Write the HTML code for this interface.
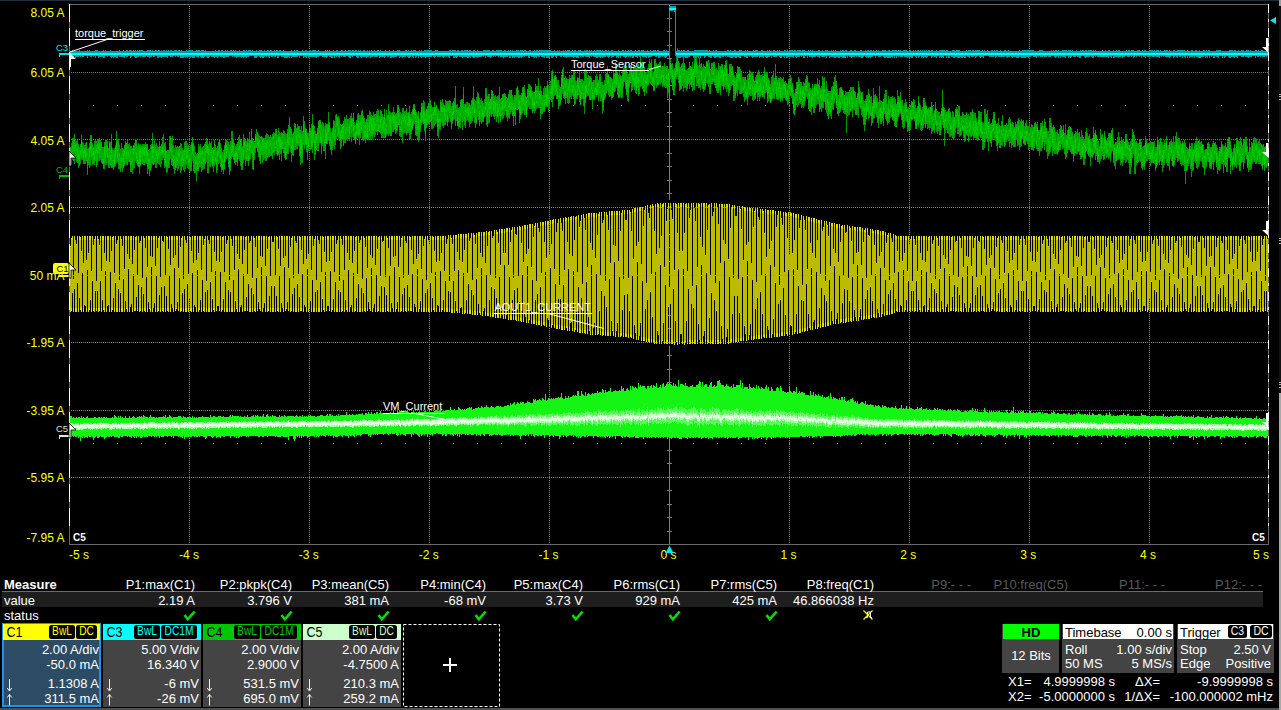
<!DOCTYPE html>
<html><head><meta charset="utf-8"><style>
html,body{margin:0;padding:0;background:#000;width:1281px;height:710px;overflow:hidden}
svg{position:absolute;left:0;top:0;display:block}
text{font-family:"Liberation Sans",sans-serif}
</style></head><body>
<svg width="1281" height="710" viewBox="0 0 1281 710">
<g shape-rendering="crispEdges">
<rect x="0" y="0" width="1281" height="1" fill="#1e2d3f"/>
<path d="M189.5 6V544M309.5 6V544M429.5 6V544M549.5 6V544M789.5 6V544M909.5 6V544M1029.5 6V544M1149.5 6V544M71 72.5H1268M71 139.5H1268M71 207.5H1268M71 275.5H1268M71 342.5H1268M71 410.5H1268M71 477.5H1268" stroke="#7a7a7a" stroke-width="1" stroke-dasharray="1 1" fill="none"/>
<path d="M93 105.5H1268M93 443.5H1268" stroke="#7a7a7a" stroke-width="1" stroke-dasharray="1 23" fill="none"/>
<path d="M669 4h1v196h-1zM669 346h1v198h-1zM667 18h5v1h-5zM667 31h5v1h-5zM667 45h5v1h-5zM667 58h5v1h-5zM667 72h5v1h-5zM667 85h5v1h-5zM667 99h5v1h-5zM667 112h5v1h-5zM667 126h5v1h-5zM667 139h5v1h-5zM667 153h5v1h-5zM667 166h5v1h-5zM667 180h5v1h-5zM667 193h5v1h-5zM667 207h5v1h-5zM667 220h5v1h-5zM667 234h5v1h-5zM667 247h5v1h-5zM667 261h5v1h-5zM667 274h5v1h-5zM667 288h5v1h-5zM667 301h5v1h-5zM667 315h5v1h-5zM667 328h5v1h-5zM667 342h5v1h-5zM667 355h5v1h-5zM667 369h5v1h-5zM667 382h5v1h-5zM667 396h5v1h-5zM667 409h5v1h-5zM667 423h5v1h-5zM667 436h5v1h-5zM667 450h5v1h-5zM667 463h5v1h-5zM667 477h5v1h-5zM667 490h5v1h-5zM667 504h5v1h-5zM667 517h5v1h-5zM667 531h5v1h-5z" fill="#7a7a7a"/>
<path d="M69 4h1200v1h-1200zM69 544h1200v1h-1200zM69 4h1v541h-1zM1268 4h1v541h-1z" fill="#6a6a6a"/>
<path d="M70.5 158v5M71.5 143v5M71.5 163v2M72.5 138v3M72.5 157v3M73.5 138v1M73.5 155v6M74.5 134v6M74.5 154v10M75.5 140v3M75.5 158v2M76.5 141v2M76.5 157v5M77.5 140v1M77.5 161v2M78.5 144v2M78.5 163v5M79.5 147v3M79.5 165v1M80.5 144v1M80.5 158v6M81.5 135v3M81.5 159v1M82.5 142v4M82.5 159v1M83.5 143v7M83.5 162v2M84.5 145v2M84.5 161v3M85.5 143v2M85.5 160v4M86.5 142v1M87.5 149v4M87.5 169v6M88.5 148v1M88.5 163v2M89.5 143v4M89.5 160v8M90.5 135v1M90.5 153v13M91.5 135v3M91.5 158v2M92.5 143v1M92.5 164v1M93.5 147v1M93.5 163v1M94.5 141v3M94.5 162v3M95.5 140v5M95.5 155v6M96.5 141v4M96.5 165v2M97.5 140v4M97.5 162v3M98.5 139v2M98.5 154v7M99.5 138v1M99.5 158v3M100.5 140v3M100.5 158v2M101.5 142v1M101.5 162v1M102.5 147v6M103.5 147v2M103.5 168v1M104.5 142v4M104.5 162v7M105.5 139v4M105.5 144v2M105.5 161v4M106.5 140v1M106.5 154v11M107.5 141v3M107.5 158v5M108.5 148v1M108.5 165v3M109.5 141v2M109.5 164v4M110.5 142v8M110.5 165v1M111.5 134v7M111.5 167v1M112.5 148v2M112.5 167v1M113.5 150v2M113.5 167v3M114.5 148v2M114.5 166v1M115.5 145v1M115.5 164v2M116.5 131v10M116.5 154v9M117.5 139v8M118.5 139v3M118.5 164v5M119.5 145v8M119.5 165v4M120.5 149v6M120.5 169v3M121.5 143v10M121.5 167v1M122.5 148v1M122.5 162v10M123.5 149v1M124.5 145v1M124.5 165v1M125.5 141v1M125.5 159v5M126.5 161v4M127.5 140v2M127.5 164v1M128.5 144v2M128.5 160v2M129.5 143v10M130.5 146v1M130.5 166v6M131.5 146v1M131.5 166v6M132.5 148v1M132.5 167v7M133.5 161v8M134.5 143v3M134.5 161v7M135.5 139v1M135.5 156v5M136.5 140v4M136.5 159v4M137.5 146v2M137.5 164v2M138.5 143v1M138.5 166v1M139.5 145v2M139.5 167v7M140.5 144v1M140.5 165v1M141.5 146v3M141.5 160v4M142.5 144v2M142.5 162v2M143.5 144v3M143.5 163v2M144.5 144v2M145.5 142v3M145.5 162v1M146.5 144v1M146.5 162v2M147.5 144v1M147.5 167v7M148.5 150v3M148.5 168v1M149.5 149v5M149.5 174v2M150.5 145v6M150.5 170v1M151.5 144v2M151.5 161v7M152.5 133v7M153.5 144v2M154.5 140v7M154.5 161v3M155.5 145v1M155.5 162v6M156.5 143v6M156.5 162v6M157.5 146v3M157.5 162v1M158.5 160v4M159.5 141v6M159.5 158v7M160.5 146v1M160.5 157v10M161.5 144v2M161.5 155v9M162.5 137v6M162.5 154v6M163.5 134v11M163.5 157v1M164.5 143v2M164.5 165v3M165.5 142v5M165.5 166v1M166.5 170v3M167.5 150v1M167.5 167v5M168.5 165v3M169.5 136v7M169.5 159v9M170.5 136v2M170.5 153v6M171.5 138v5M171.5 162v3M172.5 136v9M172.5 162v4M173.5 145v10M173.5 166v3M174.5 148v7M174.5 167v7M175.5 145v7M176.5 147v1M176.5 166v2M177.5 146v5M177.5 165v6M178.5 147v1M178.5 164v5M179.5 146v1M179.5 162v4M180.5 143v8M180.5 166v5M180.5 172v1M181.5 144v8M181.5 170v1M182.5 148v2M182.5 166v1M183.5 150v1M183.5 165v5M184.5 142v7M184.5 164v8M185.5 141v3M185.5 145v1M185.5 162v7M186.5 141v7M186.5 160v5M187.5 143v6M187.5 160v7M188.5 145v2M188.5 166v3M189.5 152v2M189.5 169v3M190.5 145v7M190.5 170v1M191.5 142v2M191.5 167v4M192.5 137v3M192.5 154v7M193.5 163v8M194.5 146v10M194.5 172v1M195.5 152v4M195.5 165v8M196.5 154v2M196.5 171v10M197.5 153v2M197.5 170v1M198.5 144v6M198.5 169v2M199.5 146v4M199.5 166v1M200.5 144v4M200.5 163v4M201.5 148v3M201.5 168v4M202.5 147v2M202.5 164v6M203.5 146v5M203.5 165v4M204.5 144v5M204.5 167v2M205.5 142v2M206.5 138v4M206.5 153v9M207.5 140v6M207.5 160v13M208.5 144v3M208.5 164v9M209.5 141v7M209.5 158v9M210.5 143v1M210.5 162v5M211.5 141v7M211.5 162v3M212.5 166v1M213.5 147v3M213.5 164v8M214.5 140v3M214.5 162v4M215.5 145v3M216.5 148v3M216.5 172v1M217.5 146v5M217.5 162v8M218.5 142v1M218.5 156v8M219.5 158v5M220.5 143v7M220.5 160v5M220.5 166v1M221.5 168v4M222.5 152v6M223.5 150v5M223.5 172v2M224.5 145v2M225.5 140v2M225.5 161v1M226.5 140v4M226.5 157v2M227.5 141v3M227.5 153v5M228.5 142v7M228.5 164v3M229.5 145v7M229.5 171v4M230.5 141v5M230.5 168v3M231.5 131v12M231.5 156v3M232.5 131v8M232.5 155v2M233.5 159v1M234.5 143v9M234.5 162v1M235.5 146v2M235.5 163v2M236.5 144v3M237.5 142v2M237.5 163v3M238.5 137v5M238.5 153v6M239.5 135v8M239.5 155v6M240.5 162v4M241.5 140v7M241.5 166v4M242.5 146v1M242.5 167v3M243.5 134v6M243.5 161v2M244.5 154v6M245.5 139v2M245.5 159v7M246.5 141v4M246.5 160v1M247.5 159v2M248.5 139v4M248.5 162v4M249.5 132v7M249.5 159v2M250.5 140v1M250.5 153v6M251.5 129v3M251.5 153v1M252.5 138v2M252.5 157v12M253.5 141v1M253.5 169v1M254.5 153v7M255.5 148v5M256.5 129v8M256.5 147v1M257.5 132v1M257.5 151v1M258.5 134v3M258.5 155v2M259.5 136v4M259.5 158v3M260.5 137v6M260.5 162v2M261.5 136v1M261.5 154v1M262.5 137v1M262.5 155v8M263.5 138v1M263.5 157v3M264.5 138v3M264.5 154v5M265.5 135v3M265.5 158v3M266.5 133v7M266.5 158v3M267.5 134v6M267.5 149v9M268.5 135v7M268.5 155v2M269.5 137v1M269.5 155v2M270.5 135v2M270.5 149v7M271.5 137v4M271.5 155v1M272.5 134v3M272.5 154v5M273.5 132v2M273.5 152v1M274.5 133v3M274.5 152v3M275.5 129v3M275.5 149v2M276.5 129v2M276.5 151v3M277.5 135v3M278.5 128v8M278.5 153v2M279.5 132v4M279.5 153v7M280.5 133v4M280.5 150v4M281.5 132v2M281.5 153v8M282.5 133v1M283.5 130v4M283.5 146v7M284.5 131v6M284.5 153v5M285.5 133v5M285.5 159v1M286.5 134v5M286.5 155v4M287.5 129v3M287.5 153v1M288.5 125v6M288.5 145v9M289.5 117v10M289.5 146v2M290.5 127v1M290.5 149v3M291.5 129v1M291.5 153v9M292.5 134v3M293.5 132v1M293.5 152v4M294.5 123v6M294.5 142v8M295.5 147v3M296.5 128v1M296.5 145v4M297.5 124v4M297.5 143v6M298.5 126v1M298.5 143v3M299.5 126v4M299.5 146v10M300.5 130v3M300.5 157v8M301.5 126v13M301.5 158v5M302.5 131v3M302.5 154v9M303.5 116v4M303.5 121v3M303.5 144v1M304.5 121v5M304.5 143v1M304.5 145v4M305.5 144v1M306.5 129v1M306.5 145v7M307.5 133v1M307.5 154v6M308.5 133v4M308.5 147v4M309.5 124v1M309.5 142v4M310.5 128v2M310.5 142v8M311.5 124v8M311.5 148v1M312.5 114v9M312.5 147v6M313.5 142v1M314.5 126v12M314.5 150v10M315.5 131v3M315.5 151v4M316.5 143v7M317.5 145v6M318.5 121v1M318.5 146v5M319.5 134v9M320.5 120v2M321.5 124v2M321.5 148v6M322.5 122v7M322.5 144v2M323.5 123v3M323.5 142v9M324.5 126v9M324.5 148v3M325.5 123v3M325.5 146v13M327.5 124v1M327.5 142v2M328.5 112v11M328.5 139v2M329.5 122v1M329.5 144v2M330.5 128v5M330.5 149v1M331.5 132v5M331.5 151v4M332.5 128v2M332.5 143v7M333.5 120v2M333.5 137v9M334.5 121v9M334.5 141v8M335.5 115v10M335.5 139v6M336.5 114v1M336.5 128v11M338.5 116v6M338.5 137v2M339.5 118v3M339.5 138v3M340.5 124v6M340.5 140v9M341.5 143v4M342.5 124v1M342.5 139v1M343.5 121v2M343.5 145v1M344.5 117v7M344.5 139v4M345.5 140v3M346.5 115v7M346.5 137v3M347.5 119v1M347.5 132v9M348.5 119v5M349.5 118v3M349.5 139v2M350.5 116v4M350.5 130v7M351.5 113v6M351.5 133v9M352.5 118v1M352.5 131v6M353.5 113v1M353.5 136v2M354.5 122v2M354.5 139v1M355.5 125v6M355.5 142v2M356.5 120v2M356.5 136v3M357.5 114v5M357.5 135v2M358.5 113v3M358.5 136v2M359.5 115v7M359.5 136v9M360.5 115v4M361.5 111v2M361.5 131v2M362.5 110v1M362.5 131v9M363.5 116v4M363.5 140v1M364.5 118v2M364.5 138v2M365.5 139v4M366.5 119v1M367.5 115v4M367.5 138v1M368.5 115v5M368.5 139v1M369.5 111v6M369.5 132v6M370.5 112v5M370.5 137v3M371.5 115v2M371.5 134v2M372.5 116v1M372.5 136v3M373.5 112v4M373.5 134v1M374.5 114v4M374.5 133v4M375.5 114v3M375.5 131v4M376.5 111v4M376.5 131v1M377.5 109v6M377.5 132v3M378.5 110v5M379.5 116v8M379.5 130v2M380.5 110v8M380.5 133v1M381.5 135v3M382.5 114v2M382.5 133v5M383.5 117v1M383.5 134v4M384.5 109v5M384.5 134v4M385.5 118v5M386.5 110v13M386.5 134v2M387.5 126v8M388.5 104v10M388.5 133v3M389.5 111v6M389.5 130v4M390.5 112v3M391.5 113v2M392.5 112v1M392.5 124v8M393.5 107v5M393.5 130v2M394.5 112v4M394.5 129v1M395.5 114v1M395.5 129v5M396.5 113v1M396.5 131v2M397.5 105v3M397.5 130v1M398.5 105v2M399.5 109v8M399.5 129v7M400.5 112v4M400.5 132v5M401.5 132v5M402.5 108v5M402.5 133v10M403.5 108v6M403.5 129v5M404.5 111v2M404.5 129v4M405.5 111v3M405.5 131v2M406.5 108v4M406.5 133v2M407.5 113v3M407.5 131v2M408.5 112v1M408.5 130v3M409.5 106v7M409.5 130v9M410.5 114v2M410.5 134v5M411.5 112v7M411.5 131v3M412.5 109v2M412.5 129v1M413.5 104v1M413.5 125v1M414.5 104v2M414.5 118v6M415.5 128v7M416.5 112v1M416.5 134v2M417.5 114v3M417.5 136v3M418.5 111v5M418.5 134v8M419.5 119v3M419.5 137v2M420.5 112v1M420.5 130v2M421.5 103v4M421.5 122v3M422.5 103v4M422.5 122v1M423.5 100v6M424.5 102v6M424.5 130v1M425.5 111v7M425.5 133v8M427.5 123v2M428.5 103v1M429.5 98v5M429.5 124v1M430.5 100v4M430.5 121v1M431.5 105v2M431.5 125v4M432.5 107v1M432.5 119v10M433.5 107v1M433.5 125v3M434.5 105v2M434.5 120v6M436.5 121v2M437.5 108v4M437.5 127v9M438.5 109v1M438.5 132v6M439.5 111v6M439.5 126v3M440.5 100v2M440.5 125v5M441.5 102v2M441.5 120v3M442.5 99v7M442.5 122v4M443.5 103v1M443.5 126v2M444.5 105v2M444.5 122v3M445.5 100v6M445.5 124v1M446.5 101v3M446.5 121v1M448.5 102v2M448.5 112v10M449.5 100v1M449.5 117v1M450.5 101v7M450.5 121v1M451.5 106v2M451.5 128v1M452.5 103v3M452.5 121v3M453.5 101v1M453.5 118v2M454.5 98v4M454.5 112v7M455.5 86v12M455.5 121v5M456.5 105v4M456.5 115v6M457.5 104v5M458.5 108v2M458.5 127v2M459.5 107v1M459.5 124v3M460.5 100v2M460.5 120v8M461.5 99v1M461.5 114v8M462.5 99v2M462.5 120v10M463.5 87v8M463.5 120v1M464.5 104v3M464.5 120v5M465.5 126v2M466.5 102v6M466.5 117v4M467.5 102v6M467.5 118v2M468.5 103v3M468.5 121v1M469.5 103v1M469.5 120v7M470.5 105v2M470.5 121v3M471.5 100v4M471.5 116v7M472.5 98v2M472.5 115v6M473.5 86v10M473.5 114v4M474.5 99v5M474.5 118v5M475.5 101v2M475.5 122v6M476.5 97v13M476.5 123v1M477.5 92v9M477.5 112v5M478.5 93v3M478.5 116v4M479.5 98v5M479.5 125v1M480.5 100v5M480.5 119v3M481.5 98v3M481.5 117v7M482.5 101v2M482.5 121v1M483.5 103v3M483.5 121v1M484.5 99v7M485.5 88v6M485.5 112v4M486.5 88v7M486.5 115v10M487.5 96v4M487.5 125v2M488.5 94v2M488.5 113v10M489.5 94v5M489.5 120v3M490.5 113v2M491.5 116v1M493.5 94v5M493.5 116v1M494.5 96v2M494.5 116v3M495.5 95v6M496.5 97v3M496.5 116v6M497.5 96v6M497.5 117v1M498.5 95v2M498.5 116v7M499.5 87v12M500.5 99v4M500.5 121v1M501.5 116v1M502.5 94v1M502.5 115v4M503.5 109v9M504.5 93v2M504.5 110v5M505.5 94v2M505.5 110v1M506.5 97v3M506.5 115v2M507.5 116v5M508.5 94v1M508.5 115v3M509.5 110v9M510.5 90v4M510.5 110v4M511.5 111v1M512.5 95v3M512.5 115v1M513.5 100v1M513.5 118v8M514.5 95v2M515.5 95v2M515.5 117v8M516.5 88v1M516.5 107v3M517.5 86v1M517.5 102v8M518.5 90v5M519.5 95v1M519.5 113v3M519.5 117v6M520.5 95v2M520.5 116v3M521.5 93v2M521.5 113v2M522.5 87v2M522.5 112v1M523.5 87v1M523.5 107v4M524.5 85v4M524.5 113v2M525.5 93v3M525.5 110v5M527.5 89v2M527.5 107v3M528.5 84v6M528.5 104v3M529.5 84v4M529.5 89v1M529.5 96v13M530.5 85v2M530.5 99v10M531.5 108v1M532.5 91v1M532.5 111v2M533.5 92v2M533.5 108v3M534.5 111v2M535.5 84v4M535.5 108v3M536.5 86v4M536.5 104v5M537.5 86v4M537.5 105v3M538.5 78v8M538.5 87v1M538.5 106v2M539.5 102v6M540.5 86v5M540.5 113v6M541.5 111v3M542.5 113v1M543.5 88v4M543.5 111v1M544.5 86v8M544.5 110v2M545.5 106v1M546.5 86v2M546.5 106v1M547.5 81v4M548.5 85v5M548.5 103v9M549.5 87v2M549.5 104v5M550.5 81v7M550.5 96v4M551.5 71v8M551.5 100v2M552.5 70v1M552.5 99v8M553.5 79v1M554.5 76v1M554.5 92v4M555.5 94v1M556.5 77v5M556.5 98v1M557.5 80v4M558.5 80v13M558.5 104v5M559.5 85v4M559.5 105v1M560.5 103v2M561.5 75v3M561.5 95v5M562.5 69v1M562.5 89v5M563.5 67v15M563.5 94v4M564.5 96v3M565.5 76v4M565.5 98v6M566.5 95v3M567.5 79v6M567.5 99v4M568.5 79v4M568.5 92v12M569.5 75v3M569.5 98v5M570.5 78v1M570.5 95v2M571.5 75v3M571.5 93v6M572.5 75v1M572.5 94v2M573.5 70v8M573.5 97v2M574.5 70v7M574.5 104v1M575.5 80v2M575.5 98v6M576.5 81v4M576.5 97v2M577.5 77v1M577.5 96v3M578.5 78v3M578.5 90v5M579.5 71v5M579.5 97v5M580.5 79v1M581.5 79v10M581.5 98v1M582.5 79v2M582.5 97v2M583.5 81v2M583.5 99v7M584.5 69v12M584.5 106v8M585.5 69v6M585.5 102v1M586.5 70v9M586.5 94v3M587.5 94v2M588.5 95v1M589.5 76v3M589.5 98v2M590.5 76v1M591.5 78v4M591.5 96v4M592.5 82v1M592.5 99v10M593.5 80v2M593.5 99v1M594.5 80v7M594.5 99v1M595.5 76v3M595.5 92v3M596.5 74v7M596.5 95v2M597.5 76v3M598.5 80v1M598.5 99v2M599.5 74v3M599.5 94v2M600.5 74v3M600.5 94v7M601.5 82v7M601.5 98v3M602.5 82v3M602.5 108v6M603.5 85v1M603.5 104v2M603.5 107v4M604.5 80v5M604.5 98v2M605.5 74v10M605.5 96v2M606.5 73v2M606.5 93v1M607.5 66v6M607.5 86v5M608.5 74v1M608.5 92v3M609.5 77v2M609.5 96v1M610.5 95v1M611.5 78v1M611.5 98v2M612.5 79v3M612.5 97v1M613.5 70v4M613.5 92v5M614.5 73v1M615.5 62v3M615.5 87v4M616.5 65v2M616.5 87v1M617.5 72v1M617.5 91v4M618.5 75v5M618.5 97v1M619.5 71v5M619.5 96v2M620.5 75v1M620.5 91v6M621.5 76v3M621.5 95v3M622.5 71v4M622.5 93v5M623.5 68v3M623.5 84v3M624.5 65v1M624.5 80v2M625.5 64v3M625.5 85v4M626.5 66v3M626.5 92v3M627.5 73v4M627.5 97v4M628.5 74v3M628.5 93v9M629.5 71v2M629.5 87v1M630.5 65v1M631.5 63v6M631.5 83v3M631.5 87v5M632.5 70v3M632.5 86v4M633.5 66v3M633.5 82v5M634.5 68v4M634.5 86v4M635.5 66v4M635.5 88v5M636.5 91v3M637.5 68v1M637.5 85v3M638.5 64v13M638.5 94v2M639.5 68v4M639.5 90v4M640.5 56v11M640.5 85v2M641.5 62v2M641.5 85v1M642.5 62v2M642.5 88v1M643.5 69v8M643.5 88v4M644.5 67v1M644.5 92v4M645.5 73v1M645.5 84v7M646.5 72v3M646.5 88v5M647.5 68v6M647.5 85v1M648.5 64v4M648.5 84v1M649.5 59v3M649.5 79v4M650.5 63v1M650.5 80v4M651.5 59v3M651.5 82v3M652.5 69v6M653.5 72v1M653.5 90v1M654.5 59v1M654.5 89v2M655.5 59v6M655.5 80v5M656.5 63v1M656.5 83v5M657.5 65v1M657.5 85v1M659.5 62v6M659.5 82v2M660.5 61v5M660.5 81v4M661.5 66v5M661.5 82v1M662.5 77v10M663.5 66v2M663.5 84v2M664.5 63v4M664.5 85v2M665.5 67v9M665.5 84v4M666.5 66v2M666.5 87v1M667.5 90v8M668.5 87v6M669.5 60v5M669.5 75v4M670.5 59v2M670.5 75v4M671.5 64v1M671.5 78v5M672.5 63v6M672.5 87v3M673.5 69v2M673.5 91v4M674.5 68v1M674.5 88v7M675.5 63v2M675.5 78v8M676.5 57v5M676.5 75v4M677.5 48v4M677.5 75v2M678.5 61v1M678.5 79v4M679.5 63v4M679.5 86v5M680.5 67v1M680.5 89v1M681.5 64v1M681.5 84v1M681.5 88v1M682.5 63v4M682.5 82v4M683.5 55v10M683.5 83v9M684.5 63v1M684.5 83v5M685.5 87v1M686.5 70v1M686.5 88v3M687.5 69v2M687.5 87v2M689.5 62v10M689.5 82v7M690.5 84v1M691.5 67v1M691.5 86v1M692.5 62v8M692.5 82v9M693.5 85v5M694.5 55v1M694.5 57v4M694.5 86v4M695.5 50v8M696.5 50v11M696.5 80v6M697.5 65v1M697.5 83v3M698.5 66v3M698.5 84v4M699.5 58v7M699.5 86v2M700.5 64v6M700.5 81v9M701.5 63v1M701.5 81v4M702.5 67v2M702.5 85v4M703.5 64v3M703.5 90v2M704.5 66v1M705.5 87v2M706.5 61v1M706.5 78v5M707.5 61v2M707.5 77v7M708.5 60v6M708.5 82v5M709.5 63v2M709.5 83v11M710.5 69v5M710.5 90v4M712.5 63v4M712.5 82v2M713.5 62v2M713.5 81v1M714.5 62v2M714.5 82v3M715.5 69v7M716.5 68v4M716.5 90v1M717.5 70v5M717.5 89v4M718.5 63v8M718.5 91v2M719.5 66v4M719.5 85v5M720.5 66v1M720.5 92v3M721.5 64v2M721.5 85v1M722.5 64v1M722.5 84v2M723.5 69v4M723.5 89v1M724.5 65v2M724.5 85v2M725.5 61v4M725.5 85v4M726.5 60v4M726.5 85v7M727.5 69v4M727.5 86v3M728.5 74v7M728.5 91v5M729.5 64v2M729.5 91v2M730.5 64v3M730.5 83v7M731.5 64v5M731.5 85v1M732.5 66v1M733.5 71v4M733.5 90v11M734.5 75v1M734.5 94v7M735.5 96v2M736.5 73v2M736.5 90v3M737.5 66v4M737.5 89v7M738.5 81v9M739.5 67v5M739.5 82v12M740.5 69v4M741.5 71v7M741.5 93v1M742.5 77v8M742.5 92v1M743.5 77v2M743.5 90v7M744.5 77v2M744.5 97v5M745.5 97v3M746.5 80v6M746.5 97v2M747.5 75v5M747.5 98v7M748.5 74v5M748.5 93v4M749.5 70v3M749.5 94v1M750.5 71v4M750.5 92v4M751.5 72v2M751.5 87v9M752.5 72v2M752.5 95v5M753.5 76v1M753.5 96v5M754.5 97v3M755.5 77v4M755.5 98v1M756.5 75v4M756.5 92v1M757.5 72v3M757.5 95v6M758.5 70v5M758.5 95v2M759.5 73v2M759.5 97v4M760.5 75v3M760.5 96v1M761.5 75v3M762.5 74v2M762.5 95v2M763.5 76v3M763.5 92v5M764.5 67v4M764.5 93v6M765.5 72v2M766.5 72v2M766.5 90v2M767.5 72v3M767.5 99v4M768.5 93v8M769.5 80v1M769.5 98v1M770.5 84v3M771.5 77v5M771.5 100v2M772.5 75v7M772.5 98v1M773.5 71v10M773.5 95v3M774.5 78v2M774.5 96v3M775.5 64v10M775.5 93v1M776.5 76v2M776.5 97v2M777.5 80v2M777.5 99v1M778.5 78v4M778.5 99v1M779.5 78v1M779.5 96v2M780.5 77v5M780.5 99v3M781.5 78v2M781.5 98v2M782.5 79v1M782.5 98v3M783.5 77v5M783.5 94v4M784.5 82v1M785.5 81v2M785.5 97v3M786.5 83v7M786.5 100v1M787.5 84v5M787.5 100v5M788.5 79v5M788.5 99v5M789.5 78v1M789.5 93v4M790.5 75v4M790.5 95v1M791.5 78v8M791.5 96v2M792.5 83v1M793.5 90v5M793.5 108v6M794.5 93v2M794.5 114v1M795.5 89v2M796.5 82v7M796.5 100v5M797.5 100v7M798.5 77v3M798.5 94v11M799.5 79v5M799.5 100v3M800.5 82v6M800.5 101v3M801.5 82v2M801.5 101v7M802.5 105v2M803.5 82v5M803.5 101v7M804.5 83v3M804.5 102v4M805.5 79v3M805.5 95v6M806.5 75v2M806.5 92v5M807.5 76v2M807.5 97v2M808.5 82v8M808.5 106v3M809.5 83v5M810.5 88v2M810.5 108v4M811.5 89v3M811.5 106v9M812.5 84v2M813.5 88v1M813.5 109v4M814.5 84v1M814.5 107v6M815.5 84v4M815.5 101v7M816.5 84v1M816.5 99v6M817.5 78v6M817.5 99v5M818.5 84v1M818.5 101v3M819.5 80v6M819.5 110v2M820.5 88v1M820.5 107v2M821.5 86v4M821.5 107v1M821.5 109v3M822.5 76v6M822.5 107v1M823.5 78v5M823.5 102v6M824.5 77v5M824.5 101v1M825.5 89v5M825.5 107v3M826.5 81v6M826.5 108v5M827.5 89v4M827.5 110v6M828.5 91v2M828.5 116v3M829.5 91v4M829.5 110v4M830.5 91v2M830.5 113v3M831.5 87v3M831.5 112v7M832.5 86v4M832.5 107v2M833.5 82v4M833.5 95v15M834.5 77v5M835.5 75v6M835.5 97v2M836.5 81v4M836.5 106v2M837.5 89v5M838.5 95v5M838.5 114v2M839.5 88v4M840.5 87v1M840.5 109v3M841.5 87v1M841.5 104v4M842.5 90v1M842.5 106v4M843.5 110v3M844.5 111v3M845.5 91v6M845.5 112v2M846.5 92v4M846.5 113v20M847.5 92v3M847.5 113v3M848.5 92v1M848.5 107v8M849.5 90v2M849.5 111v4M850.5 87v5M850.5 111v1M851.5 87v4M851.5 107v4M852.5 87v9M852.5 109v8M853.5 87v2M853.5 104v6M854.5 108v2M855.5 92v1M855.5 94v1M855.5 113v2M856.5 114v1M857.5 93v2M857.5 110v5M858.5 81v7M858.5 103v15M859.5 87v1M859.5 104v3M860.5 91v4M860.5 108v1M861.5 110v5M862.5 92v4M862.5 113v4M863.5 100v6M863.5 117v2M863.5 120v5M864.5 101v3M864.5 124v7M865.5 99v2M865.5 121v4M866.5 95v6M866.5 115v4M867.5 95v2M868.5 89v5M868.5 115v4M869.5 115v3M870.5 97v5M870.5 114v2M871.5 96v6M871.5 119v7M872.5 103v3M873.5 88v10M873.5 118v1M874.5 95v4M874.5 112v6M875.5 94v2M875.5 111v3M876.5 96v4M876.5 113v4M877.5 98v5M877.5 122v1M878.5 102v7M878.5 121v7M879.5 86v15M879.5 117v2M880.5 100v7M880.5 122v2M881.5 101v3M881.5 122v2M882.5 118v3M883.5 99v1M883.5 120v6M884.5 94v5M884.5 112v2M885.5 90v8M885.5 117v2M886.5 90v14M886.5 120v1M887.5 104v3M887.5 123v2M888.5 96v4M888.5 119v4M889.5 99v10M889.5 119v3M890.5 97v4M890.5 112v6M891.5 97v2M891.5 116v1M892.5 96v2M892.5 119v1M893.5 98v6M893.5 120v1M894.5 97v6M894.5 121v5M895.5 99v2M895.5 102v1M897.5 90v12M897.5 120v2M898.5 96v2M898.5 116v1M899.5 97v2M899.5 112v2M900.5 92v9M900.5 111v3M901.5 100v6M901.5 116v4M902.5 100v3M902.5 124v3M903.5 106v3M903.5 122v7M904.5 103v5M904.5 116v12M905.5 99v4M905.5 114v7M906.5 102v3M906.5 120v2M907.5 109v1M907.5 128v4M908.5 107v4M908.5 127v4M909.5 109v1M910.5 105v5M910.5 127v3M911.5 120v1M912.5 119v1M913.5 99v1M913.5 118v1M914.5 100v8M914.5 119v2M915.5 105v6M915.5 126v3M916.5 108v3M916.5 128v1M917.5 106v2M917.5 121v4M918.5 96v5M918.5 124v3M919.5 103v1M920.5 105v3M920.5 125v5M921.5 126v5M922.5 107v3M922.5 128v2M923.5 98v2M923.5 125v3M924.5 98v7M924.5 117v7M925.5 102v2M925.5 127v1M926.5 122v2M927.5 124v5M928.5 108v1M928.5 123v5M929.5 107v4M929.5 125v2M929.5 128v2M930.5 123v5M931.5 102v1M931.5 124v4M931.5 129v5M932.5 106v10M932.5 130v2M933.5 113v1M933.5 129v1M934.5 110v1M934.5 130v3M935.5 102v5M935.5 124v1M936.5 109v9M936.5 126v6M937.5 111v4M937.5 131v3M938.5 112v4M938.5 129v2M939.5 112v4M939.5 129v6M940.5 114v4M941.5 108v3M941.5 119v11M942.5 90v11M942.5 119v6M943.5 107v1M944.5 108v2M944.5 130v16M945.5 110v4M945.5 122v11M946.5 127v3M947.5 111v2M947.5 130v3M948.5 123v11M949.5 108v4M949.5 129v8M950.5 112v1M950.5 131v6M951.5 117v6M951.5 135v1M952.5 111v6M952.5 135v2M953.5 112v5M953.5 136v3M954.5 131v7M955.5 129v4M956.5 107v2M956.5 124v4M957.5 109v3M957.5 127v5M957.5 133v1M958.5 106v8M958.5 128v6M959.5 106v6M959.5 132v5M960.5 116v7M960.5 135v1M961.5 116v1M961.5 129v6M962.5 112v1M962.5 130v1M963.5 114v7M963.5 132v3M963.5 136v2M964.5 115v3M964.5 138v4M965.5 115v3M965.5 140v1M966.5 112v1M966.5 134v1M967.5 115v3M967.5 134v2M968.5 114v5M968.5 140v2M969.5 116v4M969.5 135v1M970.5 112v3M970.5 135v2M971.5 112v1M971.5 131v3M971.5 136v1M972.5 109v2M972.5 134v2M973.5 112v9M973.5 136v3M974.5 113v6M974.5 137v1M975.5 113v3M975.5 137v1M976.5 118v4M976.5 138v2M977.5 122v5M977.5 139v2M978.5 111v5M978.5 136v4M979.5 111v3M979.5 130v6M980.5 112v5M980.5 137v1M981.5 112v8M981.5 137v1M982.5 122v4M982.5 140v10M983.5 123v5M983.5 142v1M983.5 144v6M984.5 109v12M984.5 142v6M985.5 109v6M985.5 138v4M986.5 114v3M986.5 137v2M987.5 110v10M987.5 141v1M988.5 139v12M989.5 119v6M989.5 138v3M990.5 124v1M990.5 141v2M991.5 123v2M991.5 144v3M992.5 119v1M992.5 133v7M993.5 112v4M993.5 131v7M994.5 112v2M994.5 135v1M994.5 137v3M995.5 120v1M995.5 137v4M996.5 143v3M997.5 123v4M997.5 146v5M998.5 118v8M998.5 142v1M999.5 125v1M999.5 142v6M1000.5 126v3M1001.5 121v5M1001.5 140v5M1002.5 115v7M1002.5 139v7M1003.5 126v2M1003.5 138v4M1004.5 125v4M1004.5 145v2M1005.5 140v5M1006.5 123v3M1006.5 139v3M1007.5 125v3M1007.5 139v1M1008.5 119v10M1008.5 137v4M1009.5 117v11M1009.5 140v7M1010.5 119v3M1010.5 136v7M1011.5 124v4M1011.5 146v2M1012.5 122v2M1012.5 142v3M1013.5 123v5M1013.5 144v3M1014.5 127v1M1014.5 146v1M1015.5 122v4M1015.5 140v7M1016.5 124v2M1016.5 134v6M1017.5 121v1M1017.5 143v3M1018.5 118v1M1018.5 136v9M1019.5 120v6M1019.5 145v5M1020.5 121v7M1020.5 143v4M1021.5 119v3M1021.5 138v8M1022.5 121v1M1022.5 137v2M1023.5 120v1M1023.5 143v1M1024.5 126v4M1024.5 144v1M1025.5 123v1M1026.5 120v6M1027.5 126v2M1027.5 142v2M1028.5 126v7M1028.5 146v4M1029.5 123v10M1029.5 141v5M1030.5 127v2M1030.5 146v1M1031.5 124v1M1031.5 126v2M1032.5 125v4M1032.5 147v3M1033.5 148v3M1034.5 124v2M1034.5 142v6M1035.5 133v11M1036.5 124v3M1036.5 148v1M1037.5 122v4M1037.5 142v9M1038.5 130v1M1038.5 149v2M1039.5 130v2M1039.5 151v5M1040.5 123v5M1040.5 141v10M1041.5 123v3M1041.5 142v9M1042.5 121v5M1042.5 146v2M1043.5 126v5M1044.5 119v6M1044.5 142v8M1045.5 122v5M1045.5 143v1M1046.5 144v8M1047.5 131v3M1047.5 151v8M1048.5 131v6M1048.5 152v4M1049.5 118v16M1049.5 153v1M1050.5 118v7M1050.5 150v2M1051.5 123v5M1051.5 146v1M1052.5 127v2M1052.5 153v3M1053.5 125v2M1053.5 148v3M1054.5 127v3M1054.5 149v5M1055.5 132v2M1055.5 150v4M1056.5 132v10M1056.5 151v3M1057.5 130v3M1057.5 154v1M1058.5 134v1M1058.5 151v1M1059.5 129v9M1060.5 125v5M1060.5 148v2M1062.5 145v4M1063.5 125v4M1063.5 143v5M1064.5 133v4M1064.5 147v7M1065.5 124v9M1065.5 154v5M1066.5 135v1M1067.5 130v4M1067.5 146v7M1068.5 127v2M1068.5 149v1M1069.5 126v3M1069.5 147v3M1070.5 146v6M1071.5 128v7M1071.5 153v1M1072.5 132v1M1072.5 153v1M1073.5 136v5M1073.5 156v6M1074.5 134v1M1074.5 154v2M1075.5 131v2M1076.5 132v6M1076.5 150v4M1077.5 129v2M1077.5 151v3M1078.5 133v5M1079.5 151v4M1080.5 137v3M1080.5 155v4M1081.5 130v9M1081.5 157v2M1082.5 135v6M1082.5 156v1M1083.5 137v3M1083.5 158v7M1084.5 139v2M1084.5 159v6M1085.5 132v5M1085.5 158v1M1086.5 128v3M1087.5 133v5M1087.5 149v5M1088.5 136v2M1088.5 155v1M1089.5 134v2M1089.5 155v2M1090.5 139v3M1090.5 158v8M1091.5 139v3M1092.5 138v10M1092.5 155v3M1093.5 127v8M1094.5 133v2M1095.5 130v2M1095.5 151v9M1096.5 154v2M1097.5 140v5M1097.5 160v2M1098.5 141v8M1098.5 159v3M1099.5 146v1M1099.5 159v5M1100.5 129v11M1100.5 141v2M1100.5 156v5M1101.5 135v2M1101.5 151v8M1102.5 134v2M1102.5 137v1M1102.5 151v5M1103.5 138v4M1103.5 159v1M1104.5 131v3M1105.5 137v2M1105.5 148v8M1106.5 140v1M1106.5 154v4M1107.5 138v4M1107.5 153v4M1108.5 133v4M1108.5 158v1M1109.5 133v1M1109.5 151v6M1110.5 133v3M1110.5 156v5M1111.5 130v1M1111.5 132v2M1111.5 152v1M1112.5 128v2M1112.5 150v1M1113.5 138v7M1113.5 159v4M1114.5 144v1M1114.5 158v8M1115.5 142v1M1115.5 162v3M1115.5 166v3M1116.5 142v2M1117.5 137v4M1117.5 154v6M1118.5 132v11M1118.5 158v2M1119.5 137v2M1119.5 140v1M1119.5 155v4M1120.5 141v3M1120.5 160v5M1121.5 137v3M1121.5 162v1M1122.5 140v1M1122.5 163v3M1123.5 140v4M1123.5 158v4M1124.5 156v4M1125.5 134v2M1125.5 157v6M1126.5 134v6M1126.5 157v5M1127.5 139v2M1127.5 159v1M1128.5 142v6M1128.5 160v3M1129.5 163v11M1130.5 141v7M1130.5 165v9M1131.5 140v3M1131.5 163v4M1132.5 129v5M1132.5 149v9M1133.5 132v2M1133.5 152v2M1134.5 135v4M1134.5 156v18M1135.5 142v1M1135.5 160v14M1136.5 162v3M1137.5 143v6M1138.5 143v3M1138.5 161v1M1139.5 150v11M1140.5 139v1M1140.5 161v1M1141.5 142v8M1141.5 164v4M1142.5 147v4M1142.5 168v2M1143.5 146v4M1143.5 165v2M1144.5 145v1M1144.5 166v4M1145.5 136v5M1145.5 158v5M1146.5 139v2M1146.5 156v5M1147.5 143v1M1147.5 155v6M1149.5 142v2M1149.5 159v2M1150.5 141v5M1150.5 160v6M1151.5 142v2M1152.5 142v1M1152.5 162v1M1153.5 142v1M1154.5 141v11M1154.5 162v2M1155.5 147v4M1155.5 169v2M1156.5 147v1M1156.5 167v1M1157.5 137v3M1157.5 159v6M1158.5 140v4M1158.5 158v5M1159.5 142v2M1159.5 162v3M1160.5 138v1M1161.5 142v2M1161.5 161v4M1162.5 142v4M1162.5 163v9M1163.5 145v5M1163.5 160v8M1164.5 140v3M1164.5 160v5M1165.5 154v5M1166.5 136v5M1166.5 161v2M1167.5 145v6M1167.5 163v1M1167.5 165v1M1168.5 145v3M1168.5 163v3M1169.5 142v1M1169.5 163v4M1169.5 168v3M1170.5 141v4M1170.5 156v3M1171.5 139v3M1171.5 154v7M1172.5 142v2M1173.5 136v13M1173.5 165v2M1174.5 142v3M1174.5 162v3M1175.5 136v1M1175.5 138v5M1175.5 155v5M1176.5 132v6M1176.5 153v5M1177.5 140v5M1177.5 158v4M1178.5 138v5M1178.5 159v2M1179.5 138v8M1179.5 159v1M1180.5 141v2M1180.5 162v2M1181.5 160v6M1182.5 141v2M1182.5 161v4M1183.5 143v1M1183.5 163v2M1184.5 140v4M1184.5 164v7M1185.5 143v5M1185.5 171v13M1186.5 147v8M1187.5 148v2M1187.5 163v7M1188.5 149v1M1188.5 160v6M1189.5 143v1M1189.5 157v7M1190.5 146v3M1190.5 160v9M1191.5 143v5M1191.5 167v10M1192.5 143v6M1192.5 170v1M1193.5 149v1M1193.5 163v7M1194.5 143v3M1194.5 156v5M1195.5 141v3M1195.5 161v2M1196.5 137v7M1196.5 162v6M1197.5 141v2M1197.5 161v8M1198.5 161v6M1199.5 139v2M1199.5 160v4M1200.5 142v5M1200.5 157v4M1201.5 141v2M1201.5 153v9M1202.5 144v1M1202.5 164v3M1203.5 145v6M1203.5 165v3M1204.5 150v4M1204.5 169v6M1205.5 149v1M1205.5 164v5M1206.5 149v1M1206.5 166v1M1207.5 143v1M1207.5 158v3M1208.5 142v2M1208.5 160v2M1209.5 144v3M1209.5 165v3M1210.5 147v2M1210.5 166v3M1211.5 147v1M1211.5 167v2M1212.5 143v2M1212.5 161v3M1213.5 141v2M1213.5 162v8M1214.5 143v1M1214.5 160v2M1215.5 142v2M1215.5 154v6M1216.5 145v2M1216.5 165v2M1217.5 148v5M1217.5 163v11M1218.5 151v7M1218.5 169v1M1219.5 147v4M1219.5 168v3M1220.5 147v2M1220.5 161v8M1221.5 141v1M1221.5 162v2M1222.5 144v3M1222.5 161v3M1223.5 146v5M1223.5 163v3M1223.5 167v6M1224.5 146v5M1224.5 162v3M1225.5 143v3M1226.5 147v1M1226.5 165v7M1227.5 140v4M1227.5 165v7M1228.5 141v1M1228.5 156v2M1229.5 156v2M1230.5 141v4M1230.5 168v6M1231.5 161v5M1232.5 152v5M1232.5 169v1M1233.5 148v1M1233.5 164v1M1234.5 144v1M1234.5 164v3M1235.5 148v1M1235.5 165v1M1236.5 138v5M1236.5 161v7M1237.5 138v2M1237.5 155v9M1238.5 141v1M1238.5 143v2M1238.5 157v8M1239.5 141v7M1239.5 169v2M1240.5 137v4M1240.5 166v5M1241.5 141v2M1242.5 145v4M1242.5 160v2M1243.5 140v3M1243.5 167v2M1244.5 139v1M1244.5 152v11M1245.5 137v6M1245.5 154v2M1246.5 137v4M1247.5 146v1M1247.5 167v1M1248.5 167v5M1249.5 140v7M1249.5 162v8M1250.5 147v5M1250.5 166v4M1251.5 142v9M1251.5 165v4M1252.5 159v5M1253.5 138v2M1253.5 157v5M1254.5 137v6M1254.5 160v2M1255.5 138v8M1255.5 161v3M1256.5 139v4M1256.5 163v1M1257.5 143v1M1257.5 160v2M1258.5 141v8M1258.5 158v6M1259.5 140v4M1259.5 161v3M1260.5 143v6M1260.5 163v1M1261.5 144v1M1261.5 157v9M1262.5 145v2M1263.5 144v1M1263.5 159v6M1264.5 166v5M1265.5 146v2M1265.5 165v2M1266.5 145v3M1266.5 167v1M1267.5 145v3M1267.5 164v2" stroke="#009a00" stroke-width="1" fill="none"/>
<path d="M70.5 147v1M70.5 152v6M71.5 148v6M71.5 156v7M72.5 141v4M72.5 149v2M72.5 152v5M73.5 139v4M73.5 144v11M74.5 140v7M74.5 148v2M74.5 151v3M75.5 143v1M75.5 148v10M76.5 143v6M76.5 151v6M77.5 141v7M77.5 158v3M78.5 146v8M78.5 160v3M79.5 150v5M79.5 161v4M80.5 145v5M80.5 155v3M81.5 138v2M81.5 147v12M82.5 146v2M82.5 150v9M83.5 150v1M83.5 157v5M84.5 147v2M84.5 154v7M85.5 145v6M85.5 158v2M86.5 143v9M86.5 156v5M87.5 153v7M87.5 163v6M88.5 149v14M89.5 157v3M90.5 136v6M90.5 143v3M90.5 150v3M91.5 138v7M91.5 157v1M92.5 144v9M92.5 155v9M93.5 150v1M93.5 155v8M94.5 144v7M94.5 160v2M95.5 145v5M95.5 153v2M96.5 145v4M96.5 151v6M96.5 158v7M97.5 153v9M98.5 141v5M98.5 149v2M98.5 153v1M99.5 139v4M99.5 150v8M100.5 143v4M100.5 148v1M100.5 150v8M101.5 143v19M102.5 153v6M102.5 160v2M102.5 163v1M103.5 149v10M103.5 163v5M104.5 146v1M104.5 155v7M105.5 143v1M105.5 146v8M105.5 157v4M106.5 141v5M106.5 147v4M106.5 152v2M107.5 144v4M107.5 151v2M108.5 149v7M108.5 157v8M109.5 151v1M109.5 153v11M110.5 150v4M110.5 160v5M111.5 141v6M111.5 153v14M112.5 150v10M112.5 161v6M113.5 152v8M113.5 161v6M114.5 150v4M114.5 164v2M115.5 146v2M115.5 157v7M116.5 141v1M116.5 148v1M116.5 151v3M117.5 147v3M117.5 159v3M118.5 142v17M118.5 160v4M119.5 153v1M119.5 157v8M120.5 155v14M121.5 153v5M121.5 159v1M121.5 162v5M122.5 149v9M122.5 160v2M123.5 150v3M123.5 166v2M124.5 146v4M124.5 156v9M125.5 142v1M125.5 150v9M126.5 143v9M126.5 159v2M127.5 142v22M128.5 146v6M128.5 156v4M129.5 153v3M129.5 158v4M130.5 147v12M130.5 160v1M130.5 163v3M131.5 147v2M131.5 150v16M132.5 149v18M133.5 145v1M133.5 155v6M134.5 146v3M134.5 150v11M135.5 140v16M136.5 144v8M136.5 158v1M137.5 148v10M137.5 159v1M138.5 144v9M138.5 154v6M139.5 147v4M139.5 164v3M140.5 145v3M140.5 158v1M140.5 164v1M141.5 149v3M141.5 154v6M142.5 146v2M142.5 154v8M143.5 147v3M143.5 155v8M144.5 146v1M144.5 156v9M145.5 145v7M145.5 153v1M145.5 155v7M146.5 145v3M146.5 156v6M147.5 145v7M147.5 156v11M148.5 153v5M148.5 165v3M149.5 154v5M149.5 163v11M150.5 151v8M150.5 160v10M151.5 149v12M152.5 140v6M152.5 158v6M153.5 146v1M153.5 153v12M154.5 147v14M155.5 146v6M155.5 153v9M156.5 149v2M156.5 156v6M157.5 149v6M157.5 159v3M158.5 147v6M158.5 156v4M159.5 154v4M160.5 147v5M160.5 153v4M161.5 146v4M162.5 143v4M162.5 153v1M163.5 145v12M164.5 145v14M164.5 160v5M165.5 147v3M165.5 163v3M166.5 151v11M166.5 163v7M167.5 151v16M168.5 150v8M168.5 159v6M169.5 143v16M170.5 138v10M170.5 152v1M171.5 143v19M172.5 145v10M172.5 156v3M172.5 160v2M173.5 155v5M173.5 165v1M174.5 155v4M174.5 160v7M175.5 152v9M175.5 167v3M176.5 148v9M176.5 161v5M177.5 151v2M177.5 154v6M177.5 161v4M178.5 148v5M178.5 156v8M179.5 147v5M179.5 157v5M180.5 151v15M180.5 171v1M181.5 152v6M181.5 161v9M182.5 150v5M182.5 160v6M183.5 151v8M183.5 163v2M184.5 152v2M184.5 155v9M185.5 144v1M185.5 146v11M185.5 158v4M186.5 148v1M186.5 158v2M187.5 149v6M187.5 158v2M187.5 167v1M188.5 147v13M188.5 163v3M189.5 154v4M189.5 162v7M190.5 152v13M190.5 166v4M191.5 144v23M192.5 140v4M193.5 143v6M193.5 151v12M194.5 156v9M194.5 166v6M195.5 156v5M195.5 164v1M196.5 156v7M196.5 164v3M196.5 168v3M197.5 155v6M197.5 169v1M198.5 150v4M198.5 160v9M199.5 150v3M199.5 154v7M199.5 162v4M200.5 148v5M200.5 157v6M201.5 151v11M201.5 163v5M202.5 149v2M202.5 155v9M203.5 151v8M203.5 162v3M204.5 149v9M204.5 160v7M205.5 144v7M205.5 155v9M206.5 142v3M206.5 151v2M207.5 153v7M208.5 147v2M208.5 155v9M209.5 148v2M209.5 151v7M210.5 144v8M210.5 153v1M210.5 155v7M211.5 148v4M211.5 153v2M211.5 156v4M211.5 161v1M212.5 148v8M212.5 164v2M213.5 154v5M213.5 160v4M214.5 143v19M215.5 148v6M215.5 155v2M215.5 161v3M216.5 151v9M216.5 161v2M216.5 164v8M217.5 151v1M217.5 157v5M218.5 143v7M218.5 154v2M219.5 140v1M219.5 150v8M220.5 150v5M220.5 159v1M220.5 165v1M221.5 148v12M221.5 167v1M222.5 158v7M222.5 169v1M223.5 155v9M223.5 165v7M224.5 147v6M224.5 162v7M225.5 142v1M225.5 148v1M225.5 150v11M226.5 144v2M226.5 154v3M227.5 144v3M227.5 148v1M227.5 150v3M228.5 149v14M229.5 152v3M229.5 167v4M230.5 146v11M230.5 158v10M231.5 143v6M231.5 153v3M232.5 139v3M232.5 152v3M233.5 139v4M233.5 144v15M234.5 152v2M234.5 160v2M235.5 148v4M235.5 156v7M236.5 147v4M236.5 155v7M237.5 144v9M237.5 159v4M238.5 142v5M238.5 148v1M238.5 150v3M239.5 143v3M239.5 151v4M240.5 139v1M240.5 146v16M241.5 147v1M241.5 160v6M242.5 147v20M243.5 140v10M243.5 157v4M244.5 138v4M244.5 147v7M245.5 141v16M245.5 158v1M246.5 145v2M246.5 148v3M246.5 152v6M246.5 159v1M247.5 138v5M247.5 147v1M247.5 150v9M248.5 143v13M248.5 160v2M249.5 139v2M249.5 142v2M249.5 151v8M250.5 141v4M250.5 148v5M251.5 132v7M251.5 145v1M251.5 147v6M252.5 140v12M252.5 153v4M253.5 142v11M253.5 155v2M253.5 158v11M254.5 141v5M254.5 148v5M255.5 134v2M255.5 142v6M256.5 137v10M257.5 133v5M257.5 142v1M257.5 144v7M258.5 137v5M258.5 148v7M259.5 144v14M260.5 143v7M260.5 151v3M260.5 158v4M261.5 137v10M261.5 148v6M262.5 138v2M262.5 145v1M262.5 147v8M263.5 139v7M263.5 147v10M264.5 141v2M264.5 144v2M264.5 147v7M265.5 138v5M265.5 147v11M266.5 140v3M266.5 149v9M267.5 140v1M267.5 143v6M268.5 142v5M268.5 148v2M268.5 151v1M268.5 153v2M269.5 138v7M269.5 146v9M270.5 137v4M270.5 142v1M270.5 145v4M271.5 141v6M271.5 148v7M272.5 137v8M272.5 146v4M272.5 151v3M273.5 134v2M273.5 139v5M273.5 145v7M274.5 136v16M275.5 132v14M275.5 148v1M276.5 131v9M276.5 144v7M277.5 138v10M277.5 154v2M278.5 136v1M278.5 142v11M279.5 147v6M280.5 137v2M280.5 145v1M280.5 148v2M281.5 134v6M281.5 149v4M282.5 134v3M282.5 138v4M282.5 144v5M283.5 134v12M284.5 137v11M284.5 149v3M285.5 138v13M285.5 157v2M286.5 139v5M286.5 145v10M287.5 132v2M287.5 143v10M288.5 131v6M289.5 127v10M289.5 139v7M290.5 128v11M290.5 140v9M291.5 130v17M291.5 148v5M292.5 137v1M292.5 149v6M293.5 133v19M294.5 129v13M295.5 124v23M296.5 129v5M296.5 143v2M297.5 128v1M297.5 130v1M297.5 132v8M297.5 141v2M298.5 127v7M298.5 137v5M299.5 130v6M299.5 137v3M299.5 141v5M300.5 133v6M300.5 155v2M301.5 139v1M301.5 151v7M302.5 134v11M302.5 147v7M303.5 120v1M303.5 132v12M304.5 126v17M304.5 144v1M305.5 128v2M306.5 130v5M306.5 144v1M307.5 134v20M308.5 137v2M308.5 146v1M309.5 125v2M309.5 135v7M310.5 130v1M310.5 133v9M311.5 132v1M311.5 146v2M312.5 123v3M312.5 146v1M313.5 125v7M313.5 136v6M314.5 138v2M314.5 145v5M315.5 134v3M315.5 148v3M316.5 139v4M317.5 128v4M317.5 136v9M318.5 122v24M319.5 120v5M319.5 128v6M320.5 122v11M320.5 141v2M321.5 126v12M321.5 143v5M322.5 129v15M323.5 126v4M323.5 131v3M323.5 135v1M323.5 137v5M324.5 135v7M324.5 143v5M325.5 126v3M325.5 143v3M326.5 124v9M327.5 125v4M327.5 134v8M328.5 123v2M328.5 132v7M329.5 123v3M329.5 127v1M329.5 129v8M329.5 140v4M330.5 133v6M330.5 141v8M331.5 137v4M331.5 143v8M332.5 130v3M332.5 135v8M333.5 122v5M333.5 133v4M334.5 130v4M335.5 125v4M335.5 132v7M336.5 115v8M336.5 124v1M336.5 126v2M337.5 117v1M337.5 127v10M338.5 122v5M338.5 134v3M339.5 121v7M339.5 129v9M340.5 130v1M341.5 125v5M341.5 133v3M341.5 137v6M342.5 125v2M342.5 138v1M343.5 123v3M343.5 133v12M344.5 124v15M345.5 119v10M345.5 134v6M346.5 122v5M346.5 130v7M347.5 120v7M347.5 128v4M348.5 124v6M348.5 131v8M349.5 121v5M349.5 136v3M350.5 120v5M350.5 126v4M351.5 127v6M352.5 119v1M352.5 121v10M353.5 114v6M353.5 121v4M353.5 131v5M354.5 124v10M355.5 131v1M356.5 122v1M356.5 135v1M357.5 119v5M357.5 131v1M357.5 133v2M358.5 116v5M358.5 135v1M359.5 122v2M359.5 125v1M359.5 135v1M360.5 119v3M360.5 126v12M361.5 113v13M361.5 129v2M362.5 111v7M362.5 119v12M363.5 120v5M363.5 126v5M363.5 133v7M364.5 120v6M364.5 127v4M364.5 137v1M365.5 122v3M365.5 129v2M365.5 132v7M366.5 120v13M366.5 137v2M367.5 119v4M368.5 120v6M368.5 127v12M369.5 117v1M369.5 131v1M370.5 125v12M371.5 117v3M371.5 131v3M372.5 117v7M372.5 131v5M373.5 116v2M373.5 130v4M374.5 118v4M374.5 130v3M375.5 117v7M375.5 126v5M376.5 115v5M376.5 121v3M376.5 125v6M377.5 115v15M377.5 131v1M378.5 115v10M378.5 131v1M379.5 124v6M380.5 118v1M380.5 128v5M381.5 111v7M381.5 120v15M382.5 116v8M382.5 130v3M383.5 118v2M383.5 126v1M383.5 128v6M384.5 114v3M384.5 124v5M384.5 130v4M385.5 123v5M385.5 135v3M386.5 123v2M386.5 127v7M387.5 115v2M387.5 118v8M388.5 114v3M388.5 119v14M389.5 117v3M389.5 122v8M390.5 129v7M391.5 115v5M391.5 121v1M391.5 123v6M391.5 130v6M392.5 113v3M392.5 120v4M393.5 112v3M393.5 121v9M394.5 123v2M394.5 126v3M395.5 115v9M395.5 128v1M396.5 114v8M396.5 127v2M396.5 130v1M397.5 108v3M397.5 113v17M398.5 107v1M398.5 109v4M398.5 117v8M399.5 117v2M399.5 123v1M399.5 125v4M400.5 116v11M400.5 130v2M401.5 114v6M401.5 124v8M402.5 113v5M402.5 119v14M403.5 114v2M403.5 117v3M403.5 122v7M404.5 113v4M404.5 120v9M405.5 114v6M405.5 125v6M406.5 112v21M407.5 116v6M407.5 126v5M408.5 113v1M408.5 126v4M409.5 113v7M409.5 127v3M410.5 116v2M410.5 125v9M411.5 119v7M411.5 127v4M412.5 111v10M412.5 128v1M413.5 105v4M413.5 114v11M414.5 106v1M414.5 115v3M415.5 110v2M415.5 113v1M415.5 115v2M415.5 119v9M416.5 113v8M416.5 122v5M416.5 128v6M417.5 117v4M417.5 122v4M417.5 130v6M418.5 116v1M418.5 130v4M419.5 122v3M419.5 127v10M420.5 113v7M420.5 121v9M421.5 121v1M422.5 107v9M422.5 117v5M423.5 106v5M423.5 119v1M423.5 121v3M424.5 108v4M424.5 124v2M424.5 127v3M425.5 118v1M425.5 123v10M426.5 109v1M426.5 126v2M427.5 106v17M428.5 104v11M428.5 117v7M429.5 103v12M429.5 122v2M430.5 104v6M430.5 111v10M431.5 107v7M431.5 121v4M432.5 108v6M432.5 115v4M433.5 108v4M433.5 115v10M434.5 102v3M434.5 107v1M434.5 113v7M435.5 107v2M435.5 112v2M435.5 115v9M436.5 105v1M436.5 107v14M437.5 112v2M438.5 110v9M438.5 122v2M438.5 126v6M439.5 117v2M439.5 122v4M440.5 102v17M440.5 120v5M441.5 104v2M441.5 112v8M442.5 106v1M442.5 112v10M443.5 104v17M443.5 122v4M444.5 107v1M444.5 116v6M445.5 106v8M445.5 120v4M446.5 104v6M446.5 112v9M447.5 101v14M447.5 120v6M448.5 101v1M448.5 104v2M448.5 109v3M449.5 101v7M449.5 111v6M450.5 108v3M450.5 113v8M451.5 108v7M451.5 116v12M452.5 106v6M452.5 115v2M453.5 102v3M453.5 115v3M454.5 102v9M455.5 98v7M455.5 108v13M456.5 109v1M456.5 112v3M457.5 109v8M457.5 125v1M458.5 110v8M458.5 119v2M458.5 122v5M459.5 108v4M459.5 113v2M459.5 116v3M459.5 120v4M460.5 102v11M460.5 115v5M461.5 100v14M462.5 101v19M463.5 95v25M464.5 107v10M464.5 119v1M465.5 104v1M465.5 112v14M466.5 108v2M466.5 114v3M467.5 111v1M467.5 113v5M468.5 106v1M468.5 116v5M469.5 104v5M469.5 110v10M470.5 107v4M470.5 118v3M471.5 104v12M472.5 100v3M472.5 104v3M472.5 109v6M473.5 96v5M473.5 107v7M474.5 104v4M474.5 113v5M475.5 103v15M475.5 119v3M476.5 110v9M476.5 122v1M477.5 101v11M478.5 96v1M478.5 103v4M478.5 108v8M479.5 103v8M479.5 119v6M480.5 105v1M480.5 107v12M481.5 101v16M482.5 103v7M482.5 115v6M483.5 106v5M483.5 116v5M484.5 106v2M484.5 109v2M484.5 112v5M485.5 94v12M485.5 110v2M486.5 95v7M486.5 106v9M487.5 100v10M487.5 117v8M488.5 96v8M488.5 106v1M488.5 109v4M489.5 99v3M489.5 117v3M490.5 99v5M490.5 109v4M491.5 90v7M491.5 105v11M492.5 91v23M493.5 99v2M493.5 111v5M494.5 98v4M494.5 109v7M495.5 101v2M495.5 113v3M496.5 100v4M496.5 105v11M497.5 102v2M497.5 116v1M498.5 97v10M498.5 112v4M499.5 99v5M499.5 106v8M499.5 115v1M500.5 103v12M500.5 116v5M501.5 98v8M501.5 111v5M502.5 95v3M502.5 99v2M502.5 110v5M503.5 94v6M503.5 101v8M504.5 95v9M504.5 108v2M505.5 96v2M505.5 106v4M506.5 100v10M506.5 111v4M507.5 98v12M507.5 114v2M508.5 95v11M508.5 107v8M509.5 90v12M509.5 107v3M510.5 94v10M511.5 90v13M511.5 104v7M512.5 98v11M512.5 110v5M513.5 101v5M513.5 109v3M513.5 115v3M514.5 97v11M514.5 110v6M515.5 97v9M515.5 109v8M516.5 89v18M517.5 87v1M517.5 89v2M517.5 92v10M518.5 95v5M519.5 96v5M519.5 116v1M520.5 97v8M520.5 115v1M521.5 95v1M521.5 105v8M522.5 89v5M522.5 102v10M523.5 88v4M523.5 102v5M524.5 89v12M524.5 106v7M525.5 96v1M525.5 98v12M526.5 97v4M526.5 103v3M526.5 114v3M527.5 91v16M528.5 90v14M529.5 88v1M529.5 90v1M530.5 87v3M530.5 97v2M531.5 87v8M531.5 96v8M531.5 105v3M532.5 92v5M532.5 105v6M533.5 94v5M533.5 105v3M534.5 92v10M534.5 108v3M535.5 99v9M536.5 90v1M536.5 92v9M536.5 103v1M537.5 90v1M537.5 92v3M537.5 96v6M537.5 103v2M538.5 86v1M538.5 88v18M539.5 91v1M539.5 99v3M540.5 91v3M540.5 99v14M541.5 91v7M541.5 99v12M542.5 95v8M542.5 105v8M543.5 92v19M544.5 94v8M544.5 106v4M545.5 88v7M545.5 97v2M545.5 100v6M546.5 88v6M546.5 105v1M547.5 85v3M547.5 92v2M547.5 99v8M548.5 90v2M548.5 93v2M548.5 96v2M548.5 99v4M549.5 89v8M549.5 99v1M549.5 101v3M550.5 88v4M550.5 94v2M551.5 79v7M551.5 98v2M552.5 71v6M552.5 95v4M553.5 80v5M553.5 90v9M554.5 77v1M554.5 86v6M555.5 75v3M555.5 88v6M556.5 82v4M556.5 91v7M557.5 84v4M557.5 89v2M557.5 97v2M558.5 93v3M558.5 97v7M559.5 89v6M559.5 98v7M560.5 87v9M560.5 97v6M561.5 78v1M561.5 88v7M562.5 70v3M562.5 82v7M563.5 82v5M563.5 89v5M564.5 78v6M564.5 87v4M565.5 80v12M565.5 96v2M566.5 78v3M566.5 84v6M566.5 91v4M567.5 85v8M567.5 97v2M568.5 83v3M568.5 90v2M569.5 78v2M569.5 88v10M570.5 79v2M570.5 82v7M570.5 92v3M571.5 78v7M571.5 86v3M571.5 90v3M572.5 76v10M572.5 93v1M573.5 78v7M573.5 88v9M574.5 77v12M574.5 90v4M574.5 96v8M575.5 82v8M575.5 97v1M576.5 85v12M577.5 78v1M577.5 95v1M578.5 81v4M578.5 88v2M579.5 76v5M579.5 82v4M579.5 92v5M580.5 80v10M580.5 104v1M581.5 89v4M581.5 94v4M582.5 81v4M582.5 88v9M583.5 83v10M583.5 94v5M584.5 81v12M584.5 94v3M584.5 98v8M585.5 75v11M585.5 98v4M586.5 79v6M586.5 92v2M587.5 78v13M587.5 93v1M588.5 75v10M588.5 86v3M588.5 90v5M589.5 79v2M589.5 85v13M590.5 77v3M590.5 81v19M591.5 82v4M591.5 89v7M592.5 83v7M592.5 91v2M592.5 98v1M593.5 82v11M593.5 94v5M594.5 87v3M594.5 91v1M594.5 93v6M595.5 79v9M595.5 91v1M596.5 81v7M597.5 79v4M597.5 88v7M598.5 81v3M598.5 86v13M599.5 77v10M599.5 88v6M600.5 77v17M601.5 89v5M601.5 97v1M602.5 85v23M603.5 86v9M603.5 102v2M603.5 106v1M604.5 85v5M604.5 91v2M604.5 94v4M605.5 84v1M605.5 86v2M605.5 89v7M606.5 75v18M607.5 72v9M607.5 83v3M608.5 83v9M609.5 79v17M610.5 77v13M610.5 91v4M611.5 79v19M612.5 82v3M612.5 96v1M613.5 74v9M613.5 84v8M614.5 74v5M614.5 83v3M614.5 87v5M615.5 65v9M615.5 79v8M616.5 67v5M616.5 85v2M617.5 73v5M617.5 81v10M618.5 80v3M618.5 88v9M619.5 76v20M620.5 76v3M620.5 87v4M621.5 79v4M621.5 84v11M622.5 75v3M622.5 79v1M622.5 81v1M622.5 83v10M623.5 71v2M623.5 74v10M624.5 66v6M624.5 74v6M625.5 67v5M625.5 73v12M626.5 69v14M626.5 89v3M627.5 77v3M627.5 92v5M628.5 77v5M628.5 83v1M628.5 85v8M629.5 73v4M629.5 82v5M630.5 66v17M631.5 69v2M631.5 76v7M631.5 86v1M632.5 73v2M632.5 80v6M633.5 69v2M633.5 81v1M634.5 72v6M635.5 70v7M635.5 84v4M636.5 68v2M636.5 90v1M637.5 69v8M637.5 83v2M638.5 81v1M638.5 83v11M639.5 72v2M639.5 75v5M639.5 81v1M639.5 83v7M640.5 67v1M640.5 69v1M640.5 74v11M641.5 64v4M641.5 69v6M641.5 78v7M642.5 64v4M642.5 69v6M642.5 76v6M642.5 83v5M644.5 68v8M644.5 77v3M644.5 81v11M645.5 74v6M646.5 75v3M646.5 85v3M647.5 74v1M647.5 80v5M648.5 68v3M648.5 72v3M648.5 76v8M649.5 62v17M650.5 64v5M650.5 77v3M651.5 62v2M651.5 69v13M652.5 75v2M652.5 83v3M653.5 73v4M653.5 81v9M654.5 60v12M654.5 73v1M654.5 75v14M655.5 65v4M655.5 72v4M655.5 77v3M656.5 64v10M656.5 78v5M657.5 66v1M657.5 73v1M657.5 75v2M657.5 78v7M658.5 64v3M658.5 70v13M658.5 84v1M659.5 68v2M659.5 71v5M659.5 77v5M660.5 66v11M660.5 78v3M661.5 71v3M661.5 78v4M662.5 66v5M662.5 72v3M663.5 68v4M663.5 73v2M663.5 83v1M664.5 67v13M664.5 81v4M665.5 76v8M666.5 68v7M666.5 79v2M666.5 82v5M667.5 66v11M667.5 80v10M668.5 69v4M668.5 79v8M669.5 65v6M669.5 72v3M670.5 61v2M670.5 70v5M671.5 65v3M671.5 74v4M672.5 69v1M672.5 79v8M673.5 71v6M673.5 83v8M674.5 69v19M675.5 65v5M675.5 77v1M676.5 62v2M676.5 72v1M676.5 74v1M677.5 52v14M677.5 72v3M678.5 62v17M679.5 67v2M679.5 85v1M680.5 68v7M680.5 87v2M681.5 65v19M681.5 85v3M682.5 67v2M682.5 71v11M683.5 65v8M683.5 75v8M684.5 64v2M684.5 72v11M685.5 70v9M685.5 80v7M686.5 71v5M686.5 77v4M686.5 82v6M687.5 71v7M687.5 86v1M688.5 68v16M689.5 72v2M689.5 75v7M690.5 80v4M691.5 68v2M691.5 84v2M692.5 70v3M692.5 80v2M693.5 76v9M694.5 56v1M694.5 61v3M694.5 73v3M694.5 77v9M695.5 58v8M695.5 67v3M695.5 71v6M696.5 61v3M696.5 72v1M696.5 74v6M697.5 66v6M697.5 73v10M698.5 69v10M698.5 81v3M699.5 65v11M699.5 77v2M699.5 80v6M700.5 70v1M700.5 73v1M700.5 75v6M701.5 64v7M701.5 80v1M702.5 69v16M703.5 67v9M703.5 77v3M703.5 88v2M704.5 67v12M704.5 81v1M704.5 83v7M705.5 67v6M705.5 86v1M706.5 62v1M706.5 66v6M706.5 73v5M707.5 63v1M707.5 66v11M708.5 66v16M709.5 65v7M709.5 77v6M710.5 74v16M711.5 63v21M712.5 67v6M712.5 74v5M712.5 80v2M713.5 64v7M713.5 75v6M714.5 64v9M714.5 74v1M714.5 76v6M715.5 76v8M715.5 85v3M716.5 72v3M716.5 82v8M717.5 75v8M717.5 87v2M718.5 71v1M718.5 88v3M719.5 70v7M719.5 80v5M720.5 67v3M720.5 73v2M720.5 78v14M721.5 66v6M721.5 80v5M722.5 65v4M722.5 81v3M723.5 73v1M723.5 86v3M724.5 67v5M724.5 77v1M724.5 79v6M725.5 65v1M725.5 69v5M725.5 76v9M726.5 64v5M726.5 82v3M727.5 73v4M727.5 78v2M727.5 81v2M727.5 84v2M728.5 81v4M728.5 87v4M729.5 66v7M729.5 74v8M729.5 83v3M729.5 87v4M730.5 67v3M730.5 71v3M730.5 75v8M731.5 69v3M731.5 73v12M732.5 67v5M732.5 75v5M732.5 81v4M733.5 75v5M733.5 82v2M733.5 85v5M734.5 76v5M734.5 83v2M734.5 86v8M735.5 78v9M735.5 95v1M736.5 75v4M736.5 87v3M737.5 70v3M737.5 77v12M738.5 67v7M738.5 79v2M739.5 72v1M739.5 79v3M740.5 73v21M741.5 78v15M742.5 85v3M742.5 89v3M743.5 79v9M744.5 79v3M744.5 88v9M745.5 77v15M745.5 93v4M746.5 86v4M746.5 91v1M747.5 80v12M747.5 95v2M748.5 79v2M748.5 89v4M749.5 73v1M749.5 80v14M750.5 75v6M750.5 82v3M750.5 90v2M751.5 74v10M751.5 85v2M752.5 74v12M752.5 91v4M753.5 77v19M754.5 81v5M754.5 92v1M754.5 95v2M755.5 81v10M755.5 94v4M756.5 79v1M756.5 90v2M757.5 75v5M757.5 92v3M758.5 75v11M758.5 91v4M759.5 75v11M759.5 87v1M759.5 89v1M759.5 91v6M760.5 78v5M760.5 91v5M761.5 78v7M761.5 89v6M762.5 76v14M763.5 79v7M763.5 89v3M764.5 71v4M764.5 83v10M765.5 74v7M765.5 82v3M765.5 86v1M765.5 88v5M766.5 74v8M766.5 87v3M767.5 75v11M767.5 96v3M768.5 78v6M769.5 81v6M769.5 89v1M769.5 97v1M770.5 87v6M770.5 99v4M771.5 82v11M771.5 99v1M772.5 82v16M773.5 81v7M773.5 91v4M774.5 80v2M774.5 85v11M775.5 74v4M775.5 79v4M775.5 84v9M776.5 78v9M776.5 96v1M777.5 85v14M778.5 82v5M778.5 92v7M779.5 79v3M779.5 89v7M780.5 82v6M780.5 89v1M780.5 98v1M781.5 80v8M781.5 89v2M781.5 92v6M782.5 80v8M782.5 90v4M782.5 95v3M783.5 82v2M783.5 88v6M784.5 83v1M784.5 89v9M785.5 83v2M785.5 95v2M786.5 90v5M786.5 99v1M787.5 89v2M787.5 95v5M788.5 84v2M788.5 87v12M789.5 79v2M789.5 83v2M789.5 89v4M790.5 79v8M790.5 88v1M790.5 90v5M791.5 86v2M791.5 92v4M792.5 84v4M792.5 91v13M793.5 95v5M793.5 107v1M794.5 95v4M794.5 100v9M794.5 111v3M795.5 91v3M795.5 95v2M795.5 98v12M796.5 89v3M796.5 93v7M797.5 82v3M797.5 94v6M798.5 80v4M798.5 86v8M799.5 84v13M799.5 99v1M800.5 96v2M801.5 84v17M802.5 86v5M802.5 97v8M803.5 87v2M803.5 94v3M803.5 98v3M804.5 86v7M804.5 99v3M805.5 82v4M805.5 90v5M806.5 77v4M806.5 82v4M806.5 87v5M807.5 78v11M807.5 90v7M808.5 90v3M808.5 95v11M809.5 88v4M809.5 103v8M810.5 90v18M811.5 92v4M812.5 86v7M812.5 100v7M813.5 89v6M813.5 96v13M814.5 85v1M814.5 95v5M814.5 101v6M815.5 88v5M815.5 96v5M816.5 85v2M816.5 91v8M817.5 84v6M817.5 95v4M818.5 85v6M818.5 94v7M819.5 86v18M819.5 106v4M820.5 89v5M820.5 98v9M821.5 90v5M821.5 96v1M821.5 101v6M821.5 108v1M822.5 82v8M822.5 91v3M822.5 99v8M823.5 83v6M823.5 101v1M824.5 82v8M824.5 92v9M825.5 94v3M825.5 104v3M826.5 87v7M826.5 95v13M827.5 93v6M827.5 105v5M828.5 93v9M828.5 111v5M829.5 95v6M829.5 102v3M829.5 106v4M830.5 93v13M830.5 108v1M830.5 112v1M831.5 90v13M831.5 105v7M832.5 90v3M832.5 100v7M833.5 86v1M833.5 94v1M834.5 82v8M834.5 92v11M835.5 81v4M835.5 86v1M835.5 88v9M836.5 85v8M836.5 96v3M836.5 105v1M837.5 94v14M837.5 109v5M838.5 100v2M838.5 103v2M838.5 106v8M839.5 92v7M839.5 107v6M840.5 88v8M840.5 98v4M841.5 88v1M841.5 97v7M842.5 95v11M843.5 91v19M844.5 95v3M844.5 110v1M845.5 97v5M845.5 107v5M846.5 96v8M846.5 105v4M846.5 110v1M846.5 112v1M847.5 95v3M847.5 108v5M848.5 93v14M849.5 92v5M849.5 104v7M850.5 92v5M850.5 98v10M850.5 110v1M851.5 91v4M851.5 104v3M852.5 96v2M852.5 99v3M852.5 107v2M853.5 89v1M853.5 95v9M854.5 91v17M855.5 93v1M855.5 95v17M856.5 98v3M856.5 102v1M856.5 104v1M856.5 106v8M857.5 95v1M857.5 97v13M858.5 88v5M858.5 97v6M859.5 88v4M859.5 93v3M859.5 103v1M860.5 95v6M860.5 104v4M861.5 92v3M861.5 96v1M861.5 102v8M862.5 96v10M862.5 107v3M862.5 111v2M863.5 106v2M863.5 110v7M863.5 119v1M864.5 104v4M864.5 112v12M865.5 101v6M865.5 111v10M867.5 97v9M867.5 111v1M868.5 94v8M868.5 103v5M868.5 111v4M869.5 94v7M869.5 102v10M869.5 114v1M870.5 102v7M870.5 110v4M871.5 102v10M871.5 116v3M872.5 117v6M873.5 98v2M873.5 108v10M874.5 99v1M874.5 108v4M875.5 96v15M876.5 100v2M876.5 108v5M877.5 103v1M877.5 105v17M878.5 109v7M878.5 118v3M879.5 101v10M879.5 112v5M880.5 107v1M880.5 117v2M880.5 120v2M881.5 104v4M881.5 113v1M881.5 115v7M882.5 102v10M882.5 113v2M883.5 100v2M883.5 113v7M884.5 99v5M884.5 105v3M884.5 110v2M885.5 98v13M885.5 113v4M886.5 104v16M887.5 107v5M887.5 118v5M888.5 100v8M888.5 114v5M889.5 109v1M889.5 112v1M889.5 115v4M890.5 101v4M890.5 106v6M891.5 99v6M891.5 108v8M892.5 98v7M892.5 117v2M893.5 104v3M893.5 115v5M894.5 103v5M894.5 110v11M895.5 101v1M895.5 103v6M895.5 121v6M896.5 104v5M896.5 110v4M896.5 115v12M897.5 104v2M897.5 107v2M897.5 112v8M898.5 98v4M898.5 113v3M899.5 99v4M899.5 108v4M901.5 106v3M901.5 114v2M902.5 103v12M902.5 116v1M902.5 119v5M903.5 109v7M903.5 118v4M904.5 108v2M904.5 111v5M905.5 103v2M905.5 106v8M906.5 105v2M906.5 112v5M906.5 118v2M907.5 110v6M907.5 118v1M907.5 122v6M908.5 111v10M909.5 110v8M909.5 124v6M910.5 118v9M911.5 101v16M911.5 119v1M912.5 107v12M913.5 100v6M913.5 114v4M914.5 108v8M914.5 118v1M915.5 111v6M915.5 118v8M916.5 111v3M916.5 126v2M917.5 108v4M917.5 113v1M917.5 117v4M918.5 101v2M918.5 109v1M918.5 113v11M919.5 104v4M919.5 117v6M920.5 108v12M920.5 121v4M921.5 110v12M921.5 125v1M922.5 110v8M922.5 122v6M923.5 100v6M923.5 107v7M923.5 117v8M924.5 105v1M924.5 114v3M925.5 104v4M925.5 122v5M926.5 106v3M926.5 112v10M927.5 109v2M927.5 115v9M928.5 109v5M928.5 115v1M928.5 117v6M929.5 111v10M929.5 122v3M929.5 127v1M930.5 107v1M930.5 116v7M931.5 103v4M931.5 112v12M931.5 128v1M932.5 116v14M933.5 114v5M933.5 120v4M933.5 125v4M934.5 111v3M934.5 117v13M935.5 107v1M935.5 120v4M936.5 118v3M937.5 115v16M938.5 116v7M938.5 124v5M939.5 116v7M939.5 125v4M940.5 118v3M940.5 127v3M940.5 131v4M941.5 117v2M942.5 101v3M942.5 116v3M943.5 108v1M943.5 122v6M944.5 110v9M944.5 128v2M945.5 114v2M945.5 117v2M945.5 121v1M946.5 112v3M946.5 116v2M946.5 119v8M947.5 113v6M947.5 121v2M947.5 124v6M948.5 109v4M948.5 118v5M949.5 112v8M949.5 121v2M949.5 124v5M950.5 113v12M950.5 130v1M951.5 123v3M951.5 129v6M952.5 117v18M952.5 137v1M953.5 117v3M953.5 134v2M954.5 117v1M954.5 126v5M955.5 109v6M955.5 116v13M956.5 109v1M956.5 111v4M956.5 117v7M957.5 116v11M957.5 132v1M958.5 114v1M958.5 127v1M959.5 112v11M959.5 124v8M960.5 123v5M960.5 131v4M961.5 117v4M961.5 122v2M961.5 125v4M962.5 113v7M962.5 121v4M962.5 129v1M963.5 122v10M963.5 135v1M964.5 118v8M964.5 131v7M965.5 118v9M965.5 128v12M966.5 113v9M966.5 123v3M966.5 127v7M967.5 118v9M967.5 128v6M968.5 119v21M969.5 120v2M969.5 127v2M969.5 132v3M970.5 115v6M970.5 130v5M971.5 113v5M971.5 119v12M971.5 134v2M972.5 111v23M973.5 131v5M974.5 119v8M974.5 133v4M975.5 116v5M975.5 133v4M976.5 122v1M976.5 130v2M976.5 135v3M977.5 131v4M977.5 136v3M978.5 116v4M978.5 121v1M978.5 125v11M979.5 114v6M979.5 125v5M980.5 117v6M980.5 132v5M981.5 120v2M981.5 134v3M982.5 126v5M982.5 134v6M983.5 128v12M983.5 143v1M984.5 121v11M984.5 134v7M985.5 115v8M985.5 124v1M985.5 126v3M985.5 130v8M986.5 117v1M986.5 128v3M986.5 134v3M987.5 120v8M987.5 129v12M988.5 122v4M988.5 132v7M989.5 125v3M989.5 129v2M989.5 132v6M990.5 125v6M990.5 138v3M991.5 125v6M991.5 138v6M992.5 120v9M992.5 131v2M993.5 116v8M994.5 114v21M994.5 136v1M995.5 121v11M995.5 133v3M996.5 124v2M996.5 139v4M997.5 127v4M997.5 145v1M998.5 126v7M998.5 134v3M999.5 126v1M999.5 133v9M1000.5 129v19M1001.5 126v4M1001.5 132v2M1001.5 135v5M1002.5 122v11M1002.5 136v3M1003.5 128v1M1003.5 131v3M1003.5 135v3M1004.5 129v7M1004.5 141v4M1005.5 125v5M1005.5 139v1M1006.5 126v4M1006.5 133v6M1007.5 128v6M1007.5 137v2M1008.5 129v2M1008.5 132v1M1008.5 134v3M1009.5 128v2M1009.5 132v8M1010.5 122v1M1010.5 134v1M1011.5 128v18M1012.5 124v10M1012.5 138v4M1013.5 128v3M1013.5 133v3M1013.5 137v7M1014.5 128v1M1014.5 140v6M1015.5 126v5M1015.5 135v5M1016.5 126v1M1016.5 132v2M1017.5 122v21M1018.5 119v7M1018.5 131v5M1019.5 126v7M1019.5 135v10M1020.5 128v3M1021.5 122v9M1021.5 132v1M1022.5 122v8M1022.5 131v1M1022.5 136v1M1023.5 121v17M1023.5 139v4M1024.5 130v6M1024.5 142v2M1025.5 124v8M1025.5 134v2M1025.5 139v6M1026.5 126v5M1026.5 134v1M1026.5 136v5M1027.5 128v3M1027.5 133v9M1028.5 133v10M1028.5 144v2M1029.5 134v1M1029.5 136v5M1030.5 129v12M1030.5 142v4M1031.5 125v1M1031.5 128v8M1031.5 141v9M1032.5 129v3M1033.5 127v21M1034.5 123v1M1034.5 126v1M1034.5 132v10M1035.5 122v11M1036.5 127v14M1036.5 145v3M1037.5 126v1M1037.5 137v5M1038.5 131v7M1038.5 139v10M1039.5 132v5M1039.5 139v12M1040.5 128v2M1040.5 136v5M1041.5 126v1M1041.5 133v9M1042.5 126v9M1042.5 144v2M1043.5 131v1M1043.5 137v5M1044.5 125v7M1044.5 134v8M1045.5 127v5M1045.5 138v5M1046.5 128v7M1046.5 136v8M1047.5 134v17M1048.5 137v2M1048.5 140v1M1048.5 143v9M1049.5 134v7M1049.5 142v3M1049.5 150v3M1050.5 125v12M1050.5 138v12M1051.5 128v4M1051.5 133v13M1052.5 143v10M1053.5 127v12M1053.5 140v1M1053.5 142v6M1054.5 130v12M1054.5 143v1M1054.5 145v3M1055.5 134v5M1055.5 140v10M1056.5 142v6M1056.5 149v2M1057.5 133v12M1057.5 149v5M1058.5 135v7M1058.5 150v1M1059.5 138v3M1059.5 144v6M1060.5 130v6M1060.5 138v10M1061.5 126v8M1061.5 138v6M1062.5 130v5M1062.5 136v3M1062.5 141v4M1063.5 129v3M1063.5 135v2M1063.5 139v4M1064.5 137v10M1065.5 133v21M1066.5 136v4M1066.5 149v8M1067.5 134v3M1067.5 138v2M1068.5 129v1M1068.5 139v10M1069.5 129v6M1069.5 136v2M1069.5 139v4M1069.5 144v3M1070.5 127v11M1070.5 143v3M1071.5 135v2M1071.5 139v6M1071.5 146v7M1072.5 133v12M1072.5 151v2M1073.5 141v4M1073.5 153v3M1074.5 135v12M1074.5 148v6M1075.5 133v6M1075.5 149v4M1076.5 138v12M1077.5 131v20M1078.5 138v5M1078.5 151v1M1079.5 132v8M1079.5 145v6M1080.5 140v15M1081.5 139v9M1081.5 150v7M1082.5 141v5M1082.5 155v1M1083.5 140v3M1083.5 149v9M1084.5 141v4M1084.5 147v12M1085.5 137v7M1085.5 152v6M1086.5 131v20M1087.5 138v2M1087.5 141v2M1087.5 145v4M1088.5 138v1M1088.5 152v3M1089.5 136v4M1089.5 151v4M1090.5 142v6M1090.5 154v4M1091.5 142v8M1091.5 152v5M1092.5 148v2M1092.5 152v3M1093.5 142v2M1093.5 145v10M1094.5 135v3M1094.5 139v1M1094.5 147v6M1095.5 132v2M1095.5 149v2M1096.5 135v1M1096.5 141v13M1097.5 145v3M1097.5 159v1M1098.5 149v5M1098.5 156v3M1099.5 147v3M1099.5 151v8M1100.5 140v1M1100.5 143v4M1100.5 149v7M1101.5 148v3M1102.5 136v1M1102.5 138v9M1102.5 148v3M1103.5 142v17M1104.5 134v4M1104.5 143v3M1104.5 149v10M1105.5 146v2M1106.5 141v3M1106.5 153v1M1107.5 142v1M1107.5 145v4M1107.5 152v1M1108.5 137v21M1109.5 134v6M1109.5 144v7M1110.5 136v4M1110.5 147v9M1111.5 131v1M1111.5 134v1M1111.5 140v12M1112.5 130v20M1113.5 145v6M1113.5 155v4M1114.5 145v3M1114.5 153v5M1115.5 143v7M1115.5 151v11M1115.5 165v1M1116.5 144v4M1116.5 159v2M1117.5 141v4M1117.5 151v3M1118.5 143v5M1118.5 155v3M1119.5 139v1M1119.5 141v1M1119.5 153v2M1120.5 144v3M1120.5 154v6M1121.5 140v6M1121.5 158v4M1122.5 141v6M1122.5 159v4M1123.5 144v8M1123.5 155v3M1124.5 143v4M1124.5 148v6M1124.5 155v1M1125.5 136v4M1125.5 149v8M1126.5 140v4M1126.5 148v9M1127.5 141v5M1127.5 150v3M1127.5 154v5M1128.5 150v10M1129.5 152v11M1130.5 148v1M1130.5 163v2M1131.5 143v5M1131.5 149v14M1132.5 134v3M1132.5 138v2M1132.5 141v2M1132.5 148v1M1133.5 134v9M1133.5 144v8M1134.5 139v17M1135.5 143v5M1135.5 154v1M1135.5 156v4M1136.5 141v11M1136.5 153v9M1137.5 149v7M1137.5 159v4M1138.5 146v7M1138.5 156v5M1139.5 139v4M1139.5 144v6M1140.5 140v5M1140.5 149v4M1140.5 155v6M1141.5 150v2M1141.5 154v1M1141.5 156v8M1142.5 151v13M1142.5 165v3M1143.5 150v9M1143.5 162v3M1144.5 146v11M1144.5 158v3M1144.5 163v3M1145.5 141v2M1145.5 148v10M1146.5 141v5M1146.5 155v1M1147.5 144v5M1147.5 153v2M1148.5 143v8M1148.5 152v7M1149.5 144v7M1149.5 157v1M1150.5 146v7M1150.5 154v1M1150.5 159v1M1151.5 144v8M1151.5 156v7M1152.5 143v7M1152.5 159v3M1153.5 143v4M1153.5 151v12M1154.5 152v4M1154.5 158v4M1155.5 151v3M1155.5 156v4M1155.5 162v7M1156.5 148v5M1156.5 166v1M1157.5 140v4M1157.5 150v1M1157.5 152v7M1158.5 144v3M1158.5 148v10M1159.5 144v1M1159.5 155v7M1160.5 139v12M1160.5 153v8M1161.5 144v11M1161.5 158v3M1162.5 146v9M1162.5 162v1M1163.5 158v2M1164.5 143v2M1164.5 146v1M1164.5 148v4M1164.5 153v7M1165.5 143v7M1165.5 153v1M1166.5 141v1M1166.5 150v11M1167.5 151v9M1167.5 161v2M1167.5 164v1M1168.5 148v5M1168.5 160v3M1169.5 143v2M1169.5 149v14M1169.5 167v1M1170.5 145v3M1170.5 149v7M1171.5 142v7M1171.5 153v1M1172.5 144v10M1172.5 165v1M1173.5 149v12M1173.5 163v2M1174.5 145v2M1174.5 148v7M1174.5 156v1M1174.5 158v4M1175.5 137v1M1175.5 143v4M1175.5 148v7M1176.5 138v3M1176.5 149v4M1177.5 145v5M1177.5 154v4M1178.5 143v2M1178.5 150v1M1178.5 156v3M1179.5 146v5M1179.5 152v7M1180.5 143v19M1181.5 144v4M1181.5 154v6M1182.5 155v6M1183.5 144v6M1183.5 153v10M1184.5 144v11M1184.5 162v2M1185.5 148v23M1186.5 155v5M1186.5 161v1M1186.5 163v8M1187.5 150v2M1187.5 153v7M1187.5 162v1M1188.5 150v3M1188.5 155v5M1189.5 144v1M1190.5 149v1M1190.5 153v7M1191.5 148v9M1191.5 166v1M1192.5 149v3M1192.5 160v10M1193.5 158v5M1194.5 146v6M1194.5 153v3M1195.5 144v3M1195.5 152v1M1195.5 157v4M1196.5 144v1M1196.5 161v1M1197.5 143v5M1197.5 149v4M1197.5 160v1M1198.5 141v8M1198.5 158v3M1199.5 141v5M1199.5 148v8M1199.5 157v3M1200.5 149v4M1200.5 154v3M1201.5 143v3M1202.5 152v6M1202.5 159v5M1203.5 151v5M1203.5 157v8M1204.5 154v2M1204.5 158v11M1205.5 150v6M1205.5 162v2M1206.5 150v8M1206.5 159v7M1207.5 144v3M1207.5 148v2M1207.5 156v2M1208.5 144v9M1208.5 155v2M1208.5 158v2M1209.5 147v11M1209.5 161v4M1210.5 149v3M1211.5 148v6M1211.5 157v10M1212.5 145v3M1212.5 149v1M1212.5 151v10M1213.5 143v4M1213.5 148v14M1214.5 145v6M1214.5 154v6M1215.5 144v4M1215.5 149v5M1216.5 147v6M1216.5 163v2M1217.5 153v3M1217.5 159v4M1218.5 158v11M1219.5 151v1M1219.5 157v1M1219.5 161v7M1220.5 149v2M1220.5 153v8M1221.5 142v5M1221.5 153v9M1222.5 147v6M1222.5 154v7M1223.5 151v9M1223.5 162v1M1223.5 166v1M1224.5 151v1M1224.5 153v3M1224.5 157v1M1224.5 159v3M1225.5 146v7M1225.5 160v7M1226.5 160v5M1227.5 144v6M1227.5 151v1M1227.5 156v9M1228.5 137v4M1228.5 142v8M1228.5 151v5M1229.5 137v11M1229.5 149v7M1230.5 145v9M1230.5 161v7M1231.5 149v5M1231.5 155v1M1231.5 157v4M1232.5 157v1M1232.5 165v4M1233.5 149v7M1233.5 160v4M1234.5 145v19M1235.5 149v3M1235.5 161v4M1236.5 143v4M1236.5 148v13M1237.5 140v8M1237.5 154v1M1238.5 142v1M1238.5 145v5M1238.5 151v6M1239.5 148v6M1239.5 155v4M1239.5 161v8M1240.5 141v13M1240.5 155v1M1240.5 164v2M1241.5 143v20M1242.5 149v2M1242.5 152v2M1242.5 155v5M1243.5 143v24M1244.5 140v4M1244.5 145v7M1245.5 143v6M1245.5 152v2M1246.5 141v5M1246.5 151v8M1247.5 147v7M1247.5 166v1M1248.5 152v6M1248.5 163v4M1249.5 147v3M1249.5 153v7M1249.5 161v1M1250.5 152v3M1250.5 156v6M1250.5 163v3M1251.5 151v6M1251.5 158v1M1251.5 160v5M1252.5 143v3M1252.5 153v2M1252.5 156v3M1253.5 140v12M1254.5 143v7M1254.5 151v2M1254.5 154v2M1254.5 157v3M1255.5 151v10M1256.5 143v2M1256.5 150v8M1256.5 159v4M1257.5 144v8M1257.5 153v2M1258.5 149v2M1258.5 153v1M1258.5 155v3M1259.5 144v6M1259.5 160v1M1260.5 149v4M1260.5 155v8M1261.5 145v5M1261.5 155v2M1262.5 147v2M1262.5 150v8M1262.5 166v3M1263.5 145v6M1264.5 147v1M1264.5 164v2M1265.5 148v4M1265.5 154v11M1266.5 148v1M1266.5 150v3M1266.5 161v6M1267.5 148v16" stroke="#00b200" stroke-width="1" fill="none"/>
<path d="M70.5 148v4M71.5 154v2M72.5 145v4M72.5 151v1M73.5 143v1M74.5 147v1M74.5 150v1M75.5 144v4M76.5 149v2M77.5 148v10M78.5 154v6M79.5 155v6M80.5 150v5M81.5 140v7M82.5 148v2M83.5 151v6M84.5 149v5M85.5 151v7M86.5 152v4M87.5 160v3M89.5 147v10M90.5 142v1M90.5 146v4M91.5 145v12M92.5 153v2M93.5 148v2M93.5 151v4M94.5 151v9M95.5 150v3M96.5 149v2M96.5 157v1M97.5 144v9M98.5 146v3M98.5 151v2M99.5 143v7M100.5 147v1M100.5 149v1M102.5 159v1M102.5 162v1M103.5 159v4M104.5 147v8M105.5 154v3M106.5 146v1M106.5 151v1M107.5 148v3M107.5 153v5M108.5 156v1M109.5 143v8M109.5 152v1M110.5 154v6M111.5 147v6M112.5 160v1M113.5 160v1M114.5 154v10M115.5 148v9M116.5 142v6M116.5 149v2M117.5 150v9M118.5 159v1M119.5 154v3M121.5 158v1M121.5 160v2M122.5 158v2M123.5 153v13M124.5 150v6M125.5 143v7M126.5 152v7M128.5 152v4M129.5 156v2M130.5 159v1M130.5 161v2M131.5 149v1M133.5 146v9M134.5 149v1M136.5 152v6M137.5 158v1M137.5 160v4M138.5 153v1M138.5 160v6M139.5 151v13M140.5 148v10M140.5 159v5M141.5 152v2M142.5 148v6M143.5 150v5M144.5 147v9M145.5 152v1M145.5 154v1M146.5 148v8M147.5 152v4M148.5 158v7M149.5 159v4M150.5 159v1M151.5 146v3M152.5 146v12M153.5 147v6M155.5 152v1M156.5 151v5M157.5 155v4M158.5 153v3M159.5 147v7M160.5 152v1M161.5 150v5M162.5 147v6M164.5 159v1M165.5 150v13M166.5 162v1M168.5 158v1M170.5 148v4M172.5 155v1M172.5 159v1M173.5 160v5M174.5 159v1M175.5 161v6M176.5 157v4M177.5 153v1M177.5 160v1M178.5 153v3M179.5 152v5M181.5 158v3M182.5 155v5M183.5 159v4M184.5 149v3M184.5 154v1M185.5 157v1M186.5 149v9M187.5 155v3M188.5 160v3M189.5 158v4M190.5 165v1M192.5 144v10M193.5 149v2M194.5 165v1M195.5 161v3M196.5 163v1M196.5 167v1M197.5 161v8M198.5 154v6M199.5 153v1M199.5 161v1M200.5 153v4M201.5 162v1M202.5 151v4M203.5 159v3M204.5 158v2M205.5 151v4M206.5 145v6M207.5 146v7M208.5 149v6M209.5 150v1M210.5 152v1M210.5 154v1M211.5 152v1M211.5 155v1M211.5 160v1M212.5 156v8M213.5 150v4M213.5 159v1M215.5 154v1M215.5 157v4M216.5 160v1M216.5 163v1M217.5 152v5M218.5 150v4M219.5 141v9M220.5 155v4M221.5 160v7M222.5 165v4M223.5 164v1M224.5 153v9M225.5 143v5M225.5 149v1M226.5 146v8M227.5 147v1M227.5 149v1M228.5 163v1M229.5 155v12M230.5 157v1M231.5 149v4M232.5 142v10M233.5 143v1M234.5 154v6M235.5 152v4M236.5 151v4M237.5 153v6M238.5 147v1M238.5 149v1M239.5 146v5M240.5 140v6M241.5 148v12M243.5 150v7M244.5 142v5M245.5 157v1M246.5 147v1M246.5 151v1M246.5 158v1M247.5 143v4M247.5 148v2M248.5 156v4M249.5 141v1M249.5 144v7M250.5 145v3M251.5 139v6M251.5 146v1M252.5 152v1M253.5 153v2M253.5 157v1M254.5 146v2M255.5 136v6M257.5 138v4M257.5 143v1M258.5 142v6M259.5 140v4M260.5 150v1M260.5 154v4M261.5 147v1M262.5 140v5M262.5 146v1M263.5 146v1M264.5 143v1M264.5 146v1M265.5 143v4M266.5 143v6M267.5 141v2M268.5 147v1M268.5 150v1M268.5 152v1M269.5 145v1M270.5 141v1M270.5 143v2M271.5 147v1M272.5 145v1M272.5 150v1M273.5 136v3M273.5 144v1M275.5 146v2M276.5 140v4M277.5 148v6M278.5 137v5M279.5 136v11M280.5 139v6M280.5 146v2M281.5 140v9M282.5 137v1M282.5 142v2M284.5 148v1M284.5 152v1M285.5 151v6M286.5 144v1M287.5 134v9M288.5 137v8M289.5 137v2M290.5 139v1M291.5 147v1M292.5 138v11M296.5 134v9M297.5 129v1M297.5 131v1M297.5 140v1M298.5 134v3M298.5 142v1M299.5 136v1M299.5 140v1M300.5 139v16M301.5 140v11M302.5 145v2M303.5 124v8M305.5 130v14M306.5 135v9M308.5 139v7M309.5 127v8M310.5 131v2M311.5 133v13M312.5 126v20M313.5 132v4M314.5 140v5M315.5 137v11M316.5 134v5M317.5 132v4M319.5 125v3M320.5 133v8M321.5 138v5M323.5 130v1M323.5 134v1M323.5 136v1M324.5 142v1M325.5 129v14M326.5 133v11M327.5 129v5M328.5 125v7M329.5 126v1M329.5 128v1M329.5 137v3M330.5 139v2M331.5 141v2M332.5 133v2M333.5 127v6M334.5 134v7M335.5 129v3M336.5 123v1M336.5 125v1M337.5 118v9M338.5 127v7M339.5 128v1M340.5 131v9M341.5 130v3M341.5 136v1M342.5 127v11M343.5 126v7M345.5 129v5M346.5 127v3M347.5 127v1M348.5 130v1M349.5 126v10M350.5 125v1M351.5 119v8M352.5 120v1M353.5 120v1M353.5 125v6M354.5 134v5M355.5 132v10M356.5 123v12M357.5 124v7M357.5 132v1M358.5 121v14M359.5 124v1M359.5 126v9M360.5 122v4M361.5 126v3M362.5 118v1M363.5 125v1M363.5 131v2M364.5 126v1M364.5 131v6M365.5 125v4M365.5 131v1M366.5 133v4M367.5 123v15M368.5 126v1M369.5 118v13M370.5 117v8M371.5 120v11M372.5 124v7M373.5 118v12M374.5 122v8M375.5 124v2M376.5 120v1M376.5 124v1M377.5 130v1M378.5 125v6M380.5 119v9M381.5 118v2M382.5 124v6M383.5 120v6M383.5 127v1M384.5 117v7M384.5 129v1M385.5 128v7M386.5 125v2M387.5 117v1M388.5 117v2M389.5 120v2M390.5 115v14M391.5 120v1M391.5 122v1M391.5 129v1M392.5 116v4M393.5 115v6M394.5 116v7M394.5 125v1M395.5 124v4M396.5 122v5M396.5 129v1M397.5 111v2M398.5 108v1M398.5 113v4M399.5 119v4M399.5 124v1M400.5 127v3M401.5 120v4M402.5 118v1M403.5 116v1M403.5 120v2M404.5 117v3M405.5 120v5M407.5 122v4M408.5 114v12M409.5 120v7M410.5 118v7M411.5 126v1M412.5 121v7M413.5 109v5M414.5 107v8M415.5 112v1M415.5 114v1M415.5 117v2M416.5 121v1M416.5 127v1M417.5 121v1M417.5 126v4M418.5 117v13M419.5 125v2M420.5 120v1M421.5 107v14M422.5 116v1M423.5 111v8M423.5 120v1M424.5 112v12M424.5 126v1M425.5 119v4M426.5 110v16M428.5 115v2M429.5 115v7M430.5 110v1M431.5 114v7M432.5 114v1M433.5 112v3M434.5 108v5M435.5 109v3M435.5 114v1M436.5 106v1M437.5 114v13M438.5 119v3M438.5 124v2M439.5 119v3M440.5 119v1M441.5 106v6M442.5 107v5M443.5 121v1M444.5 108v8M445.5 114v6M446.5 110v2M447.5 115v5M448.5 106v3M449.5 108v3M450.5 111v2M451.5 115v1M452.5 112v3M452.5 117v4M453.5 105v10M454.5 111v1M455.5 105v3M456.5 110v2M457.5 117v8M458.5 118v1M458.5 121v1M459.5 112v1M459.5 115v1M459.5 119v1M460.5 113v2M464.5 117v2M465.5 105v7M466.5 110v4M467.5 108v3M467.5 112v1M468.5 107v9M469.5 109v1M470.5 111v7M472.5 103v1M472.5 107v2M473.5 101v6M474.5 108v5M475.5 118v1M476.5 119v3M478.5 97v6M478.5 107v1M479.5 111v8M480.5 106v1M482.5 110v5M483.5 111v5M484.5 108v1M484.5 111v1M485.5 106v4M486.5 102v4M487.5 110v7M488.5 104v2M488.5 107v2M489.5 102v15M490.5 104v5M491.5 97v8M493.5 101v10M494.5 102v7M495.5 103v10M496.5 104v1M497.5 104v12M498.5 107v5M499.5 104v2M499.5 114v1M500.5 115v1M501.5 106v5M502.5 98v1M502.5 101v9M503.5 100v1M504.5 104v4M505.5 98v8M506.5 110v1M507.5 110v4M508.5 106v1M509.5 102v5M510.5 104v6M511.5 103v1M512.5 109v1M513.5 106v3M513.5 112v3M514.5 108v2M515.5 106v3M517.5 88v1M517.5 91v1M518.5 100v9M519.5 101v12M520.5 105v10M521.5 96v9M522.5 94v8M523.5 92v10M524.5 101v5M525.5 97v1M526.5 101v2M526.5 106v8M529.5 91v5M530.5 90v7M531.5 95v1M531.5 104v1M532.5 97v8M533.5 99v6M534.5 102v6M535.5 88v11M536.5 91v1M536.5 101v2M537.5 91v1M537.5 95v1M537.5 102v1M539.5 92v7M540.5 94v5M541.5 98v1M542.5 103v2M544.5 102v4M545.5 95v2M545.5 99v1M546.5 94v11M547.5 88v4M547.5 94v5M548.5 92v1M548.5 95v1M548.5 98v1M549.5 97v2M549.5 100v1M550.5 92v2M551.5 86v12M552.5 77v18M553.5 85v5M554.5 78v8M555.5 78v10M556.5 86v5M557.5 88v1M557.5 91v6M558.5 96v1M559.5 95v3M560.5 96v1M561.5 79v9M562.5 73v9M563.5 87v2M564.5 84v3M564.5 91v5M565.5 92v4M566.5 81v3M566.5 90v1M567.5 93v4M568.5 86v4M569.5 80v8M570.5 81v1M570.5 89v3M571.5 85v1M571.5 89v1M572.5 86v7M573.5 85v3M574.5 89v1M574.5 94v2M575.5 90v7M577.5 79v16M578.5 85v3M579.5 81v1M579.5 86v6M580.5 90v14M581.5 93v1M582.5 85v3M583.5 93v1M584.5 93v1M584.5 97v1M585.5 86v12M586.5 85v7M587.5 91v2M588.5 85v1M588.5 89v1M589.5 81v4M590.5 80v1M591.5 86v3M592.5 90v1M592.5 93v5M593.5 93v1M594.5 90v1M594.5 92v1M595.5 88v3M596.5 88v7M597.5 83v5M598.5 84v2M599.5 87v1M601.5 94v3M603.5 95v7M604.5 90v1M604.5 93v1M605.5 85v1M605.5 88v1M607.5 81v2M608.5 75v8M610.5 90v1M612.5 85v11M613.5 83v1M614.5 79v4M614.5 86v1M615.5 74v5M616.5 72v13M617.5 78v3M618.5 83v5M620.5 79v8M621.5 83v1M622.5 78v1M622.5 80v1M622.5 82v1M623.5 73v1M624.5 72v2M625.5 72v1M626.5 83v6M627.5 80v12M628.5 82v1M628.5 84v1M629.5 77v5M631.5 71v5M632.5 75v5M633.5 71v10M634.5 78v8M635.5 77v7M636.5 70v20M637.5 77v6M638.5 77v4M638.5 82v1M639.5 74v1M639.5 80v1M639.5 82v1M640.5 68v1M640.5 70v4M641.5 68v1M641.5 75v3M642.5 68v1M642.5 75v1M642.5 82v1M643.5 77v11M644.5 76v1M644.5 80v1M645.5 80v4M646.5 78v7M647.5 75v5M648.5 71v1M648.5 75v1M650.5 69v8M651.5 64v5M652.5 77v6M653.5 77v4M654.5 72v1M654.5 74v1M655.5 69v3M655.5 76v1M656.5 74v4M657.5 67v6M657.5 74v1M657.5 77v1M658.5 67v3M658.5 83v1M659.5 70v1M659.5 76v1M660.5 77v1M661.5 74v4M662.5 71v1M662.5 75v2M663.5 72v1M663.5 75v8M664.5 80v1M666.5 75v4M666.5 81v1M667.5 77v3M668.5 73v6M669.5 71v1M670.5 63v7M671.5 68v6M672.5 70v9M673.5 77v6M675.5 70v7M676.5 64v8M676.5 73v1M677.5 66v6M679.5 69v16M680.5 75v12M682.5 69v2M683.5 73v2M684.5 66v6M685.5 79v1M686.5 76v1M686.5 81v1M687.5 78v8M689.5 74v1M690.5 66v14M691.5 70v14M692.5 73v7M693.5 69v7M694.5 64v9M694.5 76v1M695.5 66v1M695.5 70v1M696.5 64v8M696.5 73v1M697.5 72v1M698.5 79v2M699.5 76v1M699.5 79v1M700.5 71v2M700.5 74v1M701.5 71v9M703.5 76v1M703.5 80v8M704.5 79v2M704.5 82v1M705.5 73v13M706.5 63v3M706.5 72v1M707.5 64v2M709.5 72v5M712.5 73v1M712.5 79v1M713.5 71v4M714.5 73v1M714.5 75v1M715.5 84v1M716.5 75v7M717.5 83v4M718.5 72v16M719.5 77v3M720.5 70v3M720.5 75v3M721.5 72v8M722.5 69v12M723.5 74v12M724.5 72v5M724.5 78v1M725.5 66v3M725.5 74v2M726.5 69v13M727.5 77v1M727.5 80v1M727.5 83v1M728.5 85v2M729.5 73v1M729.5 82v1M729.5 86v1M730.5 70v1M730.5 74v1M731.5 72v1M732.5 72v3M732.5 80v1M733.5 80v2M733.5 84v1M734.5 81v2M734.5 85v1M735.5 87v8M736.5 79v8M737.5 73v4M738.5 74v5M739.5 73v6M742.5 88v1M743.5 88v2M744.5 82v6M745.5 92v1M746.5 90v1M746.5 92v5M747.5 92v3M747.5 97v1M748.5 81v8M749.5 74v6M750.5 81v1M750.5 85v5M751.5 84v1M752.5 86v5M754.5 86v6M754.5 93v2M755.5 91v3M756.5 80v10M757.5 80v12M758.5 86v5M759.5 86v1M759.5 88v1M759.5 90v1M760.5 83v8M761.5 85v4M762.5 90v5M763.5 86v3M764.5 75v8M765.5 81v1M765.5 85v1M765.5 87v1M766.5 82v5M767.5 86v10M768.5 84v9M769.5 87v2M769.5 90v7M770.5 93v6M771.5 93v6M773.5 88v3M774.5 82v3M775.5 78v1M775.5 83v1M776.5 87v9M777.5 82v3M778.5 87v5M779.5 82v7M780.5 88v1M780.5 90v8M781.5 88v1M781.5 91v1M782.5 88v2M782.5 94v1M783.5 84v4M784.5 84v5M785.5 85v10M786.5 95v4M787.5 91v4M788.5 86v1M789.5 81v2M789.5 85v4M790.5 87v1M790.5 89v1M791.5 88v4M792.5 88v3M793.5 100v7M794.5 99v1M794.5 109v2M795.5 94v1M795.5 97v1M796.5 92v1M797.5 85v9M798.5 84v2M799.5 97v2M800.5 88v8M800.5 98v3M802.5 91v6M803.5 89v5M803.5 97v1M804.5 93v6M805.5 86v4M806.5 81v1M806.5 86v1M807.5 89v1M808.5 93v2M809.5 92v11M811.5 96v10M812.5 93v7M813.5 95v1M814.5 86v9M814.5 100v1M815.5 93v3M816.5 87v4M817.5 90v5M818.5 91v3M819.5 104v2M820.5 94v4M821.5 95v1M821.5 97v4M822.5 90v1M822.5 94v5M823.5 89v12M824.5 90v2M825.5 97v7M826.5 94v1M827.5 99v6M828.5 102v9M829.5 101v1M829.5 105v1M830.5 106v2M830.5 109v3M831.5 103v2M832.5 93v7M833.5 87v7M834.5 90v2M835.5 85v1M835.5 87v1M836.5 93v3M836.5 99v6M837.5 108v1M838.5 102v1M838.5 105v1M839.5 99v8M840.5 96v2M840.5 102v7M841.5 89v8M842.5 91v4M844.5 98v12M845.5 102v5M846.5 104v1M846.5 109v1M846.5 111v1M847.5 98v10M849.5 97v7M850.5 97v1M850.5 108v2M851.5 95v9M852.5 98v1M852.5 102v5M853.5 90v5M855.5 112v1M856.5 101v1M856.5 103v1M856.5 105v1M857.5 96v1M858.5 93v4M859.5 92v1M859.5 96v7M860.5 101v3M861.5 95v1M861.5 97v5M862.5 106v1M862.5 110v1M863.5 108v2M864.5 108v4M865.5 107v4M866.5 101v14M867.5 106v5M868.5 102v1M868.5 108v3M869.5 101v1M869.5 112v2M870.5 109v1M871.5 112v4M872.5 106v11M873.5 100v8M874.5 100v8M876.5 102v6M877.5 104v1M878.5 116v2M879.5 111v1M880.5 108v9M880.5 119v1M881.5 108v5M881.5 114v1M882.5 112v1M882.5 115v3M883.5 102v11M884.5 104v1M884.5 108v2M885.5 111v2M887.5 112v6M888.5 108v6M889.5 110v2M889.5 113v2M890.5 105v1M891.5 105v3M892.5 105v12M893.5 107v8M894.5 108v2M895.5 109v12M896.5 109v1M896.5 114v1M897.5 102v2M897.5 106v1M897.5 109v3M898.5 102v11M899.5 103v5M900.5 101v10M901.5 109v5M902.5 115v1M902.5 117v2M903.5 116v2M904.5 110v1M905.5 105v1M906.5 107v5M906.5 117v1M907.5 116v2M907.5 119v3M908.5 121v6M909.5 118v6M910.5 110v8M911.5 117v2M912.5 102v5M913.5 106v8M914.5 116v2M915.5 117v1M916.5 114v12M917.5 112v1M917.5 114v3M918.5 103v6M918.5 110v3M919.5 108v9M920.5 120v1M921.5 122v3M922.5 118v4M923.5 106v1M923.5 114v3M924.5 106v8M925.5 108v14M926.5 109v3M927.5 111v4M928.5 114v1M928.5 116v1M929.5 121v1M930.5 108v8M931.5 107v5M933.5 119v1M933.5 124v1M934.5 114v3M935.5 108v12M936.5 121v5M938.5 123v1M939.5 123v2M940.5 121v6M940.5 130v1M941.5 111v6M942.5 104v12M943.5 109v13M944.5 119v9M945.5 116v1M945.5 119v2M946.5 115v1M946.5 118v1M947.5 119v2M947.5 123v1M948.5 113v5M949.5 120v1M949.5 123v1M950.5 125v5M951.5 126v3M953.5 120v14M954.5 118v8M955.5 115v1M956.5 110v1M956.5 115v2M957.5 112v4M958.5 115v12M959.5 123v1M960.5 128v3M961.5 121v1M961.5 124v1M962.5 120v1M962.5 125v4M963.5 121v1M964.5 126v5M965.5 127v1M966.5 122v1M966.5 126v1M967.5 127v1M969.5 122v5M969.5 129v3M970.5 121v9M971.5 118v1M973.5 121v10M974.5 127v6M975.5 121v12M976.5 123v7M976.5 132v3M977.5 127v4M977.5 135v1M978.5 120v1M978.5 122v3M979.5 120v5M980.5 123v9M981.5 122v12M982.5 131v3M983.5 140v2M984.5 132v2M984.5 141v1M985.5 123v1M985.5 125v1M985.5 129v1M986.5 118v10M986.5 131v3M987.5 128v1M988.5 126v6M989.5 128v1M989.5 131v1M990.5 131v7M991.5 131v7M992.5 129v2M993.5 124v7M995.5 132v1M995.5 136v1M996.5 126v13M997.5 131v14M998.5 133v1M998.5 137v5M999.5 127v6M1001.5 130v2M1001.5 134v1M1002.5 133v3M1003.5 129v2M1003.5 134v1M1004.5 136v5M1005.5 130v9M1006.5 130v3M1007.5 134v3M1008.5 131v1M1008.5 133v1M1009.5 130v2M1010.5 123v11M1010.5 135v1M1012.5 134v4M1013.5 131v2M1013.5 136v1M1014.5 129v11M1015.5 131v4M1016.5 127v5M1018.5 126v5M1019.5 133v2M1020.5 131v12M1021.5 131v1M1021.5 133v5M1022.5 130v1M1022.5 132v4M1023.5 138v1M1024.5 136v6M1025.5 132v2M1025.5 136v3M1026.5 131v3M1026.5 135v1M1027.5 131v2M1028.5 143v1M1029.5 133v1M1029.5 135v1M1030.5 141v1M1031.5 136v5M1032.5 132v15M1034.5 127v5M1036.5 141v4M1037.5 127v10M1038.5 138v1M1039.5 137v2M1040.5 130v6M1041.5 127v6M1042.5 135v9M1043.5 132v5M1044.5 132v2M1045.5 132v6M1046.5 135v1M1048.5 139v1M1048.5 141v2M1049.5 141v1M1049.5 145v5M1050.5 137v1M1051.5 132v1M1052.5 129v14M1053.5 139v1M1053.5 141v1M1054.5 142v1M1054.5 144v1M1054.5 148v1M1055.5 139v1M1056.5 148v1M1057.5 145v4M1058.5 142v8M1059.5 141v3M1060.5 136v2M1061.5 134v4M1062.5 135v1M1062.5 139v2M1063.5 132v3M1063.5 137v2M1066.5 140v9M1067.5 137v1M1067.5 140v6M1068.5 130v9M1069.5 135v1M1069.5 138v1M1069.5 143v1M1070.5 138v5M1071.5 137v2M1071.5 145v1M1072.5 145v6M1073.5 145v8M1074.5 147v1M1075.5 139v10M1078.5 143v8M1079.5 140v5M1081.5 148v2M1082.5 146v9M1083.5 143v6M1084.5 145v2M1085.5 144v8M1087.5 140v1M1087.5 143v2M1088.5 139v13M1089.5 140v11M1090.5 148v6M1091.5 150v2M1092.5 150v2M1093.5 135v7M1093.5 144v1M1094.5 138v1M1094.5 140v7M1095.5 134v15M1096.5 136v5M1097.5 148v11M1098.5 154v2M1099.5 150v1M1100.5 147v2M1101.5 137v11M1102.5 147v1M1104.5 138v5M1104.5 146v3M1105.5 139v7M1106.5 144v9M1107.5 143v2M1107.5 149v3M1109.5 140v4M1110.5 140v7M1111.5 135v5M1113.5 151v4M1114.5 148v5M1115.5 150v1M1116.5 148v11M1117.5 145v6M1118.5 148v7M1119.5 142v11M1120.5 147v7M1121.5 146v12M1122.5 147v12M1123.5 152v3M1124.5 142v1M1124.5 147v1M1124.5 154v1M1125.5 140v9M1126.5 144v4M1127.5 146v4M1127.5 153v1M1128.5 148v2M1129.5 145v7M1130.5 149v14M1131.5 148v1M1132.5 137v1M1132.5 140v1M1132.5 143v5M1133.5 143v1M1135.5 148v6M1135.5 155v1M1136.5 152v1M1137.5 156v3M1138.5 153v3M1139.5 143v1M1140.5 145v4M1140.5 153v2M1141.5 152v2M1141.5 155v1M1142.5 164v1M1143.5 159v3M1144.5 157v1M1144.5 161v2M1145.5 143v5M1146.5 146v9M1147.5 149v4M1148.5 151v1M1149.5 151v6M1149.5 158v1M1150.5 153v1M1150.5 155v4M1151.5 152v4M1152.5 150v9M1153.5 147v4M1154.5 156v2M1155.5 154v2M1155.5 160v2M1156.5 153v13M1157.5 144v6M1157.5 151v1M1158.5 147v1M1159.5 145v10M1160.5 151v2M1161.5 155v3M1162.5 155v7M1163.5 150v8M1164.5 145v1M1164.5 147v1M1164.5 152v1M1165.5 150v3M1166.5 142v8M1167.5 160v1M1168.5 153v7M1169.5 145v4M1170.5 148v1M1171.5 149v4M1172.5 154v11M1173.5 161v2M1174.5 147v1M1174.5 155v1M1174.5 157v1M1175.5 147v1M1176.5 141v8M1177.5 150v4M1178.5 145v5M1178.5 151v5M1179.5 151v1M1181.5 148v6M1182.5 143v12M1183.5 150v3M1184.5 155v7M1186.5 160v1M1186.5 162v1M1187.5 152v1M1187.5 160v2M1188.5 153v2M1189.5 145v12M1190.5 150v3M1191.5 157v9M1192.5 152v8M1193.5 150v8M1194.5 152v1M1195.5 147v5M1195.5 153v4M1196.5 145v16M1197.5 148v1M1197.5 153v7M1198.5 149v9M1199.5 146v2M1199.5 156v1M1200.5 147v2M1200.5 153v1M1201.5 146v7M1202.5 145v7M1202.5 158v1M1203.5 156v1M1204.5 156v2M1205.5 156v6M1206.5 158v1M1207.5 147v1M1207.5 150v6M1208.5 153v2M1208.5 157v1M1209.5 158v3M1210.5 152v14M1211.5 154v3M1212.5 148v1M1212.5 150v1M1213.5 147v1M1214.5 144v1M1214.5 151v3M1215.5 148v1M1216.5 153v10M1217.5 156v3M1219.5 152v5M1219.5 158v3M1220.5 151v2M1221.5 147v6M1222.5 153v1M1223.5 160v2M1224.5 152v1M1224.5 156v1M1224.5 158v1M1225.5 153v7M1226.5 148v12M1227.5 150v1M1227.5 152v4M1228.5 150v1M1229.5 148v1M1230.5 154v7M1231.5 154v1M1231.5 156v1M1232.5 158v7M1233.5 156v4M1235.5 152v9M1236.5 147v1M1237.5 148v6M1238.5 150v1M1239.5 154v1M1239.5 159v2M1240.5 154v1M1240.5 156v8M1242.5 151v1M1242.5 154v1M1244.5 144v1M1245.5 149v3M1246.5 146v5M1247.5 154v12M1248.5 158v5M1249.5 150v3M1249.5 160v1M1250.5 155v1M1250.5 162v1M1251.5 157v1M1251.5 159v1M1252.5 146v7M1252.5 155v1M1253.5 152v5M1254.5 150v1M1254.5 153v1M1254.5 156v1M1255.5 146v5M1256.5 145v5M1256.5 158v1M1257.5 152v1M1257.5 155v5M1258.5 151v2M1258.5 154v1M1259.5 150v10M1260.5 153v2M1261.5 150v5M1262.5 149v1M1262.5 158v8M1263.5 151v8M1264.5 148v16M1265.5 152v2M1266.5 149v1M1266.5 153v8" stroke="#00cc00" stroke-width="1" fill="none"/>
<path d="M70.5 51v2M70.5 55v1M71.5 51v2M71.5 55v3M72.5 50v3M72.5 55v2M73.5 51v2M73.5 55v2M74.5 51v2M74.5 55v1M75.5 51v2M75.5 55v3M76.5 51v2M76.5 55v2M77.5 51v2M77.5 55v2M78.5 51v2M78.5 55v2M79.5 50v3M79.5 55v1M80.5 51v2M80.5 55v2M81.5 51v2M81.5 55v1M82.5 51v2M82.5 55v2M83.5 51v2M83.5 55v2M84.5 51v2M84.5 55v1M85.5 51v2M85.5 55v1M86.5 51v2M86.5 55v1M87.5 50v3M87.5 55v3M88.5 51v2M88.5 55v1M89.5 50v3M89.5 55v1M90.5 51v2M90.5 55v2M91.5 51v2M91.5 55v2M92.5 51v2M92.5 55v1M93.5 51v2M93.5 55v2M94.5 51v2M94.5 55v1M95.5 50v3M95.5 55v3M96.5 50v3M96.5 55v1M97.5 50v3M97.5 55v1M98.5 51v2M98.5 55v3M99.5 51v2M99.5 55v2M100.5 51v2M100.5 55v2M101.5 51v2M101.5 55v2M102.5 51v2M102.5 55v2M103.5 50v3M103.5 55v3M104.5 51v2M104.5 55v3M105.5 50v3M105.5 55v1M106.5 51v2M106.5 55v1M107.5 51v2M107.5 55v2M108.5 51v2M108.5 55v1M109.5 51v2M109.5 55v1M110.5 50v3M110.5 55v2M111.5 51v2M111.5 55v3M112.5 51v2M112.5 55v2M113.5 51v2M113.5 55v3M114.5 51v2M114.5 55v2M115.5 51v2M115.5 55v2M116.5 51v2M116.5 55v3M117.5 51v2M117.5 55v3M118.5 51v2M118.5 55v1M119.5 50v3M119.5 55v2M120.5 51v2M120.5 55v2M121.5 51v2M121.5 55v2M122.5 51v2M122.5 55v2M123.5 50v3M123.5 55v2M124.5 51v2M124.5 55v3M125.5 51v2M125.5 55v1M126.5 50v3M126.5 55v2M127.5 50v3M127.5 55v2M128.5 51v2M128.5 55v1M129.5 50v3M129.5 55v1M130.5 50v3M130.5 55v3M131.5 50v3M131.5 55v2M132.5 51v2M132.5 55v1M133.5 50v3M133.5 55v1M134.5 51v2M134.5 55v2M135.5 50v3M135.5 55v3M136.5 51v2M136.5 55v3M137.5 50v3M137.5 55v2M138.5 51v2M138.5 55v2M139.5 50v3M139.5 55v1M140.5 50v3M140.5 55v2M141.5 50v3M141.5 55v1M142.5 50v3M142.5 55v2M143.5 51v2M143.5 55v2M144.5 51v2M144.5 55v2M145.5 51v2M145.5 55v2M146.5 51v2M146.5 55v1M147.5 50v3M147.5 55v2M148.5 50v3M148.5 55v2M149.5 50v3M149.5 55v3M150.5 50v3M150.5 55v2M151.5 51v2M151.5 55v2M152.5 50v3M152.5 55v1M153.5 51v2M153.5 55v2M154.5 51v2M154.5 55v2M155.5 50v3M155.5 55v1M156.5 50v3M156.5 55v1M157.5 51v2M157.5 55v3M158.5 50v3M158.5 55v3M159.5 50v3M159.5 55v2M160.5 51v2M160.5 55v2M161.5 50v3M161.5 55v3M162.5 51v2M162.5 55v2M163.5 50v3M163.5 55v2M164.5 50v3M164.5 55v2M165.5 51v2M165.5 55v2M166.5 50v3M166.5 55v2M167.5 51v2M167.5 55v3M168.5 50v3M168.5 55v1M169.5 51v2M169.5 55v1M170.5 50v3M170.5 55v2M171.5 50v3M171.5 55v2M172.5 51v2M172.5 55v2M173.5 51v2M173.5 55v1M174.5 50v3M174.5 55v1M175.5 50v3M175.5 55v2M176.5 50v3M176.5 55v1M177.5 51v2M177.5 55v2M178.5 50v3M178.5 55v2M179.5 50v3M179.5 55v1M180.5 51v2M180.5 55v3M181.5 50v3M181.5 55v3M182.5 51v2M182.5 55v3M183.5 51v2M183.5 55v3M184.5 51v2M184.5 55v2M185.5 51v2M185.5 55v3M186.5 50v3M186.5 55v2M187.5 51v2M187.5 55v3M188.5 50v3M188.5 55v2M189.5 50v3M189.5 55v2M190.5 50v3M190.5 55v3M191.5 50v3M191.5 55v2M192.5 50v3M192.5 55v3M193.5 51v2M193.5 55v3M194.5 51v2M194.5 55v3M195.5 51v2M195.5 55v1M196.5 50v3M196.5 55v2M197.5 50v3M197.5 55v2M198.5 50v3M198.5 55v3M199.5 50v3M199.5 55v1M200.5 51v2M200.5 55v2M201.5 50v3M201.5 55v3M202.5 50v3M202.5 55v3M203.5 50v3M203.5 55v3M204.5 51v2M204.5 55v2M205.5 50v3M205.5 55v1M206.5 51v2M206.5 55v2M207.5 51v2M207.5 55v3M208.5 51v2M208.5 55v3M209.5 51v2M209.5 55v2M210.5 51v2M210.5 55v1M211.5 51v2M211.5 55v2M212.5 51v2M212.5 55v2M213.5 51v2M213.5 55v2M214.5 51v2M214.5 55v3M215.5 50v3M215.5 55v2M216.5 51v2M216.5 55v2M217.5 51v2M217.5 55v3M218.5 50v3M218.5 55v2M219.5 50v3M219.5 55v1M220.5 51v2M220.5 55v2M221.5 50v3M221.5 55v2M222.5 50v3M222.5 55v2M223.5 51v2M223.5 55v3M224.5 51v2M224.5 55v3M225.5 50v3M225.5 55v2M226.5 51v2M226.5 55v2M227.5 50v3M227.5 55v2M228.5 51v2M228.5 55v2M229.5 51v2M229.5 55v1M230.5 50v3M230.5 55v1M231.5 50v3M231.5 55v1M232.5 51v2M232.5 55v2M233.5 50v3M233.5 55v1M234.5 51v2M234.5 55v2M235.5 50v3M235.5 55v2M236.5 51v2M236.5 55v3M237.5 51v2M237.5 55v2M238.5 51v2M238.5 55v2M239.5 50v3M239.5 55v2M240.5 51v2M240.5 55v2M241.5 51v2M241.5 55v3M242.5 51v2M242.5 55v2M243.5 50v3M243.5 55v3M244.5 50v3M244.5 55v2M245.5 51v2M245.5 55v2M246.5 50v3M246.5 55v3M247.5 51v2M247.5 55v2M248.5 50v3M248.5 55v2M249.5 50v3M249.5 55v1M250.5 50v3M250.5 55v1M251.5 51v2M251.5 55v1M252.5 50v3M252.5 55v1M253.5 51v2M253.5 55v1M254.5 51v2M254.5 55v3M255.5 51v2M255.5 55v3M256.5 50v3M256.5 55v3M257.5 51v2M257.5 55v2M258.5 51v2M258.5 55v1M259.5 50v3M259.5 55v2M260.5 50v3M260.5 55v3M261.5 50v3M261.5 55v2M262.5 51v2M262.5 55v3M263.5 51v2M263.5 55v3M264.5 50v3M264.5 55v2M265.5 51v2M265.5 55v1M266.5 51v2M266.5 55v2M267.5 50v3M267.5 55v1M268.5 50v3M268.5 55v2M269.5 51v2M269.5 55v3M270.5 50v3M270.5 55v1M271.5 50v3M271.5 55v2M272.5 51v2M272.5 55v2M273.5 51v2M273.5 55v1M274.5 50v3M274.5 55v2M275.5 51v2M275.5 55v2M276.5 50v3M276.5 55v1M277.5 50v3M277.5 55v3M278.5 51v2M278.5 55v3M279.5 50v3M279.5 55v1M280.5 50v3M280.5 55v1M281.5 51v2M281.5 55v2M282.5 51v2M282.5 55v2M283.5 50v3M283.5 55v2M284.5 51v2M284.5 55v3M285.5 51v2M285.5 55v3M286.5 51v2M286.5 55v3M287.5 51v2M287.5 55v3M288.5 51v2M288.5 55v2M289.5 51v2M289.5 55v3M290.5 51v2M290.5 55v1M291.5 50v3M291.5 55v3M292.5 51v2M292.5 55v2M293.5 51v2M293.5 55v2M294.5 50v3M294.5 55v2M295.5 51v2M295.5 55v2M296.5 50v3M296.5 55v2M297.5 50v3M297.5 55v2M298.5 51v2M298.5 55v1M299.5 51v2M299.5 55v3M300.5 51v2M300.5 55v1M301.5 51v2M301.5 55v1M302.5 50v3M302.5 55v1M303.5 51v2M303.5 55v3M304.5 51v2M304.5 55v2M305.5 50v3M305.5 55v2M306.5 50v3M306.5 55v3M307.5 51v2M307.5 55v1M308.5 51v2M308.5 55v3M309.5 50v3M309.5 55v2M310.5 50v3M310.5 55v2M311.5 51v2M311.5 55v2M312.5 50v3M312.5 55v2M313.5 50v3M313.5 55v2M314.5 50v3M314.5 55v2M315.5 50v3M315.5 55v2M316.5 51v2M316.5 55v3M317.5 51v2M317.5 55v2M318.5 50v3M318.5 55v2M319.5 51v2M319.5 55v1M320.5 51v2M320.5 55v1M321.5 51v2M321.5 55v1M322.5 51v2M322.5 55v2M323.5 51v2M323.5 55v2M324.5 51v2M324.5 55v2M325.5 50v3M325.5 55v2M326.5 51v2M326.5 55v3M327.5 50v3M327.5 55v2M328.5 51v2M328.5 55v1M329.5 50v3M329.5 55v2M330.5 51v2M330.5 55v2M331.5 51v2M331.5 55v3M332.5 51v2M332.5 55v3M333.5 50v3M333.5 55v1M334.5 51v2M334.5 55v3M335.5 51v2M335.5 55v1M336.5 50v3M336.5 55v2M337.5 50v3M337.5 55v1M338.5 51v2M338.5 55v2M339.5 51v2M339.5 55v3M340.5 51v2M340.5 55v1M341.5 50v3M341.5 55v2M342.5 50v3M342.5 55v1M343.5 51v2M343.5 55v2M344.5 51v2M344.5 55v2M345.5 50v3M345.5 55v2M346.5 51v2M346.5 55v1M347.5 51v2M347.5 55v1M348.5 50v3M348.5 55v2M349.5 50v3M349.5 55v3M350.5 50v3M350.5 55v3M351.5 51v2M351.5 55v1M352.5 50v3M352.5 55v2M353.5 50v3M353.5 55v1M354.5 51v2M354.5 55v1M355.5 50v3M355.5 55v1M356.5 50v3M356.5 55v2M357.5 51v2M357.5 55v3M358.5 50v3M358.5 55v3M359.5 51v2M359.5 55v1M360.5 50v3M360.5 55v2M361.5 51v2M361.5 55v3M362.5 51v2M362.5 55v2M363.5 50v3M363.5 55v2M364.5 50v3M364.5 55v2M365.5 51v2M365.5 55v2M366.5 51v2M366.5 55v3M367.5 50v3M367.5 55v2M368.5 51v2M368.5 55v2M369.5 50v3M369.5 55v1M370.5 51v2M370.5 55v3M371.5 50v3M371.5 55v2M372.5 51v2M372.5 55v2M373.5 51v2M373.5 55v1M374.5 50v3M374.5 55v2M375.5 51v2M375.5 55v2M376.5 51v2M376.5 55v2M377.5 50v3M377.5 55v2M378.5 50v3M378.5 55v1M379.5 51v2M379.5 55v3M380.5 50v3M380.5 55v2M381.5 51v2M381.5 55v2M382.5 51v2M382.5 55v2M383.5 51v2M383.5 55v2M384.5 51v2M384.5 55v3M385.5 50v3M385.5 55v2M386.5 51v2M386.5 55v1M387.5 51v2M387.5 55v2M388.5 51v2M388.5 55v2M389.5 50v3M389.5 55v1M390.5 51v2M390.5 55v3M391.5 51v2M391.5 55v3M392.5 51v2M392.5 55v2M393.5 50v3M393.5 55v3M394.5 51v2M394.5 55v2M395.5 51v2M395.5 55v2M396.5 51v2M396.5 55v2M397.5 50v3M397.5 55v1M398.5 50v3M398.5 55v1M399.5 50v3M399.5 55v3M400.5 51v2M400.5 55v2M401.5 51v2M401.5 55v2M402.5 51v2M402.5 55v3M403.5 51v2M403.5 55v2M404.5 51v2M404.5 55v2M405.5 50v3M405.5 55v2M406.5 50v3M406.5 55v1M407.5 51v2M407.5 55v2M408.5 50v3M408.5 55v3M409.5 51v2M409.5 55v3M410.5 51v2M410.5 55v2M411.5 50v3M411.5 55v1M412.5 51v2M412.5 55v2M413.5 50v3M413.5 55v3M414.5 50v3M414.5 55v1M415.5 50v3M415.5 55v3M416.5 51v2M416.5 55v2M417.5 51v2M417.5 55v1M418.5 51v2M418.5 55v3M419.5 50v3M419.5 55v1M420.5 51v2M420.5 55v2M421.5 50v3M421.5 55v3M422.5 51v2M422.5 55v2M423.5 51v2M423.5 55v2M424.5 50v3M424.5 55v2M425.5 50v3M425.5 55v3M426.5 50v3M426.5 55v2M427.5 50v3M427.5 55v2M428.5 50v3M428.5 55v2M429.5 51v2M429.5 55v2M430.5 50v3M430.5 55v2M431.5 50v3M431.5 55v2M432.5 51v2M432.5 55v1M433.5 51v2M433.5 55v2M434.5 51v2M434.5 55v3M435.5 50v3M435.5 55v2M436.5 50v3M436.5 55v1M437.5 50v3M437.5 55v2M438.5 51v2M438.5 55v2M439.5 51v2M439.5 55v2M440.5 51v2M440.5 55v2M441.5 51v2M441.5 55v1M442.5 51v2M442.5 55v2M443.5 51v2M443.5 55v3M444.5 51v2M444.5 55v2M445.5 51v2M445.5 55v1M446.5 51v2M446.5 55v2M447.5 51v2M447.5 55v1M448.5 51v2M448.5 55v2M449.5 50v3M449.5 55v3M450.5 50v3M450.5 55v1M451.5 51v2M451.5 55v1M452.5 50v3M452.5 55v1M453.5 50v3M453.5 55v3M454.5 50v3M454.5 55v3M455.5 50v3M455.5 55v2M456.5 51v2M456.5 55v3M457.5 50v3M457.5 55v2M458.5 50v3M458.5 55v1M459.5 51v2M459.5 55v2M460.5 51v2M460.5 55v2M461.5 50v3M461.5 55v2M462.5 50v3M462.5 55v3M463.5 51v2M463.5 55v2M464.5 50v3M464.5 55v2M465.5 50v3M465.5 55v2M466.5 50v3M466.5 55v2M467.5 50v3M467.5 55v3M468.5 51v2M468.5 55v3M469.5 50v3M469.5 55v2M470.5 50v3M470.5 55v3M471.5 51v2M471.5 55v1M472.5 51v2M472.5 55v2M473.5 50v3M473.5 55v3M474.5 50v3M474.5 55v3M475.5 51v2M475.5 55v2M476.5 51v2M476.5 55v2M477.5 50v3M477.5 55v3M478.5 51v2M478.5 55v2M479.5 51v2M479.5 55v2M480.5 51v2M480.5 55v2M481.5 51v2M481.5 55v2M482.5 51v2M482.5 55v1M483.5 50v3M483.5 55v2M484.5 50v3M484.5 55v1M485.5 50v3M485.5 55v3M486.5 50v3M486.5 55v1M487.5 50v3M487.5 55v2M488.5 50v3M488.5 55v2M489.5 50v3M489.5 55v2M490.5 51v2M490.5 55v3M491.5 51v2M491.5 55v2M492.5 50v3M492.5 55v1M493.5 50v3M493.5 55v2M494.5 51v2M494.5 55v1M495.5 51v2M495.5 55v2M496.5 50v3M496.5 55v1M497.5 50v3M497.5 55v1M498.5 50v3M498.5 55v2M499.5 50v3M499.5 55v1M500.5 50v3M500.5 55v2M501.5 50v3M501.5 55v2M502.5 51v2M502.5 55v2M503.5 51v2M503.5 55v3M504.5 50v3M504.5 55v2M505.5 50v3M505.5 55v2M506.5 51v2M506.5 55v2M507.5 51v2M507.5 55v2M508.5 50v3M508.5 55v1M509.5 51v2M509.5 55v3M510.5 50v3M510.5 55v3M511.5 51v2M511.5 55v1M512.5 50v3M512.5 55v3M513.5 51v2M513.5 55v2M514.5 51v2M514.5 55v3M515.5 51v2M515.5 55v2M516.5 50v3M516.5 55v2M517.5 50v3M517.5 55v2M518.5 50v3M518.5 55v3M519.5 51v2M519.5 55v3M520.5 50v3M520.5 55v2M521.5 50v3M521.5 55v3M522.5 50v3M522.5 55v2M523.5 51v2M523.5 55v1M524.5 50v3M524.5 55v2M525.5 50v3M525.5 55v1M526.5 51v2M526.5 55v1M527.5 51v2M527.5 55v1M528.5 51v2M528.5 55v3M529.5 50v3M529.5 55v3M530.5 50v3M530.5 55v1M531.5 51v2M531.5 55v2M532.5 51v2M532.5 55v2M533.5 51v2M533.5 55v2M534.5 50v3M534.5 55v3M535.5 51v2M535.5 55v2M536.5 50v3M536.5 55v3M537.5 50v3M537.5 55v1M538.5 51v2M538.5 55v2M539.5 50v3M539.5 55v2M540.5 50v3M540.5 55v1M541.5 50v3M541.5 55v2M542.5 50v3M542.5 55v2M543.5 50v3M543.5 55v2M544.5 50v3M544.5 55v3M545.5 50v3M545.5 55v1M546.5 50v3M546.5 55v3M547.5 50v3M547.5 55v3M548.5 50v3M548.5 55v3M549.5 51v2M549.5 55v3M550.5 50v3M550.5 55v1M551.5 51v2M551.5 55v3M552.5 51v2M552.5 55v3M553.5 51v2M553.5 55v2M554.5 50v3M554.5 55v1M555.5 51v2M555.5 55v2M556.5 51v2M556.5 55v3M557.5 50v3M557.5 55v1M558.5 51v2M558.5 55v1M559.5 50v3M559.5 55v1M560.5 51v2M560.5 55v2M561.5 51v2M561.5 55v2M562.5 51v2M562.5 55v1M563.5 50v3M563.5 55v2M564.5 51v2M564.5 55v2M565.5 50v3M565.5 55v2M566.5 51v2M566.5 55v3M567.5 50v3M567.5 55v2M568.5 50v3M568.5 55v2M569.5 50v3M569.5 55v2M570.5 51v2M570.5 55v2M571.5 51v2M571.5 55v2M572.5 50v3M572.5 55v2M573.5 51v2M573.5 55v3M574.5 50v3M574.5 55v2M575.5 50v3M575.5 55v2M576.5 51v2M576.5 55v3M577.5 51v2M577.5 55v3M578.5 50v3M578.5 55v3M579.5 50v3M579.5 55v1M580.5 50v3M580.5 55v2M581.5 51v2M581.5 55v1M582.5 51v2M582.5 55v2M583.5 51v2M583.5 55v2M584.5 50v3M584.5 55v1M585.5 51v2M585.5 55v2M586.5 50v3M586.5 55v2M587.5 50v3M587.5 55v2M588.5 51v2M588.5 55v2M589.5 50v3M589.5 55v3M590.5 51v2M590.5 55v1M591.5 50v3M591.5 55v2M592.5 51v2M592.5 55v1M593.5 51v2M593.5 55v2M594.5 50v3M594.5 55v2M595.5 51v2M595.5 55v2M596.5 50v3M596.5 55v3M597.5 50v3M597.5 55v3M598.5 50v3M598.5 55v2M599.5 50v3M599.5 55v2M600.5 50v3M600.5 55v3M601.5 51v2M601.5 55v2M602.5 50v3M602.5 55v3M603.5 51v2M603.5 55v2M604.5 51v2M604.5 55v2M605.5 50v3M605.5 55v2M606.5 50v3M606.5 55v1M607.5 51v2M607.5 55v2M608.5 50v3M608.5 55v3M609.5 51v2M609.5 55v2M610.5 51v2M610.5 55v1M611.5 50v3M611.5 55v3M612.5 50v3M612.5 55v2M613.5 51v2M613.5 55v2M614.5 51v2M614.5 55v1M615.5 51v2M615.5 55v1M616.5 51v2M616.5 55v3M617.5 51v2M617.5 55v2M618.5 50v3M618.5 55v3M619.5 51v2M619.5 55v1M620.5 51v2M620.5 55v3M621.5 51v2M621.5 55v1M622.5 50v3M622.5 55v1M623.5 50v3M623.5 55v2M624.5 51v2M624.5 55v2M625.5 50v3M625.5 55v3M626.5 51v2M626.5 55v2M627.5 51v2M627.5 55v1M628.5 50v3M628.5 55v2M629.5 51v2M629.5 55v1M630.5 50v3M630.5 55v2M631.5 50v3M631.5 55v1M632.5 51v2M632.5 55v3M633.5 51v2M633.5 55v3M634.5 51v2M634.5 55v1M635.5 50v3M635.5 55v2M636.5 51v2M636.5 55v2M637.5 51v2M637.5 55v3M638.5 50v3M638.5 55v1M639.5 50v3M639.5 55v2M640.5 51v2M640.5 55v3M641.5 50v3M641.5 55v1M642.5 50v3M642.5 55v2M643.5 50v3M643.5 55v2M644.5 51v2M644.5 55v2M645.5 51v2M645.5 55v2M646.5 51v2M646.5 55v3M647.5 50v3M647.5 55v1M648.5 51v2M648.5 55v3M649.5 51v2M649.5 55v2M650.5 50v3M650.5 55v2M651.5 51v2M651.5 55v2M652.5 51v2M652.5 55v1M653.5 50v3M653.5 55v1M654.5 50v3M654.5 55v1M655.5 50v3M655.5 55v2M656.5 51v2M656.5 55v2M657.5 50v3M657.5 55v1M658.5 50v3M658.5 55v3M659.5 51v2M659.5 55v3M660.5 51v2M660.5 55v2M661.5 51v2M661.5 55v1M662.5 51v2M662.5 55v2M663.5 50v3M663.5 55v1M664.5 50v3M664.5 55v2M665.5 51v2M665.5 55v3M666.5 50v3M666.5 55v2M667.5 51v2M667.5 55v1M668.5 51v2M668.5 55v1M669.5 6v2M669.5 10v46M670.5 6v2M670.5 10v1M671.5 6v2M671.5 10v1M672.5 6v2M672.5 10v1M673.5 6v2M674.5 6v2M674.5 10v2M675.5 6v2M675.5 10v46M676.5 51v2M676.5 55v2M677.5 50v3M677.5 55v2M678.5 50v3M678.5 55v3M679.5 50v3M679.5 55v3M680.5 51v2M680.5 55v3M681.5 50v3M681.5 55v2M682.5 51v2M682.5 55v2M683.5 50v3M683.5 55v3M684.5 50v3M684.5 55v2M685.5 51v2M685.5 55v3M686.5 51v2M686.5 55v3M687.5 50v3M687.5 55v3M688.5 50v3M688.5 55v2M689.5 51v2M689.5 55v2M690.5 51v2M690.5 55v1M691.5 51v2M691.5 55v1M692.5 51v2M692.5 55v1M693.5 51v2M693.5 55v3M694.5 50v3M694.5 55v2M695.5 50v3M695.5 55v3M696.5 50v3M696.5 55v1M697.5 50v3M697.5 55v2M698.5 50v3M698.5 55v3M699.5 50v3M699.5 55v1M700.5 50v3M700.5 55v3M701.5 50v3M701.5 55v1M702.5 50v3M702.5 55v1M703.5 50v3M703.5 55v1M704.5 50v3M704.5 55v3M705.5 50v3M705.5 55v2M706.5 50v3M706.5 55v1M707.5 50v3M707.5 55v1M708.5 51v2M708.5 55v2M709.5 50v3M709.5 55v2M710.5 51v2M710.5 55v3M711.5 51v2M711.5 55v3M712.5 51v2M712.5 55v1M713.5 50v3M713.5 55v2M714.5 51v2M714.5 55v3M715.5 50v3M715.5 55v3M716.5 50v3M716.5 55v2M717.5 51v2M717.5 55v2M718.5 51v2M718.5 55v2M719.5 51v2M719.5 55v3M720.5 51v2M720.5 55v3M721.5 51v2M721.5 55v1M722.5 51v2M722.5 55v2M723.5 51v2M723.5 55v2M724.5 51v2M724.5 55v1M725.5 51v2M725.5 55v2M726.5 51v2M726.5 55v1M727.5 50v3M727.5 55v2M728.5 50v3M728.5 55v2M729.5 51v2M729.5 55v2M730.5 50v3M730.5 55v3M731.5 51v2M731.5 55v3M732.5 51v2M732.5 55v3M733.5 51v2M733.5 55v2M734.5 50v3M734.5 55v2M735.5 50v3M735.5 55v3M736.5 51v2M736.5 55v3M737.5 51v2M737.5 55v2M738.5 51v2M738.5 55v2M739.5 50v3M739.5 55v3M740.5 50v3M740.5 55v3M741.5 50v3M741.5 55v1M742.5 51v2M742.5 55v1M743.5 51v2M743.5 55v1M744.5 51v2M744.5 55v2M745.5 50v3M745.5 55v2M746.5 51v2M746.5 55v3M747.5 50v3M747.5 55v3M748.5 51v2M748.5 55v1M749.5 51v2M749.5 55v2M750.5 51v2M750.5 55v1M751.5 51v2M751.5 55v2M752.5 51v2M752.5 55v3M753.5 50v3M753.5 55v2M754.5 51v2M754.5 55v2M755.5 50v3M755.5 55v2M756.5 50v3M756.5 55v2M757.5 50v3M757.5 55v2M758.5 51v2M758.5 55v1M759.5 51v2M759.5 55v3M760.5 51v2M760.5 55v2M761.5 50v3M761.5 55v2M762.5 50v3M762.5 55v2M763.5 51v2M763.5 55v3M764.5 51v2M764.5 55v1M765.5 51v2M765.5 55v2M766.5 51v2M766.5 55v3M767.5 50v3M767.5 55v3M768.5 51v2M768.5 55v2M769.5 50v3M769.5 55v2M770.5 51v2M770.5 55v1M771.5 51v2M771.5 55v3M772.5 51v2M772.5 55v1M773.5 50v3M773.5 55v2M774.5 50v3M774.5 55v2M775.5 51v2M775.5 55v2M776.5 51v2M776.5 55v2M777.5 50v3M777.5 55v1M778.5 51v2M778.5 55v1M779.5 50v3M779.5 55v2M780.5 51v2M780.5 55v3M781.5 51v2M781.5 55v3M782.5 51v2M782.5 55v1M783.5 51v2M783.5 55v2M784.5 50v3M784.5 55v3M785.5 50v3M785.5 55v1M786.5 51v2M786.5 55v3M787.5 50v3M787.5 55v3M788.5 51v2M788.5 55v2M789.5 50v3M789.5 55v2M790.5 50v3M790.5 55v2M791.5 50v3M791.5 55v2M792.5 50v3M792.5 55v2M793.5 51v2M793.5 55v3M794.5 50v3M794.5 55v1M795.5 50v3M795.5 55v2M796.5 51v2M796.5 55v3M797.5 50v3M797.5 55v2M798.5 50v3M798.5 55v2M799.5 50v3M799.5 55v2M800.5 50v3M800.5 55v1M801.5 51v2M801.5 55v2M802.5 50v3M802.5 55v1M803.5 50v3M803.5 55v3M804.5 50v3M804.5 55v3M805.5 51v2M805.5 55v1M806.5 51v2M806.5 55v1M807.5 51v2M807.5 55v3M808.5 50v3M808.5 55v1M809.5 51v2M809.5 55v2M810.5 50v3M810.5 55v2M811.5 51v2M811.5 55v2M812.5 50v3M812.5 55v3M813.5 51v2M813.5 55v2M814.5 51v2M814.5 55v2M815.5 51v2M815.5 55v2M816.5 51v2M816.5 55v1M817.5 51v2M817.5 55v2M818.5 50v3M818.5 55v2M819.5 50v3M819.5 55v3M820.5 51v2M820.5 55v1M821.5 51v2M821.5 55v2M822.5 50v3M822.5 55v2M823.5 51v2M823.5 55v2M824.5 51v2M824.5 55v2M825.5 50v3M825.5 55v1M826.5 50v3M826.5 55v3M827.5 50v3M827.5 55v1M828.5 51v2M828.5 55v1M829.5 51v2M829.5 55v3M830.5 51v2M830.5 55v2M831.5 50v3M831.5 55v2M832.5 51v2M832.5 55v2M833.5 50v3M833.5 55v2M834.5 51v2M834.5 55v3M835.5 50v3M835.5 55v3M836.5 51v2M836.5 55v2M837.5 51v2M837.5 55v2M838.5 51v2M838.5 55v3M839.5 51v2M839.5 55v3M840.5 50v3M840.5 55v2M841.5 51v2M841.5 55v2M842.5 50v3M842.5 55v3M843.5 50v3M843.5 55v3M844.5 51v2M844.5 55v3M845.5 50v3M845.5 55v3M846.5 50v3M846.5 55v1M847.5 51v2M847.5 55v3M848.5 51v2M848.5 55v1M849.5 51v2M849.5 55v2M850.5 50v3M850.5 55v2M851.5 50v3M851.5 55v3M852.5 51v2M852.5 55v2M853.5 51v2M853.5 55v2M854.5 50v3M854.5 55v2M855.5 50v3M855.5 55v1M856.5 51v2M856.5 55v2M857.5 51v2M857.5 55v1M858.5 51v2M858.5 55v2M859.5 51v2M859.5 55v2M860.5 50v3M860.5 55v2M861.5 50v3M861.5 55v3M862.5 51v2M862.5 55v3M863.5 51v2M863.5 55v2M864.5 51v2M864.5 55v1M865.5 50v3M865.5 55v2M866.5 51v2M866.5 55v3M867.5 50v3M867.5 55v2M868.5 50v3M868.5 55v3M869.5 51v2M869.5 55v2M870.5 50v3M870.5 55v3M871.5 50v3M871.5 55v2M872.5 51v2M872.5 55v2M873.5 50v3M873.5 55v1M874.5 51v2M874.5 55v1M875.5 51v2M875.5 55v3M876.5 50v3M876.5 55v1M877.5 51v2M877.5 55v1M878.5 50v3M878.5 55v2M879.5 51v2M879.5 55v2M880.5 51v2M880.5 55v2M881.5 51v2M881.5 55v1M882.5 50v3M882.5 55v1M883.5 50v3M883.5 55v2M884.5 50v3M884.5 55v3M885.5 50v3M885.5 55v3M886.5 51v2M886.5 55v2M887.5 51v2M887.5 55v3M888.5 50v3M888.5 55v3M889.5 50v3M889.5 55v3M890.5 51v2M890.5 55v3M891.5 51v2M891.5 55v2M892.5 50v3M892.5 55v3M893.5 50v3M893.5 55v1M894.5 50v3M894.5 55v3M895.5 50v3M895.5 55v1M896.5 50v3M896.5 55v3M897.5 51v2M897.5 55v1M898.5 50v3M898.5 55v2M899.5 50v3M899.5 55v1M900.5 50v3M900.5 55v2M901.5 51v2M901.5 55v2M902.5 51v2M902.5 55v2M903.5 50v3M903.5 55v1M904.5 50v3M904.5 55v2M905.5 50v3M905.5 55v2M906.5 50v3M906.5 55v2M907.5 51v2M907.5 55v3M908.5 51v2M908.5 55v2M909.5 51v2M909.5 55v3M910.5 50v3M910.5 55v2M911.5 51v2M911.5 55v3M912.5 51v2M912.5 55v3M913.5 50v3M913.5 55v1M914.5 51v2M914.5 55v1M915.5 50v3M915.5 55v2M916.5 51v2M916.5 55v3M917.5 50v3M917.5 55v1M918.5 50v3M918.5 55v3M919.5 51v2M919.5 55v2M920.5 50v3M920.5 55v1M921.5 51v2M921.5 55v3M922.5 50v3M922.5 55v2M923.5 51v2M923.5 55v3M924.5 50v3M924.5 55v2M925.5 51v2M925.5 55v2M926.5 50v3M926.5 55v3M927.5 51v2M927.5 55v2M928.5 50v3M928.5 55v1M929.5 50v3M929.5 55v1M930.5 51v2M930.5 55v1M931.5 50v3M931.5 55v3M932.5 50v3M932.5 55v2M933.5 51v2M933.5 55v1M934.5 51v2M934.5 55v2M935.5 51v2M935.5 55v2M936.5 50v3M936.5 55v3M937.5 51v2M937.5 55v1M938.5 51v2M938.5 55v1M939.5 50v3M939.5 55v3M940.5 50v3M940.5 55v2M941.5 50v3M941.5 55v3M942.5 50v3M942.5 55v2M943.5 50v3M943.5 55v3M944.5 50v3M944.5 55v1M945.5 51v2M945.5 55v1M946.5 50v3M946.5 55v3M947.5 50v3M947.5 55v1M948.5 51v2M948.5 55v3M949.5 51v2M949.5 55v3M950.5 51v2M950.5 55v1M951.5 51v2M951.5 55v2M952.5 50v3M952.5 55v2M953.5 50v3M953.5 55v3M954.5 50v3M954.5 55v3M955.5 51v2M955.5 55v2M956.5 50v3M956.5 55v2M957.5 50v3M957.5 55v3M958.5 50v3M958.5 55v3M959.5 50v3M959.5 55v3M960.5 51v2M960.5 55v2M961.5 51v2M961.5 55v3M962.5 51v2M962.5 55v3M963.5 51v2M963.5 55v2M964.5 51v2M964.5 55v3M965.5 51v2M965.5 55v3M966.5 50v3M966.5 55v1M967.5 51v2M967.5 55v2M968.5 50v3M968.5 55v2M969.5 50v3M969.5 55v3M970.5 50v3M970.5 55v1M971.5 51v2M971.5 55v2M972.5 50v3M972.5 55v2M973.5 50v3M973.5 55v2M974.5 51v2M974.5 55v1M975.5 50v3M975.5 55v3M976.5 50v3M976.5 55v2M977.5 50v3M977.5 55v1M978.5 50v3M978.5 55v1M979.5 50v3M979.5 55v2M980.5 51v2M980.5 55v3M981.5 51v2M981.5 55v2M982.5 50v3M982.5 55v2M983.5 51v2M983.5 55v3M984.5 50v3M984.5 55v1M985.5 51v2M985.5 55v1M986.5 51v2M986.5 55v1M987.5 50v3M987.5 55v1M988.5 51v2M988.5 55v1M989.5 51v2M989.5 55v2M990.5 51v2M990.5 55v2M991.5 50v3M991.5 55v2M992.5 50v3M992.5 55v2M993.5 51v2M993.5 55v2M994.5 50v3M994.5 55v1M995.5 51v2M995.5 55v3M996.5 50v3M996.5 55v2M997.5 50v3M997.5 55v1M998.5 51v2M998.5 55v2M999.5 51v2M999.5 55v2M1000.5 50v3M1000.5 55v2M1001.5 51v2M1001.5 55v2M1002.5 51v2M1002.5 55v2M1003.5 51v2M1003.5 55v2M1004.5 50v3M1004.5 55v2M1005.5 50v3M1005.5 55v1M1006.5 51v2M1006.5 55v2M1007.5 51v2M1007.5 55v3M1008.5 50v3M1008.5 55v2M1009.5 51v2M1009.5 55v2M1010.5 51v2M1010.5 55v1M1011.5 51v2M1011.5 55v2M1012.5 51v2M1012.5 55v3M1013.5 51v2M1013.5 55v2M1014.5 51v2M1014.5 55v2M1015.5 51v2M1015.5 55v2M1016.5 51v2M1016.5 55v3M1017.5 51v2M1017.5 55v3M1018.5 51v2M1018.5 55v3M1019.5 50v3M1019.5 55v2M1020.5 51v2M1020.5 55v2M1021.5 51v2M1021.5 55v3M1022.5 50v3M1022.5 55v3M1023.5 50v3M1023.5 55v3M1024.5 50v3M1024.5 55v3M1025.5 50v3M1025.5 55v3M1026.5 50v3M1026.5 55v2M1027.5 50v3M1027.5 55v2M1028.5 50v3M1028.5 55v3M1029.5 51v2M1029.5 55v2M1030.5 50v3M1030.5 55v2M1031.5 50v3M1031.5 55v1M1032.5 50v3M1032.5 55v1M1033.5 50v3M1033.5 55v2M1034.5 51v2M1034.5 55v2M1035.5 51v2M1035.5 55v2M1036.5 51v2M1036.5 55v3M1037.5 51v2M1037.5 55v1M1038.5 51v2M1038.5 55v2M1039.5 50v3M1039.5 55v1M1040.5 50v3M1040.5 55v2M1041.5 50v3M1041.5 55v2M1042.5 50v3M1042.5 55v2M1043.5 51v2M1043.5 55v1M1044.5 51v2M1044.5 55v2M1045.5 51v2M1045.5 55v2M1046.5 51v2M1046.5 55v2M1047.5 51v2M1047.5 55v1M1048.5 51v2M1048.5 55v2M1049.5 51v2M1049.5 55v2M1050.5 51v2M1050.5 55v2M1051.5 50v3M1051.5 55v1M1052.5 51v2M1052.5 55v1M1053.5 50v3M1053.5 55v1M1054.5 51v2M1054.5 55v2M1055.5 50v3M1055.5 55v3M1056.5 50v3M1056.5 55v2M1057.5 51v2M1057.5 55v1M1058.5 50v3M1058.5 55v3M1059.5 51v2M1059.5 55v1M1060.5 51v2M1060.5 55v3M1061.5 51v2M1061.5 55v1M1062.5 50v3M1062.5 55v2M1063.5 50v3M1063.5 55v2M1064.5 50v3M1064.5 55v2M1065.5 50v3M1065.5 55v3M1066.5 50v3M1066.5 55v1M1067.5 51v2M1067.5 55v1M1068.5 50v3M1068.5 55v3M1069.5 50v3M1069.5 55v2M1070.5 50v3M1070.5 55v3M1071.5 51v2M1071.5 55v2M1072.5 50v3M1072.5 55v1M1073.5 51v2M1073.5 55v2M1074.5 51v2M1074.5 55v2M1075.5 51v2M1075.5 55v2M1076.5 50v3M1076.5 55v1M1077.5 51v2M1077.5 55v2M1078.5 51v2M1078.5 55v2M1079.5 51v2M1079.5 55v3M1080.5 50v3M1080.5 55v3M1081.5 51v2M1081.5 55v1M1082.5 50v3M1082.5 55v1M1083.5 50v3M1083.5 55v1M1084.5 51v2M1084.5 55v2M1085.5 50v3M1085.5 55v3M1086.5 50v3M1086.5 55v2M1087.5 51v2M1087.5 55v2M1088.5 50v3M1088.5 55v2M1089.5 50v3M1089.5 55v2M1090.5 50v3M1090.5 55v1M1091.5 50v3M1091.5 55v2M1092.5 51v2M1092.5 55v3M1093.5 50v3M1093.5 55v3M1094.5 51v2M1094.5 55v1M1095.5 50v3M1095.5 55v2M1096.5 51v2M1096.5 55v1M1097.5 51v2M1097.5 55v2M1098.5 51v2M1098.5 55v2M1099.5 51v2M1099.5 55v2M1100.5 51v2M1100.5 55v2M1101.5 51v2M1101.5 55v2M1102.5 50v3M1102.5 55v2M1103.5 51v2M1103.5 55v2M1104.5 51v2M1104.5 55v2M1105.5 50v3M1105.5 55v2M1106.5 51v2M1106.5 55v2M1107.5 51v2M1107.5 55v2M1108.5 50v3M1108.5 55v3M1109.5 50v3M1109.5 55v1M1110.5 51v2M1110.5 55v2M1111.5 51v2M1111.5 55v3M1112.5 51v2M1112.5 55v1M1113.5 50v3M1113.5 55v3M1114.5 51v2M1114.5 55v3M1115.5 51v2M1115.5 55v2M1116.5 50v3M1116.5 55v2M1117.5 51v2M1117.5 55v2M1118.5 50v3M1118.5 55v3M1119.5 50v3M1119.5 55v2M1120.5 51v2M1120.5 55v2M1121.5 51v2M1121.5 55v1M1122.5 51v2M1122.5 55v3M1123.5 51v2M1123.5 55v2M1124.5 51v2M1124.5 55v2M1125.5 51v2M1125.5 55v1M1126.5 50v3M1126.5 55v1M1127.5 51v2M1127.5 55v2M1128.5 50v3M1128.5 55v2M1129.5 50v3M1129.5 55v2M1130.5 51v2M1130.5 55v1M1131.5 50v3M1131.5 55v2M1132.5 50v3M1132.5 55v1M1133.5 50v3M1133.5 55v3M1134.5 51v2M1134.5 55v2M1135.5 51v2M1135.5 55v1M1136.5 51v2M1136.5 55v2M1137.5 50v3M1137.5 55v1M1138.5 50v3M1138.5 55v1M1139.5 50v3M1139.5 55v2M1140.5 51v2M1140.5 55v1M1141.5 51v2M1141.5 55v3M1142.5 50v3M1142.5 55v1M1143.5 51v2M1143.5 55v2M1144.5 50v3M1144.5 55v2M1145.5 50v3M1145.5 55v3M1146.5 51v2M1146.5 55v1M1147.5 51v2M1147.5 55v2M1148.5 51v2M1148.5 55v2M1149.5 50v3M1149.5 55v2M1150.5 50v3M1150.5 55v2M1151.5 50v3M1151.5 55v1M1152.5 50v3M1152.5 55v2M1153.5 51v2M1153.5 55v2M1154.5 50v3M1154.5 55v2M1155.5 51v2M1155.5 55v1M1156.5 50v3M1156.5 55v2M1157.5 50v3M1157.5 55v2M1158.5 50v3M1158.5 55v2M1159.5 51v2M1159.5 55v3M1160.5 50v3M1160.5 55v1M1161.5 51v2M1161.5 55v2M1162.5 51v2M1162.5 55v1M1163.5 51v2M1163.5 55v2M1164.5 50v3M1164.5 55v1M1165.5 50v3M1165.5 55v2M1166.5 50v3M1166.5 55v2M1167.5 50v3M1167.5 55v2M1168.5 51v2M1168.5 55v2M1169.5 50v3M1169.5 55v3M1170.5 51v2M1170.5 55v2M1171.5 51v2M1171.5 55v1M1172.5 51v2M1172.5 55v1M1173.5 50v3M1173.5 55v3M1174.5 50v3M1174.5 55v2M1175.5 51v2M1175.5 55v1M1176.5 51v2M1176.5 55v2M1177.5 50v3M1177.5 55v3M1178.5 50v3M1178.5 55v1M1179.5 50v3M1179.5 55v2M1180.5 50v3M1180.5 55v2M1181.5 50v3M1181.5 55v1M1182.5 50v3M1182.5 55v3M1183.5 50v3M1183.5 55v1M1184.5 50v3M1184.5 55v2M1185.5 51v2M1185.5 55v3M1186.5 51v2M1186.5 55v1M1187.5 50v3M1187.5 55v3M1188.5 51v2M1188.5 55v1M1189.5 51v2M1189.5 55v3M1190.5 51v2M1190.5 55v2M1191.5 50v3M1191.5 55v2M1192.5 50v3M1192.5 55v2M1193.5 51v2M1193.5 55v1M1194.5 51v2M1194.5 55v3M1195.5 50v3M1195.5 55v1M1196.5 50v3M1196.5 55v2M1197.5 51v2M1197.5 55v2M1198.5 51v2M1198.5 55v3M1199.5 50v3M1199.5 55v3M1200.5 51v2M1200.5 55v3M1201.5 51v2M1201.5 55v2M1202.5 51v2M1202.5 55v2M1203.5 50v3M1203.5 55v2M1204.5 50v3M1204.5 55v1M1205.5 51v2M1205.5 55v3M1206.5 50v3M1206.5 55v2M1207.5 51v2M1207.5 55v3M1208.5 50v3M1208.5 55v1M1209.5 50v3M1209.5 55v3M1210.5 51v2M1210.5 55v1M1211.5 51v2M1211.5 55v2M1212.5 51v2M1212.5 55v1M1213.5 51v2M1213.5 55v3M1214.5 51v2M1214.5 55v3M1215.5 51v2M1215.5 55v1M1216.5 50v3M1216.5 55v2M1217.5 50v3M1217.5 55v2M1218.5 50v3M1218.5 55v3M1219.5 50v3M1219.5 55v1M1220.5 50v3M1220.5 55v1M1221.5 51v2M1221.5 55v1M1222.5 51v2M1222.5 55v3M1223.5 51v2M1223.5 55v1M1224.5 51v2M1224.5 55v3M1225.5 51v2M1225.5 55v2M1226.5 51v2M1226.5 55v1M1227.5 51v2M1227.5 55v1M1228.5 51v2M1228.5 55v2M1229.5 50v3M1229.5 55v3M1230.5 50v3M1230.5 55v3M1231.5 50v3M1231.5 55v2M1232.5 50v3M1232.5 55v2M1233.5 51v2M1233.5 55v2M1234.5 50v3M1234.5 55v3M1235.5 50v3M1235.5 55v2M1236.5 51v2M1236.5 55v2M1237.5 51v2M1237.5 55v3M1238.5 50v3M1238.5 55v1M1239.5 51v2M1239.5 55v1M1240.5 51v2M1240.5 55v1M1241.5 50v3M1241.5 55v2M1242.5 50v3M1242.5 55v2M1243.5 50v3M1243.5 55v2M1244.5 51v2M1244.5 55v1M1245.5 51v2M1245.5 55v2M1246.5 50v3M1246.5 55v2M1247.5 50v3M1247.5 55v2M1248.5 50v3M1248.5 55v3M1249.5 51v2M1249.5 55v2M1250.5 50v3M1250.5 55v2M1251.5 51v2M1251.5 55v2M1252.5 51v2M1252.5 55v1M1253.5 51v2M1253.5 55v1M1254.5 51v2M1254.5 55v1M1255.5 50v3M1255.5 55v3M1256.5 50v3M1256.5 55v1M1257.5 51v2M1257.5 55v2M1258.5 50v3M1258.5 55v2M1259.5 51v2M1259.5 55v1M1260.5 51v2M1260.5 55v2M1261.5 50v3M1261.5 55v1M1262.5 50v3M1262.5 55v2M1263.5 51v2M1263.5 55v2M1264.5 51v2M1264.5 55v2M1265.5 51v2M1265.5 55v1M1266.5 50v3M1266.5 55v2M1267.5 50v3M1267.5 55v1" stroke="#00a0a8" stroke-width="1" fill="none"/>
<path d="M70.5 53v2M71.5 53v2M72.5 53v2M73.5 53v2M74.5 53v2M75.5 53v2M76.5 53v2M77.5 53v2M78.5 53v2M79.5 53v2M80.5 53v2M81.5 53v2M82.5 53v2M83.5 53v2M84.5 53v2M85.5 53v2M86.5 53v2M87.5 53v2M88.5 53v2M89.5 53v2M90.5 53v2M91.5 53v2M92.5 53v2M93.5 53v2M94.5 53v2M95.5 53v2M96.5 53v2M97.5 53v2M98.5 53v2M99.5 53v2M100.5 53v2M101.5 53v2M102.5 53v2M103.5 53v2M104.5 53v2M105.5 53v2M106.5 53v2M107.5 53v2M108.5 53v2M109.5 53v2M110.5 53v2M111.5 53v2M112.5 53v2M113.5 53v2M114.5 53v2M115.5 53v2M116.5 53v2M117.5 53v2M118.5 53v2M119.5 53v2M120.5 53v2M121.5 53v2M122.5 53v2M123.5 53v2M124.5 53v2M125.5 53v2M126.5 53v2M127.5 53v2M128.5 53v2M129.5 53v2M130.5 53v2M131.5 53v2M132.5 53v2M133.5 53v2M134.5 53v2M135.5 53v2M136.5 53v2M137.5 53v2M138.5 53v2M139.5 53v2M140.5 53v2M141.5 53v2M142.5 53v2M143.5 53v2M144.5 53v2M145.5 53v2M146.5 53v2M147.5 53v2M148.5 53v2M149.5 53v2M150.5 53v2M151.5 53v2M152.5 53v2M153.5 53v2M154.5 53v2M155.5 53v2M156.5 53v2M157.5 53v2M158.5 53v2M159.5 53v2M160.5 53v2M161.5 53v2M162.5 53v2M163.5 53v2M164.5 53v2M165.5 53v2M166.5 53v2M167.5 53v2M168.5 53v2M169.5 53v2M170.5 53v2M171.5 53v2M172.5 53v2M173.5 53v2M174.5 53v2M175.5 53v2M176.5 53v2M177.5 53v2M178.5 53v2M179.5 53v2M180.5 53v2M181.5 53v2M182.5 53v2M183.5 53v2M184.5 53v2M185.5 53v2M186.5 53v2M187.5 53v2M188.5 53v2M189.5 53v2M190.5 53v2M191.5 53v2M192.5 53v2M193.5 53v2M194.5 53v2M195.5 53v2M196.5 53v2M197.5 53v2M198.5 53v2M199.5 53v2M200.5 53v2M201.5 53v2M202.5 53v2M203.5 53v2M204.5 53v2M205.5 53v2M206.5 53v2M207.5 53v2M208.5 53v2M209.5 53v2M210.5 53v2M211.5 53v2M212.5 53v2M213.5 53v2M214.5 53v2M215.5 53v2M216.5 53v2M217.5 53v2M218.5 53v2M219.5 53v2M220.5 53v2M221.5 53v2M222.5 53v2M223.5 53v2M224.5 53v2M225.5 53v2M226.5 53v2M227.5 53v2M228.5 53v2M229.5 53v2M230.5 53v2M231.5 53v2M232.5 53v2M233.5 53v2M234.5 53v2M235.5 53v2M236.5 53v2M237.5 53v2M238.5 53v2M239.5 53v2M240.5 53v2M241.5 53v2M242.5 53v2M243.5 53v2M244.5 53v2M245.5 53v2M246.5 53v2M247.5 53v2M248.5 53v2M249.5 53v2M250.5 53v2M251.5 53v2M252.5 53v2M253.5 53v2M254.5 53v2M255.5 53v2M256.5 53v2M257.5 53v2M258.5 53v2M259.5 53v2M260.5 53v2M261.5 53v2M262.5 53v2M263.5 53v2M264.5 53v2M265.5 53v2M266.5 53v2M267.5 53v2M268.5 53v2M269.5 53v2M270.5 53v2M271.5 53v2M272.5 53v2M273.5 53v2M274.5 53v2M275.5 53v2M276.5 53v2M277.5 53v2M278.5 53v2M279.5 53v2M280.5 53v2M281.5 53v2M282.5 53v2M283.5 53v2M284.5 53v2M285.5 53v2M286.5 53v2M287.5 53v2M288.5 53v2M289.5 53v2M290.5 53v2M291.5 53v2M292.5 53v2M293.5 53v2M294.5 53v2M295.5 53v2M296.5 53v2M297.5 53v2M298.5 53v2M299.5 53v2M300.5 53v2M301.5 53v2M302.5 53v2M303.5 53v2M304.5 53v2M305.5 53v2M306.5 53v2M307.5 53v2M308.5 53v2M309.5 53v2M310.5 53v2M311.5 53v2M312.5 53v2M313.5 53v2M314.5 53v2M315.5 53v2M316.5 53v2M317.5 53v2M318.5 53v2M319.5 53v2M320.5 53v2M321.5 53v2M322.5 53v2M323.5 53v2M324.5 53v2M325.5 53v2M326.5 53v2M327.5 53v2M328.5 53v2M329.5 53v2M330.5 53v2M331.5 53v2M332.5 53v2M333.5 53v2M334.5 53v2M335.5 53v2M336.5 53v2M337.5 53v2M338.5 53v2M339.5 53v2M340.5 53v2M341.5 53v2M342.5 53v2M343.5 53v2M344.5 53v2M345.5 53v2M346.5 53v2M347.5 53v2M348.5 53v2M349.5 53v2M350.5 53v2M351.5 53v2M352.5 53v2M353.5 53v2M354.5 53v2M355.5 53v2M356.5 53v2M357.5 53v2M358.5 53v2M359.5 53v2M360.5 53v2M361.5 53v2M362.5 53v2M363.5 53v2M364.5 53v2M365.5 53v2M366.5 53v2M367.5 53v2M368.5 53v2M369.5 53v2M370.5 53v2M371.5 53v2M372.5 53v2M373.5 53v2M374.5 53v2M375.5 53v2M376.5 53v2M377.5 53v2M378.5 53v2M379.5 53v2M380.5 53v2M381.5 53v2M382.5 53v2M383.5 53v2M384.5 53v2M385.5 53v2M386.5 53v2M387.5 53v2M388.5 53v2M389.5 53v2M390.5 53v2M391.5 53v2M392.5 53v2M393.5 53v2M394.5 53v2M395.5 53v2M396.5 53v2M397.5 53v2M398.5 53v2M399.5 53v2M400.5 53v2M401.5 53v2M402.5 53v2M403.5 53v2M404.5 53v2M405.5 53v2M406.5 53v2M407.5 53v2M408.5 53v2M409.5 53v2M410.5 53v2M411.5 53v2M412.5 53v2M413.5 53v2M414.5 53v2M415.5 53v2M416.5 53v2M417.5 53v2M418.5 53v2M419.5 53v2M420.5 53v2M421.5 53v2M422.5 53v2M423.5 53v2M424.5 53v2M425.5 53v2M426.5 53v2M427.5 53v2M428.5 53v2M429.5 53v2M430.5 53v2M431.5 53v2M432.5 53v2M433.5 53v2M434.5 53v2M435.5 53v2M436.5 53v2M437.5 53v2M438.5 53v2M439.5 53v2M440.5 53v2M441.5 53v2M442.5 53v2M443.5 53v2M444.5 53v2M445.5 53v2M446.5 53v2M447.5 53v2M448.5 53v2M449.5 53v2M450.5 53v2M451.5 53v2M452.5 53v2M453.5 53v2M454.5 53v2M455.5 53v2M456.5 53v2M457.5 53v2M458.5 53v2M459.5 53v2M460.5 53v2M461.5 53v2M462.5 53v2M463.5 53v2M464.5 53v2M465.5 53v2M466.5 53v2M467.5 53v2M468.5 53v2M469.5 53v2M470.5 53v2M471.5 53v2M472.5 53v2M473.5 53v2M474.5 53v2M475.5 53v2M476.5 53v2M477.5 53v2M478.5 53v2M479.5 53v2M480.5 53v2M481.5 53v2M482.5 53v2M483.5 53v2M484.5 53v2M485.5 53v2M486.5 53v2M487.5 53v2M488.5 53v2M489.5 53v2M490.5 53v2M491.5 53v2M492.5 53v2M493.5 53v2M494.5 53v2M495.5 53v2M496.5 53v2M497.5 53v2M498.5 53v2M499.5 53v2M500.5 53v2M501.5 53v2M502.5 53v2M503.5 53v2M504.5 53v2M505.5 53v2M506.5 53v2M507.5 53v2M508.5 53v2M509.5 53v2M510.5 53v2M511.5 53v2M512.5 53v2M513.5 53v2M514.5 53v2M515.5 53v2M516.5 53v2M517.5 53v2M518.5 53v2M519.5 53v2M520.5 53v2M521.5 53v2M522.5 53v2M523.5 53v2M524.5 53v2M525.5 53v2M526.5 53v2M527.5 53v2M528.5 53v2M529.5 53v2M530.5 53v2M531.5 53v2M532.5 53v2M533.5 53v2M534.5 53v2M535.5 53v2M536.5 53v2M537.5 53v2M538.5 53v2M539.5 53v2M540.5 53v2M541.5 53v2M542.5 53v2M543.5 53v2M544.5 53v2M545.5 53v2M546.5 53v2M547.5 53v2M548.5 53v2M549.5 53v2M550.5 53v2M551.5 53v2M552.5 53v2M553.5 53v2M554.5 53v2M555.5 53v2M556.5 53v2M557.5 53v2M558.5 53v2M559.5 53v2M560.5 53v2M561.5 53v2M562.5 53v2M563.5 53v2M564.5 53v2M565.5 53v2M566.5 53v2M567.5 53v2M568.5 53v2M569.5 53v2M570.5 53v2M571.5 53v2M572.5 53v2M573.5 53v2M574.5 53v2M575.5 53v2M576.5 53v2M577.5 53v2M578.5 53v2M579.5 53v2M580.5 53v2M581.5 53v2M582.5 53v2M583.5 53v2M584.5 53v2M585.5 53v2M586.5 53v2M587.5 53v2M588.5 53v2M589.5 53v2M590.5 53v2M591.5 53v2M592.5 53v2M593.5 53v2M594.5 53v2M595.5 53v2M596.5 53v2M597.5 53v2M598.5 53v2M599.5 53v2M600.5 53v2M601.5 53v2M602.5 53v2M603.5 53v2M604.5 53v2M605.5 53v2M606.5 53v2M607.5 53v2M608.5 53v2M609.5 53v2M610.5 53v2M611.5 53v2M612.5 53v2M613.5 53v2M614.5 53v2M615.5 53v2M616.5 53v2M617.5 53v2M618.5 53v2M619.5 53v2M620.5 53v2M621.5 53v2M622.5 53v2M623.5 53v2M624.5 53v2M625.5 53v2M626.5 53v2M627.5 53v2M628.5 53v2M629.5 53v2M630.5 53v2M631.5 53v2M632.5 53v2M633.5 53v2M634.5 53v2M635.5 53v2M636.5 53v2M637.5 53v2M638.5 53v2M639.5 53v2M640.5 53v2M641.5 53v2M642.5 53v2M643.5 53v2M644.5 53v2M645.5 53v2M646.5 53v2M647.5 53v2M648.5 53v2M649.5 53v2M650.5 53v2M651.5 53v2M652.5 53v2M653.5 53v2M654.5 53v2M655.5 53v2M656.5 53v2M657.5 53v2M658.5 53v2M659.5 53v2M660.5 53v2M661.5 53v2M662.5 53v2M663.5 53v2M664.5 53v2M665.5 53v2M666.5 53v2M667.5 53v2M668.5 53v2M669.5 8v2M670.5 8v2M671.5 8v2M672.5 8v2M673.5 8v2M674.5 8v2M675.5 8v2M676.5 53v2M677.5 53v2M678.5 53v2M679.5 53v2M680.5 53v2M681.5 53v2M682.5 53v2M683.5 53v2M684.5 53v2M685.5 53v2M686.5 53v2M687.5 53v2M688.5 53v2M689.5 53v2M690.5 53v2M691.5 53v2M692.5 53v2M693.5 53v2M694.5 53v2M695.5 53v2M696.5 53v2M697.5 53v2M698.5 53v2M699.5 53v2M700.5 53v2M701.5 53v2M702.5 53v2M703.5 53v2M704.5 53v2M705.5 53v2M706.5 53v2M707.5 53v2M708.5 53v2M709.5 53v2M710.5 53v2M711.5 53v2M712.5 53v2M713.5 53v2M714.5 53v2M715.5 53v2M716.5 53v2M717.5 53v2M718.5 53v2M719.5 53v2M720.5 53v2M721.5 53v2M722.5 53v2M723.5 53v2M724.5 53v2M725.5 53v2M726.5 53v2M727.5 53v2M728.5 53v2M729.5 53v2M730.5 53v2M731.5 53v2M732.5 53v2M733.5 53v2M734.5 53v2M735.5 53v2M736.5 53v2M737.5 53v2M738.5 53v2M739.5 53v2M740.5 53v2M741.5 53v2M742.5 53v2M743.5 53v2M744.5 53v2M745.5 53v2M746.5 53v2M747.5 53v2M748.5 53v2M749.5 53v2M750.5 53v2M751.5 53v2M752.5 53v2M753.5 53v2M754.5 53v2M755.5 53v2M756.5 53v2M757.5 53v2M758.5 53v2M759.5 53v2M760.5 53v2M761.5 53v2M762.5 53v2M763.5 53v2M764.5 53v2M765.5 53v2M766.5 53v2M767.5 53v2M768.5 53v2M769.5 53v2M770.5 53v2M771.5 53v2M772.5 53v2M773.5 53v2M774.5 53v2M775.5 53v2M776.5 53v2M777.5 53v2M778.5 53v2M779.5 53v2M780.5 53v2M781.5 53v2M782.5 53v2M783.5 53v2M784.5 53v2M785.5 53v2M786.5 53v2M787.5 53v2M788.5 53v2M789.5 53v2M790.5 53v2M791.5 53v2M792.5 53v2M793.5 53v2M794.5 53v2M795.5 53v2M796.5 53v2M797.5 53v2M798.5 53v2M799.5 53v2M800.5 53v2M801.5 53v2M802.5 53v2M803.5 53v2M804.5 53v2M805.5 53v2M806.5 53v2M807.5 53v2M808.5 53v2M809.5 53v2M810.5 53v2M811.5 53v2M812.5 53v2M813.5 53v2M814.5 53v2M815.5 53v2M816.5 53v2M817.5 53v2M818.5 53v2M819.5 53v2M820.5 53v2M821.5 53v2M822.5 53v2M823.5 53v2M824.5 53v2M825.5 53v2M826.5 53v2M827.5 53v2M828.5 53v2M829.5 53v2M830.5 53v2M831.5 53v2M832.5 53v2M833.5 53v2M834.5 53v2M835.5 53v2M836.5 53v2M837.5 53v2M838.5 53v2M839.5 53v2M840.5 53v2M841.5 53v2M842.5 53v2M843.5 53v2M844.5 53v2M845.5 53v2M846.5 53v2M847.5 53v2M848.5 53v2M849.5 53v2M850.5 53v2M851.5 53v2M852.5 53v2M853.5 53v2M854.5 53v2M855.5 53v2M856.5 53v2M857.5 53v2M858.5 53v2M859.5 53v2M860.5 53v2M861.5 53v2M862.5 53v2M863.5 53v2M864.5 53v2M865.5 53v2M866.5 53v2M867.5 53v2M868.5 53v2M869.5 53v2M870.5 53v2M871.5 53v2M872.5 53v2M873.5 53v2M874.5 53v2M875.5 53v2M876.5 53v2M877.5 53v2M878.5 53v2M879.5 53v2M880.5 53v2M881.5 53v2M882.5 53v2M883.5 53v2M884.5 53v2M885.5 53v2M886.5 53v2M887.5 53v2M888.5 53v2M889.5 53v2M890.5 53v2M891.5 53v2M892.5 53v2M893.5 53v2M894.5 53v2M895.5 53v2M896.5 53v2M897.5 53v2M898.5 53v2M899.5 53v2M900.5 53v2M901.5 53v2M902.5 53v2M903.5 53v2M904.5 53v2M905.5 53v2M906.5 53v2M907.5 53v2M908.5 53v2M909.5 53v2M910.5 53v2M911.5 53v2M912.5 53v2M913.5 53v2M914.5 53v2M915.5 53v2M916.5 53v2M917.5 53v2M918.5 53v2M919.5 53v2M920.5 53v2M921.5 53v2M922.5 53v2M923.5 53v2M924.5 53v2M925.5 53v2M926.5 53v2M927.5 53v2M928.5 53v2M929.5 53v2M930.5 53v2M931.5 53v2M932.5 53v2M933.5 53v2M934.5 53v2M935.5 53v2M936.5 53v2M937.5 53v2M938.5 53v2M939.5 53v2M940.5 53v2M941.5 53v2M942.5 53v2M943.5 53v2M944.5 53v2M945.5 53v2M946.5 53v2M947.5 53v2M948.5 53v2M949.5 53v2M950.5 53v2M951.5 53v2M952.5 53v2M953.5 53v2M954.5 53v2M955.5 53v2M956.5 53v2M957.5 53v2M958.5 53v2M959.5 53v2M960.5 53v2M961.5 53v2M962.5 53v2M963.5 53v2M964.5 53v2M965.5 53v2M966.5 53v2M967.5 53v2M968.5 53v2M969.5 53v2M970.5 53v2M971.5 53v2M972.5 53v2M973.5 53v2M974.5 53v2M975.5 53v2M976.5 53v2M977.5 53v2M978.5 53v2M979.5 53v2M980.5 53v2M981.5 53v2M982.5 53v2M983.5 53v2M984.5 53v2M985.5 53v2M986.5 53v2M987.5 53v2M988.5 53v2M989.5 53v2M990.5 53v2M991.5 53v2M992.5 53v2M993.5 53v2M994.5 53v2M995.5 53v2M996.5 53v2M997.5 53v2M998.5 53v2M999.5 53v2M1000.5 53v2M1001.5 53v2M1002.5 53v2M1003.5 53v2M1004.5 53v2M1005.5 53v2M1006.5 53v2M1007.5 53v2M1008.5 53v2M1009.5 53v2M1010.5 53v2M1011.5 53v2M1012.5 53v2M1013.5 53v2M1014.5 53v2M1015.5 53v2M1016.5 53v2M1017.5 53v2M1018.5 53v2M1019.5 53v2M1020.5 53v2M1021.5 53v2M1022.5 53v2M1023.5 53v2M1024.5 53v2M1025.5 53v2M1026.5 53v2M1027.5 53v2M1028.5 53v2M1029.5 53v2M1030.5 53v2M1031.5 53v2M1032.5 53v2M1033.5 53v2M1034.5 53v2M1035.5 53v2M1036.5 53v2M1037.5 53v2M1038.5 53v2M1039.5 53v2M1040.5 53v2M1041.5 53v2M1042.5 53v2M1043.5 53v2M1044.5 53v2M1045.5 53v2M1046.5 53v2M1047.5 53v2M1048.5 53v2M1049.5 53v2M1050.5 53v2M1051.5 53v2M1052.5 53v2M1053.5 53v2M1054.5 53v2M1055.5 53v2M1056.5 53v2M1057.5 53v2M1058.5 53v2M1059.5 53v2M1060.5 53v2M1061.5 53v2M1062.5 53v2M1063.5 53v2M1064.5 53v2M1065.5 53v2M1066.5 53v2M1067.5 53v2M1068.5 53v2M1069.5 53v2M1070.5 53v2M1071.5 53v2M1072.5 53v2M1073.5 53v2M1074.5 53v2M1075.5 53v2M1076.5 53v2M1077.5 53v2M1078.5 53v2M1079.5 53v2M1080.5 53v2M1081.5 53v2M1082.5 53v2M1083.5 53v2M1084.5 53v2M1085.5 53v2M1086.5 53v2M1087.5 53v2M1088.5 53v2M1089.5 53v2M1090.5 53v2M1091.5 53v2M1092.5 53v2M1093.5 53v2M1094.5 53v2M1095.5 53v2M1096.5 53v2M1097.5 53v2M1098.5 53v2M1099.5 53v2M1100.5 53v2M1101.5 53v2M1102.5 53v2M1103.5 53v2M1104.5 53v2M1105.5 53v2M1106.5 53v2M1107.5 53v2M1108.5 53v2M1109.5 53v2M1110.5 53v2M1111.5 53v2M1112.5 53v2M1113.5 53v2M1114.5 53v2M1115.5 53v2M1116.5 53v2M1117.5 53v2M1118.5 53v2M1119.5 53v2M1120.5 53v2M1121.5 53v2M1122.5 53v2M1123.5 53v2M1124.5 53v2M1125.5 53v2M1126.5 53v2M1127.5 53v2M1128.5 53v2M1129.5 53v2M1130.5 53v2M1131.5 53v2M1132.5 53v2M1133.5 53v2M1134.5 53v2M1135.5 53v2M1136.5 53v2M1137.5 53v2M1138.5 53v2M1139.5 53v2M1140.5 53v2M1141.5 53v2M1142.5 53v2M1143.5 53v2M1144.5 53v2M1145.5 53v2M1146.5 53v2M1147.5 53v2M1148.5 53v2M1149.5 53v2M1150.5 53v2M1151.5 53v2M1152.5 53v2M1153.5 53v2M1154.5 53v2M1155.5 53v2M1156.5 53v2M1157.5 53v2M1158.5 53v2M1159.5 53v2M1160.5 53v2M1161.5 53v2M1162.5 53v2M1163.5 53v2M1164.5 53v2M1165.5 53v2M1166.5 53v2M1167.5 53v2M1168.5 53v2M1169.5 53v2M1170.5 53v2M1171.5 53v2M1172.5 53v2M1173.5 53v2M1174.5 53v2M1175.5 53v2M1176.5 53v2M1177.5 53v2M1178.5 53v2M1179.5 53v2M1180.5 53v2M1181.5 53v2M1182.5 53v2M1183.5 53v2M1184.5 53v2M1185.5 53v2M1186.5 53v2M1187.5 53v2M1188.5 53v2M1189.5 53v2M1190.5 53v2M1191.5 53v2M1192.5 53v2M1193.5 53v2M1194.5 53v2M1195.5 53v2M1196.5 53v2M1197.5 53v2M1198.5 53v2M1199.5 53v2M1200.5 53v2M1201.5 53v2M1202.5 53v2M1203.5 53v2M1204.5 53v2M1205.5 53v2M1206.5 53v2M1207.5 53v2M1208.5 53v2M1209.5 53v2M1210.5 53v2M1211.5 53v2M1212.5 53v2M1213.5 53v2M1214.5 53v2M1215.5 53v2M1216.5 53v2M1217.5 53v2M1218.5 53v2M1219.5 53v2M1220.5 53v2M1221.5 53v2M1222.5 53v2M1223.5 53v2M1224.5 53v2M1225.5 53v2M1226.5 53v2M1227.5 53v2M1228.5 53v2M1229.5 53v2M1230.5 53v2M1231.5 53v2M1232.5 53v2M1233.5 53v2M1234.5 53v2M1235.5 53v2M1236.5 53v2M1237.5 53v2M1238.5 53v2M1239.5 53v2M1240.5 53v2M1241.5 53v2M1242.5 53v2M1243.5 53v2M1244.5 53v2M1245.5 53v2M1246.5 53v2M1247.5 53v2M1248.5 53v2M1249.5 53v2M1250.5 53v2M1251.5 53v2M1252.5 53v2M1253.5 53v2M1254.5 53v2M1255.5 53v2M1256.5 53v2M1257.5 53v2M1258.5 53v2M1259.5 53v2M1260.5 53v2M1261.5 53v2M1262.5 53v2M1263.5 53v2M1264.5 53v2M1265.5 53v2M1266.5 53v2M1267.5 53v2" stroke="#00f8ff" stroke-width="1" fill="none"/>
<path d="M70.5 246v62M71.5 240v68M72.5 240v53M73.5 279v29M74.5 240v49M75.5 240v68M76.5 244v64M77.5 240v43M78.5 273v35M79.5 240v58M80.5 240v68M81.5 251v57M82.5 240v33M83.5 263v45M84.5 240v65M85.5 240v66M86.5 260v48M87.5 240v30M88.5 253v55M89.5 240v68M90.5 240v60M91.5 271v37M92.5 240v41M93.5 245v63M94.5 240v68M95.5 240v51M96.5 281v27M97.5 240v51M98.5 240v68M99.5 245v63M100.5 240v41M101.5 271v37M102.5 240v60M103.5 240v68M104.5 253v55M105.5 240v31M106.5 261v47M107.5 240v66M108.5 240v65M109.5 262v46M110.5 240v32M111.5 251v57M112.5 240v68M113.5 240v58M114.5 273v35M115.5 240v43M116.5 244v64M117.5 240v68M118.5 240v49M119.5 280v28M120.5 240v53M121.5 240v68M122.5 246v62M123.5 240v39M124.5 269v39M125.5 240v61M126.5 240v68M127.5 254v54M128.5 240v29M129.5 259v49M130.5 240v67M131.5 240v64M132.5 264v44M133.5 240v34M134.5 250v58M135.5 240v68M136.5 240v57M137.5 275v33M138.5 240v45M139.5 243v65M140.5 241v67M141.5 240v47M142.5 278v30M143.5 240v54M144.5 240v68M145.5 248v60M146.5 240v37M147.5 267v41M148.5 240v62M149.5 240v68M150.5 256v52M151.5 240v27M152.5 257v51M153.5 240v68M154.5 240v63M155.5 266v42M156.5 240v36M157.5 248v60M158.5 240v68M159.5 240v55M160.5 277v31M161.5 240v47M162.5 241v67M163.5 242v66M164.5 240v46M165.5 276v32M166.5 240v56M167.5 240v68M168.5 249v59M169.5 240v35M170.5 265v43M171.5 240v64M172.5 240v68M173.5 258v50M174.5 240v28M175.5 255v53M176.5 240v68M177.5 240v62M178.5 268v40M179.5 240v38M180.5 247v61M181.5 240v68M182.5 240v53M183.5 279v29M184.5 240v49M185.5 240v68M186.5 243v65M187.5 240v44M188.5 274v34M189.5 240v58M190.5 240v68M191.5 251v57M192.5 240v33M193.5 263v45M194.5 240v65M195.5 240v67M196.5 260v48M197.5 240v30M198.5 253v55M199.5 240v68M200.5 240v60M201.5 270v38M202.5 240v40M203.5 245v63M204.5 240v68M205.5 240v52M206.5 281v27M207.5 240v50M208.5 240v68M209.5 244v64M210.5 240v42M211.5 272v36M212.5 240v59M213.5 240v68M214.5 252v56M215.5 240v31M216.5 261v47M217.5 240v66M218.5 240v66M219.5 262v46M220.5 240v32M221.5 252v56M222.5 240v68M223.5 240v59M224.5 272v36M225.5 240v42M226.5 244v64M227.5 240v68M228.5 240v50M229.5 280v28M230.5 240v52M231.5 240v68M232.5 246v62M233.5 240v40M234.5 270v38M235.5 240v61M236.5 240v68M237.5 254v54M238.5 240v29M239.5 259v49M240.5 240v67M241.5 240v65M242.5 264v44M243.5 240v34M244.5 250v58M245.5 240v68M246.5 240v57M247.5 274v34M248.5 240v44M249.5 243v65M250.5 241v67M251.5 240v48M252.5 278v30M253.5 240v54M254.5 240v68M255.5 247v61M256.5 240v38M257.5 268v40M258.5 240v62M259.5 240v68M260.5 256v52M261.5 240v27M262.5 257v51M263.5 240v68M264.5 240v63M265.5 266v42M266.5 240v36M267.5 249v59M268.5 240v68M269.5 240v56M270.5 276v32M271.5 240v46M272.5 242v66M273.5 242v66M274.5 240v46M275.5 276v32M276.5 240v56M277.5 240v68M278.5 249v59M279.5 240v36M280.5 266v42M281.5 240v63M282.5 240v68M283.5 258v50M284.5 240v27M285.5 256v52M286.5 240v68M287.5 240v62M288.5 268v40M289.5 240v38M290.5 247v61M291.5 240v68M292.5 240v54M293.5 278v30M294.5 240v48M295.5 241v67M296.5 243v65M297.5 240v44M298.5 274v34M299.5 240v57M300.5 240v68M301.5 250v58M302.5 240v34M303.5 264v44M304.5 240v65M305.5 240v67M306.5 259v49M307.5 240v29M308.5 254v54M309.5 240v68M310.5 240v61M311.5 270v38M312.5 240v40M313.5 246v62M314.5 240v68M315.5 240v52M316.5 280v28M317.5 240v50M318.5 240v68M319.5 244v64M320.5 240v42M321.5 272v36M322.5 240v59M323.5 240v68M324.5 252v56M325.5 240v32M326.5 262v46M327.5 240v66M328.5 240v66M329.5 261v47M330.5 240v31M331.5 252v56M332.5 240v68M333.5 240v59M334.5 272v36M335.5 240v42M336.5 244v64M337.5 240v68M338.5 240v50M339.5 281v27M340.5 240v52M341.5 240v68M342.5 245v63M343.5 240v40M344.5 270v38M345.5 240v60M346.5 240v68M347.5 253v55M348.5 240v30M349.5 260v48M350.5 240v67M351.5 240v65M352.5 263v45M353.5 240v33M354.5 251v57M355.5 240v68M356.5 240v58M357.5 274v34M358.5 240v44M359.5 243v65M360.5 240v68M361.5 240v48M362.5 279v29M363.5 240v53M364.5 240v68M365.5 247v61M366.5 240v38M367.5 268v40M368.5 240v62M369.5 240v68M370.5 255v53M371.5 240v28M372.5 258v50M373.5 240v68M374.5 240v64M375.5 265v43M376.5 240v35M377.5 249v59M378.5 240v68M379.5 240v56M380.5 276v32M381.5 240v46M382.5 242v66M383.5 241v67M384.5 240v47M385.5 277v31M386.5 240v55M387.5 240v68M388.5 248v60M389.5 240v36M390.5 266v42M391.5 240v63M392.5 240v68M393.5 257v51M394.5 240v27M395.5 256v52M396.5 240v68M397.5 240v62M398.5 267v41M399.5 240v37M400.5 247v61M401.5 240v68M402.5 240v54M403.5 278v30M404.5 240v48M405.5 241v67M406.5 243v65M407.5 240v45M408.5 275v33M409.5 240v57M410.5 240v68M411.5 250v58M412.5 240v34M413.5 264v44M414.5 240v64M415.5 240v67M416.5 259v49M417.5 240v29M418.5 254v54M419.5 240v68M420.5 240v61M421.5 269v39M422.5 240v39M423.5 246v62M424.5 240v68M425.5 240v53M426.5 280v28M427.5 240v49M428.5 240v68M429.5 244v64M430.5 240v43M431.5 273v35M432.5 240v58M433.5 240v68M434.5 251v57M435.5 240v32M436.5 262v46M437.5 240v65M438.5 240v66M439.5 261v47M440.5 240v31M441.5 253v55M442.5 240v68M443.5 240v60M444.5 271v37M445.5 240v41M446.5 244v64M447.5 239v69M448.5 239v52M449.5 281v27M450.5 239v53M451.5 239v70M452.5 244v65M453.5 239v42M454.5 271v38M455.5 239v62M456.5 238v71M457.5 252v57M458.5 238v32M459.5 260v49M460.5 238v70M461.5 238v69M462.5 262v48M463.5 238v35M464.5 250v60M465.5 238v72M466.5 238v62M467.5 273v37M468.5 237v47M469.5 241v69M470.5 238v72M471.5 237v53M472.5 280v31M473.5 237v58M474.5 237v74M475.5 244v67M476.5 237v42M477.5 268v43M478.5 236v68M479.5 236v75M480.5 253v59M481.5 236v32M482.5 257v55M483.5 236v75M484.5 235v73M485.5 263v49M486.5 235v40M487.5 246v67M488.5 235v78M489.5 235v65M490.5 275v38M491.5 234v53M492.5 238v75M493.5 236v77M494.5 234v55M495.5 278v36M496.5 234v64M497.5 234v80M498.5 243v71M499.5 233v44M500.5 265v49M501.5 233v75M502.5 233v82M503.5 253v62M504.5 233v32M505.5 253v62M506.5 232v83M507.5 232v77M508.5 265v51M509.5 232v45M510.5 242v74M511.5 232v84M512.5 231v69M513.5 278v38M514.5 231v59M515.5 234v83M516.5 235v82M517.5 231v57M518.5 276v41M519.5 230v72M520.5 230v88M521.5 243v75M522.5 230v45M523.5 262v56M524.5 229v84M525.5 229v88M526.5 254v65M527.5 229v37M528.5 249v70M529.5 228v91M530.5 228v82M531.5 267v53M532.5 228v52M533.5 237v83M534.5 227v93M535.5 227v73M536.5 281v40M537.5 227v67M538.5 228v93M539.5 232v89M540.5 226v61M541.5 273v49M542.5 226v81M543.5 225v97M544.5 242v80M545.5 225v47M546.5 258v65M547.5 225v93M548.5 224v96M549.5 255v68M550.5 224v44M551.5 244v80M552.5 224v100M553.5 223v88M554.5 269v55M555.5 223v61M556.5 232v93M557.5 223v102M558.5 222v77M559.5 285v40M560.5 222v77M561.5 223v103M562.5 231v95M563.5 222v63M564.5 270v56M565.5 221v91M566.5 221v105M567.5 242v85M568.5 221v48M569.5 254v73M570.5 220v103M571.5 220v102M572.5 256v72M573.5 220v51M574.5 240v88M575.5 220v108M576.5 219v93M577.5 272v56M578.5 219v68M579.5 227v102M580.5 221v108M581.5 219v79M582.5 284v45M583.5 218v85M584.5 218v112M585.5 230v100M586.5 218v64M587.5 267v63M588.5 217v100M589.5 217v113M590.5 243v88M591.5 217v48M592.5 250v81M593.5 217v111M594.5 217v106M595.5 258v73M596.5 217v57M597.5 235v96M598.5 216v115M599.5 216v95M600.5 275v56M601.5 216v75M602.5 223v109M603.5 220v112M604.5 216v80M605.5 281v51M606.5 216v91M607.5 216v116M608.5 230v102M609.5 215v64M610.5 263v69M611.5 215v106M612.5 215v116M613.5 245v87M614.5 215v47M615.5 246v87M616.5 215v116M617.5 215v108M618.5 261v72M619.5 215v62M620.5 231v102M621.5 214v119M622.5 214v96M623.5 279v54M624.5 214v81M625.5 220v113M626.5 220v114M627.5 214v80M628.5 278v56M629.5 214v97M630.5 213v121M631.5 231v104M632.5 213v63M633.5 259v76M634.5 212v113M635.5 212v121M636.5 246v90M637.5 212v50M638.5 242v94M639.5 211v125M640.5 211v112M641.5 264v73M642.5 211v70M643.5 226v111M644.5 210v128M645.5 210v99M646.5 283v55M647.5 209v91M648.5 213v125M649.5 218v121M650.5 209v83M651.5 274v65M652.5 208v109M653.5 208v132M654.5 231v109M655.5 208v64M656.5 254v86M657.5 207v124M658.5 207v128M659.5 248v92M660.5 207v58M661.5 236v104M662.5 207v133M663.5 207v116M664.5 267v73M665.5 207v78M666.5 221v119M667.5 209v131M668.5 207v100M669.5 287v53M670.5 207v97M671.5 210v130M672.5 219v121M673.5 207v82M674.5 270v71M675.5 207v114M676.5 207v134M677.5 233v108M678.5 207v62M679.5 251v90M680.5 207v127M681.5 207v127M682.5 251v90M683.5 207v62M684.5 233v108M685.5 207v134M686.5 207v114M687.5 271v70M688.5 207v82M689.5 218v122M690.5 210v130M691.5 207v97M692.5 286v54M693.5 207v101M694.5 208v132M695.5 221v119M696.5 207v78M697.5 267v73M698.5 207v117M699.5 207v133M700.5 237v103M701.5 207v58M702.5 247v93M703.5 207v129M704.5 207v124M705.5 255v85M706.5 207v66M707.5 230v110M708.5 207v133M709.5 207v111M710.5 275v65M711.5 207v86M712.5 216v124M713.5 212v128M714.5 207v93M715.5 283v57M716.5 207v104M717.5 207v133M718.5 224v116M719.5 207v74M720.5 263v77M721.5 207v119M722.5 207v132M723.5 240v100M724.5 207v54M725.5 244v96M726.5 208v129M727.5 208v121M728.5 259v81M729.5 208v69M730.5 228v111M731.5 208v131M732.5 209v105M733.5 278v61M734.5 209v87M735.5 216v123M736.5 216v122M737.5 209v87M738.5 279v59M739.5 210v103M740.5 210v128M741.5 229v109M742.5 210v67M743.5 260v77M744.5 211v115M745.5 211v123M746.5 245v92M747.5 211v50M748.5 242v94M749.5 211v124M750.5 211v113M751.5 263v73M752.5 212v68M753.5 227v109M754.5 212v124M755.5 212v97M756.5 282v53M757.5 212v86M758.5 217v118M759.5 220v115M760.5 213v79M761.5 275v60M762.5 213v101M763.5 213v122M764.5 233v101M765.5 213v61M766.5 257v77M767.5 214v112M768.5 214v116M769.5 249v85M770.5 214v51M771.5 241v93M772.5 214v119M773.5 214v105M774.5 267v66M775.5 214v69M776.5 227v106M777.5 215v118M778.5 215v89M779.5 285v48M780.5 215v85M781.5 218v114M782.5 225v107M783.5 216v72M784.5 272v60M785.5 216v99M786.5 216v116M787.5 238v94M788.5 216v54M789.5 255v76M790.5 216v109M791.5 216v110M792.5 253v78M793.5 217v52M794.5 240v90M795.5 218v112M796.5 218v96M797.5 270v60M798.5 218v68M799.5 228v101M800.5 220v109M801.5 219v81M802.5 285v43M803.5 220v81M804.5 220v108M805.5 230v98M806.5 220v64M807.5 269v58M808.5 221v93M809.5 221v106M810.5 243v83M811.5 222v46M812.5 253v73M813.5 222v100M814.5 222v98M815.5 258v67M816.5 223v49M817.5 240v85M818.5 223v101M819.5 224v84M820.5 274v50M821.5 224v64M822.5 231v92M823.5 227v96M824.5 225v70M825.5 281v42M826.5 225v76M827.5 226v96M828.5 236v86M829.5 226v54M830.5 266v55M831.5 226v85M832.5 227v94M833.5 249v72M834.5 227v39M835.5 253v67M836.5 228v91M837.5 228v85M838.5 262v58M839.5 228v47M840.5 242v77M841.5 228v91M842.5 229v74M843.5 276v43M844.5 229v60M845.5 233v86M846.5 232v86M847.5 229v61M848.5 278v40M849.5 230v71M850.5 230v88M851.5 241v77M852.5 230v47M853.5 264v53M854.5 230v80M855.5 231v86M856.5 253v64M857.5 231v34M858.5 252v65M859.5 231v85M860.5 231v78M861.5 265v51M862.5 232v46M863.5 242v74M864.5 232v84M865.5 232v67M866.5 278v37M867.5 232v58M868.5 235v80M869.5 236v79M870.5 233v54M871.5 275v40M872.5 233v68M873.5 233v81M874.5 245v69M875.5 234v40M876.5 263v51M877.5 234v75M878.5 234v79M879.5 256v57M880.5 235v33M881.5 252v61M882.5 235v78M883.5 235v69M884.5 268v44M885.5 236v44M886.5 243v68M887.5 236v75M888.5 237v57M889.5 280v31M890.5 237v53M891.5 238v72M892.5 242v68M893.5 238v45M894.5 273v36M895.5 239v60M896.5 239v70M897.5 251v57M898.5 239v33M899.5 262v46M900.5 240v65M901.5 240v66M902.5 261v47M903.5 240v30M904.5 253v55M905.5 240v68M906.5 240v60M907.5 271v37M908.5 240v41M909.5 245v63M910.5 240v68M911.5 240v51M912.5 281v27M913.5 240v51M914.5 240v68M915.5 245v63M916.5 240v41M917.5 271v37M918.5 240v60M919.5 240v68M920.5 253v55M921.5 240v30M922.5 260v48M923.5 240v66M924.5 240v65M925.5 262v46M926.5 240v32M927.5 251v57M928.5 240v68M929.5 240v58M930.5 273v35M931.5 240v43M932.5 244v64M933.5 240v68M934.5 240v49M935.5 279v29M936.5 240v53M937.5 240v68M938.5 246v62M939.5 240v39M940.5 269v39M941.5 240v61M942.5 240v68M943.5 255v53M944.5 240v28M945.5 259v49M946.5 240v67M947.5 240v64M948.5 264v44M949.5 240v34M950.5 250v58M951.5 240v68M952.5 240v57M953.5 275v33M954.5 240v45M955.5 242v66M956.5 241v67M957.5 240v47M958.5 277v31M959.5 240v55M960.5 240v68M961.5 248v60M962.5 240v37M963.5 267v41M964.5 240v63M965.5 240v68M966.5 256v52M967.5 240v26M968.5 257v51M969.5 240v68M970.5 240v63M971.5 266v42M972.5 240v36M973.5 248v60M974.5 240v68M975.5 240v55M976.5 277v31M977.5 240v47M978.5 241v67M979.5 242v66M980.5 240v45M981.5 275v33M982.5 240v56M983.5 240v68M984.5 249v59M985.5 240v35M986.5 265v43M987.5 240v64M988.5 240v68M989.5 258v50M990.5 240v28M991.5 255v53M992.5 240v68M993.5 240v62M994.5 268v40M995.5 240v39M996.5 247v61M997.5 240v68M998.5 240v53M999.5 279v29M1000.5 240v49M1001.5 240v68M1002.5 243v65M1003.5 240v43M1004.5 273v35M1005.5 240v58M1006.5 240v68M1007.5 251v57M1008.5 240v33M1009.5 263v45M1010.5 240v65M1011.5 240v67M1012.5 260v48M1013.5 240v30M1014.5 253v55M1015.5 240v68M1016.5 240v60M1017.5 270v38M1018.5 240v41M1019.5 245v63M1020.5 240v68M1021.5 240v51M1022.5 281v27M1023.5 240v51M1024.5 240v68M1025.5 245v63M1026.5 240v41M1027.5 271v37M1028.5 240v59M1029.5 240v68M1030.5 252v56M1031.5 240v31M1032.5 261v47M1033.5 240v66M1034.5 240v66M1035.5 262v46M1036.5 240v32M1037.5 252v56M1038.5 240v68M1039.5 240v59M1040.5 272v36M1041.5 240v42M1042.5 244v64M1043.5 240v68M1044.5 240v50M1045.5 280v28M1046.5 240v52M1047.5 240v68M1048.5 246v62M1049.5 240v40M1050.5 269v39M1051.5 240v61M1052.5 240v68M1053.5 254v54M1054.5 240v29M1055.5 259v49M1056.5 240v67M1057.5 240v64M1058.5 264v44M1059.5 240v34M1060.5 250v58M1061.5 240v68M1062.5 240v57M1063.5 274v34M1064.5 240v44M1065.5 243v65M1066.5 241v67M1067.5 240v48M1068.5 278v30M1069.5 240v54M1070.5 240v68M1071.5 247v61M1072.5 240v38M1073.5 267v41M1074.5 240v62M1075.5 240v68M1076.5 256v52M1077.5 240v27M1078.5 257v51M1079.5 240v68M1080.5 240v63M1081.5 266v42M1082.5 240v36M1083.5 248v60M1084.5 240v68M1085.5 240v55M1086.5 276v32M1087.5 240v46M1088.5 242v66M1089.5 242v66M1090.5 240v46M1091.5 276v32M1092.5 240v56M1093.5 240v68M1094.5 249v59M1095.5 240v35M1096.5 265v43M1097.5 240v63M1098.5 240v68M1099.5 258v50M1100.5 240v27M1101.5 255v53M1102.5 240v68M1103.5 240v62M1104.5 268v40M1105.5 240v38M1106.5 247v61M1107.5 240v68M1108.5 240v54M1109.5 278v30M1110.5 240v48M1111.5 241v67M1112.5 243v65M1113.5 240v44M1114.5 274v34M1115.5 240v57M1116.5 240v68M1117.5 250v58M1118.5 240v33M1119.5 263v45M1120.5 240v65M1121.5 240v67M1122.5 260v48M1123.5 240v29M1124.5 254v54M1125.5 240v68M1126.5 240v60M1127.5 270v38M1128.5 240v40M1129.5 246v62M1130.5 240v68M1131.5 240v52M1132.5 280v28M1133.5 240v50M1134.5 240v68M1135.5 244v64M1136.5 240v42M1137.5 272v36M1138.5 240v59M1139.5 240v68M1140.5 252v56M1141.5 240v31M1142.5 262v46M1143.5 240v66M1144.5 240v66M1145.5 261v47M1146.5 240v31M1147.5 252v56M1148.5 240v68M1149.5 240v59M1150.5 272v36M1151.5 240v42M1152.5 244v64M1153.5 240v68M1154.5 240v50M1155.5 280v28M1156.5 240v52M1157.5 240v68M1158.5 246v62M1159.5 240v40M1160.5 270v38M1161.5 240v60M1162.5 240v68M1163.5 254v54M1164.5 240v29M1165.5 260v48M1166.5 240v67M1167.5 240v65M1168.5 263v45M1169.5 240v33M1170.5 250v58M1171.5 240v68M1172.5 240v57M1173.5 274v34M1174.5 240v44M1175.5 243v65M1176.5 241v67M1177.5 240v48M1178.5 279v29M1179.5 240v54M1180.5 240v68M1181.5 247v61M1182.5 240v38M1183.5 268v40M1184.5 240v62M1185.5 240v68M1186.5 255v53M1187.5 240v27M1188.5 258v50M1189.5 240v68M1190.5 240v64M1191.5 265v43M1192.5 240v35M1193.5 249v59M1194.5 240v68M1195.5 240v56M1196.5 276v32M1197.5 240v46M1198.5 242v66M1199.5 242v66M1200.5 240v46M1201.5 277v31M1202.5 240v55M1203.5 240v68M1204.5 248v60M1205.5 240v36M1206.5 266v42M1207.5 240v63M1208.5 240v68M1209.5 257v51M1210.5 240v27M1211.5 256v52M1212.5 240v68M1213.5 240v62M1214.5 267v41M1215.5 240v37M1216.5 247v61M1217.5 240v68M1218.5 240v54M1219.5 278v30M1220.5 240v48M1221.5 241v67M1222.5 243v65M1223.5 240v45M1224.5 274v34M1225.5 240v57M1226.5 240v68M1227.5 250v58M1228.5 240v34M1229.5 264v44M1230.5 240v64M1231.5 240v67M1232.5 259v49M1233.5 240v29M1234.5 254v54M1235.5 240v68M1236.5 240v61M1237.5 269v39M1238.5 240v39M1239.5 246v62M1240.5 240v68M1241.5 240v52M1242.5 280v28M1243.5 240v50M1244.5 240v68M1245.5 244v64M1246.5 240v43M1247.5 272v36M1248.5 240v59M1249.5 240v68M1250.5 252v56M1251.5 240v32M1252.5 262v46M1253.5 240v66M1254.5 240v66M1255.5 261v47M1256.5 240v31M1257.5 252v56M1258.5 240v68M1259.5 240v59M1260.5 271v37M1261.5 240v41M1262.5 245v63M1263.5 240v68M1264.5 240v51M1265.5 281v27M1266.5 240v51M1267.5 240v68" stroke="#bdbb00" stroke-width="1" fill="none"/>
<path d="M70.5 308v4M71.5 238v2M71.5 308v3M72.5 236v4M73.5 308v4M74.5 236v4M75.5 308v4M76.5 308v4M77.5 236v4M78.5 308v4M79.5 236v4M80.5 237v3M80.5 308v2M81.5 308v4M82.5 236v4M83.5 308v4M84.5 236v4M85.5 236v4M86.5 308v4M87.5 236v4M88.5 308v4M89.5 236v4M89.5 308v2M90.5 236v4M91.5 308v4M92.5 236v4M93.5 308v3M94.5 239v1M94.5 308v4M95.5 236v4M96.5 308v3M97.5 236v4M98.5 239v1M98.5 308v4M99.5 308v3M100.5 236v4M101.5 308v4M102.5 236v4M103.5 236v4M103.5 308v2M104.5 308v4M105.5 236v4M106.5 308v4M107.5 236v4M108.5 236v4M109.5 308v4M110.5 236v4M111.5 308v4M112.5 237v3M112.5 308v2M113.5 236v4M114.5 308v4M115.5 236v4M116.5 308v4M117.5 308v4M118.5 236v4M119.5 308v4M120.5 236v4M121.5 239v1M121.5 308v4M122.5 308v4M123.5 236v4M124.5 308v4M125.5 236v4M126.5 236v4M126.5 308v1M127.5 308v4M128.5 236v4M129.5 308v4M130.5 236v4M131.5 236v4M132.5 308v4M133.5 236v4M134.5 308v3M135.5 237v3M135.5 308v3M136.5 236v4M137.5 308v3M138.5 236v4M139.5 308v4M140.5 308v3M141.5 236v4M142.5 308v4M143.5 236v4M144.5 238v2M144.5 308v3M145.5 308v4M146.5 236v4M147.5 308v4M148.5 236v4M149.5 236v4M149.5 308v1M150.5 308v4M151.5 236v4M152.5 308v4M153.5 236v4M154.5 236v4M155.5 308v4M156.5 236v4M157.5 308v4M158.5 238v2M158.5 308v3M159.5 236v4M160.5 308v4M161.5 236v4M162.5 308v3M163.5 308v4M164.5 236v4M165.5 308v4M166.5 236v4M167.5 237v3M167.5 308v3M168.5 308v4M169.5 236v4M170.5 308v4M171.5 236v4M172.5 236v4M173.5 308v4M174.5 236v4M175.5 308v3M176.5 236v4M176.5 308v1M177.5 236v4M178.5 308v3M179.5 236v4M180.5 308v4M181.5 238v2M181.5 308v3M182.5 236v4M183.5 308v4M184.5 236v4M185.5 308v4M186.5 308v4M187.5 236v4M188.5 308v4M189.5 236v4M190.5 237v3M190.5 308v3M191.5 308v4M192.5 236v4M193.5 308v4M194.5 236v4M195.5 236v4M196.5 308v4M197.5 236v4M198.5 308v4M199.5 236v4M199.5 308v2M200.5 236v4M201.5 308v4M202.5 236v4M203.5 308v3M204.5 239v1M204.5 308v4M205.5 236v4M206.5 308v4M207.5 236v4M208.5 308v4M209.5 308v4M210.5 236v4M211.5 308v4M212.5 236v4M213.5 236v4M213.5 308v2M214.5 308v4M215.5 236v4M216.5 308v3M217.5 236v4M218.5 236v4M219.5 308v3M220.5 236v4M221.5 308v4M222.5 237v3M222.5 308v2M223.5 236v4M224.5 308v4M225.5 236v4M226.5 308v4M227.5 308v4M228.5 236v4M229.5 308v4M230.5 236v4M231.5 239v1M231.5 308v4M232.5 308v4M233.5 236v4M234.5 308v4M235.5 236v4M236.5 236v4M236.5 308v1M237.5 308v4M238.5 236v4M239.5 308v4M240.5 236v4M241.5 236v4M242.5 308v4M243.5 236v4M244.5 308v3M245.5 237v3M245.5 308v3M246.5 236v4M247.5 308v3M248.5 236v4M249.5 308v4M250.5 308v4M251.5 236v4M252.5 308v4M253.5 236v4M254.5 238v2M254.5 308v3M255.5 308v4M256.5 236v4M257.5 308v3M258.5 236v4M259.5 236v4M259.5 308v1M260.5 308v3M261.5 236v4M262.5 308v4M263.5 236v4M264.5 236v4M265.5 308v4M266.5 236v4M267.5 308v4M268.5 237v3M268.5 308v3M269.5 236v4M270.5 308v4M271.5 236v4M272.5 308v4M273.5 308v4M274.5 236v4M275.5 308v4M276.5 236v4M277.5 237v3M277.5 308v3M278.5 308v4M279.5 236v4M280.5 308v4M281.5 236v4M282.5 236v4M283.5 308v4M284.5 236v4M285.5 308v3M286.5 236v4M286.5 308v1M287.5 236v4M288.5 308v3M289.5 236v4M290.5 308v4M291.5 238v2M291.5 308v3M292.5 236v4M293.5 308v4M294.5 236v4M295.5 308v4M296.5 308v4M297.5 236v4M298.5 308v4M299.5 236v4M300.5 237v3M300.5 308v3M301.5 308v3M302.5 236v4M303.5 308v4M304.5 236v4M305.5 236v4M306.5 308v4M307.5 236v4M308.5 308v4M309.5 236v4M309.5 308v1M310.5 236v4M311.5 308v4M312.5 236v4M313.5 308v4M314.5 239v1M314.5 308v4M315.5 236v4M316.5 308v4M317.5 236v4M318.5 308v4M319.5 308v4M320.5 236v4M321.5 308v4M322.5 236v4M323.5 237v3M323.5 308v2M324.5 308v4M325.5 236v4M326.5 308v3M327.5 236v4M328.5 236v4M329.5 308v3M330.5 236v4M331.5 308v4M332.5 236v4M332.5 308v2M333.5 236v4M334.5 308v4M335.5 236v4M336.5 308v4M337.5 308v4M338.5 236v4M339.5 308v4M340.5 236v4M341.5 239v1M341.5 308v4M342.5 308v3M343.5 236v4M344.5 308v4M345.5 236v4M346.5 236v4M346.5 308v2M347.5 308v4M348.5 236v4M349.5 308v4M350.5 236v4M351.5 236v4M352.5 308v4M353.5 236v4M354.5 308v4M355.5 237v3M355.5 308v3M356.5 236v4M357.5 308v4M358.5 236v4M359.5 308v4M360.5 308v4M361.5 236v4M362.5 308v4M363.5 236v4M364.5 238v2M364.5 308v3M365.5 308v4M366.5 236v4M367.5 308v3M368.5 236v4M369.5 236v4M369.5 308v1M370.5 308v3M371.5 236v4M372.5 308v4M373.5 236v4M374.5 236v4M375.5 308v4M376.5 236v4M377.5 308v4M378.5 237v3M378.5 308v3M379.5 236v4M380.5 308v4M381.5 236v4M382.5 308v4M383.5 308v4M384.5 236v4M385.5 308v4M386.5 236v4M387.5 238v2M387.5 308v3M388.5 308v4M389.5 236v4M390.5 308v4M391.5 236v4M392.5 236v4M393.5 308v4M394.5 236v4M395.5 308v4M396.5 236v4M396.5 308v1M397.5 236v4M398.5 308v4M399.5 236v4M400.5 308v4M401.5 238v2M401.5 308v3M402.5 236v4M403.5 308v4M404.5 236v4M405.5 308v3M406.5 308v4M407.5 236v4M408.5 308v3M409.5 236v4M410.5 237v3M410.5 308v3M411.5 308v3M412.5 236v4M413.5 308v4M414.5 236v4M415.5 236v4M416.5 308v4M417.5 236v4M418.5 308v4M419.5 236v4M419.5 308v1M420.5 236v4M421.5 308v4M422.5 236v4M423.5 308v4M424.5 239v1M424.5 308v4M425.5 236v4M426.5 308v4M427.5 236v4M428.5 308v4M429.5 308v4M430.5 236v4M431.5 308v4M432.5 236v4M433.5 237v3M433.5 308v2M434.5 308v4M435.5 236v4M436.5 308v4M437.5 236v4M438.5 236v4M439.5 308v4M440.5 236v4M441.5 308v4M442.5 236v4M442.5 308v2M443.5 236v4M444.5 308v4M445.5 236v4M446.5 308v4M447.5 308v4M448.5 235v4M449.5 308v4M450.5 235v4M451.5 238v1M451.5 309v4M452.5 309v4M453.5 235v4M454.5 309v4M455.5 235v4M456.5 235v3M456.5 309v2M457.5 309v4M458.5 234v4M459.5 309v4M460.5 234v4M461.5 234v4M462.5 310v4M463.5 234v4M464.5 310v4M465.5 234v4M465.5 310v3M466.5 234v4M467.5 310v4M468.5 233v4M469.5 310v4M470.5 310v4M471.5 233v4M472.5 311v4M473.5 233v4M474.5 235v2M474.5 311v4M475.5 311v4M476.5 233v4M477.5 311v4M478.5 232v4M479.5 232v4M479.5 311v2M480.5 312v3M481.5 232v4M482.5 312v4M483.5 232v4M484.5 232v3M485.5 312v4M486.5 231v4M487.5 313v3M488.5 232v3M488.5 313v3M489.5 231v4M490.5 313v4M491.5 231v3M492.5 313v4M493.5 313v4M494.5 230v4M495.5 314v4M496.5 230v4M497.5 232v2M497.5 314v4M498.5 314v4M499.5 229v4M500.5 314v4M501.5 229v4M502.5 229v4M503.5 315v4M504.5 229v4M505.5 315v4M506.5 228v4M507.5 228v4M508.5 316v4M509.5 228v4M510.5 316v4M511.5 230v2M511.5 316v4M512.5 227v4M513.5 316v4M514.5 227v4M515.5 317v3M516.5 317v4M517.5 227v4M518.5 317v4M519.5 226v4M520.5 227v3M520.5 318v3M521.5 318v4M522.5 226v4M523.5 318v4M524.5 225v4M525.5 225v4M526.5 319v4M527.5 225v4M528.5 319v4M529.5 224v4M529.5 319v1M530.5 224v4M531.5 320v4M532.5 224v4M533.5 320v4M534.5 226v1M534.5 320v4M535.5 223v4M536.5 321v4M537.5 223v4M538.5 321v4M539.5 321v4M540.5 222v4M541.5 322v4M542.5 222v4M543.5 222v3M543.5 322v3M544.5 322v4M545.5 221v4M546.5 323v4M547.5 221v4M548.5 221v3M549.5 323v4M550.5 220v4M551.5 324v4M552.5 220v4M552.5 324v1M553.5 219v4M554.5 324v4M555.5 219v4M556.5 325v4M557.5 325v4M558.5 219v3M559.5 325v4M560.5 218v4M561.5 326v4M562.5 326v4M563.5 218v4M564.5 326v4M565.5 217v4M566.5 218v3M566.5 326v2M567.5 327v4M568.5 217v4M569.5 327v4M570.5 217v3M571.5 216v4M572.5 328v3M573.5 216v4M574.5 328v4M575.5 217v3M575.5 328v2M576.5 216v3M577.5 328v4M578.5 215v4M579.5 329v4M580.5 329v4M581.5 215v4M582.5 329v4M583.5 214v4M584.5 330v3M585.5 330v4M586.5 214v4M587.5 330v4M588.5 213v4M589.5 213v4M589.5 330v1M590.5 331v4M591.5 213v4M592.5 331v4M593.5 213v4M594.5 213v4M595.5 331v4M596.5 213v4M597.5 331v4M598.5 214v2M598.5 331v3M599.5 212v4M600.5 331v4M601.5 212v4M602.5 332v4M603.5 332v3M604.5 212v4M605.5 332v4M606.5 212v4M607.5 215v1M607.5 332v4M608.5 332v4M609.5 211v4M610.5 332v4M611.5 211v4M612.5 211v4M613.5 332v4M614.5 211v4M615.5 333v4M616.5 211v4M617.5 211v4M618.5 333v4M619.5 211v4M620.5 333v4M621.5 213v1M621.5 333v3M622.5 210v4M623.5 333v4M624.5 210v4M625.5 333v4M626.5 334v3M627.5 210v4M628.5 334v4M629.5 210v4M630.5 212v1M630.5 334v3M631.5 335v3M632.5 209v4M633.5 335v4M634.5 208v4M635.5 208v4M636.5 336v4M637.5 208v4M638.5 336v4M639.5 207v4M640.5 207v4M641.5 337v4M642.5 207v4M643.5 337v4M644.5 338v3M645.5 206v4M646.5 338v4M647.5 205v4M648.5 338v4M649.5 339v4M650.5 205v4M651.5 339v4M652.5 204v4M653.5 206v2M653.5 340v2M654.5 340v4M655.5 204v4M656.5 340v4M657.5 203v4M658.5 204v3M659.5 340v4M660.5 203v4M661.5 340v4M662.5 204v3M662.5 340v1M663.5 203v4M664.5 340v4M665.5 203v4M666.5 340v4M667.5 340v4M668.5 203v4M669.5 340v4M670.5 203v4M671.5 340v4M672.5 340v4M673.5 203v4M674.5 341v4M675.5 203v4M676.5 204v3M676.5 341v1M677.5 341v4M678.5 203v4M679.5 341v3M680.5 203v4M681.5 203v4M682.5 341v3M683.5 203v4M684.5 341v4M685.5 204v3M685.5 341v1M686.5 203v4M687.5 341v3M688.5 203v4M689.5 340v4M690.5 340v4M691.5 203v4M692.5 340v4M693.5 203v4M694.5 340v4M695.5 340v4M696.5 203v4M697.5 340v4M698.5 203v4M699.5 204v3M700.5 340v4M701.5 203v4M702.5 340v4M703.5 203v4M704.5 203v4M705.5 340v4M706.5 203v4M707.5 340v4M708.5 205v2M708.5 340v3M709.5 204v3M710.5 340v4M711.5 203v4M712.5 340v4M713.5 340v4M714.5 203v4M715.5 340v4M716.5 203v4M717.5 340v4M718.5 340v4M719.5 204v3M720.5 340v4M721.5 204v3M722.5 204v3M723.5 340v4M724.5 204v3M725.5 340v4M726.5 204v4M727.5 204v4M728.5 340v4M729.5 204v4M730.5 339v4M731.5 207v1M731.5 339v3M732.5 205v4M733.5 339v4M734.5 205v4M735.5 339v3M736.5 338v4M737.5 206v3M738.5 338v4M739.5 206v4M740.5 209v1M740.5 338v3M741.5 338v3M742.5 206v4M743.5 337v4M744.5 207v4M745.5 207v4M746.5 337v4M747.5 207v4M748.5 336v4M749.5 207v4M750.5 208v3M751.5 336v4M752.5 208v4M753.5 336v4M754.5 211v1M754.5 336v3M755.5 208v4M756.5 335v4M757.5 208v4M758.5 335v4M759.5 335v4M760.5 209v4M761.5 335v4M762.5 209v4M763.5 211v2M763.5 335v2M764.5 334v4M765.5 209v4M766.5 334v4M767.5 210v4M768.5 210v4M769.5 334v4M770.5 210v4M771.5 334v4M772.5 210v4M772.5 333v1M773.5 210v4M774.5 333v4M775.5 211v3M776.5 333v4M777.5 333v4M778.5 211v4M779.5 333v4M780.5 211v4M781.5 332v4M782.5 332v4M783.5 212v4M784.5 332v4M785.5 212v4M786.5 213v3M786.5 332v2M787.5 332v4M788.5 212v4M789.5 331v4M790.5 212v4M791.5 213v3M792.5 331v4M793.5 213v4M794.5 330v4M795.5 214v4M795.5 330v2M796.5 214v4M797.5 330v4M798.5 214v4M799.5 329v4M800.5 329v4M801.5 215v4M802.5 328v4M803.5 216v4M804.5 328v4M805.5 328v3M806.5 216v4M807.5 327v4M808.5 217v4M809.5 217v4M809.5 327v1M810.5 326v4M811.5 218v4M812.5 326v4M813.5 218v4M814.5 218v4M815.5 325v4M816.5 219v4M817.5 325v4M818.5 220v3M818.5 324v3M819.5 220v4M820.5 324v4M821.5 220v4M822.5 323v4M823.5 323v4M824.5 221v4M825.5 323v4M826.5 221v4M827.5 225v1M827.5 322v4M828.5 322v4M829.5 222v4M830.5 321v4M831.5 223v3M832.5 223v4M833.5 321v3M834.5 223v4M835.5 320v4M836.5 224v4M837.5 224v4M838.5 320v4M839.5 224v4M840.5 319v4M841.5 226v2M841.5 319v3M842.5 225v4M843.5 319v4M844.5 225v4M845.5 319v4M846.5 318v4M847.5 225v4M848.5 318v4M849.5 226v4M850.5 228v2M850.5 318v3M851.5 318v4M852.5 226v4M853.5 317v4M854.5 227v3M855.5 227v4M856.5 317v4M857.5 227v4M858.5 317v4M859.5 227v4M859.5 316v1M860.5 227v4M861.5 316v4M862.5 228v4M863.5 316v4M864.5 230v2M864.5 316v3M865.5 228v4M866.5 315v4M867.5 228v4M868.5 315v4M869.5 315v4M870.5 229v4M871.5 315v3M872.5 229v4M873.5 231v2M873.5 314v3M874.5 314v4M875.5 230v4M876.5 314v4M877.5 230v4M878.5 230v4M879.5 313v4M880.5 231v4M881.5 313v4M882.5 231v4M882.5 313v1M883.5 231v4M884.5 312v4M885.5 232v4M886.5 311v4M887.5 235v1M887.5 311v4M888.5 233v4M889.5 311v4M890.5 233v4M891.5 310v4M892.5 310v4M893.5 234v4M894.5 309v4M895.5 235v4M896.5 236v3M896.5 309v2M897.5 308v4M898.5 236v3M899.5 308v4M900.5 236v4M901.5 236v4M902.5 308v4M903.5 236v4M904.5 308v4M905.5 236v4M905.5 308v2M906.5 236v4M907.5 308v4M908.5 236v4M909.5 308v3M910.5 239v1M910.5 308v4M911.5 236v4M912.5 308v3M913.5 236v4M914.5 239v1M914.5 308v4M915.5 308v3M916.5 236v4M917.5 308v4M918.5 236v4M919.5 236v4M919.5 308v2M920.5 308v4M921.5 236v4M922.5 308v4M923.5 236v4M924.5 236v4M925.5 308v4M926.5 236v4M927.5 308v4M928.5 237v3M928.5 308v2M929.5 236v4M930.5 308v4M931.5 236v4M932.5 308v4M933.5 308v4M934.5 236v4M935.5 308v4M936.5 236v4M937.5 238v2M937.5 308v3M938.5 308v4M939.5 236v4M940.5 308v4M941.5 236v4M942.5 236v4M942.5 308v1M943.5 308v4M944.5 236v4M945.5 308v4M946.5 236v4M947.5 236v4M948.5 308v4M949.5 236v4M950.5 308v3M951.5 237v3M951.5 308v3M952.5 236v4M953.5 308v3M954.5 236v4M955.5 308v4M956.5 308v3M957.5 236v4M958.5 308v4M959.5 236v4M960.5 238v2M960.5 308v3M961.5 308v4M962.5 236v4M963.5 308v4M964.5 236v4M965.5 236v4M966.5 308v4M967.5 236v4M968.5 308v4M969.5 236v4M970.5 236v4M971.5 308v4M972.5 236v4M973.5 308v4M974.5 238v2M974.5 308v3M975.5 236v4M976.5 308v4M977.5 236v4M978.5 308v3M979.5 308v4M980.5 236v4M981.5 308v3M982.5 236v4M983.5 237v3M983.5 308v3M984.5 308v4M985.5 236v4M986.5 308v4M987.5 236v4M988.5 236v4M989.5 308v4M990.5 236v4M991.5 308v3M992.5 236v4M992.5 308v1M993.5 236v4M994.5 308v3M995.5 236v4M996.5 308v4M997.5 238v2M997.5 308v3M998.5 236v4M999.5 308v4M1000.5 236v4M1001.5 308v4M1002.5 308v4M1003.5 236v4M1004.5 308v4M1005.5 236v4M1006.5 237v3M1006.5 308v3M1007.5 308v4M1008.5 236v4M1009.5 308v4M1010.5 236v4M1011.5 236v4M1012.5 308v4M1013.5 236v4M1014.5 308v4M1015.5 236v4M1015.5 308v2M1016.5 236v4M1017.5 308v4M1018.5 236v4M1019.5 308v3M1020.5 239v1M1020.5 308v4M1021.5 236v4M1022.5 308v3M1023.5 236v4M1024.5 239v1M1024.5 308v4M1025.5 308v4M1026.5 236v4M1027.5 308v4M1028.5 236v4M1029.5 236v4M1029.5 308v2M1030.5 308v4M1031.5 236v4M1032.5 308v3M1033.5 236v4M1034.5 236v4M1035.5 308v3M1036.5 236v4M1037.5 308v4M1038.5 237v3M1038.5 308v2M1039.5 236v4M1040.5 308v4M1041.5 236v4M1042.5 308v4M1043.5 308v4M1044.5 236v4M1045.5 308v4M1046.5 236v4M1047.5 239v1M1047.5 308v4M1048.5 308v4M1049.5 236v4M1050.5 308v4M1051.5 236v4M1052.5 236v4M1052.5 308v1M1053.5 308v4M1054.5 236v4M1055.5 308v4M1056.5 236v4M1057.5 236v4M1058.5 308v4M1059.5 236v4M1060.5 308v3M1061.5 237v3M1061.5 308v3M1062.5 236v4M1063.5 308v3M1064.5 236v4M1065.5 308v4M1066.5 308v3M1067.5 236v4M1068.5 308v4M1069.5 236v4M1070.5 238v2M1070.5 308v3M1071.5 308v4M1072.5 236v4M1073.5 308v4M1074.5 236v4M1075.5 236v4M1075.5 308v1M1076.5 308v3M1077.5 236v4M1078.5 308v4M1079.5 236v4M1080.5 236v4M1081.5 308v4M1082.5 236v4M1083.5 308v4M1084.5 237v3M1084.5 308v3M1085.5 236v4M1086.5 308v4M1087.5 236v4M1088.5 308v4M1089.5 308v4M1090.5 236v4M1091.5 308v4M1092.5 236v4M1093.5 237v3M1093.5 308v3M1094.5 308v4M1095.5 236v4M1096.5 308v4M1097.5 236v4M1098.5 236v4M1099.5 308v4M1100.5 236v4M1101.5 308v3M1102.5 236v4M1102.5 308v1M1103.5 236v4M1104.5 308v3M1105.5 236v4M1106.5 308v4M1107.5 238v2M1107.5 308v3M1108.5 236v4M1109.5 308v4M1110.5 236v4M1111.5 308v4M1112.5 308v4M1113.5 236v4M1114.5 308v4M1115.5 236v4M1116.5 237v3M1116.5 308v3M1117.5 308v4M1118.5 236v4M1119.5 308v4M1120.5 236v4M1121.5 236v4M1122.5 308v4M1123.5 236v4M1124.5 308v4M1125.5 236v4M1125.5 308v2M1126.5 236v4M1127.5 308v4M1128.5 236v4M1129.5 308v4M1130.5 239v1M1130.5 308v4M1131.5 236v4M1132.5 308v4M1133.5 236v4M1134.5 308v4M1135.5 308v4M1136.5 236v4M1137.5 308v4M1138.5 236v4M1139.5 236v4M1139.5 308v2M1140.5 308v4M1141.5 236v4M1142.5 308v3M1143.5 236v4M1144.5 236v4M1145.5 308v3M1146.5 236v4M1147.5 308v4M1148.5 236v4M1148.5 308v2M1149.5 236v4M1150.5 308v4M1151.5 236v4M1152.5 308v4M1153.5 308v4M1154.5 236v4M1155.5 308v4M1156.5 236v4M1157.5 239v1M1157.5 308v4M1158.5 308v4M1159.5 236v4M1160.5 308v4M1161.5 236v4M1162.5 236v4M1162.5 308v2M1163.5 308v4M1164.5 236v4M1165.5 308v4M1166.5 236v4M1167.5 236v4M1168.5 308v4M1169.5 236v4M1170.5 308v4M1171.5 237v3M1171.5 308v3M1172.5 236v4M1173.5 308v4M1174.5 236v4M1175.5 308v4M1176.5 308v4M1177.5 236v4M1178.5 308v4M1179.5 236v4M1180.5 238v2M1180.5 308v3M1181.5 308v4M1182.5 236v4M1183.5 308v3M1184.5 236v4M1185.5 236v4M1185.5 308v1M1186.5 308v3M1187.5 236v4M1188.5 308v4M1189.5 236v4M1190.5 236v4M1191.5 308v4M1192.5 236v4M1193.5 308v4M1194.5 237v3M1194.5 308v3M1195.5 236v4M1196.5 308v4M1197.5 236v4M1198.5 308v4M1199.5 308v4M1200.5 236v4M1201.5 308v4M1202.5 236v4M1203.5 238v2M1203.5 308v3M1204.5 308v4M1205.5 236v4M1206.5 308v4M1207.5 236v4M1208.5 236v4M1209.5 308v4M1210.5 236v4M1211.5 308v3M1212.5 236v4M1212.5 308v1M1213.5 236v4M1214.5 308v4M1215.5 236v4M1216.5 308v4M1217.5 238v2M1217.5 308v3M1218.5 236v4M1219.5 308v4M1220.5 236v4M1221.5 308v3M1222.5 308v4M1223.5 236v4M1224.5 308v3M1225.5 236v4M1226.5 237v3M1226.5 308v3M1227.5 308v3M1228.5 236v4M1229.5 308v4M1230.5 236v4M1231.5 236v4M1232.5 308v4M1233.5 236v4M1234.5 308v4M1235.5 236v4M1235.5 308v1M1236.5 236v4M1237.5 308v4M1238.5 236v4M1239.5 308v4M1240.5 239v1M1240.5 308v4M1241.5 236v4M1242.5 308v4M1243.5 236v4M1244.5 308v4M1245.5 308v4M1246.5 236v4M1247.5 308v4M1248.5 236v4M1249.5 237v3M1249.5 308v2M1250.5 308v4M1251.5 236v4M1252.5 308v3M1253.5 236v4M1254.5 236v4M1255.5 308v4M1256.5 236v4M1257.5 308v4M1258.5 236v4M1258.5 308v2M1259.5 236v4M1260.5 308v4M1261.5 236v4M1262.5 308v3M1263.5 239v1M1263.5 308v4M1264.5 236v4M1265.5 308v3M1266.5 236v4M1267.5 239v1M1267.5 308v4" stroke="#e0dc00" stroke-width="1" fill="none"/>
<path d="M71 207.5H1268M71 275.5H1268M71 342.5H1268M189.5 200V346M309.5 200V346M429.5 200V346M549.5 200V346M789.5 200V346M909.5 200V346M1029.5 200V346M1149.5 200V346" stroke="#8a8a8a" stroke-width="1" stroke-dasharray="1 1" fill="none" opacity="0.55"/>
<path d="M70.5 416v7M70.5 430v9M71.5 416v7M71.5 429v8M72.5 418v5M72.5 429v7M73.5 417v7M73.5 430v7M74.5 418v6M74.5 430v6M75.5 418v5M75.5 428v9M76.5 417v7M76.5 430v7M77.5 418v5M77.5 430v6M78.5 417v6M78.5 430v8M79.5 417v8M79.5 430v7M80.5 418v5M80.5 430v11M81.5 416v8M81.5 430v7M82.5 418v6M82.5 430v8M83.5 417v6M83.5 429v7M84.5 418v5M84.5 429v9M85.5 418v5M85.5 429v8M86.5 417v6M86.5 429v8M87.5 416v7M87.5 428v10M88.5 418v5M88.5 429v7M89.5 418v6M89.5 429v8M90.5 418v5M90.5 430v7M91.5 418v5M91.5 429v7M92.5 418v6M92.5 430v7M93.5 418v5M93.5 429v11M94.5 417v6M94.5 429v9M95.5 417v6M95.5 429v8M96.5 418v6M96.5 430v6M97.5 418v5M97.5 429v9M98.5 417v6M98.5 429v9M99.5 417v6M99.5 429v8M100.5 418v4M100.5 429v7M101.5 417v6M101.5 430v7M102.5 418v5M102.5 429v8M103.5 417v6M103.5 429v8M104.5 417v6M104.5 428v11M105.5 418v5M105.5 429v9M106.5 417v6M106.5 429v8M107.5 418v5M107.5 428v8M108.5 418v5M108.5 428v9M109.5 418v6M109.5 430v7M110.5 418v6M110.5 430v6M111.5 418v6M111.5 430v7M112.5 417v6M112.5 429v7M113.5 418v5M113.5 429v7M114.5 415v8M114.5 429v8M115.5 416v6M115.5 428v9M116.5 417v6M116.5 429v8M117.5 418v6M117.5 429v8M118.5 416v7M118.5 429v9M119.5 418v6M119.5 429v9M120.5 416v7M120.5 429v7M121.5 418v5M121.5 428v9M122.5 417v6M122.5 429v8M123.5 418v6M123.5 429v7M124.5 418v5M124.5 429v7M125.5 416v7M125.5 429v7M126.5 418v6M126.5 429v7M127.5 418v5M127.5 429v8M128.5 418v5M128.5 429v7M129.5 416v7M129.5 429v8M130.5 418v4M130.5 429v8M131.5 418v6M131.5 430v8M132.5 417v6M132.5 429v7M133.5 416v6M133.5 428v9M134.5 417v6M134.5 429v9M135.5 418v5M135.5 429v7M136.5 418v5M136.5 428v10M137.5 417v6M137.5 428v8M138.5 417v6M138.5 429v8M139.5 416v7M139.5 429v7M140.5 417v6M140.5 430v8M141.5 416v7M141.5 429v9M142.5 417v6M142.5 429v8M143.5 415v8M143.5 430v6M144.5 416v6M144.5 429v8M145.5 417v6M145.5 428v9M146.5 417v6M146.5 429v8M147.5 417v6M147.5 429v8M148.5 418v4M148.5 428v8M149.5 417v5M149.5 429v7M150.5 415v7M150.5 429v7M151.5 417v5M151.5 428v9M152.5 417v5M152.5 428v8M153.5 417v5M153.5 428v8M154.5 417v5M154.5 428v9M155.5 418v5M155.5 429v7M156.5 417v6M156.5 429v8M157.5 418v4M157.5 428v8M158.5 417v6M158.5 429v7M159.5 417v6M159.5 429v9M160.5 417v6M160.5 429v7M161.5 417v6M161.5 429v8M162.5 417v5M162.5 428v9M163.5 416v7M163.5 429v8M164.5 417v5M164.5 429v7M165.5 415v8M165.5 428v8M166.5 418v5M166.5 429v7M167.5 417v6M167.5 429v8M168.5 417v5M168.5 428v8M169.5 415v7M169.5 428v8M170.5 416v7M170.5 429v7M171.5 417v5M171.5 428v9M172.5 418v3M172.5 428v8M173.5 417v5M173.5 429v9M174.5 417v5M174.5 428v8M175.5 417v6M175.5 428v8M176.5 417v5M176.5 428v8M177.5 417v5M177.5 428v8M178.5 416v7M178.5 430v7M179.5 416v7M179.5 429v7M180.5 416v7M180.5 428v9M181.5 417v5M181.5 428v9M182.5 418v4M182.5 428v10M183.5 416v7M183.5 428v8M184.5 417v5M184.5 429v10M185.5 417v5M185.5 428v9M186.5 418v4M186.5 428v9M187.5 417v6M187.5 429v8M188.5 417v5M188.5 428v9M189.5 417v5M189.5 429v7M190.5 417v5M190.5 429v8M191.5 418v4M191.5 429v8M192.5 416v6M192.5 429v7M193.5 418v4M193.5 429v7M194.5 417v6M194.5 429v8M195.5 418v5M195.5 428v8M196.5 417v5M196.5 429v8M197.5 418v4M197.5 428v9M198.5 417v5M198.5 428v8M199.5 417v5M199.5 428v9M200.5 417v5M200.5 428v8M201.5 417v5M201.5 428v8M202.5 416v6M202.5 429v7M203.5 417v5M203.5 428v9M204.5 417v6M204.5 429v8M205.5 417v4M205.5 427v12M206.5 417v5M206.5 429v9M207.5 417v5M207.5 428v8M208.5 417v5M208.5 429v7M209.5 418v3M209.5 428v8M210.5 415v7M210.5 428v8M211.5 417v5M211.5 428v9M212.5 417v5M212.5 428v10M213.5 416v6M213.5 428v9M214.5 416v6M214.5 428v8M215.5 417v5M215.5 428v8M216.5 417v5M216.5 428v10M217.5 417v5M217.5 428v9M218.5 416v6M218.5 429v8M219.5 416v6M219.5 428v9M220.5 416v6M220.5 427v11M221.5 417v5M221.5 428v8M222.5 417v5M222.5 428v8M223.5 416v6M223.5 428v9M224.5 417v5M224.5 428v9M225.5 417v5M225.5 428v8M226.5 417v4M226.5 427v9M227.5 417v6M227.5 428v8M228.5 417v4M228.5 428v8M229.5 416v6M229.5 429v7M230.5 415v7M230.5 428v10M231.5 417v4M231.5 427v9M232.5 415v6M232.5 428v8M233.5 416v6M233.5 428v8M234.5 416v5M234.5 427v10M235.5 416v6M235.5 428v8M236.5 416v6M236.5 428v10M237.5 416v6M237.5 428v8M238.5 416v6M238.5 428v10M239.5 417v4M239.5 427v10M240.5 416v6M240.5 427v9M241.5 417v4M241.5 428v9M242.5 417v5M242.5 428v8M243.5 417v4M243.5 428v8M244.5 416v6M244.5 428v8M245.5 417v4M245.5 428v8M246.5 417v5M246.5 428v9M247.5 415v7M247.5 427v9M248.5 417v4M248.5 428v9M249.5 417v4M249.5 428v8M250.5 417v4M250.5 428v8M251.5 416v6M251.5 428v8M252.5 416v6M252.5 427v9M253.5 415v6M253.5 428v8M254.5 417v4M254.5 428v8M255.5 415v8M255.5 428v8M256.5 416v5M256.5 427v9M257.5 415v7M257.5 428v8M258.5 416v6M258.5 427v10M259.5 417v4M259.5 427v10M260.5 416v5M260.5 427v9M261.5 417v4M261.5 428v8M262.5 416v6M262.5 428v9M263.5 414v8M263.5 428v9M264.5 417v5M264.5 428v8M265.5 417v4M265.5 428v8M266.5 415v7M266.5 428v8M267.5 414v7M267.5 427v10M268.5 416v5M268.5 427v9M269.5 417v5M269.5 428v8M270.5 416v5M270.5 427v9M271.5 417v4M271.5 427v9M272.5 415v7M272.5 428v8M273.5 416v6M273.5 427v9M274.5 416v6M274.5 428v8M275.5 416v5M275.5 427v10M276.5 417v4M276.5 427v9M277.5 417v4M277.5 427v10M278.5 417v4M278.5 427v10M279.5 415v7M279.5 428v9M280.5 417v5M280.5 427v10M281.5 416v5M281.5 426v10M282.5 416v6M282.5 428v8M283.5 417v3M283.5 427v10M284.5 415v6M284.5 427v10M285.5 416v6M285.5 427v10M286.5 417v5M286.5 427v10M287.5 416v5M287.5 427v10M288.5 416v4M288.5 427v13M289.5 416v6M289.5 427v9M290.5 416v6M290.5 427v9M291.5 416v5M291.5 428v8M292.5 416v6M292.5 428v8M293.5 416v5M293.5 427v12M294.5 417v4M294.5 427v14M295.5 416v5M295.5 427v12M296.5 415v6M296.5 428v8M297.5 416v6M297.5 428v9M298.5 417v4M298.5 427v9M299.5 416v5M299.5 427v11M300.5 416v5M300.5 427v9M301.5 417v4M301.5 427v11M302.5 415v5M302.5 427v9M303.5 417v4M303.5 427v10M304.5 416v5M304.5 427v9M305.5 417v3M305.5 425v11M306.5 416v6M306.5 427v9M307.5 417v4M307.5 427v11M308.5 415v6M308.5 427v10M309.5 416v6M309.5 428v8M310.5 415v6M310.5 427v9M311.5 416v5M311.5 428v8M312.5 416v5M312.5 427v9M313.5 416v5M313.5 427v9M314.5 416v5M314.5 427v10M315.5 417v4M315.5 427v8M316.5 417v4M316.5 427v10M317.5 416v5M317.5 427v9M318.5 416v5M318.5 427v10M319.5 416v5M319.5 427v9M320.5 415v6M320.5 427v8M321.5 415v6M321.5 427v9M322.5 415v6M322.5 427v8M323.5 416v5M323.5 426v10M324.5 416v4M324.5 427v9M325.5 416v5M325.5 427v10M326.5 415v7M326.5 427v8M327.5 414v7M327.5 428v7M328.5 416v4M328.5 426v10M329.5 414v7M329.5 427v8M330.5 414v8M330.5 427v9M331.5 416v5M331.5 427v9M332.5 415v6M332.5 427v8M333.5 416v5M333.5 427v11M334.5 416v4M334.5 427v9M335.5 416v5M335.5 427v10M336.5 415v5M336.5 427v10M337.5 416v5M337.5 427v10M338.5 414v7M338.5 427v9M339.5 416v5M339.5 426v10M340.5 415v6M340.5 427v8M341.5 415v6M341.5 427v9M342.5 415v6M342.5 427v10M343.5 415v5M343.5 427v8M344.5 415v5M344.5 427v8M345.5 415v5M345.5 426v10M346.5 412v9M346.5 426v10M347.5 415v6M347.5 427v9M348.5 415v6M348.5 427v11M349.5 414v7M349.5 427v8M350.5 415v5M350.5 427v9M351.5 415v5M351.5 427v9M352.5 414v8M352.5 428v7M353.5 415v6M353.5 428v8M354.5 415v5M354.5 426v11M355.5 415v5M355.5 427v7M356.5 414v6M356.5 427v9M357.5 415v6M357.5 426v9M358.5 414v6M358.5 427v8M359.5 414v7M359.5 427v8M360.5 414v6M360.5 426v10M361.5 414v7M361.5 427v8M362.5 413v7M362.5 426v8M363.5 415v4M363.5 427v7M364.5 415v4M364.5 426v8M365.5 413v7M365.5 426v8M366.5 413v7M366.5 427v7M367.5 414v7M367.5 426v8M368.5 412v8M368.5 426v10M369.5 414v6M369.5 427v8M370.5 414v6M370.5 427v10M371.5 412v8M371.5 427v8M372.5 414v6M372.5 427v7M373.5 414v7M373.5 427v8M374.5 413v8M374.5 427v7M375.5 414v6M375.5 426v9M376.5 412v8M376.5 427v7M377.5 412v8M377.5 427v8M378.5 414v5M378.5 427v7M379.5 413v6M379.5 425v9M380.5 411v9M380.5 426v8M381.5 413v7M381.5 427v7M382.5 413v8M382.5 426v8M383.5 414v5M383.5 426v9M384.5 413v7M384.5 426v8M385.5 413v6M385.5 426v8M386.5 413v7M386.5 428v5M387.5 414v5M387.5 426v8M388.5 413v7M388.5 426v9M389.5 413v7M389.5 427v7M390.5 412v7M390.5 426v8M391.5 413v7M391.5 427v6M392.5 413v7M392.5 427v7M393.5 411v9M393.5 427v7M394.5 413v6M394.5 426v8M395.5 413v6M395.5 427v6M396.5 413v7M396.5 426v9M397.5 411v9M397.5 426v10M398.5 412v6M398.5 425v10M399.5 412v8M399.5 426v7M400.5 412v9M400.5 427v8M401.5 412v7M401.5 425v9M402.5 411v8M402.5 426v8M403.5 412v8M403.5 426v9M404.5 412v8M404.5 427v8M405.5 412v8M405.5 428v8M406.5 411v8M406.5 426v8M407.5 411v8M407.5 426v8M408.5 412v8M408.5 427v7M409.5 413v6M409.5 427v7M410.5 413v6M410.5 426v8M411.5 412v7M411.5 426v11M412.5 412v6M412.5 425v9M413.5 411v9M413.5 427v8M414.5 412v7M414.5 426v7M415.5 413v6M415.5 426v8M416.5 412v7M416.5 425v9M417.5 413v5M417.5 425v10M418.5 412v7M418.5 425v11M419.5 411v8M419.5 427v10M420.5 412v7M420.5 426v8M421.5 412v7M421.5 427v9M422.5 412v7M422.5 426v9M423.5 412v7M423.5 425v9M424.5 411v7M424.5 426v9M425.5 411v8M425.5 425v9M426.5 412v7M426.5 426v8M427.5 412v7M427.5 426v11M428.5 412v7M428.5 426v8M429.5 410v9M429.5 426v8M430.5 412v8M430.5 427v8M431.5 412v7M431.5 426v8M432.5 412v7M432.5 426v10M433.5 412v7M433.5 425v9M434.5 411v8M434.5 426v8M435.5 410v9M435.5 427v7M436.5 410v9M436.5 426v7M437.5 410v8M437.5 426v7M438.5 411v8M438.5 426v8M439.5 410v8M439.5 426v8M440.5 410v9M440.5 425v9M441.5 412v6M441.5 426v8M442.5 411v7M442.5 425v11M443.5 411v7M443.5 426v9M444.5 411v8M444.5 425v9M445.5 410v9M445.5 425v11M446.5 410v8M446.5 426v10M447.5 410v8M447.5 426v8M448.5 410v7M448.5 426v8M449.5 411v7M449.5 426v8M450.5 407v11M450.5 425v10M451.5 410v8M451.5 425v9M452.5 410v7M452.5 425v10M453.5 410v8M453.5 425v11M454.5 409v9M454.5 426v8M455.5 411v7M455.5 426v9M456.5 410v9M456.5 427v7M457.5 411v7M457.5 425v11M458.5 407v11M458.5 425v9M459.5 408v9M459.5 425v12M460.5 409v8M460.5 425v9M461.5 410v7M461.5 426v9M462.5 409v9M462.5 425v9M463.5 410v7M463.5 424v10M464.5 409v8M464.5 425v9M465.5 410v7M465.5 425v10M466.5 409v9M466.5 425v9M467.5 408v9M467.5 426v9M468.5 408v11M468.5 425v10M469.5 407v11M469.5 425v9M470.5 408v10M470.5 427v7M471.5 407v10M471.5 424v11M472.5 410v8M472.5 426v9M473.5 409v9M473.5 425v10M474.5 409v8M474.5 424v10M475.5 408v9M475.5 424v10M476.5 408v9M476.5 426v10M477.5 408v10M477.5 426v8M478.5 407v9M478.5 426v9M479.5 408v10M479.5 425v10M480.5 408v9M480.5 425v11M481.5 406v10M481.5 424v10M482.5 407v10M482.5 425v9M483.5 408v9M483.5 424v11M484.5 407v10M484.5 424v12M485.5 407v10M485.5 425v9M486.5 405v13M486.5 425v9M487.5 407v10M487.5 425v9M488.5 407v9M488.5 425v9M489.5 408v9M489.5 426v10M490.5 407v9M490.5 425v10M491.5 406v10M491.5 424v12M492.5 407v9M492.5 426v9M493.5 407v10M493.5 425v10M494.5 408v8M494.5 425v9M495.5 407v9M495.5 424v11M496.5 406v9M496.5 425v10M497.5 406v11M497.5 426v9M498.5 406v10M498.5 425v9M499.5 407v10M499.5 425v10M500.5 406v11M500.5 425v10M501.5 407v9M501.5 426v10M502.5 407v11M502.5 425v11M503.5 407v9M503.5 426v9M504.5 406v9M504.5 425v10M505.5 406v10M505.5 425v10M506.5 406v11M506.5 425v10M507.5 405v11M507.5 426v8M508.5 405v12M508.5 427v8M509.5 406v11M509.5 425v9M510.5 403v13M510.5 425v11M511.5 405v10M511.5 424v11M512.5 404v11M512.5 425v10M513.5 403v13M513.5 424v12M514.5 402v14M514.5 426v9M515.5 405v10M515.5 425v10M516.5 404v13M516.5 425v10M517.5 402v13M517.5 424v11M518.5 403v12M518.5 425v10M519.5 404v11M519.5 424v12M520.5 402v13M520.5 425v14M521.5 403v13M521.5 425v11M522.5 402v13M522.5 425v10M523.5 402v14M523.5 425v10M524.5 404v12M524.5 426v9M525.5 403v12M525.5 427v9M526.5 403v11M526.5 426v9M527.5 401v14M527.5 424v10M528.5 402v13M528.5 424v12M529.5 402v12M529.5 424v10M530.5 403v11M530.5 425v9M531.5 403v12M531.5 426v10M532.5 403v11M532.5 426v8M533.5 399v15M533.5 425v11M534.5 400v15M534.5 426v11M535.5 399v15M535.5 425v10M536.5 401v15M536.5 425v10M537.5 400v13M537.5 424v12M538.5 400v15M538.5 425v11M539.5 399v15M539.5 425v10M540.5 400v14M540.5 423v13M541.5 401v14M541.5 426v10M542.5 398v17M542.5 425v10M543.5 399v16M543.5 425v10M544.5 400v15M544.5 425v13M545.5 394v20M545.5 424v11M546.5 401v13M546.5 426v9M547.5 400v15M547.5 425v10M548.5 398v16M548.5 426v9M549.5 399v15M549.5 426v11M550.5 399v15M550.5 426v10M551.5 398v16M551.5 425v10M552.5 399v14M552.5 424v12M553.5 398v17M553.5 425v12M554.5 399v15M554.5 425v10M555.5 398v17M555.5 425v11M556.5 398v16M556.5 425v11M557.5 398v14M557.5 424v12M558.5 397v18M558.5 424v12M559.5 398v16M559.5 425v14M560.5 397v17M560.5 425v12M561.5 393v21M561.5 424v11M562.5 398v16M562.5 426v9M563.5 399v13M563.5 424v13M564.5 399v14M564.5 425v10M565.5 396v18M565.5 424v12M566.5 398v15M566.5 425v12M567.5 398v15M567.5 425v11M568.5 396v16M568.5 424v12M569.5 398v14M569.5 423v12M570.5 397v15M570.5 426v9M571.5 397v17M571.5 425v11M572.5 396v17M572.5 426v9M573.5 395v18M573.5 425v12M574.5 396v18M574.5 424v11M575.5 395v17M575.5 425v11M576.5 396v17M576.5 426v11M577.5 391v22M577.5 426v10M578.5 391v23M578.5 425v13M579.5 396v17M579.5 426v10M580.5 396v17M580.5 424v14M581.5 391v21M581.5 424v13M582.5 394v18M582.5 424v12M583.5 395v18M583.5 424v12M584.5 396v17M584.5 426v11M585.5 392v17M585.5 423v14M586.5 396v16M586.5 425v10M587.5 394v17M587.5 425v12M588.5 393v18M588.5 423v13M589.5 394v18M589.5 423v13M590.5 395v17M590.5 424v12M591.5 394v18M591.5 425v11M592.5 393v20M592.5 426v10M593.5 394v17M593.5 424v14M594.5 393v19M594.5 424v12M595.5 393v18M595.5 425v11M596.5 393v19M596.5 426v10M597.5 391v23M597.5 426v11M598.5 393v16M598.5 424v13M599.5 392v19M599.5 424v12M600.5 392v18M600.5 425v12M601.5 393v19M601.5 424v12M602.5 389v23M602.5 424v13M603.5 390v22M603.5 425v11M604.5 393v18M604.5 424v13M605.5 390v20M605.5 424v14M606.5 392v19M606.5 425v11M607.5 392v21M607.5 425v12M608.5 391v21M608.5 424v12M609.5 391v21M609.5 425v13M610.5 388v23M610.5 424v13M611.5 392v17M611.5 423v13M612.5 392v20M612.5 425v12M613.5 391v19M613.5 424v12M614.5 391v18M614.5 424v12M615.5 390v22M615.5 424v15M616.5 391v19M616.5 425v11M617.5 391v20M617.5 425v11M618.5 391v22M618.5 425v11M619.5 390v21M619.5 423v13M620.5 391v20M620.5 427v9M621.5 386v24M621.5 424v13M622.5 389v22M622.5 425v13M623.5 388v22M623.5 422v14M624.5 391v21M624.5 424v13M625.5 391v18M625.5 425v12M626.5 389v21M626.5 423v13M627.5 388v22M627.5 423v14M628.5 390v21M628.5 423v14M629.5 391v20M629.5 424v14M630.5 386v23M630.5 425v12M631.5 390v20M631.5 425v12M632.5 386v25M632.5 423v14M633.5 387v21M633.5 421v16M634.5 388v23M634.5 424v12M635.5 387v23M635.5 425v13M636.5 388v24M636.5 424v14M637.5 389v21M637.5 424v14M638.5 383v26M638.5 425v13M639.5 387v21M639.5 423v14M640.5 385v27M640.5 426v11M641.5 387v23M641.5 425v12M642.5 386v23M642.5 424v13M643.5 386v24M643.5 426v13M644.5 386v25M644.5 424v13M645.5 388v23M645.5 425v12M646.5 389v20M646.5 424v13M647.5 386v21M647.5 422v16M648.5 386v26M648.5 426v11M649.5 388v22M649.5 423v15M650.5 386v24M650.5 423v14M651.5 385v24M651.5 422v16M652.5 388v21M652.5 424v13M653.5 385v25M653.5 424v13M654.5 386v24M654.5 422v15M655.5 387v21M655.5 423v15M656.5 383v28M656.5 424v13M657.5 388v19M657.5 424v13M658.5 388v20M658.5 424v14M659.5 387v22M659.5 423v14M660.5 385v23M660.5 424v14M661.5 388v20M661.5 424v13M662.5 384v26M662.5 422v15M663.5 383v24M663.5 424v14M664.5 387v23M664.5 423v14M665.5 386v24M665.5 426v11M666.5 384v25M666.5 423v14M667.5 383v23M667.5 422v17M668.5 384v24M668.5 424v13M669.5 383v26M669.5 424v14M670.5 384v25M670.5 423v15M671.5 385v23M671.5 423v16M672.5 386v23M672.5 422v16M673.5 383v25M673.5 423v14M674.5 386v22M674.5 422v16M675.5 384v23M675.5 423v15M676.5 386v20M676.5 422v15M677.5 387v22M677.5 424v14M678.5 380v30M678.5 424v14M679.5 387v20M679.5 422v17M680.5 384v25M680.5 423v16M681.5 384v23M681.5 424v15M682.5 384v24M682.5 424v13M683.5 385v23M683.5 423v15M684.5 386v22M684.5 423v14M685.5 383v26M685.5 424v14M686.5 386v24M686.5 425v13M687.5 386v24M687.5 426v13M688.5 387v22M688.5 426v11M689.5 387v22M689.5 425v13M690.5 386v23M690.5 424v14M691.5 386v21M691.5 424v13M692.5 385v23M692.5 426v12M693.5 387v20M693.5 421v17M694.5 387v20M694.5 424v13M695.5 387v21M695.5 423v15M696.5 385v25M696.5 423v14M697.5 385v24M697.5 426v11M698.5 384v28M698.5 425v13M699.5 381v31M699.5 428v10M700.5 382v26M700.5 423v14M701.5 387v21M701.5 424v15M702.5 382v28M702.5 425v13M703.5 387v22M703.5 426v12M704.5 385v24M704.5 423v14M705.5 384v26M705.5 424v14M706.5 384v28M706.5 425v13M707.5 387v23M707.5 424v13M708.5 387v24M708.5 425v14M709.5 385v23M709.5 424v14M710.5 383v26M710.5 423v15M711.5 382v28M711.5 424v14M712.5 387v20M712.5 424v15M713.5 386v25M713.5 425v12M714.5 385v23M714.5 425v12M715.5 387v22M715.5 426v11M716.5 386v22M716.5 423v15M717.5 381v27M717.5 423v14M718.5 381v27M718.5 425v13M719.5 380v29M719.5 424v14M720.5 383v29M720.5 425v12M721.5 385v27M721.5 426v12M722.5 385v25M722.5 426v11M723.5 385v24M723.5 424v13M724.5 387v22M724.5 422v16M725.5 386v24M725.5 425v13M726.5 384v26M726.5 423v14M727.5 386v25M727.5 424v15M728.5 386v23M728.5 425v13M729.5 387v23M729.5 425v12M730.5 387v24M730.5 425v13M731.5 386v23M731.5 425v12M732.5 388v22M732.5 425v13M733.5 384v26M733.5 427v11M734.5 387v22M734.5 423v15M735.5 387v22M735.5 425v13M736.5 385v23M736.5 425v12M737.5 385v23M737.5 424v13M738.5 385v24M738.5 426v13M739.5 385v28M739.5 427v11M740.5 380v30M740.5 425v13M741.5 388v21M741.5 424v14M742.5 383v28M742.5 424v13M743.5 389v21M743.5 423v14M744.5 387v25M744.5 424v13M745.5 387v25M745.5 425v13M746.5 387v23M746.5 423v14M747.5 387v24M747.5 424v13M748.5 389v23M748.5 425v15M749.5 384v28M749.5 425v12M750.5 387v24M750.5 423v14M751.5 388v22M751.5 424v13M752.5 388v25M752.5 427v12M753.5 387v24M753.5 425v12M754.5 388v24M754.5 425v14M755.5 389v21M755.5 425v13M756.5 385v27M756.5 427v11M757.5 389v23M757.5 425v14M758.5 386v25M758.5 426v12M759.5 388v22M759.5 425v13M760.5 389v21M760.5 426v11M761.5 387v23M761.5 426v13M762.5 388v23M762.5 425v12M763.5 389v23M763.5 426v12M764.5 389v24M764.5 426v11M765.5 387v24M765.5 426v11M766.5 385v26M766.5 424v16M767.5 389v21M767.5 425v13M768.5 387v24M768.5 424v13M769.5 391v19M769.5 425v12M770.5 391v18M770.5 425v13M771.5 387v26M771.5 426v13M772.5 389v22M772.5 426v11M773.5 391v22M773.5 425v13M774.5 391v20M774.5 424v13M775.5 391v22M775.5 425v13M776.5 388v22M776.5 424v13M777.5 387v23M777.5 425v12M778.5 388v23M778.5 425v12M779.5 391v21M779.5 427v10M780.5 386v24M780.5 425v13M781.5 388v23M781.5 423v14M782.5 391v20M782.5 426v11M783.5 391v20M783.5 424v13M784.5 392v19M784.5 424v13M785.5 392v20M785.5 427v11M786.5 393v19M786.5 424v13M787.5 392v21M787.5 428v10M788.5 392v20M788.5 425v12M789.5 386v26M789.5 426v12M790.5 391v20M790.5 424v13M791.5 392v21M791.5 427v10M792.5 393v19M792.5 426v11M793.5 391v20M793.5 426v11M794.5 391v22M794.5 425v12M795.5 392v21M795.5 426v11M796.5 387v26M796.5 426v11M797.5 394v20M797.5 426v11M798.5 393v19M798.5 424v13M799.5 391v22M799.5 425v12M800.5 393v18M800.5 425v11M801.5 392v21M801.5 425v11M802.5 392v20M802.5 427v10M803.5 393v20M803.5 426v11M804.5 393v21M804.5 425v12M805.5 395v19M805.5 427v10M806.5 395v17M806.5 424v12M807.5 395v18M807.5 427v10M808.5 395v18M808.5 426v10M809.5 396v19M809.5 425v13M810.5 391v23M810.5 426v10M811.5 395v17M811.5 425v11M812.5 395v19M812.5 427v11M813.5 392v22M813.5 425v12M814.5 396v17M814.5 426v11M815.5 394v21M815.5 426v10M816.5 395v20M816.5 428v9M817.5 396v18M817.5 426v10M818.5 394v20M818.5 427v9M819.5 396v18M819.5 426v10M820.5 396v17M820.5 426v12M821.5 397v19M821.5 426v10M822.5 395v19M822.5 425v12M823.5 398v16M823.5 426v10M824.5 397v19M824.5 426v10M825.5 398v18M825.5 428v8M826.5 397v17M826.5 427v9M827.5 397v17M827.5 427v9M828.5 396v20M828.5 428v8M829.5 399v17M829.5 428v8M830.5 393v24M830.5 428v8M831.5 397v18M831.5 427v9M832.5 399v16M832.5 425v11M833.5 397v18M833.5 425v12M834.5 398v17M834.5 425v11M835.5 398v19M835.5 430v7M836.5 399v16M836.5 425v11M837.5 399v15M837.5 426v10M838.5 400v17M838.5 428v8M839.5 398v17M839.5 427v9M840.5 400v16M840.5 427v10M841.5 397v19M841.5 428v8M842.5 397v20M842.5 428v8M843.5 400v16M843.5 427v8M844.5 397v19M844.5 426v10M845.5 401v15M845.5 427v8M846.5 402v14M846.5 427v8M847.5 401v15M847.5 428v8M848.5 400v17M848.5 429v6M849.5 402v15M849.5 426v9M850.5 399v18M850.5 427v8M851.5 399v17M851.5 427v9M852.5 398v17M852.5 426v9M853.5 400v17M853.5 428v6M854.5 402v14M854.5 426v10M855.5 401v17M855.5 428v8M856.5 403v14M856.5 428v7M857.5 401v16M857.5 427v7M858.5 404v12M858.5 426v8M859.5 404v13M859.5 428v7M860.5 403v14M860.5 428v6M861.5 402v15M861.5 427v7M862.5 402v16M862.5 428v7M863.5 403v16M863.5 428v6M864.5 404v14M864.5 428v7M865.5 401v16M865.5 427v8M866.5 405v13M866.5 427v7M867.5 404v13M867.5 427v7M868.5 405v14M868.5 429v6M869.5 405v14M869.5 427v8M870.5 404v15M870.5 428v7M871.5 405v14M871.5 427v7M872.5 405v14M872.5 428v7M873.5 405v14M873.5 428v6M874.5 407v11M874.5 427v8M875.5 405v14M875.5 428v8M876.5 406v13M876.5 427v8M877.5 406v14M877.5 428v6M878.5 405v15M878.5 428v7M879.5 406v13M879.5 427v7M880.5 407v12M880.5 427v7M881.5 408v11M881.5 428v6M882.5 405v14M882.5 428v8M883.5 407v13M883.5 428v7M884.5 406v14M884.5 428v6M885.5 406v13M885.5 428v6M886.5 407v12M886.5 428v8M887.5 408v11M887.5 428v6M888.5 407v12M888.5 427v8M889.5 408v11M889.5 429v5M890.5 408v11M890.5 428v6M891.5 407v12M891.5 426v10M892.5 407v12M892.5 428v7M893.5 408v11M893.5 427v8M894.5 408v11M894.5 427v7M895.5 406v13M895.5 428v6M896.5 408v11M896.5 427v7M897.5 409v11M897.5 427v8M898.5 409v11M898.5 428v7M899.5 408v11M899.5 427v7M900.5 408v12M900.5 428v6M901.5 405v14M901.5 427v7M902.5 409v10M902.5 426v8M903.5 408v13M903.5 429v5M904.5 409v11M904.5 428v7M905.5 408v12M905.5 429v5M906.5 406v14M906.5 428v6M907.5 409v11M907.5 429v6M908.5 409v11M908.5 428v6M909.5 407v12M909.5 428v7M910.5 408v12M910.5 427v7M911.5 408v12M911.5 428v7M912.5 409v11M912.5 428v6M913.5 409v11M913.5 429v5M914.5 410v8M914.5 427v8M915.5 409v10M915.5 428v7M916.5 409v12M916.5 428v6M917.5 407v12M917.5 428v7M918.5 409v11M918.5 428v6M919.5 408v12M919.5 428v6M920.5 408v12M920.5 428v8M921.5 407v12M921.5 428v6M922.5 410v11M922.5 429v7M923.5 409v11M923.5 428v7M924.5 409v10M924.5 428v6M925.5 409v11M925.5 428v7M926.5 408v12M926.5 428v6M927.5 410v9M927.5 427v7M928.5 410v9M928.5 428v6M929.5 409v11M929.5 429v6M930.5 410v10M930.5 428v6M931.5 410v11M931.5 429v5M932.5 410v10M932.5 428v7M933.5 410v9M933.5 427v8M934.5 408v11M934.5 426v10M935.5 409v11M935.5 428v7M936.5 410v10M936.5 429v6M937.5 408v12M937.5 427v8M938.5 410v10M938.5 428v7M939.5 409v11M939.5 428v6M940.5 409v11M940.5 427v7M941.5 411v9M941.5 428v6M942.5 409v11M942.5 428v6M943.5 411v9M943.5 427v9M944.5 410v9M944.5 428v6M945.5 410v10M945.5 429v7M946.5 411v9M946.5 428v6M947.5 411v9M947.5 427v7M948.5 409v11M948.5 428v7M949.5 411v9M949.5 428v7M950.5 409v12M950.5 427v9M951.5 410v10M951.5 428v9M952.5 411v10M952.5 428v6M953.5 410v11M953.5 428v6M954.5 410v11M954.5 427v7M955.5 410v11M955.5 429v5M956.5 411v10M956.5 428v7M957.5 409v12M957.5 427v8M958.5 410v10M958.5 429v7M959.5 410v10M959.5 427v8M960.5 411v10M960.5 428v8M961.5 412v9M961.5 429v6M962.5 412v8M962.5 428v9M963.5 412v8M963.5 427v9M964.5 411v11M964.5 429v6M965.5 411v10M965.5 429v5M966.5 411v9M966.5 427v8M967.5 412v9M967.5 429v6M968.5 411v9M968.5 428v6M969.5 411v10M969.5 429v6M970.5 410v11M970.5 429v7M971.5 411v9M971.5 428v8M972.5 408v13M972.5 428v8M973.5 412v9M973.5 428v7M974.5 411v10M974.5 428v6M975.5 409v12M975.5 428v8M976.5 411v10M976.5 427v8M977.5 409v11M977.5 428v7M978.5 412v8M978.5 427v9M979.5 412v9M979.5 429v7M980.5 412v8M980.5 427v7M981.5 412v9M981.5 428v6M982.5 412v10M982.5 428v7M983.5 412v9M983.5 427v9M984.5 408v14M984.5 428v8M985.5 411v10M985.5 428v9M986.5 412v8M986.5 427v8M987.5 412v9M987.5 427v8M988.5 413v9M988.5 428v7M989.5 411v9M989.5 428v7M990.5 412v8M990.5 427v8M991.5 411v11M991.5 428v7M992.5 412v9M992.5 429v7M993.5 411v10M993.5 428v7M994.5 412v9M994.5 428v9M995.5 412v9M995.5 428v8M996.5 411v10M996.5 428v7M997.5 412v10M997.5 429v6M998.5 411v11M998.5 429v5M999.5 411v10M999.5 428v6M1000.5 412v10M1000.5 429v6M1001.5 412v9M1001.5 428v7M1002.5 412v9M1002.5 428v7M1003.5 413v9M1003.5 429v8M1004.5 412v9M1004.5 427v9M1005.5 413v8M1005.5 429v6M1006.5 410v12M1006.5 429v9M1007.5 412v9M1007.5 428v8M1008.5 413v9M1008.5 429v6M1009.5 413v9M1009.5 429v6M1010.5 412v9M1010.5 429v7M1011.5 411v10M1011.5 428v7M1012.5 411v11M1012.5 428v7M1013.5 407v14M1013.5 428v7M1014.5 413v8M1014.5 428v9M1015.5 412v9M1015.5 428v7M1016.5 413v8M1016.5 429v5M1017.5 413v9M1017.5 428v8M1018.5 411v11M1018.5 429v6M1019.5 413v8M1019.5 428v11M1020.5 411v11M1020.5 428v7M1021.5 412v9M1021.5 428v7M1022.5 411v11M1022.5 429v6M1023.5 411v10M1023.5 428v7M1024.5 413v9M1024.5 428v9M1025.5 413v9M1025.5 429v7M1026.5 412v11M1026.5 429v9M1027.5 413v9M1027.5 429v6M1028.5 413v8M1028.5 429v6M1029.5 411v10M1029.5 428v8M1030.5 411v11M1030.5 428v7M1031.5 413v8M1031.5 429v7M1032.5 413v8M1032.5 427v8M1033.5 412v10M1033.5 428v7M1034.5 413v9M1034.5 429v6M1035.5 413v9M1035.5 428v8M1036.5 412v10M1036.5 428v7M1037.5 413v9M1037.5 429v6M1038.5 412v9M1038.5 428v8M1039.5 412v10M1039.5 428v7M1040.5 412v10M1040.5 429v6M1041.5 414v7M1041.5 429v7M1042.5 412v10M1042.5 428v8M1043.5 414v8M1043.5 428v8M1044.5 413v8M1044.5 428v7M1045.5 413v9M1045.5 429v6M1046.5 413v9M1046.5 429v7M1047.5 413v8M1047.5 429v7M1048.5 414v7M1048.5 428v8M1049.5 414v7M1049.5 428v9M1050.5 414v9M1050.5 428v7M1051.5 412v10M1051.5 429v7M1052.5 413v9M1052.5 429v6M1053.5 411v12M1053.5 429v6M1054.5 412v10M1054.5 429v6M1055.5 414v9M1055.5 429v7M1056.5 414v8M1056.5 428v7M1057.5 413v9M1057.5 429v6M1058.5 413v8M1058.5 428v9M1059.5 414v8M1059.5 428v7M1060.5 414v9M1060.5 429v6M1061.5 414v8M1061.5 429v8M1062.5 414v8M1062.5 428v7M1063.5 413v9M1063.5 429v6M1064.5 413v9M1064.5 428v7M1065.5 414v8M1065.5 429v7M1066.5 414v9M1066.5 429v7M1067.5 415v6M1067.5 428v7M1068.5 413v10M1068.5 430v6M1069.5 413v9M1069.5 429v6M1070.5 415v7M1070.5 429v6M1071.5 414v8M1071.5 428v8M1072.5 415v7M1072.5 429v6M1073.5 414v9M1073.5 428v9M1074.5 414v8M1074.5 429v8M1075.5 415v7M1075.5 428v9M1076.5 413v9M1076.5 429v8M1077.5 414v8M1077.5 429v8M1078.5 412v10M1078.5 429v7M1079.5 414v9M1079.5 429v6M1080.5 414v8M1080.5 428v7M1081.5 415v8M1081.5 429v6M1082.5 414v8M1082.5 429v7M1083.5 415v8M1083.5 429v6M1084.5 414v8M1084.5 428v8M1085.5 414v9M1085.5 430v7M1086.5 415v8M1086.5 429v8M1087.5 414v8M1087.5 428v7M1088.5 415v8M1088.5 429v7M1089.5 412v11M1089.5 429v7M1090.5 415v7M1090.5 428v7M1091.5 415v7M1091.5 429v8M1092.5 413v10M1092.5 429v7M1093.5 414v8M1093.5 428v8M1094.5 415v7M1094.5 429v7M1095.5 415v8M1095.5 429v6M1096.5 415v8M1096.5 429v7M1097.5 415v8M1097.5 429v6M1098.5 414v10M1098.5 430v6M1099.5 414v9M1099.5 429v7M1100.5 414v10M1100.5 430v6M1101.5 415v7M1101.5 429v6M1102.5 416v8M1102.5 430v7M1103.5 415v7M1103.5 429v6M1104.5 416v6M1104.5 429v6M1105.5 415v8M1105.5 429v6M1106.5 413v10M1106.5 429v7M1107.5 415v8M1107.5 429v9M1108.5 415v8M1108.5 430v5M1109.5 412v10M1109.5 429v7M1110.5 414v9M1110.5 429v7M1111.5 416v7M1111.5 429v8M1112.5 416v8M1112.5 430v5M1113.5 415v8M1113.5 429v6M1114.5 416v7M1114.5 429v7M1115.5 416v7M1115.5 429v8M1116.5 416v7M1116.5 429v8M1117.5 415v8M1117.5 429v7M1118.5 416v7M1118.5 428v7M1119.5 415v8M1119.5 430v6M1120.5 415v8M1120.5 429v6M1121.5 415v7M1121.5 429v8M1122.5 415v8M1122.5 430v6M1123.5 413v10M1123.5 429v7M1124.5 415v8M1124.5 429v8M1125.5 415v9M1125.5 430v5M1126.5 416v6M1126.5 429v9M1127.5 414v9M1127.5 429v6M1128.5 414v10M1128.5 430v7M1129.5 416v7M1129.5 429v6M1130.5 416v7M1130.5 430v6M1131.5 416v7M1131.5 429v7M1132.5 416v6M1132.5 429v7M1133.5 415v8M1133.5 429v6M1134.5 416v8M1134.5 429v8M1135.5 416v8M1135.5 430v6M1136.5 416v7M1136.5 430v5M1137.5 416v8M1137.5 430v5M1138.5 416v7M1138.5 429v7M1139.5 416v9M1139.5 430v6M1140.5 416v7M1140.5 429v6M1141.5 413v11M1141.5 429v7M1142.5 415v8M1142.5 429v8M1143.5 415v7M1143.5 429v7M1144.5 415v9M1144.5 430v6M1145.5 415v8M1145.5 429v7M1146.5 416v7M1146.5 429v7M1147.5 416v7M1147.5 429v8M1148.5 416v8M1148.5 429v9M1149.5 416v7M1149.5 430v6M1150.5 417v5M1150.5 429v7M1151.5 416v8M1151.5 429v8M1152.5 416v7M1152.5 430v7M1153.5 416v8M1153.5 430v6M1154.5 416v7M1154.5 429v7M1155.5 415v8M1155.5 429v7M1156.5 416v7M1156.5 430v6M1157.5 416v8M1157.5 429v8M1158.5 416v8M1158.5 429v8M1159.5 416v6M1159.5 429v7M1160.5 416v8M1160.5 430v6M1161.5 416v7M1161.5 429v7M1162.5 416v7M1162.5 430v7M1163.5 414v10M1163.5 430v5M1164.5 417v6M1164.5 430v6M1165.5 416v7M1165.5 429v7M1166.5 417v6M1166.5 429v7M1167.5 416v7M1167.5 429v8M1168.5 417v6M1168.5 429v7M1169.5 417v7M1169.5 430v7M1170.5 416v7M1170.5 429v10M1171.5 416v7M1171.5 429v7M1172.5 417v7M1172.5 430v6M1173.5 416v8M1173.5 430v5M1174.5 416v8M1174.5 430v7M1175.5 416v8M1175.5 430v6M1176.5 415v8M1176.5 430v6M1177.5 416v8M1177.5 430v8M1178.5 416v7M1178.5 430v6M1179.5 416v8M1179.5 430v5M1180.5 416v8M1180.5 430v6M1181.5 415v9M1181.5 429v7M1182.5 417v7M1182.5 429v7M1183.5 416v8M1183.5 430v6M1184.5 417v6M1184.5 429v7M1185.5 416v7M1185.5 430v6M1186.5 417v7M1186.5 430v6M1187.5 417v6M1187.5 429v7M1188.5 416v7M1188.5 429v7M1189.5 417v6M1189.5 429v9M1190.5 417v6M1190.5 430v8M1191.5 416v8M1191.5 429v8M1192.5 417v7M1192.5 430v6M1193.5 415v9M1193.5 430v10M1194.5 418v5M1194.5 430v6M1195.5 417v7M1195.5 430v7M1196.5 417v6M1196.5 430v8M1197.5 416v7M1197.5 429v7M1198.5 416v8M1198.5 430v7M1199.5 417v7M1199.5 430v7M1200.5 417v6M1200.5 429v7M1201.5 417v7M1201.5 430v6M1202.5 417v6M1202.5 429v7M1203.5 417v7M1203.5 430v7M1204.5 418v6M1204.5 431v8M1205.5 418v5M1205.5 430v6M1206.5 418v6M1206.5 431v5M1207.5 416v9M1207.5 430v8M1208.5 418v6M1208.5 430v7M1209.5 417v6M1209.5 429v8M1210.5 417v7M1210.5 430v6M1211.5 415v8M1211.5 430v6M1212.5 418v6M1212.5 431v5M1213.5 418v6M1213.5 430v6M1214.5 418v6M1214.5 430v7M1215.5 417v7M1215.5 430v7M1216.5 417v7M1216.5 430v6M1217.5 417v7M1217.5 430v6M1218.5 418v6M1218.5 430v6M1219.5 417v7M1219.5 431v5M1220.5 417v7M1220.5 430v9M1221.5 417v7M1221.5 431v6M1222.5 418v6M1222.5 430v7M1223.5 416v8M1223.5 430v7M1224.5 418v6M1224.5 430v8M1225.5 417v6M1225.5 430v6M1226.5 416v8M1226.5 430v6M1227.5 417v9M1227.5 431v5M1228.5 417v7M1228.5 430v7M1229.5 418v6M1229.5 429v8M1230.5 418v6M1230.5 430v6M1231.5 417v7M1231.5 430v7M1232.5 417v8M1232.5 430v8M1233.5 418v6M1233.5 430v6M1234.5 418v6M1234.5 430v8M1235.5 418v5M1235.5 430v6M1236.5 416v8M1236.5 430v7M1237.5 418v6M1237.5 430v7M1238.5 419v5M1238.5 430v6M1239.5 418v6M1239.5 431v5M1240.5 417v7M1240.5 430v6M1241.5 419v5M1241.5 431v5M1242.5 418v7M1242.5 431v6M1243.5 418v7M1243.5 431v6M1244.5 418v6M1244.5 430v7M1245.5 417v7M1245.5 430v7M1246.5 418v7M1246.5 431v5M1247.5 418v7M1247.5 430v7M1248.5 418v6M1248.5 430v8M1249.5 418v6M1249.5 430v6M1250.5 418v6M1250.5 430v7M1251.5 418v6M1251.5 431v6M1252.5 419v5M1252.5 430v7M1253.5 419v5M1253.5 430v7M1254.5 418v7M1254.5 430v6M1255.5 418v6M1255.5 430v6M1256.5 416v8M1256.5 430v8M1257.5 419v5M1257.5 431v6M1258.5 419v6M1258.5 431v6M1259.5 418v6M1259.5 431v5M1260.5 419v5M1260.5 430v6M1261.5 419v6M1261.5 431v6M1262.5 419v5M1262.5 431v5M1263.5 418v6M1263.5 431v6M1264.5 418v7M1264.5 431v7M1265.5 419v6M1265.5 431v7M1266.5 419v6M1266.5 430v8M1267.5 418v6M1267.5 430v6" stroke="#14f514" stroke-width="1" fill="none"/>
<path d="M71.5 428v1M80.5 423v1M80.5 429v1M85.5 423v1M95.5 428v1M96.5 429v1M99.5 428v1M102.5 428v1M110.5 429v1M114.5 423v1M118.5 428v1M131.5 429v1M139.5 428v1M140.5 429v1M148.5 422v1M149.5 422v1M150.5 428v1M159.5 428v1M160.5 428v1M168.5 422v1M173.5 428v1M177.5 422v1M178.5 423v1M178.5 429v1M181.5 422v1M190.5 428v1M192.5 422v1M193.5 422v1M193.5 428v1M198.5 422v1M199.5 427v1M204.5 428v1M206.5 422v1M209.5 421v1M216.5 422v1M217.5 427v1M218.5 422v1M218.5 428v1M229.5 422v1M229.5 428v1M231.5 421v1M232.5 421v1M232.5 427v1M236.5 427v1M237.5 422v1M249.5 421v1M249.5 427v1M253.5 421v1M253.5 427v1M254.5 421v1M254.5 427v1M261.5 421v1M261.5 427v1M268.5 426v1M270.5 426v1M278.5 426v1M294.5 421v1M302.5 420v1M302.5 426v1M307.5 426v1M309.5 427v1M311.5 421v1M311.5 427v1M314.5 426v1M320.5 421v1M324.5 420v1M324.5 426v1M327.5 421v1M327.5 427v1M329.5 426v1M336.5 420v1M336.5 426v1M343.5 420v1M343.5 426v1M348.5 426v1M351.5 420v1M353.5 427v1M355.5 420v1M355.5 426v1M356.5 420v1M356.5 426v1M358.5 420v1M358.5 426v1M363.5 419v1M363.5 426v1M371.5 420v1M371.5 426v1M372.5 426v1M376.5 420v1M376.5 426v1M377.5 426v1M378.5 419v1M378.5 426v1M385.5 419v1M386.5 420v1M386.5 427v1M387.5 419v1M389.5 420v1M389.5 426v1M390.5 419v1M390.5 425v1M391.5 426v1M392.5 426v1M394.5 425v1M395.5 419v1M395.5 426v1M398.5 418v1M402.5 419v1M402.5 425v1M404.5 420v1M404.5 426v1M405.5 420v1M405.5 427v1M406.5 419v1M407.5 425v1M408.5 420v1M408.5 426v1M409.5 419v1M409.5 426v1M411.5 425v1M413.5 420v1M413.5 426v1M415.5 419v1M417.5 418v1M419.5 419v1M419.5 426v1M420.5 419v1M420.5 425v1M421.5 419v1M421.5 426v1M422.5 419v1M422.5 425v1M424.5 418v1M424.5 425v1M426.5 425v1M427.5 419v1M427.5 425v1M429.5 425v1M430.5 420v1M430.5 426v1M432.5 419v1M432.5 425v1M434.5 425v1M435.5 419v1M435.5 426v1M437.5 418v2M437.5 425v1M439.5 425v1M441.5 418v1M443.5 418v1M443.5 425v1M446.5 418v1M446.5 425v1M447.5 418v1M447.5 425v1M448.5 417v2M448.5 424v2M449.5 418v1M449.5 425v1M450.5 418v1M450.5 424v1M452.5 417v1M453.5 418v1M453.5 424v1M454.5 418v1M454.5 425v1M455.5 418v2M455.5 425v1M456.5 426v1M459.5 417v1M459.5 424v1M460.5 417v1M460.5 424v1M461.5 417v2M461.5 424v2M462.5 424v1M464.5 417v1M465.5 417v1M465.5 424v1M466.5 418v1M466.5 424v1M467.5 417v2M467.5 425v1M469.5 424v1M470.5 418v2M470.5 425v2M472.5 418v1M472.5 425v1M476.5 417v2M476.5 424v2M477.5 418v1M477.5 425v1M478.5 416v2M478.5 425v1M479.5 418v1M479.5 424v1M480.5 424v1M481.5 416v1M482.5 417v1M482.5 424v1M484.5 417v1M484.5 423v1M485.5 417v1M485.5 424v1M486.5 418v1M486.5 424v1M487.5 424v1M488.5 416v1M488.5 423v2M489.5 417v1M489.5 424v2M490.5 416v2M490.5 423v2M491.5 416v1M491.5 423v1M492.5 416v2M492.5 424v2M493.5 417v1M493.5 424v1M494.5 416v1M494.5 424v1M495.5 416v1M495.5 423v1M496.5 415v2M496.5 423v2M497.5 417v2M497.5 424v2M498.5 416v2M498.5 423v2M499.5 417v1M499.5 424v1M500.5 417v2M500.5 424v1M501.5 416v2M501.5 424v2M502.5 418v1M502.5 424v1M503.5 416v2M503.5 424v2M504.5 415v1M504.5 423v2M505.5 416v1M505.5 424v1M506.5 417v1M506.5 424v1M507.5 416v1M507.5 424v2M508.5 417v2M508.5 425v2M509.5 417v1M509.5 424v1M510.5 416v2M510.5 423v2M511.5 415v1M512.5 415v2M512.5 423v2M513.5 416v1M513.5 423v1M514.5 416v1M514.5 425v1M515.5 415v2M515.5 423v2M516.5 424v1M517.5 415v1M517.5 423v1M518.5 415v2M518.5 423v2M519.5 415v2M519.5 422v2M520.5 415v3M520.5 423v2M521.5 416v2M521.5 423v2M522.5 415v2M522.5 422v3M523.5 416v2M523.5 423v2M524.5 416v2M524.5 423v3M525.5 415v2M525.5 424v3M526.5 414v3M526.5 423v3M527.5 415v2M527.5 422v2M528.5 415v1M528.5 423v1M529.5 414v2M529.5 423v1M530.5 414v3M530.5 423v2M531.5 415v3M531.5 423v3M532.5 414v2M532.5 423v3M533.5 414v2M533.5 423v2M534.5 415v3M534.5 423v3M535.5 414v2M535.5 423v2M536.5 416v1M536.5 424v1M537.5 413v3M537.5 422v2M538.5 415v2M538.5 423v2M539.5 414v2M539.5 422v3M540.5 414v1M541.5 415v3M541.5 423v3M542.5 415v1M542.5 423v2M543.5 415v2M543.5 423v2M544.5 415v1M544.5 424v1M545.5 414v2M545.5 422v2M546.5 414v3M546.5 423v3M547.5 415v2M547.5 423v2M548.5 414v3M548.5 423v3M549.5 414v3M549.5 424v2M550.5 414v3M550.5 423v3M551.5 414v2M551.5 423v2M552.5 413v3M552.5 421v3M553.5 415v2M553.5 423v2M554.5 414v2M554.5 423v2M555.5 415v1M555.5 423v2M556.5 414v2M556.5 422v3M557.5 412v2M557.5 422v2M558.5 415v1M558.5 423v1M559.5 414v2M559.5 423v2M560.5 414v3M560.5 422v3M561.5 414v2M561.5 423v1M562.5 414v3M562.5 423v3M563.5 412v4M563.5 421v3M564.5 413v2M564.5 423v2M565.5 414v2M565.5 422v2M566.5 413v3M566.5 422v3M567.5 413v2M567.5 423v2M568.5 412v3M568.5 421v3M569.5 412v3M569.5 420v3M570.5 412v4M570.5 422v4M571.5 414v2M571.5 424v1M572.5 413v2M572.5 423v3M573.5 413v3M573.5 422v3M574.5 414v2M574.5 422v2M575.5 412v3M575.5 423v2M576.5 413v4M576.5 422v4M577.5 413v3M577.5 423v3M578.5 414v2M578.5 422v3M579.5 413v4M579.5 422v4M580.5 413v2M580.5 423v1M581.5 412v3M581.5 421v3M582.5 412v3M582.5 421v3M583.5 413v3M583.5 422v2M584.5 413v3M584.5 423v3M585.5 409v4M585.5 420v3M586.5 412v4M586.5 421v4M587.5 411v3M587.5 422v3M588.5 411v3M588.5 420v3M589.5 412v2M589.5 421v2M590.5 412v3M590.5 421v3M591.5 412v3M591.5 422v3M592.5 413v3M592.5 424v2M593.5 411v4M593.5 420v4M594.5 412v3M594.5 421v3M595.5 411v4M595.5 421v4M596.5 412v4M596.5 422v4M597.5 414v2M597.5 424v2M598.5 409v4M598.5 420v4M599.5 411v4M599.5 420v4M600.5 410v3M600.5 422v3M601.5 412v3M601.5 421v3M602.5 412v2M602.5 422v2M603.5 412v3M603.5 421v4M604.5 411v4M604.5 421v3M605.5 410v4M605.5 420v4M606.5 411v4M606.5 422v3M607.5 413v2M607.5 423v2M608.5 412v3M608.5 422v2M609.5 412v3M609.5 422v3M610.5 411v3M610.5 421v3M611.5 409v4M611.5 419v4M612.5 412v3M612.5 422v3M613.5 410v4M613.5 420v4M614.5 409v5M614.5 420v4M615.5 412v3M615.5 421v3M616.5 410v4M616.5 421v4M617.5 411v4M617.5 420v5M618.5 413v3M618.5 422v3M619.5 411v2M619.5 420v3M620.5 411v5M620.5 422v5M621.5 410v4M621.5 420v4M622.5 411v3M622.5 421v4M623.5 410v3M623.5 419v3M624.5 412v3M624.5 421v3M625.5 409v5M625.5 419v6M626.5 410v2M626.5 420v3M627.5 410v4M627.5 419v4M628.5 411v3M628.5 420v3M629.5 411v4M629.5 421v3M630.5 409v4M630.5 421v4M631.5 410v3M631.5 422v3M632.5 411v3M632.5 420v3M633.5 408v3M633.5 419v2M634.5 411v4M634.5 421v3M635.5 410v5M635.5 420v5M636.5 412v3M636.5 421v3M637.5 410v3M637.5 421v3M638.5 409v6M638.5 420v5M639.5 408v4M639.5 420v3M640.5 412v4M640.5 421v5M641.5 410v4M641.5 421v4M642.5 409v5M642.5 420v4M643.5 410v5M643.5 421v5M644.5 411v3M644.5 420v4M645.5 411v4M645.5 420v5M646.5 409v4M646.5 419v5M647.5 407v4M647.5 418v4M648.5 412v3M648.5 423v3M649.5 410v4M649.5 419v4M650.5 410v2M650.5 420v3M651.5 409v3M651.5 419v3M652.5 409v4M652.5 420v4M653.5 410v4M653.5 420v4M654.5 410v3M654.5 419v3M655.5 408v4M655.5 419v4M656.5 411v3M656.5 421v3M657.5 407v5M657.5 418v6M658.5 408v5M658.5 419v5M659.5 409v3M659.5 420v3M660.5 408v4M660.5 420v4M661.5 408v5M661.5 418v6M662.5 410v2M662.5 420v2M663.5 407v6M663.5 419v5M664.5 410v3M664.5 420v3M665.5 410v4M665.5 422v4M666.5 409v4M666.5 418v5M667.5 406v5M667.5 417v5M668.5 408v5M668.5 419v5M669.5 409v5M669.5 419v5M670.5 409v2M670.5 420v3M671.5 408v5M671.5 418v5M672.5 409v2M672.5 420v2M673.5 408v4M673.5 419v4M674.5 408v4M674.5 418v4M675.5 407v4M675.5 419v4M676.5 406v5M676.5 418v4M677.5 409v4M677.5 420v4M678.5 410v3M678.5 420v4M679.5 407v4M679.5 419v3M680.5 409v4M680.5 420v3M681.5 407v4M681.5 420v4M682.5 408v4M682.5 420v4M683.5 408v5M683.5 419v4M684.5 408v5M684.5 418v5M685.5 409v5M685.5 419v5M686.5 410v5M686.5 421v4M687.5 410v3M687.5 422v4M688.5 409v4M688.5 422v4M689.5 409v4M689.5 420v5M690.5 409v4M690.5 420v4M691.5 407v5M691.5 420v4M692.5 408v6M692.5 420v6M693.5 407v3M693.5 419v2M694.5 407v6M694.5 419v5M695.5 408v5M695.5 418v5M696.5 410v3M696.5 419v4M697.5 409v5M697.5 421v5M698.5 412v3M698.5 422v3M699.5 412v5M699.5 423v5M700.5 408v3M700.5 419v4M701.5 408v5M701.5 419v5M702.5 410v3M702.5 422v3M703.5 409v5M703.5 421v5M704.5 409v4M704.5 418v5M705.5 410v4M705.5 420v4M706.5 412v3M706.5 422v3M707.5 410v2M707.5 421v3M708.5 411v4M708.5 421v4M709.5 408v4M709.5 420v4M710.5 409v4M710.5 419v4M711.5 410v4M711.5 420v4M712.5 407v5M712.5 418v6M713.5 411v4M713.5 421v4M714.5 408v5M714.5 420v5M715.5 409v6M715.5 420v6M716.5 408v3M716.5 420v3M717.5 408v4M717.5 419v4M718.5 408v6M718.5 420v5M719.5 409v3M719.5 421v3M720.5 412v3M720.5 423v2M721.5 412v3M721.5 423v3M722.5 410v5M722.5 420v6M723.5 409v5M723.5 419v5M724.5 409v4M724.5 418v4M725.5 410v4M725.5 421v4M726.5 410v4M726.5 420v3M727.5 411v3M727.5 421v3M728.5 409v4M728.5 421v4M729.5 410v5M729.5 420v5M730.5 411v3M730.5 422v3M731.5 409v5M731.5 421v4M732.5 410v4M732.5 421v4M733.5 410v5M733.5 422v5M734.5 409v3M734.5 420v3M735.5 409v4M735.5 421v4M736.5 408v5M736.5 420v5M737.5 408v4M737.5 420v4M738.5 409v6M738.5 421v5M739.5 413v2M739.5 424v3M740.5 410v4M740.5 420v5M741.5 409v4M741.5 421v3M742.5 411v2M742.5 422v2M743.5 410v4M743.5 419v4M744.5 412v2M744.5 422v2M745.5 412v2M745.5 422v3M746.5 410v3M746.5 420v3M747.5 411v4M747.5 421v3M748.5 412v2M748.5 422v3M749.5 412v2M749.5 422v3M750.5 411v3M750.5 421v2M751.5 410v3M751.5 421v3M752.5 413v3M752.5 424v3M753.5 411v2M753.5 422v3M754.5 412v3M754.5 422v3M755.5 410v4M755.5 421v4M756.5 412v4M756.5 423v4M757.5 412v2M757.5 422v3M758.5 411v5M758.5 422v4M759.5 410v4M759.5 420v5M760.5 410v4M760.5 422v4M761.5 410v5M761.5 421v5M762.5 411v3M762.5 422v3M763.5 412v4M763.5 421v5M764.5 413v2M764.5 424v2M765.5 411v3M765.5 423v3M766.5 411v2M766.5 422v2M767.5 410v4M767.5 420v5M768.5 411v4M768.5 420v4M769.5 410v4M769.5 421v4M770.5 409v4M770.5 421v4M771.5 413v3M771.5 422v4M772.5 411v4M772.5 421v5M773.5 413v3M773.5 422v3M774.5 411v3M774.5 421v3M775.5 413v3M775.5 422v3M776.5 410v4M776.5 420v4M777.5 410v4M777.5 420v5M778.5 411v5M778.5 421v4M779.5 412v5M779.5 422v5M780.5 410v4M780.5 421v4M781.5 411v3M781.5 420v3M782.5 411v4M782.5 421v5M783.5 411v3M783.5 421v3M784.5 411v4M784.5 420v4M785.5 412v4M785.5 423v4M786.5 412v2M786.5 422v2M787.5 413v3M787.5 424v4M788.5 412v3M788.5 422v3M789.5 412v4M789.5 423v3M790.5 411v3M790.5 422v2M791.5 413v3M791.5 424v3M792.5 412v4M792.5 423v3M793.5 411v4M793.5 422v4M794.5 413v2M794.5 423v2M795.5 413v3M795.5 423v3M796.5 413v2M796.5 423v3M797.5 414v4M797.5 423v3M798.5 412v3M798.5 421v3M799.5 413v3M799.5 422v3M800.5 411v3M800.5 422v3M801.5 413v3M801.5 422v3M802.5 412v4M802.5 424v3M803.5 413v4M803.5 423v3M804.5 414v2M804.5 423v2M805.5 414v3M805.5 424v3M806.5 412v3M806.5 421v3M807.5 413v3M807.5 423v4M808.5 413v4M808.5 423v3M809.5 415v2M809.5 423v2M810.5 414v3M810.5 423v3M811.5 412v2M811.5 422v3M812.5 414v3M812.5 424v3M813.5 414v2M813.5 423v2M814.5 413v3M814.5 422v4M815.5 415v3M815.5 423v3M816.5 415v4M816.5 424v4M817.5 414v3M817.5 423v3M818.5 414v3M818.5 424v3M819.5 414v4M819.5 423v3M820.5 413v4M820.5 423v3M821.5 416v2M821.5 423v3M822.5 414v3M822.5 422v3M823.5 414v4M823.5 423v3M824.5 416v2M824.5 424v2M825.5 416v3M825.5 425v3M826.5 414v3M826.5 423v4M827.5 414v4M827.5 424v3M828.5 416v3M828.5 426v2M829.5 416v3M829.5 425v3M830.5 417v3M830.5 425v3M831.5 415v2M831.5 425v2M832.5 415v1M832.5 424v1M833.5 415v3M833.5 423v2M834.5 415v2M834.5 423v2M835.5 417v4M835.5 426v4M836.5 415v2M836.5 424v1M837.5 414v3M837.5 424v2M838.5 417v2M838.5 425v3M839.5 415v3M839.5 424v3M840.5 416v1M840.5 425v2M841.5 416v2M841.5 425v3M842.5 417v3M842.5 425v3M843.5 416v3M843.5 425v2M844.5 416v1M844.5 425v1M845.5 416v2M845.5 425v2M846.5 416v2M846.5 425v2M847.5 416v2M847.5 426v2M848.5 417v3M848.5 426v3M849.5 417v1M849.5 425v1M850.5 417v2M850.5 425v2M851.5 416v2M851.5 425v2M852.5 415v3M852.5 424v2M853.5 417v2M853.5 426v2M854.5 416v2M854.5 424v2M855.5 418v2M855.5 426v2M856.5 417v3M856.5 425v3M857.5 417v2M857.5 425v2M858.5 416v2M858.5 424v2M859.5 417v2M859.5 426v2M860.5 417v2M860.5 426v2M861.5 417v2M861.5 426v1M862.5 418v2M862.5 426v2M863.5 419v1M863.5 426v2M864.5 418v2M864.5 426v2M865.5 417v2M865.5 425v2M866.5 418v2M866.5 425v2M867.5 417v2M867.5 426v1M868.5 419v1M868.5 427v2M869.5 419v1M869.5 426v1M870.5 419v1M870.5 427v1M871.5 419v1M871.5 425v2M872.5 419v1M872.5 427v1M873.5 419v2M873.5 427v1M874.5 418v2M874.5 426v1M875.5 419v1M875.5 427v1M876.5 419v1M877.5 427v1M878.5 420v1M878.5 427v1M879.5 419v1M879.5 426v1M880.5 419v1M880.5 426v1M881.5 419v2M881.5 426v2M882.5 419v2M882.5 426v2M883.5 420v1M883.5 427v1M884.5 420v1M884.5 427v1M885.5 419v1M885.5 427v1M886.5 419v2M886.5 426v2M887.5 419v1M887.5 427v1M888.5 419v1M888.5 426v1M889.5 419v2M889.5 428v1M890.5 419v2M890.5 426v2M891.5 419v1M891.5 425v1M892.5 419v2M892.5 426v2M893.5 426v1M894.5 419v1M894.5 426v1M895.5 419v2M895.5 426v2M896.5 419v1M896.5 426v1M897.5 426v1M898.5 420v1M898.5 427v1M899.5 419v1M899.5 425v2M900.5 420v1M900.5 427v1M901.5 419v1M902.5 419v1M903.5 421v2M903.5 428v1M904.5 420v1M904.5 427v1M905.5 420v2M905.5 427v2M906.5 420v1M906.5 427v1M907.5 420v1M907.5 427v2M908.5 420v1M908.5 426v2M909.5 419v1M909.5 427v1M911.5 420v1M911.5 427v1M912.5 420v1M912.5 427v1M913.5 420v1M913.5 428v1M914.5 418v1M914.5 426v1M915.5 419v2M915.5 427v1M917.5 419v2M917.5 426v2M918.5 420v2M918.5 427v1M919.5 420v1M919.5 426v2M920.5 420v1M920.5 427v1M921.5 419v1M921.5 427v1M922.5 421v1M922.5 428v1M923.5 420v1M923.5 427v1M924.5 419v1M924.5 427v1M925.5 420v1M925.5 427v1M926.5 420v1M926.5 427v1M927.5 426v1M928.5 419v1M928.5 427v1M929.5 420v1M929.5 428v1M930.5 420v1M930.5 427v1M931.5 421v1M931.5 427v2M932.5 420v1M932.5 427v1M933.5 419v2M933.5 426v1M935.5 420v1M935.5 427v1M936.5 420v1M936.5 428v1M937.5 420v1M937.5 426v1M938.5 420v1M938.5 427v1M939.5 427v1M940.5 420v1M941.5 420v1M941.5 426v2M942.5 427v1M943.5 420v1M944.5 419v2M944.5 426v2M945.5 420v2M945.5 427v2M946.5 420v1M946.5 427v1M947.5 420v1M947.5 426v1M948.5 420v2M948.5 427v1M949.5 420v1M949.5 427v1M951.5 420v1M952.5 427v1M953.5 427v1M955.5 421v1M955.5 428v1M956.5 421v1M956.5 427v1M958.5 420v2M958.5 427v2M961.5 421v1M961.5 428v1M962.5 420v1M962.5 427v1M963.5 420v1M964.5 428v1M965.5 421v1M965.5 427v2M966.5 420v1M966.5 426v1M967.5 421v1M967.5 428v1M968.5 427v1M969.5 421v1M969.5 428v1M970.5 421v1M970.5 428v1M971.5 420v1M972.5 421v1M972.5 427v1M973.5 421v1M974.5 421v1M974.5 427v1M975.5 421v1M977.5 420v1M977.5 427v1M978.5 420v1M978.5 426v1M979.5 421v1M979.5 428v1M981.5 427v1M986.5 420v1M986.5 426v1M989.5 420v1M989.5 427v1M992.5 421v1M992.5 428v1M993.5 421v1M993.5 427v1M994.5 421v1M994.5 427v1M995.5 421v1M995.5 427v1M996.5 421v1M996.5 427v1M997.5 422v1M997.5 428v1M999.5 421v1M1001.5 421v1M1001.5 427v1M1002.5 421v1M1002.5 427v1M1003.5 428v1M1005.5 421v1M1005.5 428v1M1006.5 422v1M1006.5 428v1M1008.5 422v1M1008.5 428v1M1010.5 421v1M1010.5 428v1M1014.5 421v1M1015.5 421v1M1016.5 421v1M1016.5 428v1M1017.5 427v1M1018.5 422v1M1019.5 421v1M1019.5 427v1M1021.5 421v1M1021.5 427v1M1022.5 422v1M1022.5 428v1M1025.5 428v1M1027.5 422v1M1027.5 428v1M1028.5 421v1M1028.5 428v1M1031.5 421v1M1031.5 428v1M1032.5 421v1M1033.5 422v1M1036.5 427v1M1037.5 428v1M1038.5 427v1M1041.5 421v1M1041.5 428v1M1044.5 421v1M1047.5 421v2M1047.5 428v1M1048.5 421v1M1051.5 428v1M1055.5 428v1M1057.5 422v1M1057.5 428v1M1058.5 421v1M1061.5 422v1M1067.5 421v1M1068.5 423v1M1068.5 429v1M1069.5 428v1M1070.5 422v1M1070.5 428v1M1076.5 422v1M1077.5 422v1M1077.5 428v1M1078.5 422v1M1078.5 428v1M1082.5 428v1M1085.5 423v1M1085.5 429v1M1089.5 428v1M1091.5 422v1M1092.5 423v1M1094.5 422v1M1094.5 428v1M1097.5 423v1M1101.5 428v1M1102.5 429v1M1103.5 422v1M1103.5 428v1M1108.5 423v1M1108.5 429v1M1112.5 429v1M1119.5 429v1M1125.5 429v1M1126.5 422v1M1126.5 428v1M1129.5 428v1M1130.5 429v1M1135.5 429v1M1136.5 429v1M1137.5 424v1M1144.5 429v1M1156.5 423v1M1156.5 429v1M1160.5 429v1M1165.5 428v1M1176.5 423v1M1176.5 429v1M1179.5 429v1M1185.5 423v1M1185.5 429v1M1193.5 429v1M1194.5 423v1M1194.5 429v1M1196.5 423v1M1196.5 429v1M1197.5 423v1M1204.5 424v1M1204.5 430v1M1208.5 429v1M1214.5 429v1M1219.5 424v1M1220.5 429v1M1221.5 424v1M1221.5 430v1M1225.5 423v1M1225.5 429v1M1226.5 424v1M1228.5 429v1M1233.5 424v1M1236.5 424v1M1237.5 424v1M1238.5 424v1M1239.5 430v1M1241.5 424v1M1241.5 430v1M1242.5 425v1M1246.5 430v1M1253.5 429v1M1257.5 424v1M1257.5 430v1M1259.5 424v1M1259.5 430v1M1263.5 424v1M1263.5 430v1M1267.5 424v1" stroke="#58f858" stroke-width="1" fill="none"/>
<path d="M70.5 423v2M70.5 428v2M71.5 423v1M72.5 423v2M72.5 427v2M73.5 424v2M73.5 429v1M74.5 424v1M74.5 429v1M75.5 423v1M75.5 427v1M76.5 424v2M76.5 428v2M77.5 423v2M77.5 428v2M78.5 423v2M78.5 429v1M79.5 425v1M80.5 424v1M80.5 428v1M81.5 424v2M81.5 428v2M82.5 424v1M82.5 429v1M83.5 423v1M83.5 428v1M84.5 423v2M84.5 428v1M85.5 428v1M86.5 423v1M86.5 428v1M87.5 423v2M87.5 427v1M88.5 423v1M88.5 428v1M89.5 424v1M89.5 428v1M90.5 423v2M90.5 428v2M91.5 423v2M91.5 428v1M92.5 424v1M92.5 428v2M93.5 423v1M93.5 428v1M94.5 423v1M94.5 427v2M95.5 423v1M96.5 424v1M96.5 428v1M97.5 423v1M97.5 428v1M98.5 423v2M98.5 427v2M99.5 423v1M100.5 422v2M100.5 427v2M101.5 423v2M101.5 428v2M102.5 423v1M102.5 427v1M103.5 423v1M103.5 428v1M104.5 423v1M105.5 423v2M105.5 428v1M106.5 423v2M106.5 427v2M107.5 423v1M107.5 427v1M108.5 423v1M109.5 424v2M109.5 428v2M110.5 424v1M111.5 424v1M111.5 428v2M112.5 423v1M112.5 428v1M113.5 423v2M113.5 427v2M114.5 424v1M114.5 427v2M115.5 422v2M115.5 427v1M116.5 423v1M116.5 428v1M117.5 424v1M117.5 428v1M118.5 423v1M119.5 424v1M119.5 428v1M120.5 423v2M120.5 428v1M121.5 427v1M122.5 423v1M122.5 428v1M123.5 424v1M123.5 428v1M124.5 423v2M124.5 428v1M125.5 423v1M125.5 428v1M127.5 423v2M127.5 427v2M128.5 423v2M128.5 428v1M129.5 423v2M129.5 427v2M130.5 422v2M130.5 427v2M131.5 424v1M131.5 428v1M132.5 423v1M132.5 428v1M133.5 422v2M133.5 426v2M134.5 423v1M134.5 427v2M135.5 423v2M135.5 427v2M136.5 423v1M136.5 427v1M137.5 423v1M137.5 427v1M138.5 423v1M138.5 428v1M139.5 423v1M139.5 427v1M140.5 423v2M140.5 428v1M141.5 423v1M141.5 428v1M142.5 423v2M142.5 428v1M143.5 423v1M143.5 428v2M144.5 422v1M144.5 428v1M145.5 423v1M145.5 427v1M146.5 423v2M146.5 428v1M147.5 423v1M147.5 428v1M148.5 423v1M148.5 426v2M149.5 423v1M149.5 427v2M150.5 422v1M150.5 427v1M151.5 422v1M151.5 427v1M152.5 422v2M152.5 427v1M153.5 422v2M153.5 426v2M154.5 422v2M154.5 427v1M155.5 423v1M155.5 428v1M156.5 423v1M156.5 427v2M157.5 422v2M157.5 426v2M158.5 423v1M158.5 428v1M159.5 423v1M159.5 427v1M160.5 423v1M161.5 423v2M161.5 427v2M162.5 422v2M162.5 427v1M163.5 423v2M163.5 427v2M164.5 422v2M164.5 427v2M165.5 423v1M166.5 423v2M166.5 427v2M167.5 423v1M167.5 427v2M168.5 423v1M168.5 426v2M169.5 422v2M169.5 427v1M170.5 423v2M170.5 427v2M171.5 422v2M171.5 427v1M172.5 421v2M172.5 426v2M173.5 422v2M173.5 426v2M174.5 422v1M174.5 427v1M175.5 423v1M176.5 422v1M176.5 427v1M177.5 423v1M177.5 427v1M178.5 424v1M178.5 428v1M179.5 423v2M179.5 427v2M180.5 427v1M181.5 427v1M182.5 422v2M182.5 427v1M183.5 423v1M183.5 427v1M184.5 422v2M184.5 427v2M185.5 422v1M185.5 427v1M186.5 422v2M186.5 426v2M187.5 423v1M187.5 428v1M188.5 422v2M188.5 427v1M189.5 422v1M189.5 428v1M190.5 422v1M190.5 427v1M191.5 422v2M191.5 427v2M192.5 423v1M192.5 427v2M194.5 423v1M194.5 427v2M195.5 423v1M195.5 427v1M196.5 422v1M196.5 427v2M197.5 422v2M197.5 427v1M198.5 423v1M198.5 427v1M199.5 422v1M200.5 422v1M200.5 427v1M201.5 422v1M201.5 427v1M202.5 422v3M202.5 427v2M203.5 422v1M203.5 426v2M205.5 421v2M205.5 426v1M206.5 423v1M206.5 428v1M207.5 422v2M207.5 427v1M208.5 422v2M208.5 427v2M209.5 422v1M209.5 426v2M210.5 422v2M210.5 426v2M211.5 422v2M211.5 426v2M212.5 422v1M212.5 427v1M213.5 422v1M213.5 426v2M214.5 422v2M214.5 426v2M215.5 422v2M215.5 426v2M216.5 427v1M217.5 422v1M219.5 422v1M219.5 427v1M220.5 426v1M221.5 422v2M221.5 427v1M222.5 422v1M222.5 427v1M223.5 422v2M223.5 426v2M224.5 422v1M224.5 427v1M225.5 422v2M225.5 426v2M226.5 421v2M226.5 426v1M227.5 427v1M228.5 421v1M228.5 426v2M229.5 423v1M229.5 427v1M230.5 422v2M230.5 426v2M231.5 422v1M231.5 426v1M232.5 422v1M232.5 426v1M233.5 422v1M233.5 427v1M234.5 421v2M234.5 425v2M235.5 422v1M235.5 427v1M236.5 422v1M237.5 423v1M237.5 427v1M238.5 422v2M238.5 427v1M239.5 421v1M239.5 426v1M240.5 422v2M240.5 426v1M241.5 421v2M241.5 426v2M242.5 422v1M242.5 427v1M243.5 421v2M243.5 426v2M244.5 422v1M244.5 426v2M245.5 421v2M245.5 426v2M246.5 422v2M246.5 427v1M247.5 422v2M247.5 426v1M248.5 421v2M248.5 426v2M249.5 422v1M249.5 426v1M250.5 421v1M250.5 426v2M251.5 422v2M251.5 426v2M252.5 422v1M252.5 426v1M253.5 422v1M253.5 426v1M254.5 422v1M254.5 426v1M255.5 423v1M255.5 427v1M256.5 421v2M256.5 425v2M257.5 422v1M257.5 427v1M258.5 422v1M258.5 425v2M259.5 421v1M259.5 426v1M260.5 421v2M260.5 425v2M261.5 422v1M261.5 426v1M262.5 422v1M262.5 427v1M263.5 422v1M263.5 426v2M264.5 422v2M264.5 426v2M265.5 421v2M265.5 425v3M266.5 422v1M266.5 426v2M267.5 421v1M267.5 426v1M268.5 421v1M269.5 422v1M269.5 427v1M270.5 421v1M270.5 425v1M271.5 421v1M271.5 426v1M272.5 422v1M272.5 427v1M273.5 422v1M273.5 426v1M274.5 422v1M274.5 427v1M275.5 421v1M275.5 425v2M276.5 421v1M276.5 426v1M277.5 421v1M277.5 426v1M279.5 422v1M279.5 427v1M280.5 422v1M280.5 426v1M281.5 421v1M281.5 425v1M282.5 422v1M282.5 427v1M283.5 420v2M283.5 425v2M284.5 421v2M284.5 425v2M285.5 422v1M285.5 426v1M286.5 422v1M286.5 426v1M287.5 421v2M287.5 426v1M288.5 420v1M288.5 426v1M289.5 422v1M289.5 426v1M290.5 422v2M290.5 426v1M291.5 421v2M291.5 426v2M292.5 422v2M292.5 426v2M293.5 421v1M293.5 425v2M294.5 426v1M295.5 421v1M295.5 426v1M296.5 421v2M296.5 427v1M297.5 422v1M297.5 426v2M298.5 421v2M298.5 425v2M299.5 421v1M299.5 425v2M300.5 421v1M300.5 426v1M301.5 421v1M301.5 426v1M302.5 421v1M302.5 425v1M303.5 421v1M303.5 426v1M304.5 421v1M304.5 426v1M305.5 420v1M306.5 422v1M306.5 426v1M307.5 421v1M307.5 425v1M308.5 421v2M308.5 426v1M309.5 422v1M310.5 421v1M310.5 426v1M311.5 422v1M311.5 426v1M312.5 421v1M312.5 426v1M313.5 421v2M313.5 425v2M314.5 421v2M314.5 425v1M315.5 421v1M315.5 426v1M316.5 421v1M316.5 426v1M317.5 421v1M317.5 425v2M318.5 421v2M318.5 425v2M319.5 421v2M319.5 426v1M320.5 426v1M321.5 421v1M321.5 425v2M322.5 421v1M322.5 426v1M323.5 421v1M324.5 421v1M324.5 425v1M325.5 421v1M325.5 426v1M326.5 422v1M326.5 426v1M327.5 422v1M327.5 425v2M328.5 420v2M328.5 425v1M329.5 421v2M329.5 425v1M330.5 422v1M330.5 426v1M331.5 421v2M331.5 425v2M332.5 421v1M332.5 426v1M333.5 421v1M333.5 426v1M334.5 420v2M334.5 425v2M335.5 421v1M335.5 426v1M336.5 421v1M336.5 425v1M337.5 421v1M337.5 425v2M338.5 421v1M338.5 426v1M339.5 421v1M339.5 425v1M340.5 421v2M340.5 425v2M341.5 426v1M342.5 421v2M342.5 425v2M343.5 421v1M343.5 425v1M344.5 420v2M344.5 426v1M345.5 420v1M345.5 425v1M346.5 421v1M346.5 425v1M347.5 421v1M347.5 426v1M348.5 421v1M349.5 421v1M349.5 426v1M350.5 420v2M350.5 425v2M351.5 421v1M351.5 425v2M352.5 422v1M352.5 426v2M353.5 421v2M353.5 426v1M354.5 420v1M354.5 425v1M355.5 425v1M356.5 421v2M356.5 425v1M357.5 421v1M357.5 425v1M358.5 421v1M358.5 425v1M359.5 421v1M359.5 425v2M360.5 420v1M360.5 425v1M361.5 421v1M361.5 425v2M362.5 420v2M362.5 424v2M363.5 420v2M363.5 424v2M364.5 419v2M364.5 424v2M365.5 420v1M365.5 425v1M366.5 420v2M366.5 425v2M367.5 421v1M367.5 425v1M368.5 420v2M368.5 424v2M369.5 420v2M369.5 425v2M370.5 420v2M370.5 425v2M371.5 421v1M371.5 425v1M372.5 420v2M372.5 424v2M373.5 421v1M373.5 425v2M374.5 421v1M374.5 426v1M375.5 420v1M375.5 424v2M376.5 421v1M377.5 420v2M377.5 424v2M378.5 420v1M378.5 425v1M379.5 419v1M379.5 424v1M380.5 420v2M380.5 425v1M381.5 420v2M381.5 425v2M382.5 421v1M382.5 425v1M383.5 419v2M383.5 425v1M384.5 420v2M384.5 424v2M385.5 420v1M385.5 424v2M386.5 421v1M386.5 426v1M387.5 420v1M387.5 425v1M388.5 420v1M388.5 425v1M389.5 421v1M389.5 425v1M390.5 420v1M390.5 424v1M391.5 420v2M391.5 425v1M392.5 420v2M392.5 424v2M393.5 420v3M393.5 425v2M394.5 419v2M394.5 423v2M395.5 420v2M395.5 424v2M396.5 420v2M396.5 425v1M397.5 420v2M397.5 424v2M398.5 419v1M398.5 424v1M399.5 420v1M399.5 425v1M400.5 421v2M400.5 426v1M401.5 419v1M401.5 424v1M402.5 420v1M402.5 423v2M403.5 420v1M403.5 425v1M404.5 425v1M405.5 421v1M405.5 426v1M406.5 420v1M406.5 424v2M407.5 419v1M407.5 424v1M408.5 421v1M408.5 425v1M409.5 420v1M409.5 425v1M410.5 419v2M410.5 424v2M411.5 419v2M411.5 423v2M412.5 418v2M412.5 423v2M413.5 421v1M413.5 425v1M414.5 419v2M414.5 424v2M415.5 420v1M415.5 425v1M416.5 419v1M416.5 424v1M417.5 419v1M417.5 424v1M418.5 419v2M418.5 424v1M419.5 420v2M419.5 424v2M420.5 420v1M420.5 424v1M421.5 420v1M421.5 425v1M422.5 420v1M422.5 424v1M423.5 419v1M423.5 424v1M424.5 419v1M424.5 424v1M425.5 419v2M425.5 423v2M426.5 419v2M426.5 424v1M427.5 420v1M427.5 424v1M428.5 419v2M428.5 424v2M429.5 419v2M429.5 424v1M430.5 425v1M431.5 419v1M431.5 425v1M433.5 419v2M433.5 424v1M434.5 419v1M434.5 424v1M435.5 420v2M435.5 424v2M436.5 419v2M436.5 424v2M437.5 424v1M438.5 419v1M438.5 425v1M439.5 418v2M439.5 424v1M440.5 419v1M440.5 424v1M441.5 419v2M441.5 424v2M442.5 418v2M442.5 424v1M443.5 419v2M443.5 424v1M444.5 419v2M444.5 423v2M445.5 419v1M445.5 424v1M446.5 419v2M446.5 423v2M447.5 419v1M447.5 424v1M448.5 419v1M448.5 423v1M449.5 419v2M449.5 424v1M450.5 419v1M450.5 423v1M451.5 418v2M451.5 423v2M452.5 418v1M452.5 423v2M453.5 423v1M454.5 419v1M454.5 424v1M455.5 420v1M455.5 424v1M456.5 419v2M456.5 424v2M457.5 418v2M457.5 423v2M458.5 418v2M458.5 423v2M459.5 418v1M459.5 423v1M460.5 418v1M460.5 422v2M461.5 419v1M462.5 418v2M462.5 423v1M463.5 417v2M463.5 422v2M464.5 418v2M464.5 423v2M465.5 418v2M465.5 422v2M466.5 423v1M467.5 419v1M467.5 424v1M468.5 419v1M468.5 424v1M469.5 418v2M469.5 422v2M471.5 417v2M471.5 422v2M472.5 419v1M472.5 424v1M473.5 418v2M473.5 423v2M474.5 417v2M474.5 422v2M475.5 417v2M475.5 422v2M476.5 419v1M476.5 423v1M477.5 419v2M477.5 423v2M478.5 418v2M478.5 422v3M479.5 419v1M479.5 423v1M480.5 417v2M480.5 423v1M481.5 417v1M481.5 422v2M482.5 418v2M482.5 422v2M483.5 417v2M483.5 422v2M484.5 418v1M484.5 422v1M485.5 418v2M485.5 422v2M486.5 419v1M486.5 423v1M487.5 417v2M487.5 422v2M488.5 417v1M488.5 422v1M489.5 418v2M489.5 422v2M490.5 422v1M491.5 417v1M491.5 422v1M492.5 418v1M492.5 423v1M493.5 418v1M493.5 422v2M494.5 417v2M494.5 422v2M495.5 417v2M495.5 422v1M496.5 417v1M496.5 422v1M497.5 423v1M498.5 418v1M499.5 418v1M499.5 422v2M500.5 419v1M500.5 423v1M501.5 418v1M501.5 423v1M502.5 419v1M502.5 423v1M503.5 418v1M503.5 423v1M504.5 416v2M504.5 422v1M505.5 417v2M505.5 422v2M506.5 418v1M506.5 423v1M507.5 417v2M507.5 423v1M508.5 419v1M508.5 424v1M509.5 418v1M509.5 423v1M510.5 418v1M510.5 422v1M511.5 416v2M511.5 422v2M512.5 417v2M512.5 422v1M513.5 417v1M513.5 422v1M514.5 417v2M514.5 423v2M515.5 417v2M515.5 421v2M516.5 417v3M516.5 422v2M517.5 416v2M517.5 421v2M518.5 417v1M518.5 422v1M519.5 417v1M519.5 421v1M520.5 418v1M520.5 422v1M521.5 418v1M521.5 422v1M522.5 417v1M522.5 421v1M523.5 418v2M523.5 422v1M524.5 418v1M525.5 417v3M525.5 422v2M526.5 417v1M526.5 422v1M527.5 417v1M527.5 421v1M528.5 416v1M528.5 422v1M529.5 416v2M529.5 421v2M530.5 417v1M530.5 422v1M531.5 418v1M531.5 422v1M532.5 416v2M532.5 422v1M533.5 416v2M533.5 421v2M534.5 418v1M534.5 422v1M535.5 416v2M535.5 421v2M536.5 417v2M536.5 422v2M537.5 416v2M537.5 420v2M538.5 417v2M538.5 422v1M539.5 416v2M539.5 420v2M540.5 415v2M540.5 421v2M541.5 418v1M541.5 421v2M542.5 416v3M542.5 421v2M543.5 417v2M543.5 421v2M544.5 416v3M544.5 422v2M545.5 416v1M545.5 421v1M546.5 417v2M546.5 422v1M547.5 417v2M547.5 421v2M548.5 417v2M548.5 421v2M549.5 417v2M549.5 422v2M550.5 417v1M550.5 422v1M551.5 416v2M551.5 421v2M552.5 420v1M553.5 417v1M553.5 421v2M554.5 416v2M554.5 421v2M555.5 416v2M555.5 421v2M556.5 416v2M556.5 421v1M557.5 414v3M557.5 419v3M558.5 416v2M558.5 421v2M559.5 416v2M559.5 421v2M560.5 417v1M561.5 416v1M561.5 421v2M562.5 417v2M562.5 422v1M563.5 420v1M564.5 415v3M564.5 420v3M565.5 416v1M565.5 421v1M566.5 416v1M566.5 421v1M567.5 415v3M567.5 420v3M568.5 415v2M568.5 420v1M569.5 415v1M569.5 419v1M570.5 416v2M570.5 420v2M571.5 416v2M571.5 422v2M572.5 415v3M572.5 421v2M573.5 416v2M573.5 421v1M574.5 416v1M574.5 421v1M575.5 415v2M575.5 421v2M576.5 417v1M576.5 421v1M577.5 416v1M577.5 421v2M578.5 416v2M578.5 420v2M579.5 417v1M579.5 421v1M580.5 415v2M580.5 420v3M581.5 415v1M581.5 420v1M582.5 415v2M582.5 419v2M583.5 416v1M583.5 421v1M584.5 416v2M584.5 421v2M585.5 413v2M585.5 418v2M586.5 416v1M587.5 414v2M587.5 420v2M588.5 414v2M588.5 418v2M589.5 414v2M589.5 419v2M590.5 415v1M590.5 420v1M591.5 415v2M591.5 420v2M592.5 416v2M592.5 421v3M593.5 415v1M593.5 419v1M594.5 415v1M594.5 420v1M595.5 415v2M595.5 419v2M596.5 416v1M596.5 421v1M597.5 416v2M597.5 422v2M598.5 413v2M598.5 418v2M599.5 415v1M599.5 419v1M600.5 413v2M600.5 420v2M601.5 415v2M601.5 419v2M602.5 414v2M602.5 420v2M603.5 415v1M603.5 420v1M604.5 415v1M604.5 419v2M605.5 414v2M605.5 418v2M606.5 415v1M606.5 420v2M607.5 415v3M607.5 420v3M608.5 415v2M608.5 420v2M609.5 415v2M609.5 421v1M610.5 414v2M610.5 419v2M611.5 413v2M611.5 418v1M612.5 415v2M612.5 420v2M613.5 414v2M613.5 419v1M614.5 414v2M614.5 418v2M615.5 415v1M615.5 420v1M616.5 414v2M616.5 419v2M617.5 415v2M617.5 419v1M618.5 421v1M619.5 413v2M619.5 418v2M620.5 416v1M620.5 421v1M621.5 414v2M621.5 418v2M622.5 414v2M622.5 419v2M623.5 413v2M623.5 417v2M624.5 415v1M624.5 420v1M625.5 414v2M625.5 418v1M626.5 412v3M626.5 418v2M627.5 414v1M627.5 418v1M628.5 414v2M628.5 419v1M629.5 415v1M629.5 420v1M630.5 413v2M630.5 419v2M631.5 413v2M631.5 420v2M632.5 414v2M632.5 418v2M633.5 411v2M633.5 417v2M634.5 415v1M634.5 419v2M635.5 415v1M636.5 415v2M636.5 419v2M637.5 413v3M637.5 419v2M638.5 415v1M638.5 419v1M639.5 412v2M639.5 417v3M640.5 416v1M640.5 420v1M641.5 414v1M641.5 419v2M642.5 414v1M642.5 419v1M643.5 415v2M643.5 419v2M644.5 414v1M644.5 419v1M645.5 415v1M646.5 413v2M646.5 418v1M647.5 411v3M647.5 416v2M648.5 415v3M648.5 421v2M649.5 418v1M650.5 412v2M650.5 419v1M651.5 412v2M651.5 417v2M652.5 413v2M652.5 418v2M653.5 414v1M653.5 419v1M654.5 413v1M654.5 418v1M655.5 412v1M655.5 417v2M656.5 414v2M656.5 419v2M657.5 412v2M657.5 417v1M658.5 413v2M658.5 417v2M659.5 412v3M659.5 418v2M660.5 412v2M660.5 418v2M661.5 413v1M662.5 412v2M662.5 418v2M663.5 413v1M663.5 418v1M664.5 413v2M664.5 418v2M665.5 414v2M665.5 420v2M666.5 413v1M666.5 417v1M667.5 411v1M667.5 416v1M668.5 413v2M668.5 417v2M669.5 414v1M669.5 418v1M670.5 411v3M670.5 417v3M671.5 413v1M671.5 417v1M672.5 411v3M672.5 417v3M673.5 412v2M673.5 417v2M674.5 412v1M674.5 417v1M675.5 411v2M675.5 417v2M676.5 411v2M676.5 416v2M677.5 413v2M677.5 418v2M678.5 413v2M678.5 419v1M679.5 411v2M679.5 417v2M680.5 413v2M680.5 418v2M681.5 411v3M681.5 418v2M682.5 412v2M682.5 418v2M683.5 413v1M683.5 417v2M684.5 417v1M685.5 414v1M685.5 418v1M686.5 415v1M686.5 419v2M687.5 413v3M687.5 419v3M688.5 413v2M688.5 419v3M689.5 413v2M689.5 419v1M690.5 413v2M690.5 418v2M691.5 412v1M691.5 418v2M692.5 414v2M692.5 418v2M693.5 410v3M693.5 416v3M694.5 413v2M694.5 417v2M695.5 413v1M695.5 417v1M696.5 413v2M696.5 418v1M697.5 414v2M697.5 419v2M698.5 415v1M698.5 421v1M699.5 417v2M699.5 421v2M700.5 411v3M700.5 417v2M701.5 413v1M701.5 417v2M702.5 413v3M702.5 419v3M703.5 414v2M703.5 419v2M704.5 413v1M704.5 417v1M705.5 414v2M705.5 418v2M706.5 415v2M706.5 420v2M707.5 412v3M707.5 418v3M708.5 415v2M708.5 420v1M709.5 412v2M709.5 418v2M710.5 413v1M710.5 418v1M711.5 414v1M711.5 419v1M712.5 412v2M712.5 416v2M713.5 415v1M713.5 420v1M714.5 413v1M714.5 418v2M715.5 415v1M715.5 419v1M716.5 411v4M716.5 417v3M717.5 412v1M717.5 418v1M718.5 414v1M718.5 419v1M719.5 412v3M719.5 418v3M720.5 415v2M720.5 421v2M721.5 415v3M721.5 420v3M722.5 415v1M722.5 419v1M723.5 414v1M723.5 418v1M724.5 413v2M724.5 417v1M725.5 414v2M725.5 419v2M726.5 414v2M726.5 418v2M727.5 414v2M727.5 420v1M728.5 413v3M728.5 419v2M729.5 415v1M729.5 419v1M730.5 414v2M730.5 420v2M731.5 414v2M731.5 419v2M732.5 414v2M732.5 420v1M733.5 415v2M733.5 420v2M734.5 412v2M734.5 418v2M735.5 413v3M735.5 418v3M736.5 413v2M736.5 418v2M737.5 412v3M737.5 417v3M738.5 415v1M738.5 419v2M739.5 415v3M739.5 421v3M740.5 414v2M740.5 419v1M741.5 413v3M741.5 418v3M742.5 413v3M742.5 419v3M743.5 414v1M743.5 418v1M744.5 414v2M744.5 420v2M745.5 414v3M745.5 420v2M746.5 413v1M746.5 418v2M747.5 415v1M747.5 420v1M748.5 414v2M748.5 420v2M749.5 414v2M749.5 420v2M750.5 414v1M750.5 419v2M751.5 413v2M751.5 419v2M752.5 416v2M752.5 422v2M753.5 413v3M753.5 419v3M754.5 415v1M754.5 421v1M755.5 414v2M755.5 419v2M756.5 416v1M756.5 421v2M757.5 414v2M757.5 420v2M758.5 416v1M758.5 421v1M759.5 414v2M759.5 419v1M760.5 414v2M760.5 420v2M761.5 415v1M761.5 420v1M762.5 414v2M762.5 419v3M763.5 416v1M763.5 420v1M764.5 415v3M764.5 421v3M765.5 414v3M765.5 420v3M766.5 413v3M766.5 419v3M767.5 414v1M767.5 419v1M768.5 415v1M768.5 419v1M769.5 414v2M769.5 419v2M770.5 413v2M770.5 419v2M771.5 416v2M771.5 421v1M772.5 415v2M772.5 420v1M773.5 416v2M773.5 420v2M774.5 414v1M774.5 419v2M775.5 416v2M775.5 420v2M776.5 414v2M776.5 418v2M777.5 414v2M777.5 418v2M778.5 420v1M779.5 421v1M780.5 414v2M780.5 419v2M781.5 414v2M781.5 418v2M782.5 415v2M782.5 419v2M783.5 414v2M783.5 418v3M784.5 415v1M785.5 416v2M785.5 421v2M786.5 414v3M786.5 419v3M787.5 416v2M787.5 422v2M788.5 415v2M788.5 420v2M789.5 416v1M789.5 421v2M790.5 414v2M790.5 419v3M791.5 416v2M791.5 422v2M792.5 416v2M792.5 420v3M793.5 415v2M793.5 421v1M794.5 415v2M794.5 421v2M795.5 416v2M795.5 421v2M796.5 415v3M796.5 421v2M797.5 418v1M797.5 422v1M798.5 415v1M798.5 420v1M799.5 416v1M799.5 421v1M800.5 414v3M800.5 419v3M801.5 416v2M801.5 421v1M802.5 416v2M802.5 421v3M803.5 417v1M803.5 421v2M804.5 416v2M804.5 421v2M805.5 417v2M805.5 422v2M806.5 415v1M806.5 419v2M807.5 416v2M807.5 422v1M808.5 417v1M808.5 421v2M809.5 417v2M809.5 421v2M810.5 417v1M810.5 422v1M811.5 414v3M811.5 420v2M812.5 417v2M812.5 422v2M813.5 416v2M813.5 421v2M814.5 416v2M814.5 420v2M815.5 418v1M815.5 422v1M816.5 419v1M816.5 423v1M817.5 417v1M817.5 422v1M818.5 417v1M818.5 422v2M819.5 418v1M819.5 421v2M820.5 417v2M820.5 421v2M821.5 418v1M822.5 417v1M822.5 421v1M823.5 418v1M823.5 422v1M824.5 418v1M824.5 423v1M825.5 419v1M825.5 424v1M826.5 417v2M826.5 421v2M827.5 418v2M827.5 422v2M828.5 419v1M828.5 424v2M829.5 419v1M829.5 424v1M830.5 420v1M830.5 424v1M831.5 417v2M831.5 423v2M832.5 416v3M832.5 421v3M833.5 418v1M833.5 421v2M834.5 417v2M834.5 421v2M835.5 421v1M835.5 425v1M836.5 417v1M836.5 422v2M837.5 417v1M837.5 422v2M838.5 419v1M838.5 424v1M839.5 418v1M839.5 423v1M840.5 417v3M840.5 423v2M841.5 418v2M841.5 423v2M842.5 420v1M842.5 424v1M843.5 419v2M843.5 423v2M844.5 417v2M844.5 423v2M845.5 418v2M845.5 423v2M846.5 418v2M846.5 422v3M847.5 418v2M847.5 424v2M848.5 420v2M848.5 424v2M849.5 418v1M849.5 423v2M850.5 419v1M850.5 424v1M851.5 418v2M851.5 424v1M852.5 418v1M852.5 423v1M853.5 419v2M853.5 424v2M854.5 418v1M854.5 423v1M855.5 420v1M855.5 425v1M856.5 420v1M856.5 423v2M857.5 419v2M857.5 424v1M858.5 418v1M858.5 423v1M859.5 419v2M859.5 424v2M860.5 419v2M860.5 424v2M861.5 419v1M861.5 424v2M862.5 420v1M862.5 425v1M863.5 420v2M863.5 424v2M864.5 420v1M864.5 425v1M865.5 419v1M865.5 424v1M866.5 424v1M867.5 419v1M867.5 424v2M868.5 420v2M868.5 426v1M869.5 420v1M869.5 425v1M870.5 420v2M870.5 424v3M871.5 420v2M871.5 424v1M872.5 420v1M872.5 425v2M873.5 421v2M873.5 425v2M874.5 420v1M874.5 425v1M875.5 420v2M875.5 425v2M876.5 420v1M876.5 425v2M877.5 420v2M877.5 426v1M878.5 421v1M878.5 426v1M879.5 420v2M879.5 424v2M880.5 420v2M880.5 424v2M881.5 421v1M881.5 425v1M882.5 421v1M882.5 425v1M883.5 421v2M883.5 426v1M884.5 421v2M884.5 425v2M885.5 420v2M885.5 426v1M886.5 421v1M886.5 425v1M887.5 420v2M887.5 426v1M888.5 420v1M888.5 425v1M889.5 421v1M889.5 426v2M890.5 421v1M890.5 425v1M892.5 421v2M892.5 425v1M893.5 419v3M893.5 424v2M894.5 420v1M894.5 425v1M895.5 421v1M895.5 425v1M896.5 420v2M896.5 424v2M897.5 420v2M897.5 425v1M898.5 421v2M898.5 425v2M899.5 420v1M899.5 424v1M900.5 421v2M900.5 425v2M901.5 420v1M901.5 425v2M902.5 420v1M902.5 424v2M903.5 427v1M904.5 421v1M904.5 426v1M905.5 426v1M906.5 421v2M906.5 425v2M907.5 421v2M907.5 426v1M908.5 421v1M908.5 425v1M909.5 420v2M909.5 425v2M910.5 420v2M910.5 425v2M911.5 421v1M911.5 426v1M912.5 421v1M912.5 426v1M913.5 421v2M913.5 426v2M914.5 419v1M914.5 425v1M915.5 426v1M916.5 421v3M916.5 426v2M918.5 426v1M919.5 421v1M920.5 421v2M920.5 425v2M921.5 420v1M921.5 426v1M922.5 422v1M922.5 427v1M923.5 421v2M923.5 426v1M924.5 420v2M924.5 426v1M925.5 421v2M925.5 425v2M926.5 421v1M926.5 426v1M927.5 419v2M927.5 425v1M928.5 420v2M928.5 425v2M929.5 421v2M929.5 426v2M930.5 421v2M930.5 426v1M931.5 422v1M931.5 426v1M932.5 421v2M932.5 425v2M934.5 419v2M934.5 425v1M935.5 421v2M935.5 426v1M936.5 421v2M936.5 426v2M937.5 421v1M937.5 425v1M938.5 421v1M938.5 426v1M939.5 420v2M939.5 426v1M940.5 421v1M940.5 426v1M941.5 421v1M942.5 420v2M942.5 426v1M943.5 421v1M943.5 426v1M944.5 421v1M944.5 425v1M946.5 421v1M946.5 425v2M947.5 421v1M947.5 425v1M948.5 426v1M949.5 421v1M949.5 426v1M950.5 421v1M950.5 426v1M951.5 421v2M951.5 426v2M952.5 421v1M953.5 421v1M953.5 426v1M954.5 421v1M954.5 426v1M955.5 422v2M955.5 426v2M956.5 422v1M956.5 426v1M957.5 421v2M957.5 426v1M958.5 422v1M958.5 426v1M959.5 420v1M959.5 426v1M960.5 421v2M960.5 426v2M961.5 422v1M961.5 427v1M962.5 421v2M962.5 425v2M963.5 421v1M963.5 426v1M964.5 422v1M964.5 427v1M965.5 422v1M965.5 426v1M966.5 421v1M967.5 422v1M967.5 427v1M968.5 420v2M968.5 426v1M969.5 422v1M969.5 426v2M970.5 422v1M970.5 427v1M971.5 421v1M971.5 426v2M972.5 422v1M972.5 426v1M973.5 422v1M973.5 427v1M974.5 422v1M974.5 425v2M975.5 422v1M975.5 427v1M976.5 421v1M976.5 426v1M977.5 421v2M977.5 425v2M978.5 421v1M978.5 425v1M979.5 422v1M979.5 427v1M980.5 420v2M980.5 426v1M981.5 421v1M981.5 426v1M982.5 422v1M982.5 427v1M983.5 421v1M983.5 426v1M984.5 422v1M984.5 427v1M985.5 421v3M985.5 426v2M986.5 421v2M986.5 425v1M987.5 421v2M987.5 425v2M988.5 422v1M988.5 426v2M989.5 421v1M989.5 426v1M990.5 420v1M990.5 426v1M991.5 422v1M991.5 427v1M992.5 422v1M992.5 427v1M993.5 422v1M993.5 426v1M994.5 422v1M995.5 426v1M996.5 422v1M996.5 426v1M997.5 423v1M997.5 427v1M998.5 422v1M998.5 427v2M999.5 422v1M999.5 427v1M1000.5 422v2M1000.5 427v2M1001.5 422v1M1001.5 426v1M1002.5 422v1M1002.5 425v2M1003.5 422v2M1003.5 426v2M1004.5 421v2M1004.5 425v2M1005.5 422v1M1005.5 427v1M1006.5 423v1M1006.5 427v1M1007.5 421v2M1007.5 426v2M1008.5 423v1M1008.5 427v1M1009.5 422v3M1009.5 427v2M1010.5 422v1M1010.5 427v1M1011.5 421v2M1011.5 426v2M1012.5 422v2M1012.5 426v2M1013.5 421v2M1013.5 426v2M1014.5 422v1M1014.5 427v1M1015.5 422v2M1015.5 426v2M1016.5 422v2M1016.5 427v1M1017.5 422v1M1018.5 423v1M1018.5 427v2M1019.5 422v1M1020.5 422v2M1020.5 426v2M1021.5 422v1M1021.5 426v1M1022.5 427v1M1023.5 421v2M1023.5 427v1M1024.5 422v1M1024.5 426v2M1025.5 422v1M1025.5 427v1M1026.5 423v1M1026.5 428v1M1027.5 423v1M1027.5 427v1M1028.5 422v2M1028.5 426v2M1029.5 421v3M1029.5 426v2M1030.5 422v1M1030.5 426v2M1031.5 422v1M1031.5 427v1M1032.5 422v1M1032.5 425v2M1033.5 427v1M1034.5 422v1M1034.5 427v2M1035.5 422v1M1035.5 427v1M1036.5 422v2M1036.5 426v1M1037.5 422v1M1037.5 427v1M1038.5 421v1M1038.5 426v1M1039.5 422v2M1039.5 426v2M1040.5 422v2M1040.5 427v2M1041.5 422v2M1041.5 426v2M1042.5 422v2M1042.5 427v1M1043.5 422v2M1043.5 426v2M1044.5 422v1M1044.5 427v1M1045.5 422v1M1045.5 427v2M1046.5 422v1M1046.5 428v1M1047.5 427v1M1048.5 422v1M1048.5 426v2M1049.5 421v1M1049.5 427v1M1050.5 423v1M1050.5 427v1M1051.5 422v2M1051.5 427v1M1052.5 422v2M1052.5 427v2M1053.5 423v1M1053.5 427v2M1054.5 422v1M1054.5 427v2M1055.5 423v1M1056.5 422v2M1056.5 426v2M1057.5 423v2M1057.5 427v1M1058.5 422v1M1058.5 426v2M1059.5 422v1M1060.5 423v1M1060.5 428v1M1061.5 428v1M1062.5 422v1M1062.5 427v1M1063.5 422v2M1063.5 427v2M1064.5 422v2M1064.5 426v2M1065.5 422v2M1065.5 427v2M1066.5 423v1M1066.5 428v1M1067.5 422v1M1067.5 426v2M1068.5 424v1M1068.5 428v1M1069.5 422v2M1069.5 426v2M1070.5 423v1M1070.5 427v1M1071.5 422v2M1071.5 426v2M1072.5 422v2M1072.5 427v2M1073.5 423v1M1073.5 427v1M1074.5 422v1M1074.5 427v2M1075.5 422v1M1075.5 427v1M1076.5 423v1M1076.5 427v2M1078.5 423v1M1078.5 427v1M1079.5 423v2M1079.5 428v1M1080.5 422v1M1080.5 427v1M1081.5 423v1M1081.5 428v1M1082.5 422v2M1082.5 427v1M1083.5 423v1M1083.5 428v1M1084.5 422v1M1084.5 427v1M1085.5 428v1M1086.5 423v1M1086.5 428v1M1087.5 422v1M1087.5 427v1M1088.5 423v2M1088.5 427v2M1089.5 423v1M1090.5 422v2M1090.5 426v2M1091.5 423v1M1091.5 428v1M1092.5 428v1M1093.5 422v2M1093.5 426v2M1094.5 423v1M1094.5 426v2M1095.5 423v1M1095.5 427v2M1096.5 423v2M1096.5 428v1M1097.5 424v1M1097.5 428v1M1098.5 424v1M1098.5 429v1M1099.5 423v1M1099.5 428v1M1100.5 424v1M1100.5 428v2M1101.5 422v1M1101.5 427v1M1102.5 424v1M1102.5 428v1M1103.5 423v1M1103.5 427v1M1104.5 422v2M1104.5 427v2M1105.5 423v2M1105.5 427v2M1106.5 423v1M1106.5 428v1M1107.5 423v2M1107.5 428v1M1108.5 424v1M1108.5 428v1M1109.5 422v2M1109.5 427v2M1110.5 423v1M1110.5 427v2M1111.5 423v1M1111.5 428v1M1112.5 424v1M1113.5 423v1M1113.5 428v1M1114.5 423v2M1114.5 427v2M1115.5 423v2M1115.5 427v2M1116.5 423v2M1116.5 427v2M1117.5 423v1M1117.5 428v1M1118.5 427v1M1119.5 423v1M1119.5 428v1M1120.5 423v1M1120.5 428v1M1121.5 422v2M1121.5 427v2M1122.5 423v2M1122.5 428v2M1123.5 423v2M1123.5 428v1M1124.5 423v2M1124.5 427v2M1125.5 424v1M1126.5 423v1M1126.5 427v1M1127.5 423v1M1127.5 428v1M1128.5 424v1M1128.5 428v2M1129.5 423v1M1130.5 423v2M1130.5 428v1M1131.5 423v2M1131.5 427v2M1132.5 422v3M1132.5 427v2M1133.5 423v1M1133.5 427v2M1134.5 428v1M1135.5 424v1M1135.5 428v1M1136.5 423v2M1136.5 428v1M1137.5 429v1M1138.5 423v2M1138.5 427v2M1139.5 425v1M1139.5 429v1M1140.5 423v2M1140.5 427v2M1141.5 424v1M1141.5 428v1M1142.5 423v1M1142.5 428v1M1143.5 422v2M1143.5 427v2M1144.5 424v1M1144.5 428v1M1145.5 423v2M1145.5 427v2M1146.5 423v1M1146.5 428v1M1147.5 423v2M1147.5 427v2M1148.5 424v1M1148.5 428v1M1149.5 423v2M1149.5 428v2M1150.5 422v2M1150.5 427v2M1151.5 424v1M1152.5 423v2M1152.5 428v2M1153.5 424v1M1153.5 428v2M1154.5 423v2M1154.5 428v1M1155.5 423v1M1155.5 427v2M1156.5 424v1M1156.5 427v2M1157.5 424v1M1157.5 427v2M1158.5 424v1M1158.5 428v1M1159.5 422v2M1159.5 427v2M1160.5 424v1M1160.5 428v1M1161.5 423v1M1161.5 428v1M1162.5 423v1M1162.5 429v1M1163.5 424v1M1163.5 428v2M1164.5 423v2M1164.5 428v2M1165.5 423v1M1166.5 423v2M1166.5 428v1M1167.5 423v2M1167.5 428v1M1168.5 423v1M1168.5 428v1M1169.5 424v1M1169.5 428v2M1170.5 423v2M1170.5 427v2M1171.5 423v1M1171.5 428v1M1172.5 424v1M1172.5 428v2M1173.5 424v2M1173.5 428v2M1174.5 424v1M1174.5 429v1M1175.5 424v1M1175.5 429v1M1176.5 424v1M1177.5 424v1M1177.5 429v1M1178.5 423v2M1178.5 428v2M1179.5 424v2M1179.5 428v1M1180.5 424v1M1180.5 429v1M1181.5 424v1M1181.5 428v1M1182.5 424v1M1182.5 427v2M1183.5 424v1M1183.5 429v1M1184.5 423v2M1184.5 427v2M1185.5 424v1M1185.5 428v1M1186.5 424v2M1186.5 428v2M1187.5 423v1M1187.5 428v1M1188.5 423v2M1188.5 427v2M1189.5 423v1M1189.5 428v1M1190.5 423v1M1190.5 428v2M1191.5 424v1M1191.5 428v1M1192.5 424v1M1192.5 428v2M1193.5 424v2M1193.5 428v1M1194.5 424v1M1194.5 428v1M1195.5 424v1M1195.5 428v2M1196.5 424v1M1196.5 428v1M1197.5 424v1M1197.5 428v1M1198.5 424v1M1198.5 428v2M1199.5 424v2M1199.5 429v1M1200.5 423v2M1200.5 427v2M1201.5 424v1M1201.5 429v1M1202.5 423v2M1202.5 428v1M1203.5 424v2M1203.5 429v1M1204.5 425v1M1204.5 429v1M1205.5 423v2M1205.5 429v1M1206.5 424v2M1206.5 429v2M1207.5 425v1M1207.5 428v2M1208.5 424v1M1209.5 423v1M1209.5 428v1M1210.5 424v1M1210.5 429v1M1211.5 423v2M1211.5 428v2M1212.5 424v2M1212.5 428v3M1213.5 424v1M1213.5 428v2M1214.5 424v2M1214.5 428v1M1215.5 424v1M1215.5 429v1M1216.5 424v1M1216.5 428v2M1217.5 424v1M1217.5 429v1M1218.5 424v2M1218.5 428v2M1219.5 425v1M1219.5 429v2M1220.5 424v1M1220.5 428v1M1221.5 425v1M1221.5 429v1M1222.5 424v2M1222.5 428v2M1223.5 424v1M1223.5 428v2M1224.5 424v2M1224.5 428v2M1226.5 425v1M1226.5 428v2M1227.5 426v1M1227.5 430v1M1228.5 424v1M1228.5 428v1M1229.5 428v1M1230.5 424v2M1230.5 428v2M1231.5 424v2M1231.5 428v2M1232.5 425v1M1232.5 429v1M1233.5 425v1M1233.5 429v1M1234.5 424v1M1234.5 429v1M1235.5 423v2M1235.5 428v2M1236.5 429v1M1237.5 425v1M1237.5 429v1M1238.5 425v1M1238.5 429v1M1239.5 424v2M1239.5 429v1M1240.5 424v2M1240.5 429v1M1241.5 425v1M1241.5 429v1M1242.5 430v1M1243.5 425v1M1243.5 430v1M1244.5 424v1M1244.5 429v1M1245.5 424v2M1245.5 428v2M1246.5 425v2M1246.5 429v1M1247.5 425v1M1247.5 429v1M1248.5 424v1M1248.5 429v1M1249.5 424v1M1249.5 429v1M1250.5 424v1M1250.5 429v1M1251.5 424v1M1251.5 429v2M1252.5 424v1M1252.5 428v2M1253.5 424v1M1254.5 425v1M1254.5 429v1M1255.5 424v2M1255.5 429v1M1256.5 424v1M1256.5 429v1M1257.5 425v1M1257.5 429v1M1258.5 425v2M1258.5 430v1M1259.5 425v1M1259.5 429v1M1260.5 424v1M1260.5 429v1M1261.5 425v2M1261.5 430v1M1262.5 424v2M1262.5 429v2M1263.5 425v1M1263.5 429v1M1264.5 425v1M1264.5 429v2M1265.5 425v2M1265.5 429v2M1266.5 425v1M1266.5 429v1M1267.5 425v1M1267.5 429v1" stroke="#a8fca8" stroke-width="1" fill="none"/>
<path d="M70.5 425v3M71.5 424v4M72.5 425v2M73.5 426v3M74.5 425v4M75.5 424v3M76.5 426v2M77.5 425v3M78.5 425v4M79.5 426v4M80.5 425v3M81.5 426v2M82.5 425v4M83.5 424v4M84.5 425v3M85.5 424v4M86.5 424v4M87.5 425v2M88.5 424v4M89.5 425v3M90.5 425v3M91.5 425v3M92.5 425v3M93.5 424v4M94.5 424v3M95.5 424v4M96.5 425v3M97.5 424v4M98.5 425v2M99.5 424v4M100.5 424v3M101.5 425v3M102.5 424v3M103.5 424v4M104.5 424v4M105.5 425v3M106.5 425v2M107.5 424v3M108.5 424v4M109.5 426v2M110.5 425v4M111.5 425v3M112.5 424v4M113.5 425v2M114.5 425v2M115.5 424v3M116.5 424v4M117.5 425v3M118.5 424v4M119.5 425v3M120.5 425v3M121.5 423v4M122.5 424v4M123.5 425v3M124.5 425v3M125.5 424v4M126.5 424v5M127.5 425v2M128.5 425v3M129.5 425v2M130.5 424v3M131.5 425v3M132.5 424v4M133.5 424v2M134.5 424v3M135.5 425v2M136.5 424v3M137.5 424v3M138.5 424v4M139.5 424v3M140.5 425v3M141.5 424v4M142.5 425v3M143.5 424v4M144.5 423v5M145.5 424v3M146.5 425v3M147.5 424v4M148.5 424v2M149.5 424v3M150.5 423v4M151.5 423v4M152.5 424v3M153.5 424v2M154.5 424v3M155.5 424v4M156.5 424v3M157.5 424v2M158.5 424v4M159.5 424v3M160.5 424v4M161.5 425v2M162.5 424v3M163.5 425v2M164.5 424v3M165.5 424v4M166.5 425v2M167.5 424v3M168.5 424v2M169.5 424v3M170.5 425v2M171.5 424v3M172.5 423v3M173.5 424v2M174.5 423v4M175.5 424v4M176.5 423v4M177.5 424v3M178.5 425v3M179.5 425v2M180.5 423v4M181.5 423v4M182.5 424v3M183.5 424v3M184.5 424v3M185.5 423v4M186.5 424v2M187.5 424v4M188.5 424v3M189.5 423v5M190.5 423v4M191.5 424v3M192.5 424v3M193.5 423v5M194.5 424v3M195.5 424v3M196.5 423v4M197.5 424v3M198.5 424v3M199.5 423v4M200.5 423v4M201.5 423v4M202.5 425v2M203.5 423v3M204.5 423v5M205.5 423v3M206.5 424v4M207.5 424v3M208.5 424v3M209.5 423v3M210.5 424v2M211.5 424v2M212.5 423v4M213.5 423v3M214.5 424v2M215.5 424v2M216.5 423v4M217.5 423v4M218.5 423v5M219.5 423v4M220.5 422v4M221.5 424v3M222.5 423v4M223.5 424v2M224.5 423v4M225.5 424v2M226.5 423v3M227.5 423v4M228.5 422v4M229.5 424v3M230.5 424v2M231.5 423v3M232.5 423v3M233.5 423v4M234.5 423v2M235.5 423v4M236.5 423v4M237.5 424v3M238.5 424v3M239.5 422v4M240.5 424v2M241.5 423v3M242.5 423v4M243.5 423v3M244.5 423v3M245.5 423v3M246.5 424v3M247.5 424v2M248.5 423v3M249.5 423v3M250.5 422v4M251.5 424v2M252.5 423v3M253.5 423v3M254.5 423v3M255.5 424v3M256.5 423v2M257.5 423v4M258.5 423v2M259.5 422v4M260.5 423v2M261.5 423v3M262.5 423v4M263.5 423v3M264.5 424v2M265.5 423v2M266.5 423v3M267.5 422v4M268.5 422v4M269.5 423v4M270.5 422v3M271.5 422v4M272.5 423v4M273.5 423v3M274.5 423v4M275.5 422v3M276.5 422v4M277.5 422v4M278.5 421v5M279.5 423v4M280.5 423v3M281.5 422v3M282.5 423v4M283.5 422v3M284.5 423v2M285.5 423v3M286.5 423v3M287.5 423v3M288.5 421v5M289.5 423v3M290.5 424v2M291.5 423v3M292.5 424v2M293.5 422v3M294.5 422v4M295.5 422v4M296.5 423v4M297.5 423v3M298.5 423v2M299.5 422v3M300.5 422v4M301.5 422v4M302.5 422v3M303.5 422v4M304.5 422v4M305.5 421v4M306.5 423v3M307.5 422v3M308.5 423v3M309.5 423v4M310.5 422v4M311.5 423v3M312.5 422v4M313.5 423v2M314.5 423v2M315.5 422v4M316.5 422v4M317.5 422v3M318.5 423v2M319.5 423v3M320.5 422v4M321.5 422v3M322.5 422v4M323.5 422v4M324.5 422v3M325.5 422v4M326.5 423v3M327.5 423v2M328.5 422v3M329.5 423v2M330.5 423v3M331.5 423v2M332.5 422v4M333.5 422v4M334.5 422v3M335.5 422v4M336.5 422v3M337.5 422v3M338.5 422v4M339.5 422v3M340.5 423v2M341.5 421v5M342.5 423v2M343.5 422v3M344.5 422v4M345.5 421v4M346.5 422v3M347.5 422v4M348.5 422v4M349.5 422v4M350.5 422v3M351.5 422v3M352.5 423v3M353.5 423v3M354.5 421v4M355.5 421v4M356.5 423v2M357.5 422v3M358.5 422v3M359.5 422v3M360.5 421v4M361.5 422v3M362.5 422v2M363.5 422v2M364.5 421v3M365.5 421v4M366.5 422v3M367.5 422v3M368.5 422v2M369.5 422v3M370.5 422v3M371.5 422v3M372.5 422v2M373.5 422v3M374.5 422v4M375.5 421v3M376.5 422v4M377.5 422v2M378.5 421v4M379.5 420v4M380.5 422v3M381.5 422v3M382.5 422v3M383.5 421v4M384.5 422v2M385.5 421v3M386.5 422v4M387.5 421v4M388.5 421v4M389.5 422v3M390.5 421v3M391.5 422v3M392.5 422v2M393.5 423v2M394.5 421v2M395.5 422v2M396.5 422v3M397.5 422v2M398.5 420v4M399.5 421v4M400.5 423v3M401.5 420v4M402.5 421v2M403.5 421v4M404.5 421v4M405.5 422v4M406.5 421v3M407.5 420v4M408.5 422v3M409.5 421v4M410.5 421v3M411.5 421v2M412.5 420v3M413.5 422v3M414.5 421v3M415.5 421v4M416.5 420v4M417.5 420v4M418.5 421v3M419.5 422v2M420.5 421v3M421.5 421v4M422.5 421v3M423.5 420v4M424.5 420v4M425.5 421v2M426.5 421v3M427.5 421v3M428.5 421v3M429.5 421v3M430.5 421v4M431.5 420v5M432.5 420v5M433.5 421v3M434.5 420v4M435.5 422v2M436.5 421v3M437.5 420v4M438.5 420v5M439.5 420v4M440.5 420v4M441.5 421v3M442.5 420v4M443.5 421v3M444.5 421v2M445.5 420v4M446.5 421v2M447.5 420v4M448.5 420v3M449.5 421v3M450.5 420v3M451.5 420v3M452.5 419v4M453.5 419v4M454.5 420v4M455.5 421v3M456.5 421v3M457.5 420v3M458.5 420v3M459.5 419v4M460.5 419v3M461.5 420v4M462.5 420v3M463.5 419v3M464.5 420v3M465.5 420v2M466.5 419v4M467.5 420v4M468.5 420v4M469.5 420v2M470.5 420v5M471.5 419v3M472.5 420v4M473.5 420v3M474.5 419v3M475.5 419v3M476.5 420v3M477.5 421v2M478.5 420v2M479.5 420v3M480.5 419v4M481.5 418v4M482.5 420v2M483.5 419v3M484.5 419v3M485.5 420v2M486.5 420v3M487.5 419v3M488.5 418v4M489.5 420v2M490.5 418v4M491.5 418v4M492.5 419v4M493.5 419v3M494.5 419v3M495.5 419v3M496.5 418v4M497.5 419v4M498.5 419v4M499.5 419v3M500.5 420v3M501.5 419v4M502.5 420v3M503.5 419v4M504.5 418v4M505.5 419v3M506.5 419v4M507.5 419v4M508.5 420v4M509.5 419v4M510.5 419v3M511.5 418v4M512.5 419v3M513.5 418v4M514.5 419v4M515.5 419v2M516.5 420v2M517.5 418v3M518.5 418v4M519.5 418v3M520.5 419v3M521.5 419v3M522.5 418v3M523.5 420v2M524.5 419v4M525.5 420v2M526.5 418v4M527.5 418v3M528.5 417v5M529.5 418v3M530.5 418v4M531.5 419v3M532.5 418v4M533.5 418v3M534.5 419v3M535.5 418v3M536.5 419v3M537.5 418v2M538.5 419v3M539.5 418v2M540.5 417v4M541.5 419v2M542.5 419v2M543.5 419v2M544.5 419v3M545.5 417v4M546.5 419v3M547.5 419v2M548.5 419v2M549.5 419v3M550.5 418v4M551.5 418v3M552.5 416v4M553.5 418v3M554.5 418v3M555.5 418v3M556.5 418v3M557.5 417v2M558.5 418v3M559.5 418v3M560.5 418v4M561.5 417v4M562.5 419v3M563.5 416v4M564.5 418v2M565.5 417v4M566.5 417v4M567.5 418v2M568.5 417v3M569.5 416v3M570.5 418v2M571.5 418v4M572.5 418v3M573.5 418v3M574.5 417v4M575.5 417v4M576.5 418v3M577.5 417v4M578.5 418v2M579.5 418v3M580.5 417v3M581.5 416v4M582.5 417v2M583.5 417v4M584.5 418v3M585.5 415v3M586.5 417v4M587.5 416v4M588.5 416v2M589.5 416v3M590.5 416v4M591.5 417v3M592.5 418v3M593.5 416v3M594.5 416v4M595.5 417v2M596.5 417v4M597.5 418v4M598.5 415v3M599.5 416v3M600.5 415v5M601.5 417v2M602.5 416v4M603.5 416v4M604.5 416v3M605.5 416v2M606.5 416v4M607.5 418v2M608.5 417v3M609.5 417v4M610.5 416v3M611.5 415v3M612.5 417v3M613.5 416v3M614.5 416v2M615.5 416v4M616.5 416v3M617.5 417v2M618.5 416v5M619.5 415v3M620.5 417v4M621.5 416v2M622.5 416v3M623.5 415v2M624.5 416v4M625.5 416v2M626.5 415v3M627.5 415v3M628.5 416v3M629.5 416v4M630.5 415v4M631.5 415v5M632.5 416v2M633.5 413v4M634.5 416v3M635.5 416v4M636.5 417v2M637.5 416v3M638.5 416v3M639.5 414v3M640.5 417v3M641.5 415v4M642.5 415v4M643.5 417v2M644.5 415v4M645.5 416v4M646.5 415v3M647.5 414v2M648.5 418v3M649.5 414v4M650.5 414v5M651.5 414v3M652.5 415v3M653.5 415v4M654.5 414v4M655.5 413v4M656.5 416v3M657.5 414v3M658.5 415v2M659.5 415v3M660.5 414v4M661.5 414v4M662.5 414v4M663.5 414v4M664.5 415v3M665.5 416v4M666.5 414v3M667.5 412v4M668.5 415v2M669.5 415v3M670.5 414v3M671.5 414v3M672.5 414v3M673.5 414v3M674.5 413v4M675.5 413v4M676.5 413v3M677.5 415v3M678.5 415v4M679.5 413v4M680.5 415v3M681.5 414v4M682.5 414v4M683.5 414v3M684.5 413v4M685.5 415v3M686.5 416v3M687.5 416v3M688.5 415v4M689.5 415v4M690.5 415v3M691.5 413v5M692.5 416v2M693.5 413v3M694.5 415v2M695.5 414v3M696.5 415v3M697.5 416v3M698.5 416v5M699.5 419v2M700.5 414v3M701.5 414v3M702.5 416v3M703.5 416v3M704.5 414v3M705.5 416v2M706.5 417v3M707.5 415v3M708.5 417v3M709.5 414v4M710.5 414v4M711.5 415v4M712.5 414v2M713.5 416v4M714.5 414v4M715.5 416v3M716.5 415v2M717.5 413v5M718.5 415v4M719.5 415v3M720.5 417v4M721.5 418v2M722.5 416v3M723.5 415v3M724.5 415v2M725.5 416v3M726.5 416v2M727.5 416v4M728.5 416v3M729.5 416v3M730.5 416v4M731.5 416v3M732.5 416v4M733.5 417v3M734.5 414v4M735.5 416v2M736.5 415v3M737.5 415v2M738.5 416v3M739.5 418v3M740.5 416v3M741.5 416v2M742.5 416v3M743.5 415v3M744.5 416v4M745.5 417v3M746.5 414v4M747.5 416v4M748.5 416v4M749.5 416v4M750.5 415v4M751.5 415v4M752.5 418v4M753.5 416v3M754.5 416v5M755.5 416v3M756.5 417v4M757.5 416v4M758.5 417v4M759.5 416v3M760.5 416v4M761.5 416v4M762.5 416v3M763.5 417v3M764.5 418v3M765.5 417v3M766.5 416v3M767.5 415v4M768.5 416v3M769.5 416v3M770.5 415v4M771.5 418v3M772.5 417v3M773.5 418v2M774.5 415v4M775.5 418v2M776.5 416v2M777.5 416v2M778.5 416v4M779.5 417v4M780.5 416v3M781.5 416v2M782.5 417v2M783.5 416v2M784.5 416v4M785.5 418v3M786.5 417v2M787.5 418v4M788.5 417v3M789.5 417v4M790.5 416v3M791.5 418v4M792.5 418v2M793.5 417v4M794.5 417v4M795.5 418v3M796.5 418v3M797.5 419v3M798.5 416v4M799.5 417v4M800.5 417v2M801.5 418v3M802.5 418v3M803.5 418v3M804.5 418v3M805.5 419v3M806.5 416v3M807.5 418v4M808.5 418v3M809.5 419v2M810.5 418v4M811.5 417v3M812.5 419v3M813.5 418v3M814.5 418v2M815.5 419v3M816.5 420v3M817.5 418v4M818.5 418v4M819.5 419v2M820.5 419v2M821.5 419v4M822.5 418v3M823.5 419v3M824.5 419v4M825.5 420v4M826.5 419v2M827.5 420v2M828.5 420v4M829.5 420v4M830.5 421v3M831.5 419v4M832.5 419v2M833.5 419v2M834.5 419v2M835.5 422v3M836.5 418v4M837.5 418v4M838.5 420v4M839.5 419v4M840.5 420v3M841.5 420v3M842.5 421v3M843.5 421v2M844.5 419v4M845.5 420v3M846.5 420v2M847.5 420v4M848.5 422v2M849.5 419v4M850.5 420v4M851.5 420v4M852.5 419v4M853.5 421v3M854.5 419v4M855.5 421v4M856.5 421v2M857.5 421v3M858.5 419v4M859.5 421v3M860.5 421v3M861.5 420v4M862.5 421v4M863.5 422v2M864.5 421v4M865.5 420v4M866.5 420v4M867.5 420v4M868.5 422v4M869.5 421v4M870.5 422v2M871.5 422v2M872.5 421v4M873.5 423v2M874.5 421v4M875.5 422v3M876.5 421v4M877.5 422v4M878.5 422v4M879.5 422v2M880.5 422v2M881.5 422v3M882.5 422v3M883.5 423v3M884.5 423v2M885.5 422v4M886.5 422v3M887.5 422v4M888.5 421v4M889.5 422v4M890.5 422v3M891.5 420v5M892.5 423v2M893.5 422v2M894.5 421v4M895.5 422v3M896.5 422v2M897.5 422v3M898.5 423v2M899.5 421v3M900.5 423v2M901.5 421v4M902.5 421v3M903.5 423v4M904.5 422v4M905.5 422v4M906.5 423v2M907.5 423v3M908.5 422v3M909.5 422v3M910.5 422v3M911.5 422v4M912.5 422v4M913.5 423v3M914.5 420v5M915.5 421v5M916.5 424v2M917.5 421v5M918.5 422v4M919.5 422v4M920.5 423v2M921.5 421v5M922.5 423v4M923.5 423v3M924.5 422v4M925.5 423v2M926.5 422v4M927.5 421v4M928.5 422v3M929.5 423v3M930.5 423v3M931.5 423v3M932.5 423v2M933.5 421v5M934.5 421v4M935.5 423v3M936.5 423v3M937.5 422v3M938.5 422v4M939.5 422v4M940.5 422v4M941.5 422v4M942.5 422v4M943.5 422v4M944.5 422v3M945.5 422v5M946.5 422v3M947.5 422v3M948.5 422v4M949.5 422v4M950.5 422v4M951.5 423v3M952.5 422v5M953.5 422v4M954.5 422v4M955.5 424v2M956.5 423v3M957.5 423v3M958.5 423v3M959.5 421v5M960.5 423v3M961.5 423v4M962.5 423v2M963.5 422v4M964.5 423v4M965.5 423v3M966.5 422v4M967.5 423v4M968.5 422v4M969.5 423v3M970.5 423v4M971.5 422v4M972.5 423v3M973.5 423v4M974.5 423v2M975.5 423v4M976.5 422v4M977.5 423v2M978.5 422v3M979.5 423v4M980.5 422v4M981.5 422v4M982.5 423v4M983.5 422v4M984.5 423v4M985.5 424v2M986.5 423v2M987.5 423v2M988.5 423v3M989.5 422v4M990.5 421v5M991.5 423v4M992.5 423v4M993.5 423v3M994.5 423v4M995.5 422v4M996.5 423v3M997.5 424v3M998.5 423v4M999.5 423v4M1000.5 424v3M1001.5 423v3M1002.5 423v2M1003.5 424v2M1004.5 423v2M1005.5 423v4M1006.5 424v3M1007.5 423v3M1008.5 424v3M1009.5 425v2M1010.5 423v4M1011.5 423v3M1012.5 424v2M1013.5 423v3M1014.5 423v4M1015.5 424v2M1016.5 424v3M1017.5 423v4M1018.5 424v3M1019.5 423v4M1020.5 424v2M1021.5 423v3M1022.5 423v4M1023.5 423v4M1024.5 423v3M1025.5 423v4M1026.5 424v4M1027.5 424v3M1028.5 424v2M1029.5 424v2M1030.5 423v3M1031.5 423v4M1032.5 423v2M1033.5 423v4M1034.5 423v4M1035.5 423v4M1036.5 424v2M1037.5 423v4M1038.5 422v4M1039.5 424v2M1040.5 424v3M1041.5 424v2M1042.5 424v3M1043.5 424v2M1044.5 423v4M1045.5 423v4M1046.5 423v5M1047.5 423v4M1048.5 423v3M1049.5 422v5M1050.5 424v3M1051.5 424v3M1052.5 424v3M1053.5 424v3M1054.5 423v4M1055.5 424v4M1056.5 424v2M1057.5 425v2M1058.5 423v3M1059.5 423v5M1060.5 424v4M1061.5 423v5M1062.5 423v4M1063.5 424v3M1064.5 424v2M1065.5 424v3M1066.5 424v4M1067.5 423v3M1068.5 425v3M1069.5 424v2M1070.5 424v3M1071.5 424v2M1072.5 424v3M1073.5 424v3M1074.5 423v4M1075.5 423v4M1076.5 424v3M1077.5 423v5M1078.5 424v3M1079.5 425v3M1080.5 423v4M1081.5 424v4M1082.5 424v3M1083.5 424v4M1084.5 423v4M1085.5 424v4M1086.5 424v4M1087.5 423v4M1088.5 425v2M1089.5 424v4M1090.5 424v2M1091.5 424v4M1092.5 424v4M1093.5 424v2M1094.5 424v2M1095.5 424v3M1096.5 425v3M1097.5 425v3M1098.5 425v4M1099.5 424v4M1100.5 425v3M1101.5 423v4M1102.5 425v3M1103.5 424v3M1104.5 424v3M1105.5 425v2M1106.5 424v4M1107.5 425v3M1108.5 425v3M1109.5 424v3M1110.5 424v3M1111.5 424v4M1112.5 425v4M1113.5 424v4M1114.5 425v2M1115.5 425v2M1116.5 425v2M1117.5 424v4M1118.5 423v4M1119.5 424v4M1120.5 424v4M1121.5 424v3M1122.5 425v3M1123.5 425v3M1124.5 425v2M1125.5 425v4M1126.5 424v3M1127.5 424v4M1128.5 425v3M1129.5 424v4M1130.5 425v3M1131.5 425v2M1132.5 425v2M1133.5 424v3M1134.5 424v4M1135.5 425v3M1136.5 425v3M1137.5 425v4M1138.5 425v2M1139.5 426v3M1140.5 425v2M1141.5 425v3M1142.5 424v4M1143.5 424v3M1144.5 425v3M1145.5 425v2M1146.5 424v4M1147.5 425v2M1148.5 425v3M1149.5 425v3M1150.5 424v3M1151.5 425v4M1152.5 425v3M1153.5 425v3M1154.5 425v3M1155.5 424v3M1156.5 425v2M1157.5 425v2M1158.5 425v3M1159.5 424v3M1160.5 425v3M1161.5 424v4M1162.5 424v5M1163.5 425v3M1164.5 425v3M1165.5 424v4M1166.5 425v3M1167.5 425v3M1168.5 424v4M1169.5 425v3M1170.5 425v2M1171.5 424v4M1172.5 425v3M1173.5 426v2M1174.5 425v4M1175.5 425v4M1176.5 425v4M1177.5 425v4M1178.5 425v3M1179.5 426v2M1180.5 425v4M1181.5 425v3M1182.5 425v2M1183.5 425v4M1184.5 425v2M1185.5 425v3M1186.5 426v2M1187.5 424v4M1188.5 425v2M1189.5 424v4M1190.5 424v4M1191.5 425v3M1192.5 425v3M1193.5 426v2M1194.5 425v3M1195.5 425v3M1196.5 425v3M1197.5 425v3M1198.5 425v3M1199.5 426v3M1200.5 425v2M1201.5 425v4M1202.5 425v3M1203.5 426v3M1204.5 426v3M1205.5 425v4M1206.5 426v3M1207.5 426v2M1208.5 425v4M1209.5 424v4M1210.5 425v4M1211.5 425v3M1212.5 426v2M1213.5 425v3M1214.5 426v2M1215.5 425v4M1216.5 425v3M1217.5 425v4M1218.5 426v2M1219.5 426v3M1220.5 425v3M1221.5 426v3M1222.5 426v2M1223.5 425v3M1224.5 426v2M1225.5 424v5M1226.5 426v2M1227.5 427v3M1228.5 425v3M1229.5 424v4M1230.5 426v2M1231.5 426v2M1232.5 426v3M1233.5 426v3M1234.5 425v4M1235.5 425v3M1236.5 425v4M1237.5 426v3M1238.5 426v3M1239.5 426v3M1240.5 426v3M1241.5 426v3M1242.5 426v4M1243.5 426v4M1244.5 425v4M1245.5 426v2M1246.5 427v2M1247.5 426v3M1248.5 425v4M1249.5 425v4M1250.5 425v4M1251.5 425v4M1252.5 425v3M1253.5 425v4M1254.5 426v3M1255.5 426v3M1256.5 425v4M1257.5 426v3M1258.5 427v3M1259.5 426v3M1260.5 425v4M1261.5 427v3M1262.5 426v3M1263.5 426v3M1264.5 426v3M1265.5 427v2M1266.5 426v3M1267.5 426v3" stroke="#e4ffe4" stroke-width="1" fill="none"/>
<path d="M69 4h1v18h-1zM69 28h1v18h-1zM69 52h1v18h-1zM69 76h1v18h-1zM69 100h1v18h-1zM69 124h1v18h-1zM69 148h1v18h-1zM69 172h1v18h-1zM69 196h1v18h-1zM69 220h1v18h-1zM69 244h1v18h-1zM69 268h1v18h-1zM69 292h1v18h-1zM69 316h1v18h-1zM69 340h1v18h-1zM69 364h1v18h-1zM69 388h1v18h-1zM69 412h1v18h-1zM69 436h1v18h-1zM69 460h1v18h-1zM69 484h1v18h-1zM69 508h1v18h-1zM1268 4h1v9h-1zM1268 19h1v3h-1zM1268 28h1v9h-1zM1268 43h1v3h-1zM1268 52h1v9h-1zM1268 67h1v3h-1zM1268 76h1v9h-1zM1268 91h1v3h-1zM1268 100h1v9h-1zM1268 115h1v3h-1zM1268 124h1v9h-1zM1268 139h1v3h-1zM1268 148h1v9h-1zM1268 163h1v3h-1zM1268 172h1v9h-1zM1268 187h1v3h-1zM1268 196h1v9h-1zM1268 211h1v3h-1zM1268 220h1v9h-1zM1268 235h1v3h-1zM1268 244h1v9h-1zM1268 259h1v3h-1zM1268 268h1v9h-1zM1268 283h1v3h-1zM1268 292h1v9h-1zM1268 307h1v3h-1zM1268 316h1v9h-1zM1268 331h1v3h-1zM1268 340h1v9h-1zM1268 355h1v3h-1zM1268 364h1v9h-1zM1268 379h1v3h-1zM1268 388h1v9h-1zM1268 403h1v3h-1zM1268 412h1v9h-1zM1268 427h1v3h-1zM1268 436h1v9h-1zM1268 451h1v3h-1zM1268 460h1v9h-1zM1268 475h1v3h-1zM1268 484h1v9h-1zM1268 499h1v3h-1zM1268 508h1v9h-1zM1268 523h1v3h-1z" fill="#ffffff"/>
</g>
<text x="64.5" y="17" font-size="12" fill="#ffff00" text-anchor="end">8.05 A</text>
<text x="64.5" y="77" font-size="12" fill="#ffff00" text-anchor="end">6.05 A</text>
<text x="64.5" y="145" font-size="12" fill="#ffff00" text-anchor="end">4.05 A</text>
<text x="64.5" y="212" font-size="12" fill="#ffff00" text-anchor="end">2.05 A</text>
<text x="64.5" y="280" font-size="12" fill="#ffff00" text-anchor="end">50 mA</text>
<text x="64.5" y="347" font-size="12" fill="#ffff00" text-anchor="end">-1.95 A</text>
<text x="64.5" y="415" font-size="12" fill="#ffff00" text-anchor="end">-3.95 A</text>
<text x="64.5" y="482" font-size="12" fill="#ffff00" text-anchor="end">-5.95 A</text>
<text x="64.5" y="542" font-size="12" fill="#ffff00" text-anchor="end">-7.95 A</text>
<text x="69" y="559" font-size="12" fill="#ffff00">-5 s</text>
<text x="188.9" y="559" font-size="12" fill="#ffff00" text-anchor="middle">-4 s</text>
<text x="308.8" y="559" font-size="12" fill="#ffff00" text-anchor="middle">-3 s</text>
<text x="428.7" y="559" font-size="12" fill="#ffff00" text-anchor="middle">-2 s</text>
<text x="548.6" y="559" font-size="12" fill="#ffff00" text-anchor="middle">-1 s</text>
<text x="668.5" y="559" font-size="12" fill="#ffff00" text-anchor="middle">0 s</text>
<text x="788.4" y="559" font-size="12" fill="#ffff00" text-anchor="middle">1 s</text>
<text x="908.3" y="559" font-size="12" fill="#ffff00" text-anchor="middle">2 s</text>
<text x="1028.2" y="559" font-size="12" fill="#ffff00" text-anchor="middle">3 s</text>
<text x="1148.1" y="559" font-size="12" fill="#ffff00" text-anchor="middle">4 s</text>
<text x="1269" y="559" font-size="12" fill="#ffff00" text-anchor="end">5 s</text>
<rect x="2" y="592" width="1261" height="15" fill="#1e1e1e"/>
<rect x="2" y="591" width="1261" height="1" fill="#6a6a6a"/>
<text x="4" y="589" font-size="13" fill="#fff" font-weight="bold">Measure</text>
<text x="4" y="605" font-size="13" fill="#fff">value</text>
<text x="4" y="620" font-size="13" fill="#fff">status</text>
<text x="195" y="589" font-size="13" fill="#fff" text-anchor="end">P1:max(C1)</text>
<text x="195" y="605" font-size="13" fill="#fff" text-anchor="end">2.19 A</text>
<text x="292" y="589" font-size="13" fill="#fff" text-anchor="end">P2:pkpk(C4)</text>
<text x="292" y="605" font-size="13" fill="#fff" text-anchor="end">3.796 V</text>
<text x="389" y="589" font-size="13" fill="#fff" text-anchor="end">P3:mean(C5)</text>
<text x="389" y="605" font-size="13" fill="#fff" text-anchor="end">381 mA</text>
<text x="486" y="589" font-size="13" fill="#fff" text-anchor="end">P4:min(C4)</text>
<text x="486" y="605" font-size="13" fill="#fff" text-anchor="end">-68 mV</text>
<text x="583" y="589" font-size="13" fill="#fff" text-anchor="end">P5:max(C4)</text>
<text x="583" y="605" font-size="13" fill="#fff" text-anchor="end">3.73 V</text>
<text x="680" y="589" font-size="13" fill="#fff" text-anchor="end">P6:rms(C1)</text>
<text x="680" y="605" font-size="13" fill="#fff" text-anchor="end">929 mA</text>
<text x="777" y="589" font-size="13" fill="#fff" text-anchor="end">P7:rms(C5)</text>
<text x="777" y="605" font-size="13" fill="#fff" text-anchor="end">425 mA</text>
<text x="874" y="589" font-size="13" fill="#fff" text-anchor="end">P8:freq(C1)</text>
<text x="874" y="605" font-size="13" fill="#fff" text-anchor="end">46.866038 Hz</text>
<text x="971" y="589" font-size="13" fill="#5a5a5a" text-anchor="end">P9:- - -</text>
<text x="1068" y="589" font-size="13" fill="#5a5a5a" text-anchor="end">P10:freq(C5)</text>
<text x="1165" y="589" font-size="13" fill="#5a5a5a" text-anchor="end">P11:- - -</text>
<text x="1262" y="589" font-size="13" fill="#5a5a5a" text-anchor="end">P12:- - -</text>
<path d="M184.5 615l3.3 4.3l6.8 -7.8" stroke="#00e000" stroke-width="2.6" fill="none"/>
<path d="M281.5 615l3.3 4.3l6.8 -7.8" stroke="#00e000" stroke-width="2.6" fill="none"/>
<path d="M378.5 615l3.3 4.3l6.8 -7.8" stroke="#00e000" stroke-width="2.6" fill="none"/>
<path d="M475.5 615l3.3 4.3l6.8 -7.8" stroke="#00e000" stroke-width="2.6" fill="none"/>
<path d="M572.5 615l3.3 4.3l6.8 -7.8" stroke="#00e000" stroke-width="2.6" fill="none"/>
<path d="M669.5 615l3.3 4.3l6.8 -7.8" stroke="#00e000" stroke-width="2.6" fill="none"/>
<path d="M766.5 615l3.3 4.3l6.8 -7.8" stroke="#00e000" stroke-width="2.6" fill="none"/>
<path d="M863.5 610.5l9 9M872.5 610.5l-9 9" stroke="#f0f000" stroke-width="1.3" fill="none"/>
<path d="M866 617.5h1.5v-5.5h3v5.5h1.5" stroke="#fff" stroke-width="1" fill="none"/>
<rect x="2" y="623" width="99" height="84" fill="#2090f0"/>
<rect x="4" y="640" width="95" height="65" fill="#2c4c66"/>
<rect x="3" y="624" width="97" height="16" fill="#ffff00"/>
<text transform="translate(6.5,637) scale(1,1.12)" font-size="12.5" fill="#000">C1</text>
<rect x="49" y="625" width="26" height="14" fill="#000" rx="2.5"/>
<text transform="translate(62.0,635) scale(1,1.25)" font-size="10.2" fill="#ffff00" text-anchor="middle">BwL</text>
<rect x="76" y="625" width="21" height="14" fill="#000" rx="2.5"/>
<text transform="translate(86.5,635) scale(1,1.25)" font-size="10.2" fill="#ffff00" text-anchor="middle">DC</text>
<text x="99" y="654" font-size="13" fill="#fff" text-anchor="end">2.00 A/div</text>
<text x="99" y="669" font-size="13" fill="#fff" text-anchor="end">-50.0 mA</text>
<text x="99" y="688" font-size="13" fill="#fff" text-anchor="end">1.1308 A</text>
<text x="99" y="703" font-size="13" fill="#fff" text-anchor="end">311.5 mA</text>
<path d="M9.5 679v11.5M7.2 688l2.3 3l2.3 -3M9.5 694.5v11M7.2 697.5l2.3 -3l2.3 3" stroke="#f0f0e0" stroke-width="1" fill="none"/>
<rect x="103" y="624" width="98" height="83" fill="#444444"/>
<rect x="103" y="624" width="98" height="16" fill="#00ffff"/>
<text transform="translate(106.5,637) scale(1,1.12)" font-size="12.5" fill="#000">C3</text>
<rect x="134" y="625" width="26" height="14" fill="#000" rx="2.5"/>
<text transform="translate(147.0,635) scale(1,1.25)" font-size="10.2" fill="#00ffff" text-anchor="middle">BwL</text>
<rect x="161" y="625" width="36" height="14" fill="#000" rx="2.5"/>
<text transform="translate(179.0,635) scale(1,1.25)" font-size="10.2" fill="#00ffff" text-anchor="middle">DC1M</text>
<text x="199" y="654" font-size="13" fill="#fff" text-anchor="end">5.00 V/div</text>
<text x="199" y="669" font-size="13" fill="#fff" text-anchor="end">16.340 V</text>
<text x="199" y="688" font-size="13" fill="#fff" text-anchor="end">-6 mV</text>
<text x="199" y="703" font-size="13" fill="#fff" text-anchor="end">-26 mV</text>
<path d="M109.5 679v11.5M107.2 688l2.3 3l2.3 -3M109.5 694.5v11M107.2 697.5l2.3 -3l2.3 3" stroke="#f0f0e0" stroke-width="1" fill="none"/>
<rect x="203" y="624" width="98" height="83" fill="#444444"/>
<rect x="203" y="624" width="98" height="16" fill="#00c800"/>
<text transform="translate(206.5,637) scale(1,1.12)" font-size="12.5" fill="#000">C4</text>
<rect x="234" y="625" width="26" height="14" fill="#000" rx="2.5"/>
<text transform="translate(247.0,635) scale(1,1.25)" font-size="10.2" fill="#00c800" text-anchor="middle">BwL</text>
<rect x="261" y="625" width="36" height="14" fill="#000" rx="2.5"/>
<text transform="translate(279.0,635) scale(1,1.25)" font-size="10.2" fill="#00c800" text-anchor="middle">DC1M</text>
<text x="299" y="654" font-size="13" fill="#fff" text-anchor="end">2.00 V/div</text>
<text x="299" y="669" font-size="13" fill="#fff" text-anchor="end">2.9000 V</text>
<text x="299" y="688" font-size="13" fill="#fff" text-anchor="end">531.5 mV</text>
<text x="299" y="703" font-size="13" fill="#fff" text-anchor="end">695.0 mV</text>
<path d="M209.5 679v11.5M207.2 688l2.3 3l2.3 -3M209.5 694.5v11M207.2 697.5l2.3 -3l2.3 3" stroke="#f0f0e0" stroke-width="1" fill="none"/>
<rect x="303" y="624" width="98" height="83" fill="#444444"/>
<rect x="303" y="624" width="98" height="16" fill="#ccffcc"/>
<text transform="translate(306.5,637) scale(1,1.12)" font-size="12.5" fill="#000">C5</text>
<rect x="349" y="625" width="26" height="14" fill="#000" rx="2.5"/>
<text transform="translate(362.0,635) scale(1,1.25)" font-size="10.2" fill="#ccffcc" text-anchor="middle">BwL</text>
<rect x="376" y="625" width="21" height="14" fill="#000" rx="2.5"/>
<text transform="translate(386.5,635) scale(1,1.25)" font-size="10.2" fill="#ccffcc" text-anchor="middle">DC</text>
<text x="399" y="654" font-size="13" fill="#fff" text-anchor="end">2.00 A/div</text>
<text x="399" y="669" font-size="13" fill="#fff" text-anchor="end">-4.7500 A</text>
<text x="399" y="688" font-size="13" fill="#fff" text-anchor="end">210.3 mA</text>
<text x="399" y="703" font-size="13" fill="#fff" text-anchor="end">259.2 mA</text>
<path d="M309.5 679v11.5M307.2 688l2.3 3l2.3 -3M309.5 694.5v11M307.2 697.5l2.3 -3l2.3 3" stroke="#f0f0e0" stroke-width="1" fill="none"/>
<rect x="403.5" y="624.5" width="96" height="82" fill="none" stroke="#fff" stroke-width="1" stroke-dasharray="3 2"/>
<path d="M443 665h14M450 658v14" stroke="#fff" stroke-width="2" fill="none"/>
<rect x="1002" y="624" width="57" height="49" fill="#444444"/>
<rect x="1003" y="624" width="56" height="15" fill="#00ff00"/>
<text x="1031" y="637" font-size="13" fill="#000" text-anchor="middle" font-weight="bold">HD</text>
<text x="1031" y="660" font-size="13" fill="#fff" text-anchor="middle">12 Bits</text>
<rect x="1062" y="624" width="112" height="49" fill="#444444"/>
<rect x="1063" y="624" width="110" height="15" fill="#ffffff"/>
<text x="1065" y="637" font-size="13" fill="#000">Timebase</text>
<text x="1172" y="637" font-size="13" fill="#000" text-anchor="end">0.00 s</text>
<text x="1065" y="654" font-size="13" fill="#fff">Roll</text>
<text x="1172" y="654" font-size="13" fill="#fff" text-anchor="end">1.00 s/div</text>
<text x="1065" y="668" font-size="13" fill="#fff">50 MS</text>
<text x="1172" y="668" font-size="13" fill="#fff" text-anchor="end">5 MS/s</text>
<rect x="1177" y="624" width="97" height="49" fill="#444444"/>
<rect x="1178" y="624" width="95" height="15" fill="#ffffff"/>
<text x="1180" y="637" font-size="13" fill="#000">Trigger</text>
<rect x="1228" y="625" width="19" height="13" fill="#000" rx="2.5"/>
<text transform="translate(1237.5,635) scale(1,1.2)" font-size="10.5" fill="#fff" text-anchor="middle">C3</text>
<rect x="1250" y="625" width="22" height="13" fill="#000" rx="2.5"/>
<text transform="translate(1261.0,635) scale(1,1.2)" font-size="10.5" fill="#fff" text-anchor="middle">DC</text>
<text x="1180" y="654" font-size="13" fill="#fff">Stop</text>
<text x="1271" y="654" font-size="13" fill="#fff" text-anchor="end">2.50 V</text>
<text x="1180" y="668" font-size="13" fill="#fff">Edge</text>
<text x="1271" y="668" font-size="13" fill="#fff" text-anchor="end">Positive</text>
<text x="1008" y="686" font-size="13" fill="#fff">X1=</text>
<text x="1008" y="701" font-size="13" fill="#fff">X2=</text>
<text x="1115" y="686" font-size="13" fill="#fff" text-anchor="end">4.9999998 s</text>
<text x="1115" y="701" font-size="13" fill="#fff" text-anchor="end">-5.0000000 s</text>
<text x="1160" y="686" font-size="13" fill="#fff" text-anchor="end">ΔX=</text>
<text x="1160" y="701" font-size="13" fill="#fff" text-anchor="end">1/ΔX=</text>
<text x="1273" y="686" font-size="13" fill="#fff" text-anchor="end">-9.9999998 s</text>
<text x="1273" y="701" font-size="13" fill="#fff" text-anchor="end">-100.000002 mHz</text>
<rect x="0" y="708" width="1281" height="2" fill="#505050"/>
<rect x="1279" y="0" width="2" height="393" fill="#121212"/>
<path d="M1279 393h2v317h-2z" fill="#a8a8a8"/>
<rect x="1279" y="0" width="2" height="6" fill="#9a9a9a"/>
<path d="M1279 94h2v1h-2zM1279 96h2v1h-2zM1279 99h2v1h-2z" fill="#b0b0b0"/>
<path d="M1279 238h2v1h-2zM1279 240h2v1h-2zM1279 243h2v1h-2z" fill="#b0b0b0"/>
<path d="M1279 382h2v1h-2zM1279 384h2v1h-2zM1279 387h2v1h-2z" fill="#b0b0b0"/>
<text x="75" y="37" font-size="11" fill="#ffffff">torque_trigger</text>
<rect x="75" y="39" width="70" height="1" fill="#ffffff"/>
<path d="M107 39.5L70 52" stroke="#ffffff" stroke-width="1" fill="none"/>
<text x="571" y="68" font-size="11" fill="#ffffff">Torque_Sensor</text>
<rect x="571" y="70" width="78" height="1" fill="#ffffff"/>
<path d="M649 69.5L661 66" stroke="#ffffff" stroke-width="1" fill="none"/>
<text x="494.5" y="311" font-size="11" fill="#ffffff">AOUT1_CURRENT</text>
<rect x="494" y="313" width="98" height="1" fill="#ffffff"/>
<path d="M548 313.5L604 328.5" stroke="#ffffff" stroke-width="1" fill="none"/>
<text x="383" y="410" font-size="11" fill="#ffffff">VM_Current</text>
<rect x="383" y="413" width="61" height="1" fill="#ffffff"/>
<path d="M415 413.5L455 421.5" stroke="#ffffff" stroke-width="1" fill="none"/>
<text x="56" y="51" font-size="9.5" fill="#00e0f0">C3</text>
<path d="M59 53h10v2h-10zM59 55h1v2h-1z" fill="#00e0f0"/>
<text x="56" y="172.5" font-size="9.5" fill="#00b800">C4</text>
<path d="M59 175h10v2h-10zM59 177h1v2h-1z" fill="#00b800"/>
<text x="56" y="432" font-size="9.5" fill="#d0f0d0">C5</text>
<path d="M59 435h10v2h-10zM59 437h1v2h-1z" fill="#d0f0d0"/>
<rect x="59" y="275" width="10" height="2" fill="#ffff00"/>
<rect x="53" y="263" width="16" height="11" rx="2" fill="#ffff00"/>
<text x="56.5" y="272" font-size="9.5" fill="#000">C1</text>
<path d="M69 52L76 59H71V67H69Z" fill="#ffffff"/>
<path d="M69 151L76 158H71V166H69Z" fill="#ffffff" stroke="#000" stroke-width="0.8"/>
<path d="M69 263L76 270H71V278H69Z" fill="#ffffff" stroke="#000" stroke-width="0.8"/>
<path d="M69 423L76 430H71V438H69Z" fill="#ffffff" stroke="#000" stroke-width="0.8"/>
<path d="M1268.5 53L1262 47H1266V38H1268.5Z" fill="#ffffff"/>
<path d="M1268.5 158L1262 152H1266V143H1268.5Z" fill="#ffffff"/>
<path d="M1268.5 236L1262 230H1266V221H1268.5Z" fill="#ffffff"/>
<path d="M1268.5 428L1262 422H1266V413H1268.5Z" fill="#ffffff"/>
<path d="M1270 20.5L1276 17V24Z" fill="#00e8f0"/>
<path d="M669.5 545.5L665.5 553H673.5Z" fill="#00e8f0"/>
<text x="73" y="541" font-size="10" fill="#fff" font-weight="bold">C5</text>
<text x="1252" y="541" font-size="10" fill="#fff" font-weight="bold">C5</text>
</svg>
</body></html>
